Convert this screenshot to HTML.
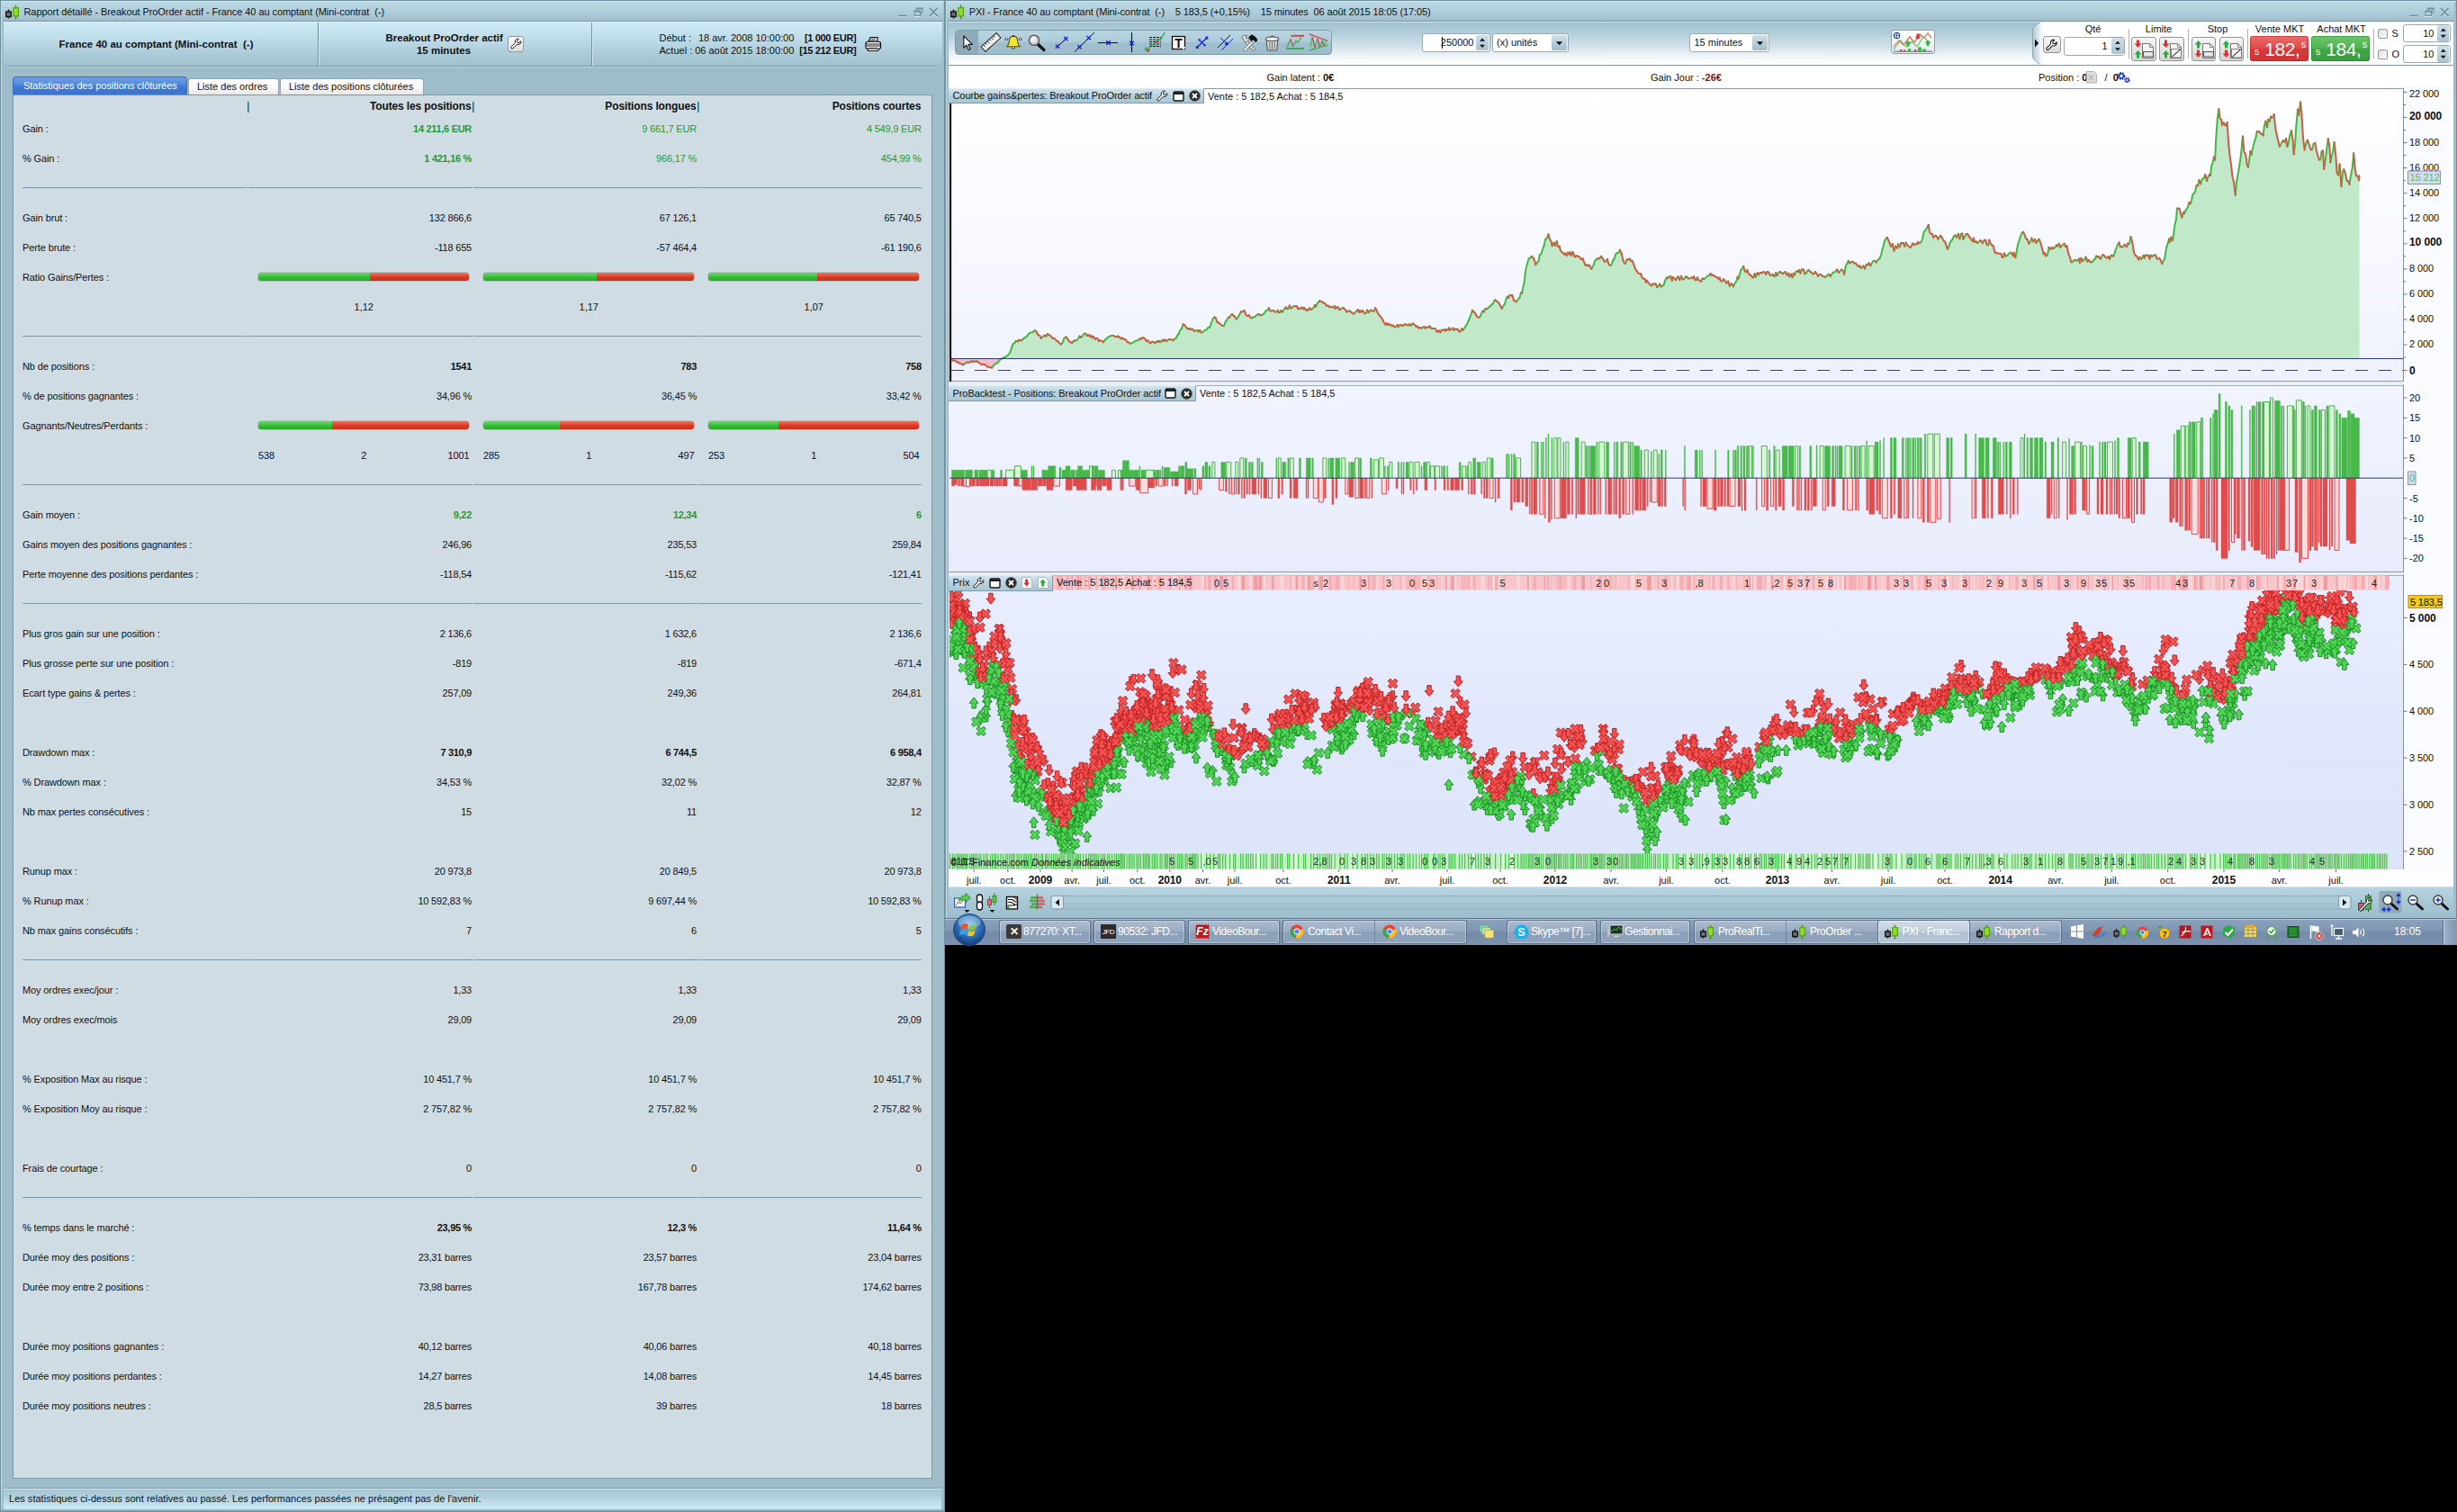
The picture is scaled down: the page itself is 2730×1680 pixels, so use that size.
<!DOCTYPE html>
<html lang="fr"><head><meta charset="utf-8"><title>Rapport détaillé - Breakout ProOrder actif</title>
<style>
html,body{margin:0;padding:0;background:#000;}
#root{position:relative;width:2730px;height:1680px;overflow:hidden;background:#000;font-family:"Liberation Sans",sans-serif;font-size:11px;color:#111;}
#root div,#root svg{position:absolute;}
#root svg{overflow:visible;}
#root svg text{font-family:"Liberation Sans",sans-serif;}
.t{white-space:nowrap;}
</style></head><body><div id="root">
<div style="left:0px;top:0px;width:1050px;height:1680px;background:#9fbccb;"></div>
<div style="left:0px;top:0px;width:1050px;height:1px;background:#71909e;"></div>
<div style="left:0px;top:0px;width:1px;height:1680px;background:#71909e;"></div>
<div style="left:1049px;top:0px;width:1px;height:1680px;background:#6f8d9b;"></div>
<div style="left:1px;top:1px;width:1048px;height:1px;background:#d5e8f0;"></div>
<div style="left:1px;top:1px;width:1px;height:1678px;background:#c2dae5;"></div>
<div style="left:2px;top:2px;width:1046px;height:21px;background:linear-gradient(#bcd8e5,#afccda 55%,#9fbdcb);"></div>
<div style="left:4px;top:23px;width:1043px;height:1px;background:#7997a5;"></div>
<svg style="left:5.5px;top:4.5px" width="18" height="18" viewBox="0 0 18 18"><path d="M3.5 5.5v10" stroke="#111" stroke-width="1.4"/><rect x="0.8" y="8" width="5.4" height="5.6" fill="#6e6e78" stroke="#111" stroke-width="1.4"/><path d="M11.5 0.5v16" stroke="#4c8f12" stroke-width="1.3"/><rect x="8.8" y="3.6" width="5.6" height="9.2" fill="#8fe02b" stroke="#5aa516" stroke-width="1.3"/></svg>
<div class="t" style="top:5.7px;line-height:14px;left:26.5px;letter-spacing:-0.07px;white-space:pre;">Rapport détaillé - Breakout ProOrder actif - France 40 au comptant (Mini-contrat  (-)</div>
<svg style="left:997.5px;top:7.5px" width="48" height="14" viewBox="0 0 48 14"><path d="M0.5 9.5h9" stroke="#e4f1f7" stroke-width="1.2" transform="translate(0,1)"/><path d="M0.5 9.5h9" stroke="#6d8d9c" stroke-width="1.6"/><path d="M20.5 1h6.5v5.5M18 4h6.5v5.5h-6.5z" fill="none" stroke="#e4f1f7" stroke-width="1.2" transform="translate(0,1)"/><path d="M20.5 3.2v-2.2h6.5v5.5h-2M18 4h6.5v5.5h-6.5z M18 5h6.5 M20.5 2h6.5" fill="none" stroke="#6d8d9c" stroke-width="1.2"/><path d="M35 1l8.5 9M43.5 1l-8.5 9" stroke="#e4f1f7" stroke-width="1.4" transform="translate(0,1)"/><path d="M35 1l8.5 9M43.5 1l-8.5 9" stroke="#6d8d9c" stroke-width="1.8"/></svg>
<div style="left:4px;top:24px;width:1043px;height:49.5px;background:linear-gradient(#cfebf8,#c2dfec 30%,#a8c8d6 80%,#a0bfcd);"></div>
<div style="left:4px;top:24px;width:1043px;height:1px;background:#d9f1fb;"></div>
<div style="left:353px;top:25px;width:1px;height:48px;background:#7392a1;"></div>
<div style="left:354px;top:25px;width:1px;height:48px;background:#d2ecf7;"></div>
<div style="left:657px;top:25px;width:1px;height:48px;background:#7392a1;"></div>
<div style="left:658px;top:25px;width:1px;height:48px;background:#d2ecf7;"></div>
<div style="left:7px;top:73px;width:1035px;height:1px;background:#7e9dab;"></div>
<div style="left:7px;top:74px;width:1035px;height:1px;background:#b9d7e3;"></div>
<div class="t" style="top:42.0px;line-height:14px;font-size:11.5px;font-weight:bold;left:-126.5px;width:600px;text-align:center;white-space:pre;">France 40 au comptant (Mini-contrat  (-)</div>
<div class="t" style="top:35.0px;line-height:14px;font-size:11.5px;font-weight:bold;left:193.7px;width:600px;text-align:center;">Breakout ProOrder actif</div>
<div class="t" style="top:49.0px;line-height:14px;font-size:11.5px;font-weight:bold;left:193px;width:600px;text-align:center;">15 minutes</div>
<div style="left:564px;top:39.5px;width:18px;height:18px;background:linear-gradient(#ffffff,#dcdcdc);border:1px solid #8b9aa2;border-radius:3px;box-sizing:border-box;"></div>
<svg style="left:566.5px;top:42px" width="13" height="13" viewBox="0 0 16 16"><path d="M10.2 1.2a4 4 0 0 0-3.4 5.6L1.4 12.2a1.5 1.5 0 0 0 2.2 2.2l5.5-5.4a4 4 0 0 0 5.6-3.5l-0.3-0.9-2.4 2.3-2.2-0.6-0.6-2.2 2.4-2.4z" fill="#fff" stroke="#111" stroke-width="1.2" stroke-linejoin="round"/></svg>
<div class="t" style="top:35.0px;line-height:14px;left:732.5px;">Début :</div>
<div class="t" style="top:35.0px;line-height:14px;right:1847.7px;">18 avr. 2008 10:00:00</div>
<div class="t" style="top:35.0px;line-height:14px;font-weight:bold;right:1778.7px;letter-spacing:-0.35px;">[1 000 EUR]</div>
<div class="t" style="top:49.0px;line-height:14px;left:732.5px;">Actuel :</div>
<div class="t" style="top:49.0px;line-height:14px;right:1847.7px;">06 août 2015 18:00:00</div>
<div class="t" style="top:49.0px;line-height:14px;font-weight:bold;right:1778.7px;letter-spacing:-0.35px;">[15 212 EUR]</div>
<svg style="left:960px;top:40px" width="20" height="18" viewBox="0 0 20 18"><path d="M5.5 6.5l1.2-5h8.6l-1.2 5z" fill="#fff" stroke="#111" stroke-width="1.1"/><path d="M7.5 3h5.5M7 4.8h5.5" stroke="#111" stroke-width="0.8"/><path d="M2 7.2l2-1h12.5l2 1v6l-2.2 1.5H4L2 13.2z" fill="#f2f2f2" stroke="#111" stroke-width="1.2" stroke-linejoin="round"/><path d="M2.2 9h16M2.2 11h16M4.5 13.4h11" stroke="#111" stroke-width="0.9"/><path d="M4.5 14.5l-0.3 2h11.6l0.2-2" fill="#fff" stroke="#111" stroke-width="1"/></svg>
<div style="left:14px;top:85px;width:193.5px;height:21px;background:linear-gradient(#6f9fe6,#4f86dc 45%,#3f78d3 50%,#3b74d0);border-radius:4px 4px 0 0;border:1px solid #3a6cc0;border-bottom:none;box-sizing:border-box;"></div>
<div class="t" style="top:88.0px;line-height:14px;color:#fff;left:26px;letter-spacing:-0.03px;">Statistiques des positions clôturées</div>
<div style="left:208.5px;top:87px;width:101px;height:18.5px;background:linear-gradient(#ffffff,#f8f8f8 50%,#e6e6e6);border-radius:3px 3px 0 0;border:1px solid #93a5ad;border-bottom:none;box-sizing:border-box;"></div>
<div class="t" style="top:89.0px;line-height:14px;left:219px;">Liste des ordres</div>
<div style="left:311px;top:87px;width:159.5px;height:18.5px;background:linear-gradient(#ffffff,#f8f8f8 50%,#e6e6e6);border-radius:3px 3px 0 0;border:1px solid #93a5ad;border-bottom:none;box-sizing:border-box;"></div>
<div class="t" style="top:89.0px;line-height:14px;left:321px;">Liste des positions clôturées</div>
<div style="left:14px;top:105px;width:1022px;height:1538px;background:#cfdce3;border:1px solid #7997a5;box-sizing:border-box;"></div>
<div class="t" style="top:111.3px;line-height:14px;font-size:12px;left:274.2px;">|</div>
<div class="t" style="top:111.3px;line-height:14px;font-size:12px;font-weight:bold;right:2206.5px;letter-spacing:-0.13px;">Toutes les positions</div>
<div class="t" style="top:111.3px;line-height:14px;font-size:12px;left:524.3px;">|</div>
<div class="t" style="top:111.3px;line-height:14px;font-size:12px;font-weight:bold;right:1956.5px;letter-spacing:-0.13px;">Positions longues</div>
<div class="t" style="top:111.3px;line-height:14px;font-size:12px;left:774.3px;">|</div>
<div class="t" style="top:111.3px;line-height:14px;font-size:12px;font-weight:bold;right:1706.8px;letter-spacing:-0.13px;">Positions courtes</div>
<div class="t" style="top:135.9px;line-height:14px;left:25px;letter-spacing:-0.12px;">Gain :</div>
<div class="t" style="top:135.9px;line-height:14px;font-weight:bold;color:#219b34;right:2206px;letter-spacing:-0.3px;">14 211,6 EUR</div>
<div class="t" style="top:135.9px;line-height:14px;color:#219b34;right:1956px;letter-spacing:-0.2px;">9 661,7 EUR</div>
<div class="t" style="top:135.9px;line-height:14px;color:#219b34;right:1706.3px;letter-spacing:-0.2px;">4 549,9 EUR</div>
<div class="t" style="top:168.9px;line-height:14px;left:25px;letter-spacing:-0.12px;">% Gain :</div>
<div class="t" style="top:168.9px;line-height:14px;font-weight:bold;color:#219b34;right:2206px;letter-spacing:-0.3px;">1 421,16 %</div>
<div class="t" style="top:168.9px;line-height:14px;color:#219b34;right:1956px;letter-spacing:-0.2px;">966,17 %</div>
<div class="t" style="top:168.9px;line-height:14px;color:#219b34;right:1706.3px;letter-spacing:-0.2px;">454,99 %</div>
<div class="t" style="top:234.9px;line-height:14px;left:25px;letter-spacing:-0.12px;">Gain brut :</div>
<div class="t" style="top:234.9px;line-height:14px;right:2206px;letter-spacing:-0.2px;">132 866,6</div>
<div class="t" style="top:234.9px;line-height:14px;right:1956px;letter-spacing:-0.2px;">67 126,1</div>
<div class="t" style="top:234.9px;line-height:14px;right:1706.3px;letter-spacing:-0.2px;">65 740,5</div>
<div class="t" style="top:267.9px;line-height:14px;left:25px;letter-spacing:-0.12px;">Perte brute :</div>
<div class="t" style="top:267.9px;line-height:14px;right:2206px;letter-spacing:-0.2px;">-118 655</div>
<div class="t" style="top:267.9px;line-height:14px;right:1956px;letter-spacing:-0.2px;">-57 464,4</div>
<div class="t" style="top:267.9px;line-height:14px;right:1706.3px;letter-spacing:-0.2px;">-61 190,6</div>
<div class="t" style="top:300.9px;line-height:14px;left:25px;letter-spacing:-0.12px;">Ratio Gains/Pertes :</div>
<div class="t" style="top:399.9px;line-height:14px;left:25px;letter-spacing:-0.12px;">Nb de positions :</div>
<div class="t" style="top:399.9px;line-height:14px;font-weight:bold;right:2206px;letter-spacing:-0.3px;">1541</div>
<div class="t" style="top:399.9px;line-height:14px;font-weight:bold;right:1956px;letter-spacing:-0.3px;">783</div>
<div class="t" style="top:399.9px;line-height:14px;font-weight:bold;right:1706.3px;letter-spacing:-0.3px;">758</div>
<div class="t" style="top:432.9px;line-height:14px;left:25px;letter-spacing:-0.12px;">% de positions gagnantes :</div>
<div class="t" style="top:432.9px;line-height:14px;right:2206px;letter-spacing:-0.2px;">34,96 %</div>
<div class="t" style="top:432.9px;line-height:14px;right:1956px;letter-spacing:-0.2px;">36,45 %</div>
<div class="t" style="top:432.9px;line-height:14px;right:1706.3px;letter-spacing:-0.2px;">33,42 %</div>
<div class="t" style="top:465.9px;line-height:14px;left:25px;letter-spacing:-0.12px;">Gagnants/Neutres/Perdants :</div>
<div class="t" style="top:564.9px;line-height:14px;left:25px;letter-spacing:-0.12px;">Gain moyen :</div>
<div class="t" style="top:564.9px;line-height:14px;font-weight:bold;color:#219b34;right:2206px;letter-spacing:-0.3px;">9,22</div>
<div class="t" style="top:564.9px;line-height:14px;font-weight:bold;color:#219b34;right:1956px;letter-spacing:-0.3px;">12,34</div>
<div class="t" style="top:564.9px;line-height:14px;font-weight:bold;color:#219b34;right:1706.3px;letter-spacing:-0.3px;">6</div>
<div class="t" style="top:597.9px;line-height:14px;left:25px;letter-spacing:-0.12px;">Gains moyen des positions gagnantes :</div>
<div class="t" style="top:597.9px;line-height:14px;right:2206px;letter-spacing:-0.2px;">246,96</div>
<div class="t" style="top:597.9px;line-height:14px;right:1956px;letter-spacing:-0.2px;">235,53</div>
<div class="t" style="top:597.9px;line-height:14px;right:1706.3px;letter-spacing:-0.2px;">259,84</div>
<div class="t" style="top:630.9px;line-height:14px;left:25px;letter-spacing:-0.12px;">Perte moyenne des positions perdantes :</div>
<div class="t" style="top:630.9px;line-height:14px;right:2206px;letter-spacing:-0.2px;">-118,54</div>
<div class="t" style="top:630.9px;line-height:14px;right:1956px;letter-spacing:-0.2px;">-115,62</div>
<div class="t" style="top:630.9px;line-height:14px;right:1706.3px;letter-spacing:-0.2px;">-121,41</div>
<div class="t" style="top:696.9px;line-height:14px;left:25px;letter-spacing:-0.12px;">Plus gros gain sur une position :</div>
<div class="t" style="top:696.9px;line-height:14px;right:2206px;letter-spacing:-0.2px;">2 136,6</div>
<div class="t" style="top:696.9px;line-height:14px;right:1956px;letter-spacing:-0.2px;">1 632,6</div>
<div class="t" style="top:696.9px;line-height:14px;right:1706.3px;letter-spacing:-0.2px;">2 136,6</div>
<div class="t" style="top:729.9px;line-height:14px;left:25px;letter-spacing:-0.12px;">Plus grosse perte sur une position :</div>
<div class="t" style="top:729.9px;line-height:14px;right:2206px;letter-spacing:-0.2px;">-819</div>
<div class="t" style="top:729.9px;line-height:14px;right:1956px;letter-spacing:-0.2px;">-819</div>
<div class="t" style="top:729.9px;line-height:14px;right:1706.3px;letter-spacing:-0.2px;">-671,4</div>
<div class="t" style="top:762.9px;line-height:14px;left:25px;letter-spacing:-0.12px;">Ecart type gains &amp; pertes :</div>
<div class="t" style="top:762.9px;line-height:14px;right:2206px;letter-spacing:-0.2px;">257,09</div>
<div class="t" style="top:762.9px;line-height:14px;right:1956px;letter-spacing:-0.2px;">249,36</div>
<div class="t" style="top:762.9px;line-height:14px;right:1706.3px;letter-spacing:-0.2px;">264,81</div>
<div class="t" style="top:828.9px;line-height:14px;left:25px;letter-spacing:-0.12px;">Drawdown max :</div>
<div class="t" style="top:828.9px;line-height:14px;font-weight:bold;right:2206px;letter-spacing:-0.3px;">7 310,9</div>
<div class="t" style="top:828.9px;line-height:14px;font-weight:bold;right:1956px;letter-spacing:-0.3px;">6 744,5</div>
<div class="t" style="top:828.9px;line-height:14px;font-weight:bold;right:1706.3px;letter-spacing:-0.3px;">6 958,4</div>
<div class="t" style="top:861.9px;line-height:14px;left:25px;letter-spacing:-0.12px;">% Drawdown max :</div>
<div class="t" style="top:861.9px;line-height:14px;right:2206px;letter-spacing:-0.2px;">34,53 %</div>
<div class="t" style="top:861.9px;line-height:14px;right:1956px;letter-spacing:-0.2px;">32,02 %</div>
<div class="t" style="top:861.9px;line-height:14px;right:1706.3px;letter-spacing:-0.2px;">32,87 %</div>
<div class="t" style="top:894.9px;line-height:14px;left:25px;letter-spacing:-0.12px;">Nb max pertes consécutives :</div>
<div class="t" style="top:894.9px;line-height:14px;right:2206px;letter-spacing:-0.2px;">15</div>
<div class="t" style="top:894.9px;line-height:14px;right:1956px;letter-spacing:-0.2px;">11</div>
<div class="t" style="top:894.9px;line-height:14px;right:1706.3px;letter-spacing:-0.2px;">12</div>
<div class="t" style="top:960.9px;line-height:14px;left:25px;letter-spacing:-0.12px;">Runup max :</div>
<div class="t" style="top:960.9px;line-height:14px;right:2206px;letter-spacing:-0.2px;">20 973,8</div>
<div class="t" style="top:960.9px;line-height:14px;right:1956px;letter-spacing:-0.2px;">20 849,5</div>
<div class="t" style="top:960.9px;line-height:14px;right:1706.3px;letter-spacing:-0.2px;">20 973,8</div>
<div class="t" style="top:993.9px;line-height:14px;left:25px;letter-spacing:-0.12px;">% Runup max :</div>
<div class="t" style="top:993.9px;line-height:14px;right:2206px;letter-spacing:-0.2px;">10 592,83 %</div>
<div class="t" style="top:993.9px;line-height:14px;right:1956px;letter-spacing:-0.2px;">9 697,44 %</div>
<div class="t" style="top:993.9px;line-height:14px;right:1706.3px;letter-spacing:-0.2px;">10 592,83 %</div>
<div class="t" style="top:1026.9px;line-height:14px;left:25px;letter-spacing:-0.12px;">Nb max gains consécutifs :</div>
<div class="t" style="top:1026.9px;line-height:14px;right:2206px;letter-spacing:-0.2px;">7</div>
<div class="t" style="top:1026.9px;line-height:14px;right:1956px;letter-spacing:-0.2px;">6</div>
<div class="t" style="top:1026.9px;line-height:14px;right:1706.3px;letter-spacing:-0.2px;">5</div>
<div class="t" style="top:1092.9px;line-height:14px;left:25px;letter-spacing:-0.12px;">Moy ordres exec/jour :</div>
<div class="t" style="top:1092.9px;line-height:14px;right:2206px;letter-spacing:-0.2px;">1,33</div>
<div class="t" style="top:1092.9px;line-height:14px;right:1956px;letter-spacing:-0.2px;">1,33</div>
<div class="t" style="top:1092.9px;line-height:14px;right:1706.3px;letter-spacing:-0.2px;">1,33</div>
<div class="t" style="top:1125.9px;line-height:14px;left:25px;letter-spacing:-0.12px;">Moy ordres exec/mois</div>
<div class="t" style="top:1125.9px;line-height:14px;right:2206px;letter-spacing:-0.2px;">29,09</div>
<div class="t" style="top:1125.9px;line-height:14px;right:1956px;letter-spacing:-0.2px;">29,09</div>
<div class="t" style="top:1125.9px;line-height:14px;right:1706.3px;letter-spacing:-0.2px;">29,09</div>
<div class="t" style="top:1191.9px;line-height:14px;left:25px;letter-spacing:-0.12px;">% Exposition Max au risque :</div>
<div class="t" style="top:1191.9px;line-height:14px;right:2206px;letter-spacing:-0.2px;">10 451,7 %</div>
<div class="t" style="top:1191.9px;line-height:14px;right:1956px;letter-spacing:-0.2px;">10 451,7 %</div>
<div class="t" style="top:1191.9px;line-height:14px;right:1706.3px;letter-spacing:-0.2px;">10 451,7 %</div>
<div class="t" style="top:1224.9px;line-height:14px;left:25px;letter-spacing:-0.12px;">% Exposition Moy au risque :</div>
<div class="t" style="top:1224.9px;line-height:14px;right:2206px;letter-spacing:-0.2px;">2 757,82 %</div>
<div class="t" style="top:1224.9px;line-height:14px;right:1956px;letter-spacing:-0.2px;">2 757,82 %</div>
<div class="t" style="top:1224.9px;line-height:14px;right:1706.3px;letter-spacing:-0.2px;">2 757,82 %</div>
<div class="t" style="top:1290.9px;line-height:14px;left:25px;letter-spacing:-0.12px;">Frais de courtage :</div>
<div class="t" style="top:1290.9px;line-height:14px;right:2206px;letter-spacing:-0.2px;">0</div>
<div class="t" style="top:1290.9px;line-height:14px;right:1956px;letter-spacing:-0.2px;">0</div>
<div class="t" style="top:1290.9px;line-height:14px;right:1706.3px;letter-spacing:-0.2px;">0</div>
<div class="t" style="top:1356.9px;line-height:14px;left:25px;letter-spacing:-0.12px;">% temps dans le marché :</div>
<div class="t" style="top:1356.9px;line-height:14px;font-weight:bold;right:2206px;letter-spacing:-0.3px;">23,95 %</div>
<div class="t" style="top:1356.9px;line-height:14px;font-weight:bold;right:1956px;letter-spacing:-0.3px;">12,3 %</div>
<div class="t" style="top:1356.9px;line-height:14px;font-weight:bold;right:1706.3px;letter-spacing:-0.3px;">11,64 %</div>
<div class="t" style="top:1389.9px;line-height:14px;left:25px;letter-spacing:-0.12px;">Durée moy des positions :</div>
<div class="t" style="top:1389.9px;line-height:14px;right:2206px;letter-spacing:-0.2px;">23,31 barres</div>
<div class="t" style="top:1389.9px;line-height:14px;right:1956px;letter-spacing:-0.2px;">23,57 barres</div>
<div class="t" style="top:1389.9px;line-height:14px;right:1706.3px;letter-spacing:-0.2px;">23,04 barres</div>
<div class="t" style="top:1422.9px;line-height:14px;left:25px;letter-spacing:-0.12px;">Durée moy entre 2 positions :</div>
<div class="t" style="top:1422.9px;line-height:14px;right:2206px;letter-spacing:-0.2px;">73,98 barres</div>
<div class="t" style="top:1422.9px;line-height:14px;right:1956px;letter-spacing:-0.2px;">167,78 barres</div>
<div class="t" style="top:1422.9px;line-height:14px;right:1706.3px;letter-spacing:-0.2px;">174,62 barres</div>
<div class="t" style="top:1488.9px;line-height:14px;left:25px;letter-spacing:-0.12px;">Durée moy positions gagnantes :</div>
<div class="t" style="top:1488.9px;line-height:14px;right:2206px;letter-spacing:-0.2px;">40,12 barres</div>
<div class="t" style="top:1488.9px;line-height:14px;right:1956px;letter-spacing:-0.2px;">40,06 barres</div>
<div class="t" style="top:1488.9px;line-height:14px;right:1706.3px;letter-spacing:-0.2px;">40,18 barres</div>
<div class="t" style="top:1521.9px;line-height:14px;left:25px;letter-spacing:-0.12px;">Durée moy positions perdantes :</div>
<div class="t" style="top:1521.9px;line-height:14px;right:2206px;letter-spacing:-0.2px;">14,27 barres</div>
<div class="t" style="top:1521.9px;line-height:14px;right:1956px;letter-spacing:-0.2px;">14,08 barres</div>
<div class="t" style="top:1521.9px;line-height:14px;right:1706.3px;letter-spacing:-0.2px;">14,45 barres</div>
<div class="t" style="top:1554.9px;line-height:14px;left:25px;letter-spacing:-0.12px;">Durée moy positions neutres :</div>
<div class="t" style="top:1554.9px;line-height:14px;right:2206px;letter-spacing:-0.2px;">28,5 barres</div>
<div class="t" style="top:1554.9px;line-height:14px;right:1956px;letter-spacing:-0.2px;">39 barres</div>
<div class="t" style="top:1554.9px;line-height:14px;right:1706.3px;letter-spacing:-0.2px;">18 barres</div>
<div style="left:25px;top:208px;width:249.5px;height:1px;background:#7a98a6;"></div>
<div style="left:275.5px;top:208px;width:249.0px;height:1px;background:#7a98a6;"></div>
<div style="left:525.5px;top:208px;width:249.0px;height:1px;background:#7a98a6;"></div>
<div style="left:775.5px;top:208px;width:248.20000000000005px;height:1px;background:#7a98a6;"></div>
<div style="left:25px;top:373px;width:249.5px;height:1px;background:#7a98a6;"></div>
<div style="left:275.5px;top:373px;width:249.0px;height:1px;background:#7a98a6;"></div>
<div style="left:525.5px;top:373px;width:249.0px;height:1px;background:#7a98a6;"></div>
<div style="left:775.5px;top:373px;width:248.20000000000005px;height:1px;background:#7a98a6;"></div>
<div style="left:25px;top:538px;width:249.5px;height:1px;background:#7a98a6;"></div>
<div style="left:275.5px;top:538px;width:249.0px;height:1px;background:#7a98a6;"></div>
<div style="left:525.5px;top:538px;width:249.0px;height:1px;background:#7a98a6;"></div>
<div style="left:775.5px;top:538px;width:248.20000000000005px;height:1px;background:#7a98a6;"></div>
<div style="left:25px;top:670px;width:249.5px;height:1px;background:#7a98a6;"></div>
<div style="left:275.5px;top:670px;width:249.0px;height:1px;background:#7a98a6;"></div>
<div style="left:525.5px;top:670px;width:249.0px;height:1px;background:#7a98a6;"></div>
<div style="left:775.5px;top:670px;width:248.20000000000005px;height:1px;background:#7a98a6;"></div>
<div style="left:25px;top:1066px;width:249.5px;height:1px;background:#7a98a6;"></div>
<div style="left:275.5px;top:1066px;width:249.0px;height:1px;background:#7a98a6;"></div>
<div style="left:525.5px;top:1066px;width:249.0px;height:1px;background:#7a98a6;"></div>
<div style="left:775.5px;top:1066px;width:248.20000000000005px;height:1px;background:#7a98a6;"></div>
<div style="left:25px;top:1330px;width:249.5px;height:1px;background:#7a98a6;"></div>
<div style="left:275.5px;top:1330px;width:249.0px;height:1px;background:#7a98a6;"></div>
<div style="left:525.5px;top:1330px;width:249.0px;height:1px;background:#7a98a6;"></div>
<div style="left:775.5px;top:1330px;width:248.20000000000005px;height:1px;background:#7a98a6;"></div>
<div style="left:287px;top:303.2px;width:234px;height:8.4px;border-radius:3px;overflow:hidden;background:linear-gradient(90deg,#36c136 123.6px,#e03b23 123.6px);box-shadow:0 0 0 0.5px rgba(60,90,60,.35);"><div style="left:0;top:0;width:234px;height:8.4px;background:linear-gradient(rgba(255,255,255,.28),rgba(255,255,255,.12) 35%,rgba(0,0,0,0) 50%,rgba(0,0,0,.16));"></div></div>
<div style="left:287px;top:468.2px;width:234px;height:8.4px;border-radius:3px;overflow:hidden;background:linear-gradient(90deg,#36c136 81.7px,#e03b23 81.7px);box-shadow:0 0 0 0.5px rgba(60,90,60,.35);"><div style="left:0;top:0;width:234px;height:8.4px;background:linear-gradient(rgba(255,255,255,.28),rgba(255,255,255,.12) 35%,rgba(0,0,0,0) 50%,rgba(0,0,0,.16));"></div></div>
<div style="left:537px;top:303.2px;width:234px;height:8.4px;border-radius:3px;overflow:hidden;background:linear-gradient(90deg,#36c136 126.1px,#e03b23 126.1px);box-shadow:0 0 0 0.5px rgba(60,90,60,.35);"><div style="left:0;top:0;width:234px;height:8.4px;background:linear-gradient(rgba(255,255,255,.28),rgba(255,255,255,.12) 35%,rgba(0,0,0,0) 50%,rgba(0,0,0,.16));"></div></div>
<div style="left:537px;top:468.2px;width:234px;height:8.4px;border-radius:3px;overflow:hidden;background:linear-gradient(90deg,#36c136 85.2px,#e03b23 85.2px);box-shadow:0 0 0 0.5px rgba(60,90,60,.35);"><div style="left:0;top:0;width:234px;height:8.4px;background:linear-gradient(rgba(255,255,255,.28),rgba(255,255,255,.12) 35%,rgba(0,0,0,0) 50%,rgba(0,0,0,.16));"></div></div>
<div style="left:787px;top:303.2px;width:234px;height:8.4px;border-radius:3px;overflow:hidden;background:linear-gradient(90deg,#36c136 121.2px,#e03b23 121.2px);box-shadow:0 0 0 0.5px rgba(60,90,60,.35);"><div style="left:0;top:0;width:234px;height:8.4px;background:linear-gradient(rgba(255,255,255,.28),rgba(255,255,255,.12) 35%,rgba(0,0,0,0) 50%,rgba(0,0,0,.16));"></div></div>
<div style="left:787px;top:468.2px;width:234px;height:8.4px;border-radius:3px;overflow:hidden;background:linear-gradient(90deg,#36c136 78.1px,#e03b23 78.1px);box-shadow:0 0 0 0.5px rgba(60,90,60,.35);"><div style="left:0;top:0;width:234px;height:8.4px;background:linear-gradient(rgba(255,255,255,.28),rgba(255,255,255,.12) 35%,rgba(0,0,0,0) 50%,rgba(0,0,0,.16));"></div></div>
<div class="t" style="top:333.9px;line-height:14px;left:104.30000000000001px;width:600px;text-align:center;">1,12</div>
<div class="t" style="top:333.9px;line-height:14px;left:354.29999999999995px;width:600px;text-align:center;">1,17</div>
<div class="t" style="top:333.9px;line-height:14px;left:604.3px;width:600px;text-align:center;">1,07</div>
<div class="t" style="top:498.9px;line-height:14px;left:287px;letter-spacing:-0.12px;">538</div>
<div class="t" style="top:498.9px;line-height:14px;left:104.30000000000001px;width:600px;text-align:center;">2</div>
<div class="t" style="top:498.9px;line-height:14px;right:2208.5px;letter-spacing:-0.12px;">1001</div>
<div class="t" style="top:498.9px;line-height:14px;left:537px;letter-spacing:-0.12px;">285</div>
<div class="t" style="top:498.9px;line-height:14px;left:354.29999999999995px;width:600px;text-align:center;">1</div>
<div class="t" style="top:498.9px;line-height:14px;right:1958.5px;letter-spacing:-0.12px;">497</div>
<div class="t" style="top:498.9px;line-height:14px;left:787px;letter-spacing:-0.12px;">253</div>
<div class="t" style="top:498.9px;line-height:14px;left:604.3px;width:600px;text-align:center;">1</div>
<div class="t" style="top:498.9px;line-height:14px;right:1708.5px;letter-spacing:-0.12px;">504</div>
<div style="left:4px;top:1654px;width:1042px;height:22.5px;background:linear-gradient(#a5c3d0,#b3d1de 45%,#c4e2ef 80%,#cdebf7);"></div>
<div style="left:4px;top:1653px;width:1042px;height:1px;background:#7e9caa;"></div>
<div style="left:4px;top:1654px;width:1042px;height:1px;background:#cfeaf5;"></div>
<div style="left:1px;top:1677px;width:1048px;height:3px;background:#93b1bf;"></div>
<div style="left:0px;top:1679px;width:1050px;height:1px;background:#6f8d9b;"></div>
<div class="t" style="top:1658.0px;line-height:14px;left:10px;letter-spacing:0.02px;">Les statistiques ci-dessus sont relatives au passé. Les performances passées ne présagent pas de l'avenir.</div>
<div style="left:1050px;top:0px;width:1680px;height:1020px;background:#9fbccb;"></div>
<div style="left:1050px;top:0px;width:1680px;height:1px;background:#71909e;"></div>
<div style="left:1050px;top:0px;width:1px;height:1020px;background:#7b99a7;"></div>
<div style="left:1051px;top:1px;width:1678px;height:1px;background:#d5e8f0;"></div>
<div style="left:1051px;top:1px;width:1px;height:1019px;background:#c2dae5;"></div>
<div style="left:2729px;top:0px;width:1px;height:1020px;background:#6f8d9b;"></div>
<div style="left:1052px;top:2px;width:1675px;height:21px;background:linear-gradient(#bcd8e5,#afccda 55%,#9fbdcb);"></div>
<div style="left:1054px;top:23px;width:1672px;height:1px;background:#7997a5;"></div>
<svg style="left:1055.5px;top:4.5px" width="18" height="18" viewBox="0 0 18 18"><path d="M3.5 5.5v10" stroke="#111" stroke-width="1.4"/><rect x="0.8" y="8" width="5.4" height="5.6" fill="#6e6e78" stroke="#111" stroke-width="1.4"/><path d="M11.5 0.5v16" stroke="#4c8f12" stroke-width="1.3"/><rect x="8.8" y="3.6" width="5.6" height="9.2" fill="#8fe02b" stroke="#5aa516" stroke-width="1.3"/></svg>
<div class="t" style="top:5.7px;line-height:14px;left:1076.7px;white-space:pre;letter-spacing:-0.1px;">PXI - France 40 au comptant (Mini-contrat  (-)    5 183,5 (+0,15%)    15 minutes  06 août 2015 18:05 (17:05)</div>
<svg style="left:2676.5px;top:7.5px" width="48" height="14" viewBox="0 0 48 14"><path d="M0.5 9.5h9" stroke="#e4f1f7" stroke-width="1.2" transform="translate(0,1)"/><path d="M0.5 9.5h9" stroke="#6d8d9c" stroke-width="1.6"/><path d="M20.5 1h6.5v5.5M18 4h6.5v5.5h-6.5z" fill="none" stroke="#e4f1f7" stroke-width="1.2" transform="translate(0,1)"/><path d="M20.5 3.2v-2.2h6.5v5.5h-2M18 4h6.5v5.5h-6.5z M18 5h6.5 M20.5 2h6.5" fill="none" stroke="#6d8d9c" stroke-width="1.2"/><path d="M35 1l8.5 9M43.5 1l-8.5 9" stroke="#e4f1f7" stroke-width="1.4" transform="translate(0,1)"/><path d="M35 1l8.5 9M43.5 1l-8.5 9" stroke="#6d8d9c" stroke-width="1.8"/></svg>
<div style="left:1054px;top:24px;width:1672px;height:48px;background:linear-gradient(#d2eaf4 0,#d2eaf4 1px,#a2c1cf 1px,#b1cdda 25%,#d2e2ea 58%,#f2f6f8 82%,#ffffff);"></div>
<div style="left:1054px;top:71.5px;width:1672px;height:1px;background:#8196a2;"></div>
<div style="left:1060.5px;top:32.5px;width:419px;height:28.5px;box-sizing:border-box;border:1px solid #7f9cab;border-radius:4px;background:linear-gradient(#b9d5e2,#aecbd9 49%,#a2c0cf 50%,#9dbccb);box-shadow:0 1px 0 rgba(255,255,255,.7);"></div>
<div style="left:1062px;top:34px;width:25px;height:25.5px;background:#8ea9b7;border-radius:2px 0 0 2px;"></div>
<svg style="left:0;top:0" width="2730" height="75" viewBox="0 0 2730 75"><path d="M1070.8 39.8v13.4l3.1-3 2.3 5.2 2-0.9-2.3-5.1h4.4z" fill="#fff" stroke="#111" stroke-width="1.1" stroke-linejoin="round"/><g transform="translate(1101 47) rotate(-42)"><rect x="-11.5" y="-3.6" width="23" height="7.2" fill="#ececec" stroke="#3a3a3a" stroke-width="1.1"/><path d="M-8-3.6v3.4M-5-3.6v2.4M-2-3.6v3.4M1-3.6v2.4M4-3.6v3.4M7-3.6v2.4" stroke="#3a3a3a" stroke-width="0.9"/></g><path d="M1126 40.2c-3.4 0-4.6 2.6-4.6 5.4 0 3.2-1 4.6-2.6 6.2h14.4c-1.6-1.6-2.6-3-2.6-6.2 0-2.8-1.2-5.4-4.6-5.4z" fill="#f3e733" stroke="#4a4a12" stroke-width="1.1"/><path d="M1124.6 40.4a1.5 1.5 0 0 1 2.8 0" fill="#222" stroke="#222" stroke-width="0.8"/><path d="M1124.6 52.4v1.6h2.8v-1.6" fill="#f3e733" stroke="#4a4a12" stroke-width="1"/><path d="M1118.3 41.5c-1 1-1.4 2.4-1.3 3.6M1120 42.8c-0.6 0.6-0.9 1.4-0.8 2.2M1133.7 41.5c1 1 1.4 2.4 1.3 3.6M1132 42.8c0.6 0.6 0.9 1.4 0.8 2.2" fill="none" stroke="#222" stroke-width="0.9"/><defs><radialGradient id="mg" cx="35%" cy="35%"><stop offset="0" stop-color="#fff"/><stop offset="1" stop-color="#cfd3d6"/></radialGradient></defs><path d="M1153 49l7 6.5" stroke="#111" stroke-width="3.2" stroke-linecap="round"/><circle cx="1149" cy="44.8" r="5.6" fill="url(#mg)" stroke="#5d5d5d" stroke-width="1.6"/><path d="M1174.5 52l10.5-9.5" stroke="#111" stroke-width="1"/><path d="M1172.8 49.4l4.4 4.4M1177.2 49.4l-4.4 4.4" stroke="#1a1ad0" stroke-width="1.3"/><path d="M1182.1 40.8l4.4 4.4M1186.5 40.8l-4.4 4.4" stroke="#1a1ad0" stroke-width="1.3"/><path d="M1194 57.6l22-21.6" stroke="#111" stroke-width="1"/><path d="M1197.3 50.0l4.4 4.4M1201.7 50.0l-4.4 4.4" stroke="#1a1ad0" stroke-width="1.3"/><path d="M1207.6 40.0l4.4 4.4M1212.0 40.0l-4.4 4.4" stroke="#1a1ad0" stroke-width="1.3"/><path d="M1220 47.5h22" stroke="#111" stroke-width="1"/><path d="M1229.3 45.3l4.4 4.4M1233.7 45.3l-4.4 4.4" stroke="#1a1ad0" stroke-width="1.3"/><path d="M1257.5 36v22" stroke="#111" stroke-width="1.1"/><path d="M1255.3 45.8l4.4 4.4M1259.7 45.8l-4.4 4.4" stroke="#1a1ad0" stroke-width="1.3"/><path d="M1277 41.5h13M1277 44h13M1277 46.5h13M1277 49h13M1277 51.5h13" stroke="#111" stroke-width="1" stroke-dasharray="3 1"/><path d="M1272 55.5l1.5-2.5 2 3 3-5 4.5-2 3-3.5 4.5-3 3.5-6.5" fill="none" stroke="#2da33a" stroke-width="1.3"/><path d="M1273.5 55.5l2 1.5 1.5-2M1284 46l3.5 0.5" fill="none" stroke="#d03030" stroke-width="1.3"/><rect x="1302.5" y="40.5" width="14" height="14" fill="#f4f4f4" stroke="#111" stroke-width="1.3"/><text x="1309.5" y="52.6" font-family="Liberation Serif,serif" font-weight="bold" font-size="14" text-anchor="middle" fill="#111">T</text><path d="M1316.8 52.3l-2.3 2.4" stroke="#fff" stroke-width="1.6"/><path d="M1330.5 52.2l10.2-10M1332.5 44.2l6.2 6.2" stroke="#1a2ad8" stroke-width="1.3"/><path d="M1336.2 45.2l2.3-1.2-1 2.4zM1334.8 49.2l-2.3 1.2 1-2.4z" fill="#1a2ad8"/><rect x="1328.8" y="51" width="3" height="3" fill="#1a2ad8"/><rect x="1339.3" y="40.6" width="3" height="3" fill="#1a2ad8"/><rect x="1331.5" y="43.2" width="2.2" height="2.2" fill="#1a2ad8"/><rect x="1337.5" y="49.2" width="2.2" height="2.2" fill="#1a2ad8"/><path d="M1353 53l14-14" stroke="#111" stroke-width="1"/><path d="M1357 56l13-13" stroke="#1a2ad8" stroke-width="1"/><path d="M1356 42l8 7" stroke="#1a2ad8" stroke-width="1"/><path d="M1364.8 49.8l-3.6-0.6 1.9-2.4z" fill="#1a2ad8" stroke="#1a2ad8"/><path d="M1380 41.5l2.5-2.3 3.2 0.6-2 2.1 1.6 1.7 2.2-1.9 0.4 3-2.4 2.3-2-0.3z" fill="#e8e8e8" stroke="#555" stroke-width="0.9"/><path d="M1385.5 45.5l9.5 9-2 2.2-9.3-9.2z" fill="#d6d6d6" stroke="#666" stroke-width="0.9"/><path d="M1390.5 46l-9.5 9.5 2 1.8 9.5-9.5z" fill="#efefef" stroke="#666" stroke-width="0.9"/><path d="M1388 41l3-2.2 4.6 3.2 1.2 3.2-2 1.2-2-2.6-2.6 1.6z" fill="#111" stroke="#111" stroke-width="1" stroke-linejoin="round"/><path d="M1407 44h13l-1.4 12h-10.2z" fill="#d9d9d9" stroke="#555" stroke-width="1.1"/><ellipse cx="1413.5" cy="43.3" rx="7.2" ry="2.3" fill="#eee" stroke="#555" stroke-width="1.1"/><path d="M1411.5 41.2c0-1.6 4-1.6 4 0" fill="none" stroke="#555" stroke-width="1.1"/><path d="M1410.5 46.5l0.6 8.5M1413.5 46.8v8.4M1416.5 46.5l-0.6 8.5" stroke="#777" stroke-width="1.1"/><path d="M1434.5 39.8h14.5" stroke="#d83a3a" stroke-width="1.8"/><path d="M1429 54h20" stroke="#2fae3d" stroke-width="1.8"/><path d="M1430 52.5l4-9" stroke="#2fae3d" stroke-width="1.1"/><path d="M1434 43.5l2.5 8.5" stroke="#d83a3a" stroke-width="1.1"/><path d="M1436.500 52l3.500-7 2 2.500 4-6" fill="none" stroke="#2fae3d" stroke-width="1.1"/><path d="M1455 38l20 7.500" stroke="#d83a3a" stroke-width="1.6" stroke-dasharray="2.500 0.700"/><path d="M1455 56l20-6" stroke="#2fae3d" stroke-width="1.6" stroke-dasharray="2.500 0.700"/><path d="M1456 52l2-11 3 12 3-10 2.500 9 2.500-7 2 6 2-5" fill="none" stroke="#2fae3d" stroke-width="1"/><path d="M1458 41l3 12M1464 43l2.500 9M1469 45l2 6" fill="none" stroke="#d83a3a" stroke-width="1"/></svg>
<div style="left:1580px;top:37px;width:76px;height:20.5px;box-sizing:border-box;border:1px solid #9aa9b2;border-radius:3px;background:#fff;"></div>
<div class="t" style="top:40.0px;line-height:14px;right:1092.5px;">250000</div>
<div style="left:1602px;top:41px;width:1px;height:13px;background:#111;"></div>
<div style="left:1640px;top:38.5px;width:14px;height:17.5px;background:linear-gradient(#cfe0e9,#a9c3d0);border-radius:2px;"></div><svg style="left:1640px;top:38.5px" width="14" height="17.5" viewBox="0 0 14 17.5"><path d="M4.0 6.65l3-3.2 3 3.200zM4.0 10.85l3 3.200 3-3.200z" fill="#111"/></svg>
<div style="left:1658px;top:37px;width:84.5px;height:20.5px;box-sizing:border-box;border:1px solid #9aa9b2;border-radius:3px;background:#fff;"></div>
<div class="t" style="top:40.0px;line-height:14px;left:1663px;">(x) unités</div>
<div style="left:1724px;top:38.5px;width:17px;height:17.5px;background:linear-gradient(#cfe0e9,#9fbccb);border-radius:2px;"></div><svg style="left:1724px;top:38.5px" width="17" height="17.5" viewBox="0 0 17 17.5"><path d="M4.9 7.15h7.2l-3.600 4z" fill="#111"/></svg>
<div style="left:1877px;top:37px;width:88.5px;height:20.5px;box-sizing:border-box;border:1px solid #9aa9b2;border-radius:3px;background:#fff;"></div>
<div class="t" style="top:40.0px;line-height:14px;left:1882.5px;">15 minutes</div>
<div style="left:1947px;top:38.5px;width:17px;height:17.5px;background:linear-gradient(#cfe0e9,#9fbccb);border-radius:2px;"></div><svg style="left:1947px;top:38.5px" width="17" height="17.5" viewBox="0 0 17 17.5"><path d="M4.9 7.15h7.2l-3.600 4z" fill="#111"/></svg>
<div style="left:2100.5px;top:32.5px;width:49px;height:27px;box-sizing:border-box;border:1px solid #8fa3ae;border-radius:3px;background:linear-gradient(#ffffff,#e3e9ed);"></div><svg style="left:2100.5px;top:32.5px" width="49" height="27" viewBox="0 0 49 27"><path d="M3 19l6-7 5 5 7-9 5 6 6-9 5 4 4-5 4 5" fill="none" stroke="#dd5a3a" stroke-width="1.1"/><path d="M3 22l8-10 6 7 6-6 6 6 7-11 8 7" fill="none" stroke="#5fbf5a" stroke-width="1.1"/><circle cx="6.500" cy="6.500" r="3.200" fill="#fff" stroke="#2a4bb0" stroke-width="1.2"/><path d="M6.500 3.500v6M3.500 6.500h6" stroke="#2a4bb0" stroke-width="0.8"/><path d="M28.500 4.500h3v3h1.800l-3.300 3.500-3.300-3.500h1.800z" fill="#e03030"/><path d="M17.500 18.500h3v-3h1.800l-3.300-3.500-3.300 3.500h1.800z" fill="#2fb040"/><path d="M39.500 18h3v-3h1.800l-3.300-3.500-3.300 3.500h1.800z" fill="#2fb040"/><path d="M3 24.200h43" stroke="#5a4fb0" stroke-width="1"/><path d="M10 24v-2h2.500v2zM14 24v-1.400h2.500v1.400zM26 24v-2h2.500v2z" fill="#d83a4a"/><path d="M19 24v-3h3v3zM30 24v-4.500h4v4.500zM35 24v-2.500h4v2.500z" fill="#3fb54a"/></svg>
<svg style="left:2256px;top:24px" width="472" height="48" viewBox="2256 24 472 48"><defs><linearGradient id="opg" x1="0" y1="0" x2="1" y2="0"><stop offset="0" stop-color="#aec6d2"/><stop offset="0.024" stop-color="#ffffff"/><stop offset="1" stop-color="#ffffff"/></linearGradient></defs><path d="M2267 24.500C2263 28 2258.500 28.500 2258.500 35V61C2258.500 67.500 2263 68 2267 71.500H2726V24.500z" fill="url(#opg)"/><path d="M2267 24.500C2263 28 2258.500 28.500 2258.500 35V61C2258.500 67.500 2263 68 2267 71.500" fill="none" stroke="#8ea5b1" stroke-width="1"/><path d="M2261 43.500l4.200 4.500-4.200 4.500z" fill="#111"/></svg><div style="left:2270px;top:40px;width:19.5px;height:18.5px;box-sizing:border-box;border:1px solid #8d969c;border-radius:3px;background:linear-gradient(#fdfdfd,#d9d9d9);"></div><svg style="left:2273px;top:42.5px" width="13.5" height="13.5" viewBox="0 0 16 16"><path d="M10.2 1.2a4 4 0 0 0-3.4 5.6L1.4 12.2a1.5 1.5 0 0 0 2.2 2.2l5.5-5.4a4 4 0 0 0 5.6-3.5l-0.3-0.9-2.4 2.3-2.2-0.6-0.6-2.2 2.4-2.4z" fill="#fff" stroke="#111" stroke-width="1.2" stroke-linejoin="round"/></svg><div class="t" style="top:24.9px;line-height:14px;left:2025.5px;width:600px;text-align:center;">Qté</div><div style="left:2292.5px;top:40.5px;width:68.5px;height:21px;box-sizing:border-box;border:1px solid #9aa9b2;border-radius:3px;background:#fff;"></div><div class="t" style="top:44.0px;line-height:14px;right:388.5px;">1</div><div style="left:2345.5px;top:42px;width:14px;height:18px;background:linear-gradient(#cfe0e9,#a9c3d0);border-radius:2px;"></div><svg style="left:2345.5px;top:42px" width="14" height="18" viewBox="0 0 14 18"><path d="M4.0 6.84l3-3.2 3 3.200zM4.0 11.16l3 3.200 3-3.200z" fill="#111"/></svg><div style="left:2364.5px;top:32px;width:1px;height:33px;background:#a9b4ba;"></div><div style="left:2430.5px;top:32px;width:1px;height:33px;background:#a9b4ba;"></div><div style="left:2496.5px;top:32px;width:1px;height:33px;background:#a9b4ba;"></div><div style="left:2637px;top:32px;width:1px;height:33px;background:#a9b4ba;"></div><div class="t" style="top:24.9px;line-height:14px;left:2098.5px;width:600px;text-align:center;">Limite</div><div style="left:2368px;top:40.5px;width:27.5px;height:27px;box-sizing:border-box;border:1px solid #8d969c;border-radius:3px;background:linear-gradient(#f6f6f6,#d6d6d6);"></div><svg style="left:2368px;top:40.5px" width="28" height="27" viewBox="0 0 28 27"><path d="M12.500 7.500h8l4 4v12h-12z" fill="#f4f4f4" stroke="#777" stroke-width="1"/><path d="M20.500 7.500v4h4" fill="none" stroke="#777" stroke-width="0.9"/><path d="M13.500 16.500h11v5.500h-11z" fill="#e6e6e6" stroke="#555" stroke-width="1.1"/><path d="M6.0 3.5h3v4h2.400l-3.900 4.500-3.900-4.500h2.400z" fill="#e03030"/><path d="M6.0 23.5h3v-4h2.400l-3.900-4.500-3.900 4.500h2.400z" fill="#21b03a"/></svg><div style="left:2399px;top:40.5px;width:27.5px;height:27px;box-sizing:border-box;border:1px solid #8d969c;border-radius:3px;background:linear-gradient(#f6f6f6,#d6d6d6);"></div><svg style="left:2399px;top:40.5px" width="28" height="27" viewBox="0 0 28 27"><path d="M12.500 7.500h8l4 4v12h-12z" fill="#f4f4f4" stroke="#777" stroke-width="1"/><path d="M20.500 7.500v4h4" fill="none" stroke="#777" stroke-width="0.9"/><path d="M14 22.500l10-9" stroke="#555" stroke-width="1.1"/><path d="M13.500 13.500h11v9.500h-11z" fill="none" stroke="#777" stroke-width="0.9"/><path d="M6.0 3.5h3v4h2.400l-3.900 4.500-3.900-4.500h2.400z" fill="#e03030"/><path d="M6.0 23.5h3v-4h2.400l-3.900-4.500-3.900 4.500h2.400z" fill="#21b03a"/></svg><div class="t" style="top:24.9px;line-height:14px;left:2164px;width:600px;text-align:center;">Stop</div><div style="left:2434.5px;top:40.5px;width:27.5px;height:27px;box-sizing:border-box;border:1px solid #8d969c;border-radius:3px;background:linear-gradient(#f6f6f6,#d6d6d6);"></div><svg style="left:2434.5px;top:40.5px" width="28" height="27" viewBox="0 0 28 27"><path d="M12.500 7.500h8l4 4v12h-12z" fill="#f4f4f4" stroke="#777" stroke-width="1"/><path d="M20.500 7.500v4h4" fill="none" stroke="#777" stroke-width="0.9"/><path d="M13.500 16.500h11v5.500h-11z" fill="#e6e6e6" stroke="#555" stroke-width="1.1"/><path d="M6.0 12.5h3v-4h2.400l-3.900-4.500-3.900 4.500h2.400z" fill="#21b03a"/><path d="M6.0 14.5h3v4h2.400l-3.900 4.500-3.900-4.500h2.400z" fill="#e03030"/></svg><div style="left:2465.5px;top:40.5px;width:27.5px;height:27px;box-sizing:border-box;border:1px solid #8d969c;border-radius:3px;background:linear-gradient(#f6f6f6,#d6d6d6);"></div><svg style="left:2465.5px;top:40.5px" width="28" height="27" viewBox="0 0 28 27"><path d="M12.500 7.500h8l4 4v12h-12z" fill="#f4f4f4" stroke="#777" stroke-width="1"/><path d="M20.500 7.500v4h4" fill="none" stroke="#777" stroke-width="0.9"/><path d="M14 22.500l10-9" stroke="#555" stroke-width="1.1"/><path d="M13.500 13.500h11v9.500h-11z" fill="none" stroke="#777" stroke-width="0.9"/><path d="M6.0 12.5h3v-4h2.400l-3.900-4.500-3.900 4.500h2.400z" fill="#21b03a"/><path d="M6.0 14.5h3v4h2.400l-3.900 4.500-3.900-4.500h2.400z" fill="#e03030"/></svg><div class="t" style="top:24.9px;line-height:14px;left:2233px;width:600px;text-align:center;">Vente MKT</div><div style="left:2500px;top:40px;width:65px;height:27.5px;border-radius:3px;background:linear-gradient(#ec6a6a,#e24a4a 48%,#d63a3a 52%,#cf3535);box-shadow:inset 0 0 0 1px rgba(150,30,30,.45);"></div><div class="t" style="top:51.2px;line-height:14px;font-size:9.5px;color:#fff;left:2505px;">5</div><div class="t" style="top:42.7px;line-height:24px;font-size:21px;color:#fff;right:174.5px;letter-spacing:-0.4px;">182,</div><div class="t" style="top:42.7px;line-height:14px;font-size:9.5px;color:#fff;left:2557px;">5</div><div class="t" style="top:24.9px;line-height:14px;left:2301.5px;width:600px;text-align:center;">Achat MKT</div><div style="left:2568px;top:40px;width:65px;height:27.5px;border-radius:3px;background:linear-gradient(#6cc56c,#4fb44f 48%,#3fa545 52%,#3a9f40);box-shadow:inset 0 0 0 1px rgba(30,110,40,.45);"></div><div class="t" style="top:51.2px;line-height:14px;font-size:9.5px;color:#fff;left:2573px;">5</div><div class="t" style="top:42.7px;line-height:24px;font-size:21px;color:#fff;right:106.5px;letter-spacing:-0.4px;">184,</div><div class="t" style="top:42.7px;line-height:14px;font-size:9.5px;color:#fff;left:2625px;">5</div><div style="left:2642px;top:32.0px;width:11px;height:11px;box-sizing:border-box;border:1px solid #8e9aa2;border-radius:2px;background:linear-gradient(135deg,#dcdcdc,#ffffff);"></div><div class="t" style="top:30.2px;line-height:14px;left:2657.5px;">S</div><div style="left:2642px;top:55.0px;width:11px;height:11px;box-sizing:border-box;border:1px solid #8e9aa2;border-radius:2px;background:linear-gradient(135deg,#dcdcdc,#ffffff);"></div><div class="t" style="top:53.2px;line-height:14px;left:2657.5px;">O</div><div style="left:2670px;top:26.5px;width:52.5px;height:20.5px;box-sizing:border-box;border:1px solid #9aa9b2;border-radius:3px;background:#fff;"></div><div class="t" style="top:29.7px;line-height:14px;right:25.5px;">10</div><div style="left:2707.5px;top:28.0px;width:13.5px;height:17.5px;background:linear-gradient(#cfe0e9,#a9c3d0);border-radius:2px;"></div><svg style="left:2707.5px;top:28.0px" width="13.5" height="17.5" viewBox="0 0 13.5 17.5"><path d="M3.75 6.65l3-3.2 3 3.200zM3.75 10.85l3 3.200 3-3.200z" fill="#111"/></svg><div style="left:2670px;top:49.5px;width:52.5px;height:20.5px;box-sizing:border-box;border:1px solid #9aa9b2;border-radius:3px;background:#fff;"></div><div class="t" style="top:52.7px;line-height:14px;right:25.5px;">10</div><div style="left:2707.5px;top:51.0px;width:13.5px;height:17.5px;background:linear-gradient(#cfe0e9,#a9c3d0);border-radius:2px;"></div><svg style="left:2707.5px;top:51.0px" width="13.5" height="17.5" viewBox="0 0 13.5 17.5"><path d="M3.75 6.65l3-3.2 3 3.200zM3.75 10.85l3 3.200 3-3.200z" fill="#111"/></svg>
<div style="left:1054px;top:72.5px;width:1672px;height:25px;background:#fff;"></div>
<div class="t" style="top:78.7px;line-height:14px;left:1407.5px;">Gain latent : <b>0€</b></div>
<div class="t" style="top:78.7px;line-height:14px;left:1834px;">Gain Jour : <b style="color:#8c1010">-26€</b></div>
<div class="t" style="top:78.7px;line-height:14px;left:2265px;">Position : <b>0</b></div>
<div class="t" style="top:78.7px;line-height:14px;left:2338.5px;">/ <b>&nbsp;0</b></div>
<svg style="left:2318px;top:78px" width="52" height="16" viewBox="0 0 52 16"><path d="M0.500 1.500h8l3 3v9.500h-11z" fill="#ddd" stroke="#aaa" stroke-width="0.9"/><path d="M3 5l5 6M8 5l-5 6" stroke="#bbb" stroke-width="1.6"/><circle cx="39" cy="6.500" r="3.200" fill="none" stroke="#1f3fa8" stroke-width="2.400" stroke-dasharray="1.700 0.900"/><circle cx="39" cy="6.500" r="2.300" fill="none" stroke="#1f3fa8" stroke-width="1.300"/><circle cx="45.500" cy="11" r="2.300" fill="none" stroke="#1f3fa8" stroke-width="2" stroke-dasharray="1.300 0.800"/><circle cx="45.500" cy="11" r="1.600" fill="none" stroke="#1f3fa8" stroke-width="1"/></svg>
<div style="left:1054px;top:97px;width:1672px;height:888px;background:#fbfbff;"></div>
<div style="left:1054px;top:97.5px;width:1616.5px;height:326.5px;background:linear-gradient(#ffffff,#f7f8ff 60%,#eef1fd);border-top:1px solid #8d9aa6;border-bottom:1px solid #8d9aa6;box-sizing:border-box;"></div>
<div style="left:1054px;top:427.5px;width:1616.5px;height:208px;background:linear-gradient(#f1f4ff,#e8ecfc);border-top:1px solid #a3adb8;border-bottom:1px solid #8d9aa6;box-sizing:border-box;"></div>
<div style="left:1054px;top:638.5px;width:1616.5px;height:327px;background:linear-gradient(#e9eeff,#e2e8fb 50%,#dde4fa);border-top:1px solid #a3adb8;box-sizing:border-box;"></div>
<div style="left:1054px;top:424px;width:1672px;height:3.5px;background:#e8f0f6;"></div>
<div style="left:1054px;top:635.5px;width:1672px;height:3px;background:#e8f0f6;"></div>
<div style="left:2670.5px;top:97px;width:55.5px;height:868.5px;background:#fafbff;"></div>
<div style="left:1054px;top:965.5px;width:1672px;height:19.5px;background:#fdfdff;"></div>
<svg style="left:0;top:0" width="2730" height="1020" viewBox="0 0 2730 1020"><defs><clipPath id="cpA"><rect x="1050" y="90" width="1700" height="308.5"/></clipPath><clipPath id="cpB"><rect x="1050" y="398.5" width="1700" height="40"/></clipPath></defs><path d="M1056.2 398.5L1056.2 399.2L1057.4 400.3L1058.4 400.6L1059.8 400.3L1061.2 400.9L1062.6 401.6L1063.7 402.8L1065.4 402.7L1066.6 403.9L1068.5 404.3L1069.8 405.3L1070.9 405.3L1072.1 403.6L1073.3 403.5L1075 402.6L1076.5 402.9L1077.8 402.3L1078.9 401.3L1080.1 402.2L1081.5 401.4L1083 401.4L1084.3 401.8L1085.9 401.4L1087.4 402.7L1089.2 404L1090.5 405.1L1091.6 404.7L1093.2 405.1L1094.7 405.3L1096.3 407.1L1097.8 407.7L1099.1 407.7L1100.6 407.9L1102 408.6L1103.9 406.4L1105.5 404.3L1107.1 403.9L1109 402.7L1110.3 400.9L1111.9 399L1113.3 398.4L1114.4 397.7L1116.1 396.9L1117.3 396.8L1119.1 395.3L1120.5 394L1122.3 391.6L1124.1 386.4L1125.4 382.3L1127.2 381.3L1128.4 379.1L1129.6 378.9L1131 379.5L1132.2 377.7L1133.6 378L1135.1 378.5L1136.8 376.3L1138.3 375.4L1139.4 375L1141.1 373.4L1142.8 371.2L1144.1 370L1145.7 369.4L1146.8 369.3L1147.9 369.1L1149 367.6L1150.1 367.3L1151.4 368.3L1153.2 372.1L1154.3 372.3L1155.7 373.6L1156.8 375.8L1158.7 374.5L1160.1 372.8L1161.2 372.9L1162.4 373.8L1163.6 371.2L1165.4 372L1166.6 372.5L1167.6 373.4L1169.5 376L1171.1 375.9L1172.4 376.8L1174.1 378.9L1175.8 379.4L1177 381.3L1178.9 382.5L1180.6 381L1182.3 375.9L1183.8 374.6L1184.8 374.6L1186 376.1L1187.7 379.2L1189.1 379.9L1191 381.1L1192.3 379.5L1193.5 378.5L1194.7 378.7L1196.5 377.9L1197.9 376.3L1199.6 373.6L1201.2 374.8L1202.9 373.3L1204.4 370.8L1206.1 370.5L1207.8 373L1209.2 372.1L1211 373.8L1212.2 372.7L1213.3 375.2L1215 373.9L1216.8 376.9L1218.4 376.1L1219.8 376.3L1220.9 379L1222.4 378.4L1224.3 378.7L1226.1 380.1L1227.3 378.2L1228.5 377.1L1230.1 375.8L1231.4 374.4L1233.2 373.6L1234.7 373.1L1236.5 372.8L1238.3 373.6L1239.8 374.2L1240.8 374.4L1242 373.5L1243.7 374.3L1245.1 376.1L1246.6 375.4L1248.1 376.7L1249.8 376.7L1251.3 378L1252.5 380.1L1254 380.2L1255.7 381.7L1257.1 381.6L1258.5 380.9L1260.2 379.7L1261.6 378.8L1263.5 378.2L1265.3 377.9L1266.5 376.2L1268.3 376.4L1269.5 375.1L1270.9 375.7L1272.1 376.4L1273.7 379L1275.5 378.3L1277.1 380.3L1278.3 381.4L1280.1 379.7L1282 380L1283.4 381.4L1285.2 379.3L1286.6 379.9L1287.9 378.9L1289.2 379.9L1290.2 379.3L1291.6 377.7L1292.9 379L1294.3 377.4L1296.2 379.1L1298.1 377.2L1299.3 376.9L1301 377.2L1302.2 377.4L1304 378.1L1305.2 376.2L1307 375.6L1308.7 371.5L1309.7 371.4L1311.1 367.1L1312.9 365.2L1314.7 360.2L1316.4 361.4L1318.2 364L1319.5 365.2L1321.4 365.1L1322.5 366.3L1323.7 365.5L1324.8 365.5L1326 366.5L1327.3 368L1328.5 367.4L1329.7 367.1L1330.7 367L1331.7 368.5L1333.2 367.1L1334.7 369.4L1335.8 369.1L1337.1 368.3L1338.9 366.8L1340.4 366.5L1342.2 364.1L1344 363.9L1345.6 359.8L1346.9 355.9L1348 353.8L1349.7 352.4L1350.8 353.3L1352.6 358.3L1354.2 358.4L1355.4 359.7L1356.8 360.8L1358.2 362.1L1360.1 361.9L1361.6 357.5L1363.4 355.3L1364.7 352.8L1366.1 352.8L1367.5 350.2L1369 349.2L1370.2 350.5L1371.6 351.4L1372.6 353.1L1373.8 354.4L1375.3 352.7L1376.9 350.2L1378.7 346.4L1380 346.6L1381.1 345.7L1382.7 345.1L1384.4 350.1L1386 351L1387.7 350.4L1389.2 352.8L1391 353.4L1392.7 352.2L1394.5 352.1L1396.1 350.1L1397.2 349.5L1398.5 349.1L1400.2 350.2L1401.8 350.1L1403.4 348.8L1404.4 348.7L1406.1 345.8L1407.6 344.7L1408.6 344.5L1409.9 342.3L1411.1 345.1L1412.3 345.4L1414.2 345L1415.5 345.3L1417.1 346.7L1418.7 346.5L1419.7 344.9L1421 347.3L1422.2 346.9L1423.3 345.2L1424.5 346.7L1426.1 345L1427.4 343L1428.8 341.3L1429.9 342.9L1431.1 343.2L1432.9 339.5L1434.3 342.6L1436.2 341.2L1437.5 340.3L1439.3 340.3L1440.8 340L1442.3 343.1L1443.4 342.6L1444.9 343.1L1446.5 341.4L1448.3 343.3L1449.3 342L1450.8 344.5L1452.1 344L1453.4 345L1455.1 342.3L1456.8 344L1457.9 343.4L1459.5 342L1460.8 339L1462.2 340.6L1463.7 337.1L1465.1 335.8L1466.1 334.4L1467.9 335L1469.7 335.6L1471 337.1L1472.1 337L1474 339.8L1475.7 339.5L1477.5 341.2L1479 340.8L1480.1 341.1L1481.5 341.6L1483.1 340.2L1484.1 343L1485.2 341.5L1486.5 341.1L1488.2 344.1L1489.4 343.2L1490.7 343.1L1492.1 342L1493.2 342.5L1495 344.4L1496.2 346.5L1498.1 345.7L1499.2 345.3L1500.3 346.3L1501.4 346.5L1502.6 348.2L1504.4 348.6L1505.8 346.7L1507.3 345.8L1508.6 344L1509.8 346.8L1510.9 345.1L1512.5 346.9L1513.7 345L1514.9 345.9L1516.3 348.3L1518.1 347.9L1519.1 344.5L1520.8 347.2L1522.2 345.5L1523.2 344.5L1525 345.7L1526.8 345.8L1528 342.3L1529.1 343.5L1530.8 347.9L1532.4 349.8L1534.1 352.3L1535.6 353.8L1537.3 357.7L1539.1 360.5L1540.4 359.1L1541.6 361L1543.3 359.7L1544.3 361.3L1545.8 361.2L1547 362.2L1548.1 361.5L1549.5 363.5L1551 363.1L1552.5 361L1553.7 363.2L1555.3 361.1L1556.3 361.6L1558 361.2L1559.2 361.9L1561 360.2L1562.1 360.4L1563.4 361.2L1564.6 361.4L1566.3 360.2L1567.5 361.5L1568.7 360.8L1569.9 359.4L1571.6 360.8L1573.5 362.7L1574.7 362.5L1576 364.5L1577.9 363.8L1579.2 364.7L1581.1 363.7L1582.2 362.9L1583.5 364.7L1585.3 363.4L1587.2 363.9L1588.5 362.3L1590.3 364.9L1591.4 365.1L1592.7 364.9L1594 364.9L1595 365.6L1596.3 368.2L1597.4 368.6L1598.6 367.3L1600.4 369.2L1601.8 366.6L1603.2 367.1L1605 366L1606.3 367.7L1607.4 366L1609.1 366.7L1610.1 364.3L1611.2 366.7L1612.4 366L1614.2 364.5L1615.5 366.8L1617 365.4L1618.7 366.2L1619.9 365.8L1621.6 368.5L1623.2 367.8L1624.2 365.2L1625.6 366.7L1627.5 364L1628.7 362L1630.2 360.2L1631.3 357.1L1633 353.4L1634.7 348.7L1636 344.7L1637.3 346.8L1638.4 346.8L1640.1 350.3L1641.1 351.8L1642.6 352.7L1644.5 352.1L1646.4 347.4L1647.5 345.6L1648.9 346.4L1650.3 343.2L1651.7 343.3L1653.3 342.3L1655 340.5L1656.2 340.2L1657.4 338L1658.8 337.7L1659.9 334.8L1661.2 333.4L1663 334.6L1664.2 335.3L1666.1 337.8L1667.3 340.3L1668.9 342.8L1670 340.1L1671.8 338.3L1673.6 331.7L1674.9 329.6L1676 331L1677.5 327.9L1678.9 328.2L1680.3 328L1682 333.9L1683.1 334.3L1684.6 335.5L1686 333.7L1687.2 331.8L1688.7 330.4L1689.9 325.2L1691.2 325.6L1692.3 319.6L1693.5 314.5L1695 301.4L1696.1 296.1L1697.6 290.8L1698.7 286.9L1700.3 286.7L1701.6 284.9L1703.4 286.2L1704.9 289L1706.3 294.1L1708.2 291.4L1709.4 290.7L1710.6 283.8L1712.4 282L1714.1 276.8L1715.9 271.8L1717.1 265.4L1718.6 265L1720.4 260.3L1721.9 265.8L1723.4 267.8L1724.6 273.1L1726.5 269.6L1727.9 273L1729.8 267.9L1730.9 274L1732.8 273.8L1733.8 278.1L1735.2 279.8L1736.7 281.4L1737.9 282.6L1739.1 281.3L1740.8 284L1742 280.5L1743.4 282.4L1744.7 280.2L1745.9 283.9L1747.7 280.2L1749.2 284.6L1750.3 285.3L1751.4 284L1752.9 284.8L1754.2 284.9L1755.7 286.6L1757.3 288.3L1758.7 287.4L1760.2 291.7L1761.4 294.4L1763.1 294.3L1764.3 295.5L1765.4 294.6L1766.8 295.8L1768.2 298.8L1769.2 297.2L1770.3 295.4L1772 290.5L1773 288.4L1774.4 288.3L1775.5 287L1777.4 287.2L1779.1 284.9L1781 287.5L1782.9 290.8L1784 290.8L1785.9 288L1787.2 292.9L1788.3 294.6L1789.6 295L1790.7 293.6L1792.5 288.4L1793.8 287.7L1795.1 282.6L1796.2 281.3L1798.1 281.3L1799.9 277.9L1801.6 281.2L1803 287.4L1804.4 291.5L1805.9 293L1807.7 288.3L1809.6 288.5L1810.9 287.5L1812.2 290.1L1813.7 289.8L1815.4 293.9L1816.5 297.7L1817.6 300L1818.8 301.3L1820.7 304L1822.3 304.4L1823.3 304.2L1824.4 308.5L1825.8 309.6L1827.6 309.8L1828.8 313.6L1829.8 311.6L1831.1 313.6L1832.5 315.2L1834 317.1L1835.2 317.4L1836.6 315.2L1838.4 315.9L1839.6 315.3L1841.2 319.2L1842.9 317.3L1844.1 315.6L1845.7 318.4L1847 317.4L1848.4 317.1L1850.1 311.7L1851.9 308.4L1853.3 309.1L1854.6 307.3L1856.3 307.1L1857.8 311.7L1858.9 308L1860.4 309.6L1862 311.1L1863.2 308.6L1864.4 307.3L1866.2 310.9L1867.9 306.9L1869.6 310.5L1871.1 310.3L1872.5 307.6L1873.6 307.5L1874.6 307.9L1876.3 309.4L1878 309.2L1879.3 308.3L1880.7 309.3L1882.1 307.2L1883.7 311.2L1884.9 311.2L1885.9 308.4L1887.1 311.2L1889 311.9L1890.3 313L1891.6 309.4L1893.4 310L1895 309L1896.9 306.6L1898.7 306.5L1900.4 304L1902.1 306L1903.4 305.5L1904.9 306.4L1906.7 308L1907.8 308.1L1909.6 309.8L1910.7 308.6L1911.8 312.1L1913.3 312.6L1915 310L1916.5 311.9L1918.3 314.7L1920.1 312.4L1921.8 317.8L1923.7 315.4L1924.9 316.3L1925.9 318.4L1927.6 314.8L1929.4 312.2L1930.6 307.7L1931.7 309.4L1932.9 304.7L1934.3 300L1935.5 298.7L1937.2 295.8L1938.5 300.8L1939.9 302.2L1941.5 300.1L1942.8 304.1L1944.5 305.4L1946.2 306.6L1947.4 308.4L1948.4 308.3L1949.6 304.1L1950.8 307.6L1952.7 303.1L1954.1 305.1L1955.8 302.9L1957.3 303.3L1959 302.2L1960.9 302.4L1962.1 304.8L1963.5 302.1L1965.1 302.2L1966.8 305.8L1968.5 305.7L1969.8 304.8L1971.2 307.1L1972.2 306.8L1973.3 303L1974.5 306.2L1976 303.2L1977.8 301.9L1979.2 303.1L1980.8 304.1L1982.4 302.7L1983.7 302.2L1985.5 305.5L1987.2 303.6L1988.5 307.3L1990.1 304.6L1991.5 308.2L1992.7 303.8L1994 305.6L1995.7 301.6L1996.9 301.3L1998.2 301.8L1999.3 300L2000.5 303.6L2002.1 299.2L2004 299.4L2005.3 304.3L2007.1 303.2L2008.5 300.6L2010 300.3L2011.2 302L2012.2 302.3L2014 304.2L2015.4 304.3L2016.8 302.1L2018.4 303.8L2020 306.7L2021.4 305.3L2023.1 304.8L2024.3 306.5L2026.1 307.1L2027.7 307.8L2029.3 307L2030.7 305.5L2032.3 304.7L2033.7 307L2035.3 304.8L2036.6 302.7L2038 302.5L2039.3 301.8L2041.2 299.5L2042.8 302.9L2044.1 301.7L2046 299.6L2047.5 300.5L2049.2 304.9L2050.6 296.3L2052.2 292.9L2053.8 289.9L2055.4 292.5L2056.8 290.9L2058.7 290.7L2060.3 292.6L2062 292.5L2063.9 295.3L2064.9 295.7L2066.3 295.4L2067.7 297.7L2069.3 296.6L2070.5 295.4L2072.2 298.5L2073.7 294L2075.4 294.2L2076.6 292.2L2078.3 295.1L2079.9 292.3L2081.4 290.1L2083.2 289.7L2084.8 291.5L2086.6 288.5L2087.8 287.8L2088.9 286.4L2090.2 282.9L2091.5 276.7L2092.7 273.6L2093.9 267.8L2095.5 265.1L2096.8 263.9L2098.2 266.8L2099.8 270.5L2101.1 274L2102.9 271L2104.6 278.7L2106.3 273.6L2108.1 275.7L2109.1 271.3L2110.9 274.2L2112.1 270L2113.3 270.2L2115 270L2116.1 273.6L2117.8 269.6L2119.6 273L2121.3 274L2123.1 274.8L2124.9 270.5L2126.5 272.2L2128.2 271.1L2130 271.3L2131.2 268.9L2132.3 270.3L2133.4 269.8L2134.5 269.2L2136 265.6L2137.7 257.2L2139.5 255.7L2141 253.3L2142.8 249.7L2144.1 258.4L2145.2 259.7L2146.8 259.7L2148.3 264L2150.2 261.7L2152.1 262.9L2153.5 265.5L2154.5 264.3L2156.1 261.7L2157.9 263.8L2159.3 267.3L2161 268.3L2162.4 272.1L2163.9 276.7L2165.1 274.6L2166.5 270.1L2167.7 268L2169.6 265.7L2171.3 261.7L2172.6 261.5L2174.1 263.7L2175.9 259.8L2177.5 265.4L2179 259.8L2180.3 259.5L2181.4 265.6L2183 263.2L2184.7 260L2186.2 260.1L2187.8 262.7L2189.3 264.7L2190.5 266.2L2191.9 268.1L2193 264.6L2194.1 268.7L2195.9 268.4L2197.2 269.8L2198.9 268.6L2200.2 267.2L2201.5 267.6L2202.9 270.1L2204.8 266.8L2206.3 266.8L2207.4 271.7L2208.9 272.4L2210.3 266.6L2211.7 270.3L2213.5 272.8L2214.9 273.3L2216 279.1L2217.2 280.9L2218.2 280.8L2219.8 281.6L2221.7 281.7L2223.5 282.1L2224.5 285.7L2225.7 286L2226.9 281.5L2228.6 284.6L2230.4 283.8L2231.4 282.7L2233.1 281L2234.9 280.7L2236.8 284.4L2237.8 280.7L2239.4 286.2L2240.5 280.6L2242.1 271.7L2243.9 266.3L2244.9 262.6L2246.5 258.8L2248.1 257.7L2249.8 261.6L2251.4 265.6L2252.7 265.9L2254.4 270.8L2256.2 268.1L2257.4 264.6L2259.3 268.5L2261 265.9L2262.6 269.9L2264.3 267.2L2265.6 265.8L2267.4 270L2269 276.1L2270.8 282.4L2272.1 281.2L2273.3 284.3L2274.9 283.4L2276.6 274.8L2278.4 276.8L2280.2 274.9L2281.4 276.3L2283.2 274.9L2285 272.4L2286.1 273.4L2287.8 270.8L2289.4 275L2290.7 272.8L2292.3 271.9L2293.5 270.6L2295.1 274L2296.5 273.3L2298.3 282.3L2299.5 284.5L2301.3 291.3L2302.8 291.3L2304.3 289.2L2305.5 288.9L2307.1 289.5L2308.6 289.4L2310.1 287.6L2311.1 292.1L2312.4 286.7L2314 290.2L2315.1 288.8L2316.5 288.2L2317.5 285.6L2319.4 290.6L2320.8 289L2322 290.4L2323.4 291.5L2325.1 290.9L2327 287.9L2328 287.7L2329.2 284.5L2330.2 285.6L2332 285.1L2333.9 287.7L2334.9 285.9L2336.3 283.1L2338.1 283.9L2339.6 286.1L2341.5 286.3L2342.9 285L2344 288L2345.9 283.7L2346.9 283.9L2348.3 284.7L2350.1 279.6L2351.1 276.5L2352.7 272.5L2354.6 269.4L2355.8 274.2L2357.6 274.3L2358.9 274.2L2360.6 271.7L2361.9 273.1L2363 274.3L2364.1 270.6L2365.2 271.3L2366.3 269.7L2367.4 263.1L2369.3 269.2L2371.1 281L2372.9 284.2L2374.3 284.5L2376.1 288.4L2377.7 285.8L2379 287.7L2380.4 286.3L2381.6 283.7L2382.6 286.6L2384.1 283.4L2385.9 284.2L2387.3 283.6L2388.5 287.6L2389.8 283.8L2391.3 284.7L2393.1 283.6L2395 283.4L2396.8 287.7L2398 287.4L2399.2 286.9L2400.4 288.3L2402.3 293.1L2404.1 289.2L2405.4 286.6L2406.4 279L2407.7 272.8L2408.7 270.8L2410 265.4L2411 269.1L2412.5 263.6L2413.9 267.2L2415.1 261.2L2416.2 251.2L2417.9 243.9L2419.1 231.4L2420.2 231.5L2421.6 231.8L2422.8 236.8L2424.4 241.5L2425.9 235.7L2427 237.1L2428.4 233.6L2429.4 232.5L2430.7 230.6L2432.5 224.9L2433.5 226.5L2434.9 223.9L2436.2 216.2L2437.9 214.8L2439.1 212.7L2440.6 206L2442.1 206.3L2443.5 200L2445.2 204.3L2447 198.7L2448.6 198.1L2450.3 194.1L2452.1 201L2453.5 196.1L2455 194L2456 195L2457.2 184.2L2458.3 181.6L2460 174.4L2461.1 177.8L2462.3 153.1L2463.8 132.2L2465.3 121.2L2466.4 130.8L2468.1 132.9L2469.2 139.1L2470.6 136.4L2471.7 137.7L2472.8 139.5L2474.6 136L2476.1 158.3L2477.3 170.9L2479.1 183.7L2480.5 196.6L2482 201.9L2483.8 216.6L2485.1 202.3L2486.4 194.4L2488.3 184L2490.1 170.8L2491.9 151.6L2493.4 168.7L2495.2 171.3L2496.6 182.4L2497.9 185.7L2499 179.4L2500.4 168L2501.6 171.9L2503.3 163.9L2504.8 157.4L2506.6 152.3L2507.7 146.2L2508.9 146.3L2510.1 146L2512 148.7L2513.2 148.8L2514.6 150.4L2515.8 140.4L2517.4 134.6L2519 141.3L2520.4 132.7L2521.8 134.8L2523 129.5L2524.1 130.8L2525.5 129.9L2526.7 126.9L2528.2 142.5L2529.7 149.8L2531.3 156.5L2532.9 162.7L2534.4 160.2L2535.9 157L2537.1 156.1L2538.5 157.8L2540.1 153.9L2541.4 162.8L2542.6 159.6L2544 151.8L2545.9 145.2L2547.6 155.6L2548.7 171.4L2550.1 160.3L2551.4 139L2553.1 121.6L2554.3 127.8L2556 113.2L2557.3 125.5L2558.9 151.8L2560.6 166.4L2562.1 159.7L2563.8 155.7L2565.2 159.3L2566.8 164.4L2568 166.5L2569 166.1L2570.5 160L2572.3 158.7L2573.7 167L2575.5 173.2L2576.9 177.6L2578.3 177.3L2579.5 168.3L2581 167.4L2582.3 188L2584.1 175.6L2585.5 163.1L2586.8 154.1L2588.3 162.2L2589.4 180.4L2590.6 174L2592.4 167.5L2593.6 158.1L2595.4 173.8L2596.4 190.4L2597.9 194.6L2599.6 182.6L2601.5 207.2L2603 191.2L2604.3 188.2L2605.8 192L2607.7 200.9L2609.2 201.4L2610.5 204.7L2612 195.2L2613.8 185.9L2615.2 170.3L2616.8 188.2L2618.1 195.2L2619.8 195.5L2621.1 200.4L2621.5 195.3L2621.5 398.5Z" fill="#c1e8c8" clip-path="url(#cpA)"/><path d="M1056.2 398.5L1056.2 399.2L1057.4 400.3L1058.4 400.6L1059.8 400.3L1061.2 400.9L1062.6 401.6L1063.7 402.8L1065.4 402.7L1066.6 403.9L1068.5 404.3L1069.8 405.3L1070.9 405.3L1072.1 403.6L1073.3 403.5L1075 402.6L1076.5 402.9L1077.8 402.3L1078.9 401.3L1080.1 402.2L1081.5 401.4L1083 401.4L1084.3 401.8L1085.9 401.4L1087.4 402.7L1089.2 404L1090.5 405.1L1091.6 404.7L1093.2 405.1L1094.7 405.3L1096.3 407.1L1097.8 407.7L1099.1 407.7L1100.6 407.9L1102 408.6L1103.9 406.4L1105.5 404.3L1107.1 403.9L1109 402.7L1110.3 400.9L1111.9 399L1113.3 398.4L1114.4 397.7L1116.1 396.9L1117.3 396.8L1119.1 395.3L1120.5 394L1122.3 391.6L1124.1 386.4L1125.4 382.3L1127.2 381.3L1128.4 379.1L1129.6 378.9L1131 379.5L1132.2 377.7L1133.6 378L1135.1 378.5L1136.8 376.3L1138.3 375.4L1139.4 375L1141.1 373.4L1142.8 371.2L1144.1 370L1145.7 369.4L1146.8 369.3L1147.9 369.1L1149 367.6L1150.1 367.3L1151.4 368.3L1153.2 372.1L1154.3 372.3L1155.7 373.6L1156.8 375.8L1158.7 374.5L1160.1 372.8L1161.2 372.9L1162.4 373.8L1163.6 371.2L1165.4 372L1166.6 372.5L1167.6 373.4L1169.5 376L1171.1 375.9L1172.4 376.8L1174.1 378.9L1175.8 379.4L1177 381.3L1178.9 382.5L1180.6 381L1182.3 375.9L1183.8 374.6L1184.8 374.6L1186 376.1L1187.7 379.2L1189.1 379.9L1191 381.1L1192.3 379.5L1193.5 378.5L1194.7 378.7L1196.5 377.9L1197.9 376.3L1199.6 373.6L1201.2 374.8L1202.9 373.3L1204.4 370.8L1206.1 370.5L1207.8 373L1209.2 372.1L1211 373.8L1212.2 372.7L1213.3 375.2L1215 373.9L1216.8 376.9L1218.4 376.1L1219.8 376.3L1220.9 379L1222.4 378.4L1224.3 378.7L1226.1 380.1L1227.3 378.2L1228.5 377.1L1230.1 375.8L1231.4 374.4L1233.2 373.6L1234.7 373.1L1236.5 372.8L1238.3 373.6L1239.8 374.2L1240.8 374.4L1242 373.5L1243.7 374.3L1245.1 376.1L1246.6 375.4L1248.1 376.7L1249.8 376.7L1251.3 378L1252.5 380.1L1254 380.2L1255.7 381.7L1257.1 381.6L1258.5 380.9L1260.2 379.7L1261.6 378.8L1263.5 378.2L1265.3 377.9L1266.5 376.2L1268.3 376.4L1269.5 375.1L1270.9 375.7L1272.1 376.4L1273.7 379L1275.5 378.3L1277.1 380.3L1278.3 381.4L1280.1 379.7L1282 380L1283.4 381.4L1285.2 379.3L1286.6 379.9L1287.9 378.9L1289.2 379.9L1290.2 379.3L1291.6 377.7L1292.9 379L1294.3 377.4L1296.2 379.1L1298.1 377.2L1299.3 376.9L1301 377.2L1302.2 377.4L1304 378.1L1305.2 376.2L1307 375.6L1308.7 371.5L1309.7 371.4L1311.1 367.1L1312.9 365.2L1314.7 360.2L1316.4 361.4L1318.2 364L1319.5 365.2L1321.4 365.1L1322.5 366.3L1323.7 365.5L1324.8 365.5L1326 366.5L1327.3 368L1328.5 367.4L1329.7 367.1L1330.7 367L1331.7 368.5L1333.2 367.1L1334.7 369.4L1335.8 369.1L1337.1 368.3L1338.9 366.8L1340.4 366.5L1342.2 364.1L1344 363.9L1345.6 359.8L1346.9 355.9L1348 353.8L1349.7 352.4L1350.8 353.3L1352.6 358.3L1354.2 358.4L1355.4 359.7L1356.8 360.8L1358.2 362.1L1360.1 361.9L1361.6 357.5L1363.4 355.3L1364.7 352.8L1366.1 352.8L1367.5 350.2L1369 349.2L1370.2 350.5L1371.6 351.4L1372.6 353.1L1373.8 354.4L1375.3 352.7L1376.9 350.2L1378.7 346.4L1380 346.6L1381.1 345.7L1382.7 345.1L1384.4 350.1L1386 351L1387.7 350.4L1389.2 352.8L1391 353.4L1392.7 352.2L1394.5 352.1L1396.1 350.1L1397.2 349.5L1398.5 349.1L1400.2 350.2L1401.8 350.1L1403.4 348.8L1404.4 348.7L1406.1 345.8L1407.6 344.7L1408.6 344.5L1409.9 342.3L1411.1 345.1L1412.3 345.4L1414.2 345L1415.5 345.3L1417.1 346.7L1418.7 346.5L1419.7 344.9L1421 347.3L1422.2 346.9L1423.3 345.2L1424.5 346.7L1426.1 345L1427.4 343L1428.8 341.3L1429.9 342.9L1431.1 343.2L1432.9 339.5L1434.3 342.6L1436.2 341.2L1437.5 340.3L1439.3 340.3L1440.8 340L1442.3 343.1L1443.4 342.6L1444.9 343.1L1446.5 341.4L1448.3 343.3L1449.3 342L1450.8 344.5L1452.1 344L1453.4 345L1455.1 342.3L1456.8 344L1457.9 343.4L1459.5 342L1460.8 339L1462.2 340.6L1463.7 337.1L1465.1 335.8L1466.1 334.4L1467.9 335L1469.7 335.6L1471 337.1L1472.1 337L1474 339.8L1475.7 339.5L1477.5 341.2L1479 340.8L1480.1 341.1L1481.5 341.6L1483.1 340.2L1484.1 343L1485.2 341.5L1486.5 341.1L1488.2 344.1L1489.4 343.2L1490.7 343.1L1492.1 342L1493.2 342.5L1495 344.4L1496.2 346.5L1498.1 345.7L1499.2 345.3L1500.3 346.3L1501.4 346.5L1502.6 348.2L1504.4 348.6L1505.8 346.7L1507.3 345.8L1508.6 344L1509.8 346.8L1510.9 345.1L1512.5 346.9L1513.7 345L1514.9 345.9L1516.3 348.3L1518.1 347.9L1519.1 344.5L1520.8 347.2L1522.2 345.5L1523.2 344.5L1525 345.7L1526.8 345.8L1528 342.3L1529.1 343.5L1530.8 347.9L1532.4 349.8L1534.1 352.3L1535.6 353.8L1537.3 357.7L1539.1 360.5L1540.4 359.1L1541.6 361L1543.3 359.7L1544.3 361.3L1545.8 361.2L1547 362.2L1548.1 361.5L1549.5 363.5L1551 363.1L1552.5 361L1553.7 363.2L1555.3 361.1L1556.3 361.6L1558 361.2L1559.2 361.9L1561 360.2L1562.1 360.4L1563.4 361.2L1564.6 361.4L1566.3 360.2L1567.5 361.5L1568.7 360.8L1569.9 359.4L1571.6 360.8L1573.5 362.7L1574.7 362.5L1576 364.5L1577.9 363.8L1579.2 364.7L1581.1 363.7L1582.2 362.9L1583.5 364.7L1585.3 363.4L1587.2 363.9L1588.5 362.3L1590.3 364.9L1591.4 365.1L1592.7 364.9L1594 364.9L1595 365.6L1596.3 368.2L1597.4 368.6L1598.6 367.3L1600.4 369.2L1601.8 366.6L1603.2 367.1L1605 366L1606.3 367.7L1607.4 366L1609.1 366.7L1610.1 364.3L1611.2 366.7L1612.4 366L1614.2 364.5L1615.5 366.8L1617 365.4L1618.7 366.2L1619.9 365.8L1621.6 368.5L1623.2 367.8L1624.2 365.2L1625.6 366.7L1627.5 364L1628.7 362L1630.2 360.2L1631.3 357.1L1633 353.4L1634.7 348.7L1636 344.7L1637.3 346.8L1638.4 346.8L1640.1 350.3L1641.1 351.8L1642.6 352.7L1644.5 352.1L1646.4 347.4L1647.5 345.6L1648.9 346.4L1650.3 343.2L1651.7 343.3L1653.3 342.3L1655 340.5L1656.2 340.2L1657.4 338L1658.8 337.7L1659.9 334.8L1661.2 333.4L1663 334.6L1664.2 335.3L1666.1 337.8L1667.3 340.3L1668.9 342.8L1670 340.1L1671.8 338.3L1673.6 331.7L1674.9 329.6L1676 331L1677.5 327.9L1678.9 328.2L1680.3 328L1682 333.9L1683.1 334.3L1684.6 335.5L1686 333.7L1687.2 331.8L1688.7 330.4L1689.9 325.2L1691.2 325.6L1692.3 319.6L1693.5 314.5L1695 301.4L1696.1 296.1L1697.6 290.8L1698.7 286.9L1700.3 286.7L1701.6 284.9L1703.4 286.2L1704.9 289L1706.3 294.1L1708.2 291.4L1709.4 290.7L1710.6 283.8L1712.4 282L1714.1 276.8L1715.9 271.8L1717.1 265.4L1718.6 265L1720.4 260.3L1721.9 265.8L1723.4 267.8L1724.6 273.1L1726.5 269.6L1727.9 273L1729.8 267.9L1730.9 274L1732.8 273.8L1733.8 278.1L1735.2 279.8L1736.7 281.4L1737.9 282.6L1739.1 281.3L1740.8 284L1742 280.5L1743.4 282.4L1744.7 280.2L1745.9 283.9L1747.7 280.2L1749.2 284.6L1750.3 285.3L1751.4 284L1752.9 284.8L1754.2 284.9L1755.7 286.6L1757.3 288.3L1758.7 287.4L1760.2 291.7L1761.4 294.4L1763.1 294.3L1764.3 295.5L1765.4 294.6L1766.8 295.8L1768.2 298.8L1769.2 297.2L1770.3 295.4L1772 290.5L1773 288.4L1774.4 288.3L1775.5 287L1777.4 287.2L1779.1 284.9L1781 287.5L1782.9 290.8L1784 290.8L1785.9 288L1787.2 292.9L1788.3 294.6L1789.6 295L1790.7 293.6L1792.5 288.4L1793.8 287.7L1795.1 282.6L1796.2 281.3L1798.1 281.3L1799.9 277.9L1801.6 281.2L1803 287.4L1804.4 291.5L1805.9 293L1807.7 288.3L1809.6 288.5L1810.9 287.5L1812.2 290.1L1813.7 289.8L1815.4 293.9L1816.5 297.7L1817.6 300L1818.8 301.3L1820.7 304L1822.3 304.4L1823.3 304.2L1824.4 308.5L1825.8 309.6L1827.6 309.8L1828.8 313.6L1829.8 311.6L1831.1 313.6L1832.5 315.2L1834 317.1L1835.2 317.4L1836.6 315.2L1838.4 315.9L1839.6 315.3L1841.2 319.2L1842.9 317.3L1844.1 315.6L1845.7 318.4L1847 317.4L1848.4 317.1L1850.1 311.7L1851.9 308.4L1853.3 309.1L1854.6 307.3L1856.3 307.1L1857.8 311.7L1858.9 308L1860.4 309.6L1862 311.1L1863.2 308.6L1864.4 307.3L1866.2 310.9L1867.9 306.9L1869.6 310.5L1871.1 310.3L1872.5 307.6L1873.6 307.5L1874.6 307.9L1876.3 309.4L1878 309.2L1879.3 308.3L1880.7 309.3L1882.1 307.2L1883.7 311.2L1884.9 311.2L1885.9 308.4L1887.1 311.2L1889 311.9L1890.3 313L1891.6 309.4L1893.4 310L1895 309L1896.9 306.6L1898.7 306.5L1900.4 304L1902.1 306L1903.4 305.5L1904.9 306.4L1906.7 308L1907.8 308.1L1909.6 309.8L1910.7 308.6L1911.8 312.1L1913.3 312.6L1915 310L1916.5 311.9L1918.3 314.7L1920.1 312.4L1921.8 317.8L1923.7 315.4L1924.9 316.3L1925.9 318.4L1927.6 314.8L1929.4 312.2L1930.6 307.7L1931.7 309.4L1932.9 304.7L1934.3 300L1935.5 298.7L1937.2 295.8L1938.5 300.8L1939.9 302.2L1941.5 300.1L1942.8 304.1L1944.5 305.4L1946.2 306.6L1947.4 308.4L1948.4 308.3L1949.6 304.1L1950.8 307.6L1952.7 303.1L1954.1 305.1L1955.8 302.9L1957.3 303.3L1959 302.2L1960.9 302.4L1962.1 304.8L1963.5 302.1L1965.1 302.2L1966.8 305.8L1968.5 305.7L1969.8 304.8L1971.2 307.1L1972.2 306.8L1973.3 303L1974.5 306.2L1976 303.2L1977.8 301.9L1979.2 303.1L1980.8 304.1L1982.4 302.7L1983.7 302.2L1985.5 305.5L1987.2 303.6L1988.5 307.3L1990.1 304.6L1991.5 308.2L1992.7 303.8L1994 305.6L1995.7 301.6L1996.9 301.3L1998.2 301.8L1999.3 300L2000.5 303.6L2002.1 299.2L2004 299.4L2005.3 304.3L2007.1 303.2L2008.5 300.6L2010 300.3L2011.2 302L2012.2 302.3L2014 304.2L2015.4 304.3L2016.8 302.1L2018.4 303.8L2020 306.7L2021.4 305.3L2023.1 304.8L2024.3 306.5L2026.1 307.1L2027.7 307.8L2029.3 307L2030.7 305.5L2032.3 304.7L2033.7 307L2035.3 304.8L2036.6 302.7L2038 302.5L2039.3 301.8L2041.2 299.5L2042.8 302.9L2044.1 301.7L2046 299.6L2047.5 300.5L2049.2 304.9L2050.6 296.3L2052.2 292.9L2053.8 289.9L2055.4 292.5L2056.8 290.9L2058.7 290.7L2060.3 292.6L2062 292.5L2063.9 295.3L2064.9 295.7L2066.3 295.4L2067.7 297.7L2069.3 296.6L2070.5 295.4L2072.2 298.5L2073.7 294L2075.4 294.2L2076.6 292.2L2078.3 295.1L2079.9 292.3L2081.4 290.1L2083.2 289.7L2084.8 291.5L2086.6 288.5L2087.8 287.8L2088.9 286.4L2090.2 282.9L2091.5 276.7L2092.7 273.6L2093.9 267.8L2095.5 265.1L2096.8 263.9L2098.2 266.8L2099.8 270.5L2101.1 274L2102.9 271L2104.6 278.7L2106.3 273.6L2108.1 275.7L2109.1 271.3L2110.9 274.2L2112.1 270L2113.3 270.2L2115 270L2116.1 273.6L2117.8 269.6L2119.6 273L2121.3 274L2123.1 274.8L2124.9 270.5L2126.5 272.2L2128.2 271.1L2130 271.3L2131.2 268.9L2132.3 270.3L2133.4 269.8L2134.5 269.2L2136 265.6L2137.7 257.2L2139.5 255.7L2141 253.3L2142.8 249.7L2144.1 258.4L2145.2 259.7L2146.8 259.7L2148.3 264L2150.2 261.7L2152.1 262.9L2153.5 265.5L2154.5 264.3L2156.1 261.7L2157.9 263.8L2159.3 267.3L2161 268.3L2162.4 272.1L2163.9 276.7L2165.1 274.6L2166.5 270.1L2167.7 268L2169.6 265.7L2171.3 261.7L2172.6 261.5L2174.1 263.7L2175.9 259.8L2177.5 265.4L2179 259.8L2180.3 259.5L2181.4 265.6L2183 263.2L2184.7 260L2186.2 260.1L2187.8 262.7L2189.3 264.7L2190.5 266.2L2191.9 268.1L2193 264.6L2194.1 268.7L2195.9 268.4L2197.2 269.8L2198.9 268.6L2200.2 267.2L2201.5 267.6L2202.9 270.1L2204.8 266.8L2206.3 266.8L2207.4 271.7L2208.9 272.4L2210.3 266.6L2211.7 270.3L2213.5 272.8L2214.9 273.3L2216 279.1L2217.2 280.9L2218.2 280.8L2219.8 281.6L2221.7 281.7L2223.5 282.1L2224.5 285.7L2225.7 286L2226.9 281.5L2228.6 284.6L2230.4 283.8L2231.4 282.7L2233.1 281L2234.9 280.7L2236.8 284.4L2237.8 280.7L2239.4 286.2L2240.5 280.6L2242.1 271.7L2243.9 266.3L2244.9 262.6L2246.5 258.8L2248.1 257.7L2249.8 261.6L2251.4 265.6L2252.7 265.9L2254.4 270.8L2256.2 268.1L2257.4 264.6L2259.3 268.5L2261 265.9L2262.6 269.9L2264.3 267.2L2265.6 265.8L2267.4 270L2269 276.1L2270.8 282.4L2272.1 281.2L2273.3 284.3L2274.9 283.4L2276.6 274.8L2278.4 276.8L2280.2 274.9L2281.4 276.3L2283.2 274.9L2285 272.4L2286.1 273.4L2287.8 270.8L2289.4 275L2290.7 272.8L2292.3 271.9L2293.5 270.6L2295.1 274L2296.5 273.3L2298.3 282.3L2299.5 284.5L2301.3 291.3L2302.8 291.3L2304.3 289.2L2305.5 288.9L2307.1 289.5L2308.6 289.4L2310.1 287.6L2311.1 292.1L2312.4 286.7L2314 290.2L2315.1 288.8L2316.5 288.2L2317.5 285.6L2319.4 290.6L2320.8 289L2322 290.4L2323.4 291.5L2325.1 290.9L2327 287.9L2328 287.7L2329.2 284.5L2330.2 285.6L2332 285.1L2333.9 287.7L2334.9 285.9L2336.3 283.1L2338.1 283.9L2339.6 286.1L2341.5 286.3L2342.9 285L2344 288L2345.9 283.7L2346.9 283.9L2348.3 284.7L2350.1 279.6L2351.1 276.5L2352.7 272.5L2354.6 269.4L2355.8 274.2L2357.6 274.3L2358.9 274.2L2360.6 271.7L2361.9 273.1L2363 274.3L2364.1 270.6L2365.2 271.3L2366.3 269.7L2367.4 263.1L2369.3 269.2L2371.1 281L2372.9 284.2L2374.3 284.5L2376.1 288.4L2377.7 285.8L2379 287.7L2380.4 286.3L2381.6 283.7L2382.6 286.6L2384.1 283.4L2385.9 284.2L2387.3 283.6L2388.5 287.6L2389.8 283.8L2391.3 284.7L2393.1 283.6L2395 283.4L2396.8 287.7L2398 287.4L2399.2 286.9L2400.4 288.3L2402.3 293.1L2404.1 289.2L2405.4 286.6L2406.4 279L2407.7 272.8L2408.7 270.8L2410 265.4L2411 269.1L2412.5 263.6L2413.9 267.2L2415.1 261.2L2416.2 251.2L2417.9 243.9L2419.1 231.4L2420.2 231.5L2421.6 231.8L2422.8 236.8L2424.4 241.5L2425.9 235.7L2427 237.1L2428.4 233.6L2429.4 232.5L2430.7 230.6L2432.5 224.9L2433.5 226.5L2434.9 223.9L2436.2 216.2L2437.9 214.8L2439.1 212.7L2440.6 206L2442.1 206.3L2443.5 200L2445.2 204.3L2447 198.7L2448.6 198.1L2450.3 194.1L2452.1 201L2453.5 196.1L2455 194L2456 195L2457.2 184.2L2458.3 181.6L2460 174.4L2461.1 177.8L2462.3 153.1L2463.8 132.2L2465.3 121.2L2466.4 130.8L2468.1 132.9L2469.2 139.1L2470.6 136.4L2471.7 137.7L2472.8 139.5L2474.6 136L2476.1 158.3L2477.3 170.9L2479.1 183.7L2480.5 196.6L2482 201.9L2483.8 216.6L2485.1 202.3L2486.4 194.4L2488.3 184L2490.1 170.8L2491.9 151.6L2493.4 168.7L2495.2 171.3L2496.6 182.4L2497.9 185.7L2499 179.4L2500.4 168L2501.6 171.9L2503.3 163.9L2504.8 157.4L2506.6 152.3L2507.7 146.2L2508.9 146.3L2510.1 146L2512 148.7L2513.2 148.8L2514.6 150.4L2515.8 140.4L2517.4 134.6L2519 141.3L2520.4 132.7L2521.8 134.8L2523 129.5L2524.1 130.8L2525.5 129.9L2526.7 126.9L2528.2 142.5L2529.7 149.8L2531.3 156.5L2532.9 162.7L2534.4 160.2L2535.9 157L2537.1 156.1L2538.5 157.8L2540.1 153.9L2541.4 162.8L2542.6 159.6L2544 151.8L2545.9 145.2L2547.6 155.6L2548.7 171.4L2550.1 160.3L2551.4 139L2553.1 121.6L2554.3 127.8L2556 113.2L2557.3 125.5L2558.9 151.8L2560.6 166.4L2562.1 159.7L2563.8 155.7L2565.2 159.3L2566.8 164.4L2568 166.5L2569 166.1L2570.5 160L2572.3 158.7L2573.7 167L2575.5 173.2L2576.9 177.6L2578.3 177.3L2579.5 168.3L2581 167.4L2582.3 188L2584.1 175.6L2585.5 163.1L2586.8 154.1L2588.3 162.2L2589.4 180.4L2590.6 174L2592.4 167.5L2593.6 158.1L2595.4 173.8L2596.4 190.4L2597.9 194.6L2599.6 182.6L2601.5 207.2L2603 191.2L2604.3 188.2L2605.8 192L2607.7 200.9L2609.2 201.4L2610.5 204.7L2612 195.2L2613.8 185.9L2615.2 170.3L2616.8 188.2L2618.1 195.2L2619.8 195.5L2621.1 200.4L2621.5 195.3L2621.5 398.5Z" fill="#f3bccb" clip-path="url(#cpB)"/><path d="M1058.4 400.6L1059.8 400.3M1063.7 402.8L1065.4 402.7M1069.8 405.3L1070.9 405.3M1070.9 405.3L1072.1 403.6M1072.1 403.6L1073.3 403.5M1073.3 403.5L1075 402.6M1076.5 402.9L1077.8 402.3M1077.8 402.3L1078.9 401.3M1080.1 402.2L1081.5 401.4M1084.3 401.8L1085.9 401.4M1090.5 405.1L1091.6 404.7M1102 408.6L1103.9 406.4M1103.9 406.4L1105.5 404.3M1105.5 404.3L1107.1 403.9M1107.1 403.9L1109 402.7M1109 402.7L1110.3 400.9M1110.3 400.9L1111.9 399M1111.9 399L1113.3 398.4M1113.3 398.4L1114.4 397.7M1114.4 397.7L1116.1 396.9M1116.1 396.9L1117.3 396.8M1117.3 396.8L1119.1 395.3M1119.1 395.3L1120.5 394M1120.5 394L1122.3 391.6M1122.3 391.6L1124.1 386.4M1124.1 386.4L1125.4 382.3M1125.4 382.3L1127.2 381.3M1127.2 381.3L1128.4 379.1M1128.4 379.1L1129.6 378.9M1131 379.5L1132.2 377.7M1135.1 378.5L1136.8 376.3M1136.8 376.3L1138.3 375.4M1138.3 375.4L1139.4 375M1139.4 375L1141.1 373.4M1141.1 373.4L1142.8 371.2M1142.8 371.2L1144.1 370M1144.1 370L1145.7 369.4M1145.7 369.4L1146.8 369.3M1146.8 369.3L1147.9 369.1M1147.9 369.1L1149 367.6M1149 367.6L1150.1 367.3M1156.8 375.8L1158.7 374.5M1158.7 374.5L1160.1 372.8M1162.4 373.8L1163.6 371.2M1169.5 376L1171.1 375.9M1178.9 382.5L1180.6 381M1180.6 381L1182.3 375.9M1182.3 375.9L1183.8 374.6M1183.8 374.6L1184.8 374.6M1191 381.1L1192.3 379.5M1192.3 379.5L1193.5 378.5M1194.7 378.7L1196.5 377.9M1196.5 377.9L1197.9 376.3M1197.9 376.3L1199.6 373.6M1201.2 374.8L1202.9 373.3M1202.9 373.3L1204.4 370.8M1204.4 370.8L1206.1 370.5M1207.8 373L1209.2 372.1M1211 373.8L1212.2 372.7M1213.3 375.2L1215 373.9M1216.8 376.9L1218.4 376.1M1220.9 379L1222.4 378.4M1226.1 380.1L1227.3 378.2M1227.3 378.2L1228.5 377.1M1228.5 377.1L1230.1 375.8M1230.1 375.8L1231.4 374.4M1231.4 374.4L1233.2 373.6M1233.2 373.6L1234.7 373.1M1234.7 373.1L1236.5 372.8M1240.8 374.4L1242 373.5M1245.1 376.1L1246.6 375.4M1248.1 376.7L1249.8 376.7M1255.7 381.7L1257.1 381.6M1257.1 381.6L1258.5 380.9M1258.5 380.9L1260.2 379.7M1260.2 379.7L1261.6 378.8M1261.6 378.8L1263.5 378.2M1263.5 378.2L1265.3 377.9M1265.3 377.9L1266.5 376.2M1268.3 376.4L1269.5 375.1M1273.7 379L1275.5 378.3M1278.3 381.4L1280.1 379.7M1283.4 381.4L1285.2 379.3M1286.6 379.9L1287.9 378.9M1289.2 379.9L1290.2 379.3M1290.2 379.3L1291.6 377.7M1292.9 379L1294.3 377.4M1296.2 379.1L1298.1 377.2M1298.1 377.2L1299.3 376.9M1304 378.1L1305.2 376.2M1305.2 376.2L1307 375.6M1307 375.6L1308.7 371.5M1308.7 371.5L1309.7 371.4M1309.7 371.4L1311.1 367.1M1311.1 367.1L1312.9 365.2M1312.9 365.2L1314.7 360.2M1319.5 365.2L1321.4 365.1M1322.5 366.3L1323.7 365.5M1327.3 368L1328.5 367.4M1328.5 367.4L1329.7 367.1M1329.7 367.1L1330.7 367M1331.7 368.5L1333.2 367.1M1334.7 369.4L1335.8 369.1M1335.8 369.1L1337.1 368.3M1337.1 368.3L1338.9 366.8M1338.9 366.8L1340.4 366.5M1340.4 366.5L1342.2 364.1M1342.2 364.1L1344 363.9M1344 363.9L1345.6 359.8M1345.6 359.8L1346.9 355.9M1346.9 355.9L1348 353.8M1348 353.8L1349.7 352.4M1358.2 362.1L1360.1 361.9M1360.1 361.9L1361.6 357.5M1361.6 357.5L1363.4 355.3M1363.4 355.3L1364.7 352.8M1366.1 352.8L1367.5 350.2M1367.5 350.2L1369 349.2M1373.8 354.4L1375.3 352.7M1375.3 352.7L1376.9 350.2M1376.9 350.2L1378.7 346.4M1380 346.6L1381.1 345.7M1381.1 345.7L1382.7 345.1M1386 351L1387.7 350.4M1391 353.4L1392.7 352.2M1392.7 352.2L1394.5 352.1M1394.5 352.1L1396.1 350.1M1396.1 350.1L1397.2 349.5M1397.2 349.5L1398.5 349.1M1400.2 350.2L1401.8 350.1M1401.8 350.1L1403.4 348.8M1403.4 348.8L1404.4 348.7M1404.4 348.7L1406.1 345.8M1406.1 345.8L1407.6 344.7M1407.6 344.7L1408.6 344.5M1408.6 344.5L1409.9 342.3M1412.3 345.4L1414.2 345M1417.1 346.7L1418.7 346.5M1418.7 346.5L1419.7 344.9M1421 347.3L1422.2 346.9M1422.2 346.9L1423.3 345.2M1424.5 346.7L1426.1 345M1426.1 345L1427.4 343M1427.4 343L1428.8 341.3M1431.1 343.2L1432.9 339.5M1434.3 342.6L1436.2 341.2M1436.2 341.2L1437.5 340.3M1439.3 340.3L1440.8 340M1442.3 343.1L1443.4 342.6M1444.9 343.1L1446.5 341.4M1448.3 343.3L1449.3 342M1450.8 344.5L1452.1 344M1453.4 345L1455.1 342.3M1456.8 344L1457.9 343.4M1457.9 343.4L1459.5 342M1459.5 342L1460.8 339M1462.2 340.6L1463.7 337.1M1463.7 337.1L1465.1 335.8M1465.1 335.8L1466.1 334.4M1471 337.1L1472.1 337M1474 339.8L1475.7 339.5M1477.5 341.2L1479 340.8M1481.5 341.6L1483.1 340.2M1484.1 343L1485.2 341.5M1485.2 341.5L1486.5 341.1M1488.2 344.1L1489.4 343.2M1489.4 343.2L1490.7 343.1M1490.7 343.1L1492.1 342M1496.2 346.5L1498.1 345.7M1498.1 345.7L1499.2 345.3M1504.4 348.6L1505.8 346.7M1505.8 346.7L1507.3 345.8M1507.3 345.8L1508.6 344M1509.8 346.8L1510.9 345.1M1512.5 346.9L1513.7 345M1516.3 348.3L1518.1 347.9M1518.1 347.9L1519.1 344.5M1520.8 347.2L1522.2 345.5M1522.2 345.5L1523.2 344.5M1526.8 345.8L1528 342.3M1539.1 360.5L1540.4 359.1M1541.6 361L1543.3 359.7M1544.3 361.3L1545.8 361.2M1547 362.2L1548.1 361.5M1549.5 363.5L1551 363.1M1551 363.1L1552.5 361M1553.7 363.2L1555.3 361.1M1556.3 361.6L1558 361.2M1559.2 361.9L1561 360.2M1564.6 361.4L1566.3 360.2M1567.5 361.5L1568.7 360.8M1568.7 360.8L1569.9 359.4M1573.5 362.7L1574.7 362.5M1576 364.5L1577.9 363.8M1579.2 364.7L1581.1 363.7M1581.1 363.7L1582.2 362.9M1583.5 364.7L1585.3 363.4M1587.2 363.9L1588.5 362.3M1591.4 365.1L1592.7 364.9M1592.7 364.9L1594 364.9M1597.4 368.6L1598.6 367.3M1600.4 369.2L1601.8 366.6M1603.2 367.1L1605 366M1606.3 367.7L1607.4 366M1609.1 366.7L1610.1 364.3M1611.2 366.7L1612.4 366M1612.4 366L1614.2 364.5M1615.5 366.8L1617 365.4M1618.7 366.2L1619.9 365.8M1621.6 368.5L1623.2 367.8M1623.2 367.8L1624.2 365.2M1625.6 366.7L1627.5 364M1627.5 364L1628.7 362M1628.7 362L1630.2 360.2M1630.2 360.2L1631.3 357.1M1631.3 357.1L1633 353.4M1633 353.4L1634.7 348.7M1634.7 348.7L1636 344.7M1642.6 352.7L1644.5 352.1M1644.5 352.1L1646.4 347.4M1646.4 347.4L1647.5 345.6M1648.9 346.4L1650.3 343.2M1651.7 343.3L1653.3 342.3M1653.3 342.3L1655 340.5M1655 340.5L1656.2 340.2M1656.2 340.2L1657.4 338M1657.4 338L1658.8 337.7M1658.8 337.7L1659.9 334.8M1659.9 334.8L1661.2 333.4M1668.9 342.8L1670 340.1M1670 340.1L1671.8 338.3M1671.8 338.3L1673.6 331.7M1673.6 331.7L1674.9 329.6M1676 331L1677.5 327.9M1678.9 328.2L1680.3 328M1684.6 335.5L1686 333.7M1686 333.7L1687.2 331.8M1687.2 331.8L1688.7 330.4M1688.7 330.4L1689.9 325.2M1691.2 325.6L1692.3 319.6M1692.3 319.6L1693.5 314.5M1693.5 314.5L1695 301.4M1695 301.4L1696.1 296.1M1696.1 296.1L1697.6 290.8M1697.6 290.8L1698.7 286.9M1698.7 286.9L1700.3 286.7M1700.3 286.7L1701.6 284.9M1706.3 294.1L1708.2 291.4M1708.2 291.4L1709.4 290.7M1709.4 290.7L1710.6 283.8M1710.6 283.8L1712.4 282M1712.4 282L1714.1 276.8M1714.1 276.8L1715.9 271.8M1715.9 271.8L1717.1 265.4M1717.1 265.4L1718.6 265M1718.6 265L1720.4 260.3M1724.6 273.1L1726.5 269.6M1727.9 273L1729.8 267.9M1730.9 274L1732.8 273.8M1737.9 282.6L1739.1 281.3M1740.8 284L1742 280.5M1743.4 282.4L1744.7 280.2M1745.9 283.9L1747.7 280.2M1750.3 285.3L1751.4 284M1757.3 288.3L1758.7 287.4M1761.4 294.4L1763.1 294.3M1764.3 295.5L1765.4 294.6M1768.2 298.8L1769.2 297.2M1769.2 297.2L1770.3 295.4M1770.3 295.4L1772 290.5M1772 290.5L1773 288.4M1773 288.4L1774.4 288.3M1774.4 288.3L1775.5 287M1777.4 287.2L1779.1 284.9M1782.9 290.8L1784 290.8M1784 290.8L1785.9 288M1789.6 295L1790.7 293.6M1790.7 293.6L1792.5 288.4M1792.5 288.4L1793.8 287.7M1793.8 287.7L1795.1 282.6M1795.1 282.6L1796.2 281.3M1796.2 281.3L1798.1 281.3M1798.1 281.3L1799.9 277.9M1805.9 293L1807.7 288.3M1809.6 288.5L1810.9 287.5M1812.2 290.1L1813.7 289.8M1822.3 304.4L1823.3 304.2M1828.8 313.6L1829.8 311.6M1835.2 317.4L1836.6 315.2M1838.4 315.9L1839.6 315.3M1841.2 319.2L1842.9 317.3M1842.9 317.3L1844.1 315.6M1845.7 318.4L1847 317.4M1847 317.4L1848.4 317.1M1848.4 317.1L1850.1 311.7M1850.1 311.7L1851.9 308.4M1853.3 309.1L1854.6 307.3M1854.6 307.3L1856.3 307.1M1857.8 311.7L1858.9 308M1862 311.1L1863.2 308.6M1863.2 308.6L1864.4 307.3M1866.2 310.9L1867.9 306.9M1869.6 310.5L1871.1 310.3M1871.1 310.3L1872.5 307.6M1872.5 307.6L1873.6 307.5M1876.3 309.4L1878 309.2M1878 309.2L1879.3 308.3M1880.7 309.3L1882.1 307.2M1883.7 311.2L1884.9 311.2M1884.9 311.2L1885.9 308.4M1890.3 313L1891.6 309.4M1893.4 310L1895 309M1895 309L1896.9 306.6M1896.9 306.6L1898.7 306.5M1898.7 306.5L1900.4 304M1902.1 306L1903.4 305.5M1909.6 309.8L1910.7 308.6M1913.3 312.6L1915 310M1918.3 314.7L1920.1 312.4M1921.8 317.8L1923.7 315.4M1925.9 318.4L1927.6 314.8M1927.6 314.8L1929.4 312.2M1929.4 312.2L1930.6 307.7M1931.7 309.4L1932.9 304.7M1932.9 304.7L1934.3 300M1934.3 300L1935.5 298.7M1935.5 298.7L1937.2 295.8M1939.9 302.2L1941.5 300.1M1947.4 308.4L1948.4 308.3M1948.4 308.3L1949.6 304.1M1950.8 307.6L1952.7 303.1M1954.1 305.1L1955.8 302.9M1957.3 303.3L1959 302.2M1962.1 304.8L1963.5 302.1M1966.8 305.8L1968.5 305.7M1968.5 305.7L1969.8 304.8M1971.2 307.1L1972.2 306.8M1972.2 306.8L1973.3 303M1974.5 306.2L1976 303.2M1976 303.2L1977.8 301.9M1980.8 304.1L1982.4 302.7M1982.4 302.7L1983.7 302.2M1985.5 305.5L1987.2 303.6M1988.5 307.3L1990.1 304.6M1991.5 308.2L1992.7 303.8M1994 305.6L1995.7 301.6M1995.7 301.6L1996.9 301.3M1998.2 301.8L1999.3 300M2000.5 303.6L2002.1 299.2M2005.3 304.3L2007.1 303.2M2007.1 303.2L2008.5 300.6M2008.5 300.6L2010 300.3M2015.4 304.3L2016.8 302.1M2020 306.7L2021.4 305.3M2021.4 305.3L2023.1 304.8M2027.7 307.8L2029.3 307M2029.3 307L2030.7 305.5M2030.7 305.5L2032.3 304.7M2033.7 307L2035.3 304.8M2035.3 304.8L2036.6 302.7M2036.6 302.7L2038 302.5M2038 302.5L2039.3 301.8M2039.3 301.8L2041.2 299.5M2042.8 302.9L2044.1 301.7M2044.1 301.7L2046 299.6M2049.2 304.9L2050.6 296.3M2050.6 296.3L2052.2 292.9M2052.2 292.9L2053.8 289.9M2055.4 292.5L2056.8 290.9M2056.8 290.9L2058.7 290.7M2060.3 292.6L2062 292.5M2064.9 295.7L2066.3 295.4M2067.7 297.7L2069.3 296.6M2069.3 296.6L2070.5 295.4M2072.2 298.5L2073.7 294M2075.4 294.2L2076.6 292.2M2078.3 295.1L2079.9 292.3M2079.9 292.3L2081.4 290.1M2081.4 290.1L2083.2 289.7M2084.8 291.5L2086.6 288.5M2086.6 288.5L2087.8 287.8M2087.8 287.8L2088.9 286.4M2088.9 286.4L2090.2 282.9M2090.2 282.9L2091.5 276.7M2091.5 276.7L2092.7 273.6M2092.7 273.6L2093.9 267.8M2093.9 267.8L2095.5 265.1M2095.5 265.1L2096.8 263.9M2101.1 274L2102.9 271M2104.6 278.7L2106.3 273.6M2108.1 275.7L2109.1 271.3M2110.9 274.2L2112.1 270M2113.3 270.2L2115 270M2116.1 273.6L2117.8 269.6M2123.1 274.8L2124.9 270.5M2126.5 272.2L2128.2 271.1M2130 271.3L2131.2 268.9M2132.3 270.3L2133.4 269.8M2133.4 269.8L2134.5 269.2M2134.5 269.2L2136 265.6M2136 265.6L2137.7 257.2M2137.7 257.2L2139.5 255.7M2139.5 255.7L2141 253.3M2141 253.3L2142.8 249.7M2148.3 264L2150.2 261.7M2153.5 265.5L2154.5 264.3M2154.5 264.3L2156.1 261.7M2163.9 276.7L2165.1 274.6M2165.1 274.6L2166.5 270.1M2166.5 270.1L2167.7 268M2167.7 268L2169.6 265.7M2169.6 265.7L2171.3 261.7M2171.3 261.7L2172.6 261.5M2174.1 263.7L2175.9 259.8M2177.5 265.4L2179 259.8M2179 259.8L2180.3 259.5M2181.4 265.6L2183 263.2M2183 263.2L2184.7 260M2191.9 268.1L2193 264.6M2194.1 268.7L2195.9 268.4M2197.2 269.8L2198.9 268.6M2198.9 268.6L2200.2 267.2M2202.9 270.1L2204.8 266.8M2208.9 272.4L2210.3 266.6M2217.2 280.9L2218.2 280.8M2225.7 286L2226.9 281.5M2228.6 284.6L2230.4 283.8M2230.4 283.8L2231.4 282.7M2231.4 282.7L2233.1 281M2233.1 281L2234.9 280.7M2236.8 284.4L2237.8 280.7M2239.4 286.2L2240.5 280.6M2240.5 280.6L2242.1 271.7M2242.1 271.7L2243.9 266.3M2243.9 266.3L2244.9 262.6M2244.9 262.6L2246.5 258.8M2246.5 258.8L2248.1 257.7M2254.4 270.8L2256.2 268.1M2256.2 268.1L2257.4 264.6M2259.3 268.5L2261 265.9M2262.6 269.9L2264.3 267.2M2264.3 267.2L2265.6 265.8M2270.8 282.4L2272.1 281.2M2273.3 284.3L2274.9 283.4M2274.9 283.4L2276.6 274.8M2278.4 276.8L2280.2 274.9M2281.4 276.3L2283.2 274.9M2283.2 274.9L2285 272.4M2286.1 273.4L2287.8 270.8M2289.4 275L2290.7 272.8M2290.7 272.8L2292.3 271.9M2292.3 271.9L2293.5 270.6M2295.1 274L2296.5 273.3M2301.3 291.3L2302.8 291.3M2302.8 291.3L2304.3 289.2M2304.3 289.2L2305.5 288.9M2307.1 289.5L2308.6 289.4M2308.6 289.4L2310.1 287.6M2311.1 292.1L2312.4 286.7M2314 290.2L2315.1 288.8M2315.1 288.8L2316.5 288.2M2316.5 288.2L2317.5 285.6M2319.4 290.6L2320.8 289M2323.4 291.5L2325.1 290.9M2325.1 290.9L2327 287.9M2327 287.9L2328 287.7M2328 287.7L2329.2 284.5M2330.2 285.6L2332 285.1M2333.9 287.7L2334.9 285.9M2334.9 285.9L2336.3 283.1M2341.5 286.3L2342.9 285M2344 288L2345.9 283.7M2348.3 284.7L2350.1 279.6M2350.1 279.6L2351.1 276.5M2351.1 276.5L2352.7 272.5M2352.7 272.5L2354.6 269.4M2357.6 274.3L2358.9 274.2M2358.9 274.2L2360.6 271.7M2363 274.3L2364.1 270.6M2365.2 271.3L2366.3 269.7M2366.3 269.7L2367.4 263.1M2376.1 288.4L2377.7 285.8M2379 287.7L2380.4 286.3M2380.4 286.3L2381.6 283.7M2382.6 286.6L2384.1 283.4M2385.9 284.2L2387.3 283.6M2388.5 287.6L2389.8 283.8M2391.3 284.7L2393.1 283.6M2393.1 283.6L2395 283.4M2396.8 287.7L2398 287.4M2398 287.4L2399.2 286.9M2402.3 293.1L2404.1 289.2M2404.1 289.2L2405.4 286.6M2405.4 286.6L2406.4 279M2406.4 279L2407.7 272.8M2407.7 272.8L2408.7 270.8M2408.7 270.8L2410 265.4M2411 269.1L2412.5 263.6M2413.9 267.2L2415.1 261.2M2415.1 261.2L2416.2 251.2M2416.2 251.2L2417.9 243.9M2417.9 243.9L2419.1 231.4M2424.4 241.5L2425.9 235.7M2427 237.1L2428.4 233.6M2428.4 233.6L2429.4 232.5M2429.4 232.5L2430.7 230.6M2430.7 230.6L2432.5 224.9M2433.5 226.5L2434.9 223.9M2434.9 223.9L2436.2 216.2M2436.2 216.2L2437.9 214.8M2437.9 214.8L2439.1 212.7M2439.1 212.7L2440.6 206M2442.1 206.3L2443.5 200M2445.2 204.3L2447 198.7M2447 198.7L2448.6 198.1M2448.6 198.1L2450.3 194.1M2452.1 201L2453.5 196.1M2453.5 196.1L2455 194M2456 195L2457.2 184.2M2457.2 184.2L2458.3 181.6M2458.3 181.6L2460 174.4M2461.1 177.8L2462.3 153.1M2462.3 153.1L2463.8 132.2M2463.8 132.2L2465.3 121.2M2469.2 139.1L2470.6 136.4M2472.8 139.5L2474.6 136M2483.8 216.6L2485.1 202.3M2485.1 202.3L2486.4 194.4M2486.4 194.4L2488.3 184M2488.3 184L2490.1 170.8M2490.1 170.8L2491.9 151.6M2497.9 185.7L2499 179.4M2499 179.4L2500.4 168M2501.6 171.9L2503.3 163.9M2503.3 163.9L2504.8 157.4M2504.8 157.4L2506.6 152.3M2506.6 152.3L2507.7 146.2M2508.9 146.3L2510.1 146M2514.6 150.4L2515.8 140.4M2515.8 140.4L2517.4 134.6M2519 141.3L2520.4 132.7M2521.8 134.8L2523 129.5M2524.1 130.8L2525.5 129.9M2525.5 129.9L2526.7 126.9M2532.9 162.7L2534.4 160.2M2534.4 160.2L2535.9 157M2535.9 157L2537.1 156.1M2538.5 157.8L2540.1 153.9M2541.4 162.8L2542.6 159.6M2542.6 159.6L2544 151.8M2544 151.8L2545.9 145.2M2548.7 171.4L2550.1 160.3M2550.1 160.3L2551.4 139M2551.4 139L2553.1 121.6M2554.3 127.8L2556 113.2M2560.6 166.4L2562.1 159.7M2562.1 159.7L2563.8 155.7M2568 166.5L2569 166.1M2569 166.1L2570.5 160M2570.5 160L2572.3 158.7M2576.9 177.6L2578.3 177.3M2578.3 177.3L2579.5 168.3M2579.5 168.3L2581 167.4M2582.3 188L2584.1 175.6M2584.1 175.6L2585.5 163.1M2585.5 163.1L2586.8 154.1M2589.4 180.4L2590.6 174M2590.6 174L2592.4 167.5M2592.4 167.5L2593.6 158.1M2597.9 194.6L2599.6 182.6M2601.5 207.2L2603 191.2M2603 191.2L2604.3 188.2M2610.5 204.7L2612 195.2M2612 195.2L2613.8 185.9M2613.8 185.9L2615.2 170.3M2621.1 200.4L2621.5 195.3" fill="none" stroke="#46b548" stroke-width="2" stroke-linecap="round"/><path d="M1056.2 399.2L1057.4 400.3M1057.4 400.3L1058.4 400.6M1059.8 400.3L1061.2 400.9M1061.2 400.9L1062.6 401.6M1062.6 401.6L1063.7 402.8M1065.4 402.7L1066.6 403.9M1066.6 403.9L1068.5 404.3M1068.5 404.3L1069.8 405.3M1075 402.6L1076.5 402.9M1078.9 401.3L1080.1 402.2M1081.5 401.4L1083 401.4M1083 401.4L1084.3 401.8M1085.9 401.4L1087.4 402.7M1087.4 402.7L1089.2 404M1089.2 404L1090.5 405.1M1091.6 404.7L1093.2 405.1M1093.2 405.1L1094.7 405.3M1094.7 405.3L1096.3 407.1M1096.3 407.1L1097.8 407.7M1097.8 407.7L1099.1 407.7M1099.1 407.7L1100.6 407.9M1100.6 407.9L1102 408.6M1129.6 378.9L1131 379.5M1132.2 377.7L1133.6 378M1133.6 378L1135.1 378.5M1150.1 367.3L1151.4 368.3M1151.4 368.3L1153.2 372.1M1153.2 372.1L1154.3 372.3M1154.3 372.3L1155.7 373.6M1155.7 373.6L1156.8 375.8M1160.1 372.8L1161.2 372.9M1161.2 372.9L1162.4 373.8M1163.6 371.2L1165.4 372M1165.4 372L1166.6 372.5M1166.6 372.5L1167.6 373.4M1167.6 373.4L1169.5 376M1171.1 375.9L1172.4 376.8M1172.4 376.8L1174.1 378.9M1174.1 378.9L1175.8 379.4M1175.8 379.4L1177 381.3M1177 381.3L1178.9 382.5M1184.8 374.6L1186 376.1M1186 376.1L1187.7 379.2M1187.7 379.2L1189.1 379.9M1189.1 379.9L1191 381.1M1193.5 378.5L1194.7 378.7M1199.6 373.6L1201.2 374.8M1206.1 370.5L1207.8 373M1209.2 372.1L1211 373.8M1212.2 372.7L1213.3 375.2M1215 373.9L1216.8 376.9M1218.4 376.1L1219.8 376.3M1219.8 376.3L1220.9 379M1222.4 378.4L1224.3 378.7M1224.3 378.7L1226.1 380.1M1236.5 372.8L1238.3 373.6M1238.3 373.6L1239.8 374.2M1239.8 374.2L1240.8 374.4M1242 373.5L1243.7 374.3M1243.7 374.3L1245.1 376.1M1246.6 375.4L1248.1 376.7M1249.8 376.7L1251.3 378M1251.3 378L1252.5 380.1M1252.5 380.1L1254 380.2M1254 380.2L1255.7 381.7M1266.5 376.2L1268.3 376.4M1269.5 375.1L1270.9 375.7M1270.9 375.7L1272.1 376.4M1272.1 376.4L1273.7 379M1275.5 378.3L1277.1 380.3M1277.1 380.3L1278.3 381.4M1280.1 379.7L1282 380M1282 380L1283.4 381.4M1285.2 379.3L1286.6 379.9M1287.9 378.9L1289.2 379.9M1291.6 377.7L1292.9 379M1294.3 377.4L1296.2 379.1M1299.3 376.9L1301 377.2M1301 377.2L1302.2 377.4M1302.2 377.4L1304 378.1M1314.7 360.2L1316.4 361.4M1316.4 361.4L1318.2 364M1318.2 364L1319.5 365.2M1321.4 365.1L1322.5 366.3M1323.7 365.5L1324.8 365.5M1324.8 365.5L1326 366.5M1326 366.5L1327.3 368M1330.7 367L1331.7 368.5M1333.2 367.1L1334.7 369.4M1349.7 352.4L1350.8 353.3M1350.8 353.3L1352.6 358.3M1352.6 358.3L1354.2 358.4M1354.2 358.4L1355.4 359.7M1355.4 359.7L1356.8 360.8M1356.8 360.8L1358.2 362.1M1364.7 352.8L1366.1 352.8M1369 349.2L1370.2 350.5M1370.2 350.5L1371.6 351.4M1371.6 351.4L1372.6 353.1M1372.6 353.1L1373.8 354.4M1378.7 346.4L1380 346.6M1382.7 345.1L1384.4 350.1M1384.4 350.1L1386 351M1387.7 350.4L1389.2 352.8M1389.2 352.8L1391 353.4M1398.5 349.1L1400.2 350.2M1409.9 342.3L1411.1 345.1M1411.1 345.1L1412.3 345.4M1414.2 345L1415.5 345.3M1415.5 345.3L1417.1 346.7M1419.7 344.9L1421 347.3M1423.3 345.2L1424.5 346.7M1428.8 341.3L1429.9 342.9M1429.9 342.9L1431.1 343.2M1432.9 339.5L1434.3 342.6M1437.5 340.3L1439.3 340.3M1440.8 340L1442.3 343.1M1443.4 342.6L1444.9 343.1M1446.5 341.4L1448.3 343.3M1449.3 342L1450.8 344.5M1452.1 344L1453.4 345M1455.1 342.3L1456.8 344M1460.8 339L1462.2 340.6M1466.1 334.4L1467.9 335M1467.9 335L1469.7 335.6M1469.7 335.6L1471 337.1M1472.1 337L1474 339.8M1475.7 339.5L1477.5 341.2M1479 340.8L1480.1 341.1M1480.1 341.1L1481.5 341.6M1483.1 340.2L1484.1 343M1486.5 341.1L1488.2 344.1M1492.1 342L1493.2 342.5M1493.2 342.5L1495 344.4M1495 344.4L1496.2 346.5M1499.2 345.3L1500.3 346.3M1500.3 346.3L1501.4 346.5M1501.4 346.5L1502.6 348.2M1502.6 348.2L1504.4 348.6M1508.6 344L1509.8 346.8M1510.9 345.1L1512.5 346.9M1513.7 345L1514.9 345.9M1514.9 345.9L1516.3 348.3M1519.1 344.5L1520.8 347.2M1523.2 344.5L1525 345.7M1525 345.7L1526.8 345.8M1528 342.3L1529.1 343.5M1529.1 343.5L1530.8 347.9M1530.8 347.9L1532.4 349.8M1532.4 349.8L1534.1 352.3M1534.1 352.3L1535.6 353.8M1535.6 353.8L1537.3 357.7M1537.3 357.7L1539.1 360.5M1540.4 359.1L1541.6 361M1543.3 359.7L1544.3 361.3M1545.8 361.2L1547 362.2M1548.1 361.5L1549.5 363.5M1552.5 361L1553.7 363.2M1555.3 361.1L1556.3 361.6M1558 361.2L1559.2 361.9M1561 360.2L1562.1 360.4M1562.1 360.4L1563.4 361.2M1563.4 361.2L1564.6 361.4M1566.3 360.2L1567.5 361.5M1569.9 359.4L1571.6 360.8M1571.6 360.8L1573.5 362.7M1574.7 362.5L1576 364.5M1577.9 363.8L1579.2 364.7M1582.2 362.9L1583.5 364.7M1585.3 363.4L1587.2 363.9M1588.5 362.3L1590.3 364.9M1590.3 364.9L1591.4 365.1M1594 364.9L1595 365.6M1595 365.6L1596.3 368.2M1596.3 368.2L1597.4 368.6M1598.6 367.3L1600.4 369.2M1601.8 366.6L1603.2 367.1M1605 366L1606.3 367.7M1607.4 366L1609.1 366.7M1610.1 364.3L1611.2 366.7M1614.2 364.5L1615.5 366.8M1617 365.4L1618.7 366.2M1619.9 365.8L1621.6 368.5M1624.2 365.2L1625.6 366.7M1636 344.7L1637.3 346.8M1637.3 346.8L1638.4 346.8M1638.4 346.8L1640.1 350.3M1640.1 350.3L1641.1 351.8M1641.1 351.8L1642.6 352.7M1647.5 345.6L1648.9 346.4M1650.3 343.2L1651.7 343.3M1661.2 333.4L1663 334.6M1663 334.6L1664.2 335.3M1664.2 335.3L1666.1 337.8M1666.1 337.8L1667.3 340.3M1667.3 340.3L1668.9 342.8M1674.9 329.6L1676 331M1677.5 327.9L1678.9 328.2M1680.3 328L1682 333.9M1682 333.9L1683.1 334.3M1683.1 334.3L1684.6 335.5M1689.9 325.2L1691.2 325.6M1701.6 284.9L1703.4 286.2M1703.4 286.2L1704.9 289M1704.9 289L1706.3 294.1M1720.4 260.3L1721.9 265.8M1721.9 265.8L1723.4 267.8M1723.4 267.8L1724.6 273.1M1726.5 269.6L1727.9 273M1729.8 267.9L1730.9 274M1732.8 273.8L1733.8 278.1M1733.8 278.1L1735.2 279.8M1735.2 279.8L1736.7 281.4M1736.7 281.4L1737.9 282.6M1739.1 281.3L1740.8 284M1742 280.5L1743.4 282.4M1744.7 280.2L1745.9 283.9M1747.7 280.2L1749.2 284.6M1749.2 284.6L1750.3 285.3M1751.4 284L1752.9 284.8M1752.9 284.8L1754.2 284.9M1754.2 284.9L1755.7 286.6M1755.7 286.6L1757.3 288.3M1758.7 287.4L1760.2 291.7M1760.2 291.7L1761.4 294.4M1763.1 294.3L1764.3 295.5M1765.4 294.6L1766.8 295.8M1766.8 295.8L1768.2 298.8M1775.5 287L1777.4 287.2M1779.1 284.9L1781 287.5M1781 287.5L1782.9 290.8M1785.9 288L1787.2 292.9M1787.2 292.9L1788.3 294.6M1788.3 294.6L1789.6 295M1799.9 277.9L1801.6 281.2M1801.6 281.2L1803 287.4M1803 287.4L1804.4 291.5M1804.4 291.5L1805.9 293M1807.7 288.3L1809.6 288.5M1810.9 287.5L1812.2 290.1M1813.7 289.8L1815.4 293.9M1815.4 293.9L1816.5 297.7M1816.5 297.7L1817.6 300M1817.6 300L1818.8 301.3M1818.8 301.3L1820.7 304M1820.7 304L1822.3 304.4M1823.3 304.2L1824.4 308.5M1824.4 308.5L1825.8 309.6M1825.8 309.6L1827.6 309.8M1827.6 309.8L1828.8 313.6M1829.8 311.6L1831.1 313.6M1831.1 313.6L1832.5 315.2M1832.5 315.2L1834 317.1M1834 317.1L1835.2 317.4M1836.6 315.2L1838.4 315.9M1839.6 315.3L1841.2 319.2M1844.1 315.6L1845.7 318.4M1851.9 308.4L1853.3 309.1M1856.3 307.1L1857.8 311.7M1858.9 308L1860.4 309.6M1860.4 309.6L1862 311.1M1864.4 307.3L1866.2 310.9M1867.9 306.9L1869.6 310.5M1873.6 307.5L1874.6 307.9M1874.6 307.9L1876.3 309.4M1879.3 308.3L1880.7 309.3M1882.1 307.2L1883.7 311.2M1885.9 308.4L1887.1 311.2M1887.1 311.2L1889 311.9M1889 311.9L1890.3 313M1891.6 309.4L1893.4 310M1900.4 304L1902.1 306M1903.4 305.5L1904.9 306.4M1904.9 306.4L1906.7 308M1906.7 308L1907.8 308.1M1907.8 308.1L1909.6 309.8M1910.7 308.6L1911.8 312.1M1911.8 312.1L1913.3 312.6M1915 310L1916.5 311.9M1916.5 311.9L1918.3 314.7M1920.1 312.4L1921.8 317.8M1923.7 315.4L1924.9 316.3M1924.9 316.3L1925.9 318.4M1930.6 307.7L1931.7 309.4M1937.2 295.8L1938.5 300.8M1938.5 300.8L1939.9 302.2M1941.5 300.1L1942.8 304.1M1942.8 304.1L1944.5 305.4M1944.5 305.4L1946.2 306.6M1946.2 306.6L1947.4 308.4M1949.6 304.1L1950.8 307.6M1952.7 303.1L1954.1 305.1M1955.8 302.9L1957.3 303.3M1959 302.2L1960.9 302.4M1960.9 302.4L1962.1 304.8M1963.5 302.1L1965.1 302.2M1965.1 302.2L1966.8 305.8M1969.8 304.8L1971.2 307.1M1973.3 303L1974.5 306.2M1977.8 301.9L1979.2 303.1M1979.2 303.1L1980.8 304.1M1983.7 302.2L1985.5 305.5M1987.2 303.6L1988.5 307.3M1990.1 304.6L1991.5 308.2M1992.7 303.8L1994 305.6M1996.9 301.3L1998.2 301.8M1999.3 300L2000.5 303.6M2002.1 299.2L2004 299.4M2004 299.4L2005.3 304.3M2010 300.3L2011.2 302M2011.2 302L2012.2 302.3M2012.2 302.3L2014 304.2M2014 304.2L2015.4 304.3M2016.8 302.1L2018.4 303.8M2018.4 303.8L2020 306.7M2023.1 304.8L2024.3 306.5M2024.3 306.5L2026.1 307.1M2026.1 307.1L2027.7 307.8M2032.3 304.7L2033.7 307M2041.2 299.5L2042.8 302.9M2046 299.6L2047.5 300.5M2047.5 300.5L2049.2 304.9M2053.8 289.9L2055.4 292.5M2058.7 290.7L2060.3 292.6M2062 292.5L2063.9 295.3M2063.9 295.3L2064.9 295.7M2066.3 295.4L2067.7 297.7M2070.5 295.4L2072.2 298.5M2073.7 294L2075.4 294.2M2076.6 292.2L2078.3 295.1M2083.2 289.7L2084.8 291.5M2096.8 263.9L2098.2 266.8M2098.2 266.8L2099.8 270.5M2099.8 270.5L2101.1 274M2102.9 271L2104.6 278.7M2106.3 273.6L2108.1 275.7M2109.1 271.3L2110.9 274.2M2112.1 270L2113.3 270.2M2115 270L2116.1 273.6M2117.8 269.6L2119.6 273M2119.6 273L2121.3 274M2121.3 274L2123.1 274.8M2124.9 270.5L2126.5 272.2M2128.2 271.1L2130 271.3M2131.2 268.9L2132.3 270.3M2142.8 249.7L2144.1 258.4M2144.1 258.4L2145.2 259.7M2145.2 259.7L2146.8 259.7M2146.8 259.7L2148.3 264M2150.2 261.7L2152.1 262.9M2152.1 262.9L2153.5 265.5M2156.1 261.7L2157.9 263.8M2157.9 263.8L2159.3 267.3M2159.3 267.3L2161 268.3M2161 268.3L2162.4 272.1M2162.4 272.1L2163.9 276.7M2172.6 261.5L2174.1 263.7M2175.9 259.8L2177.5 265.4M2180.3 259.5L2181.4 265.6M2184.7 260L2186.2 260.1M2186.2 260.1L2187.8 262.7M2187.8 262.7L2189.3 264.7M2189.3 264.7L2190.5 266.2M2190.5 266.2L2191.9 268.1M2193 264.6L2194.1 268.7M2195.9 268.4L2197.2 269.8M2200.2 267.2L2201.5 267.6M2201.5 267.6L2202.9 270.1M2204.8 266.8L2206.3 266.8M2206.3 266.8L2207.4 271.7M2207.4 271.7L2208.9 272.4M2210.3 266.6L2211.7 270.3M2211.7 270.3L2213.5 272.8M2213.5 272.8L2214.9 273.3M2214.9 273.3L2216 279.1M2216 279.1L2217.2 280.9M2218.2 280.8L2219.8 281.6M2219.8 281.6L2221.7 281.7M2221.7 281.7L2223.5 282.1M2223.5 282.1L2224.5 285.7M2224.5 285.7L2225.7 286M2226.9 281.5L2228.6 284.6M2234.9 280.7L2236.8 284.4M2237.8 280.7L2239.4 286.2M2248.1 257.7L2249.8 261.6M2249.8 261.6L2251.4 265.6M2251.4 265.6L2252.7 265.9M2252.7 265.9L2254.4 270.8M2257.4 264.6L2259.3 268.5M2261 265.9L2262.6 269.9M2265.6 265.8L2267.4 270M2267.4 270L2269 276.1M2269 276.1L2270.8 282.4M2272.1 281.2L2273.3 284.3M2276.6 274.8L2278.4 276.8M2280.2 274.9L2281.4 276.3M2285 272.4L2286.1 273.4M2287.8 270.8L2289.4 275M2293.5 270.6L2295.1 274M2296.5 273.3L2298.3 282.3M2298.3 282.3L2299.5 284.5M2299.5 284.5L2301.3 291.3M2305.5 288.9L2307.1 289.5M2310.1 287.6L2311.1 292.1M2312.4 286.7L2314 290.2M2317.5 285.6L2319.4 290.6M2320.8 289L2322 290.4M2322 290.4L2323.4 291.5M2329.2 284.5L2330.2 285.6M2332 285.1L2333.9 287.7M2336.3 283.1L2338.1 283.9M2338.1 283.9L2339.6 286.1M2339.6 286.1L2341.5 286.3M2342.9 285L2344 288M2345.9 283.7L2346.9 283.9M2346.9 283.9L2348.3 284.7M2354.6 269.4L2355.8 274.2M2355.8 274.2L2357.6 274.3M2360.6 271.7L2361.9 273.1M2361.9 273.1L2363 274.3M2364.1 270.6L2365.2 271.3M2367.4 263.1L2369.3 269.2M2369.3 269.2L2371.1 281M2371.1 281L2372.9 284.2M2372.9 284.2L2374.3 284.5M2374.3 284.5L2376.1 288.4M2377.7 285.8L2379 287.7M2381.6 283.7L2382.6 286.6M2384.1 283.4L2385.9 284.2M2387.3 283.6L2388.5 287.6M2389.8 283.8L2391.3 284.7M2395 283.4L2396.8 287.7M2399.2 286.9L2400.4 288.3M2400.4 288.3L2402.3 293.1M2410 265.4L2411 269.1M2412.5 263.6L2413.9 267.2M2419.1 231.4L2420.2 231.5M2420.2 231.5L2421.6 231.8M2421.6 231.8L2422.8 236.8M2422.8 236.8L2424.4 241.5M2425.9 235.7L2427 237.1M2432.5 224.9L2433.5 226.5M2440.6 206L2442.1 206.3M2443.5 200L2445.2 204.3M2450.3 194.1L2452.1 201M2455 194L2456 195M2460 174.4L2461.1 177.8M2465.3 121.2L2466.4 130.8M2466.4 130.8L2468.1 132.9M2468.1 132.9L2469.2 139.1M2470.6 136.4L2471.7 137.7M2471.7 137.7L2472.8 139.5M2474.6 136L2476.1 158.3M2476.1 158.3L2477.3 170.9M2477.3 170.9L2479.1 183.7M2479.1 183.7L2480.5 196.6M2480.5 196.6L2482 201.9M2482 201.9L2483.8 216.6M2491.9 151.6L2493.4 168.7M2493.4 168.7L2495.2 171.3M2495.2 171.3L2496.6 182.4M2496.6 182.4L2497.9 185.7M2500.4 168L2501.6 171.9M2507.7 146.2L2508.9 146.3M2510.1 146L2512 148.7M2512 148.7L2513.2 148.8M2513.2 148.8L2514.6 150.4M2517.4 134.6L2519 141.3M2520.4 132.7L2521.8 134.8M2523 129.5L2524.1 130.8M2526.7 126.9L2528.2 142.5M2528.2 142.5L2529.7 149.8M2529.7 149.8L2531.3 156.5M2531.3 156.5L2532.9 162.7M2537.1 156.1L2538.5 157.8M2540.1 153.9L2541.4 162.8M2545.9 145.2L2547.6 155.6M2547.6 155.6L2548.7 171.4M2553.1 121.6L2554.3 127.8M2556 113.2L2557.3 125.5M2557.3 125.5L2558.9 151.8M2558.9 151.8L2560.6 166.4M2563.8 155.7L2565.2 159.3M2565.2 159.3L2566.8 164.4M2566.8 164.4L2568 166.5M2572.3 158.7L2573.7 167M2573.7 167L2575.5 173.2M2575.5 173.2L2576.9 177.6M2581 167.4L2582.3 188M2586.8 154.1L2588.3 162.2M2588.3 162.2L2589.4 180.4M2593.6 158.1L2595.4 173.8M2595.4 173.8L2596.4 190.4M2596.4 190.4L2597.9 194.6M2599.6 182.6L2601.5 207.2M2604.3 188.2L2605.8 192M2605.8 192L2607.7 200.9M2607.7 200.9L2609.2 201.4M2609.2 201.4L2610.5 204.7M2615.2 170.3L2616.8 188.2M2616.8 188.2L2618.1 195.2M2618.1 195.2L2619.8 195.5M2619.8 195.5L2621.1 200.4" fill="none" stroke="#cf5a40" stroke-width="2" stroke-linecap="round"/><path d="M1057 398.5H2670" stroke="#2e3a6e" stroke-width="1.1"/><path d="M1057 411.5H2670" stroke="#3a3f6a" stroke-width="1" stroke-dasharray="14 12"/><path d="M1056 115V424" stroke="#000" stroke-width="2.2"/><path d="M1097.3 531.2v-8.9h4v8.9M1117.4 531.2v-8.9h9v8.9M1127.4 531.2v-13.4h7v13.4M1210.5 531.2v-13.4h3v13.4M1235.5 531.2v-8.9h4v8.9M1242.4 531.2v-8.9h3v8.9M1272.9 531.2v-8.9h9v8.9M1346.9 531.2v-17.8h3v17.8M1362.8 531.2v-17.8h5v17.8M1372.8 531.2v-17.8h3v17.8M1377.8 531.2v-22.3h4v22.3M1420.3 531.2v-22.3h3v22.3M1433.3 531.2v-22.3h4v22.3M1469.8 531.2v-22.3h4v22.3M1490.8 531.2v-22.3h4v22.3M1505.6 531.2v-22.3h4v22.3M1526.4 531.2v-20.4h5v20.4M1532.4 531.2v-22.3h5v22.3M1543.9 531.2v-17.8h3v17.8M1566.1 531.2v-17.8h4v17.8M1572.1 531.2v-17.8h5v17.8M1585.6 531.2v-17.8h3v17.8M1589.6 531.2v-13.4h4v13.4M1594.6 531.2v-13.4h5v13.4M1624.7 531.2v-13.4h4v13.4M1631.7 531.2v-17.8h3v17.8M1647.2 531.2v-17.8h3v17.8M1652.2 531.2v-22.3h4v22.3M1684.6 531.2v-22.3h5v22.3M1701.9 531.2v-40.1h4v40.1M1726.9 531.2v-44.6h3v44.6M1730.9 531.2v-44.6h3v44.6M1739.9 531.2v-40.1h3v40.1M1757.2 531.2v-40.1h4v40.1M1776.7 531.2v-40.1h6v40.1M1803.3 531.2v-40.1h6v40.1M1827.3 531.2v-31.2h4v31.2M1837.3 531.2v-31.2h4v31.2M1943.4 531.2v-35.7h3v35.7M1957.3 531.2v-35.7h6v35.7M1973.2 531.2v-31.2h4v31.2M1994.7 531.2v-35.7h3v35.7M2022.1 531.2v-35.7h4v35.7M2050.1 531.2v-35.7h6v35.7M2068.1 531.2v-35.7h4v35.7M2076.1 531.2v-35.7h6v35.7M2141.8 531.2v-49.1h6v49.1M2149.3 531.2v-49.1h6v49.1M2245 531.2v-44.6h3v44.6M2291.6 531.2v-40.1h4v40.1M2305.6 531.2v-40.1h6v40.1M2314.6 531.2v-35.7h4v35.7M2341.5 531.2v-40.1h6v40.1M2369.2 531.2v-44.6h4v44.6M2423.3 531.2v-58h4v58M2428.3 531.2v-58h3v58M2440.8 531.2v-62.4h4v62.4M2515.5 531.2v-84.7h6v84.7M2522.5 531.2v-89.2h3v89.2M2541.4 531.2v-80.3h6v80.3M2551.4 531.2v-86.4h6v86.4M2563.9 531.2v-80.3h3v80.3M2579.4 531.2v-75.8h4v75.8M2587.9 531.2v-80.3h6v80.3" fill="#d6f8d3" stroke="#47b84a" stroke-width="1"/><path d="M1057.5 531.2v-8.9h5v8.9zM1062.5 531.2v-8.9h9v8.9zM1072.5 531.2v-8.9h7v8.9zM1079.5 531.2v-8.9h1v8.9zM1082.8 531.2v-8.9h4v8.9zM1087.8 531.2v-8.9h7v8.9zM1094.8 531.2v-8.9h2v8.9zM1101.8 531.2v-8.9h3v8.9zM1111.5 531.2v-8.9h2v8.9zM1134.4 531.2v-8.9h7v8.9zM1146 531.2v-13.4h1v13.4zM1148 531.2v-13.4h1v13.4zM1157.8 531.2v-8.9h7v8.9zM1164.8 531.2v-13.4h4v13.4zM1168.8 531.2v-13.4h4v13.4zM1177 531.2v-11.8h2v11.8zM1180 531.2v-8.9h4v8.9zM1184 531.2v-13.4h5v13.4zM1189.5 531.2v-8.9h5v8.9zM1195.5 531.2v-8.9h2v8.9zM1197.5 531.2v-13.4h5v13.4zM1202.5 531.2v-8.9h5v8.9zM1207.5 531.2v-8.9h3v8.9zM1213.5 531.2v-13.4h2v13.4zM1216 531.2v-13.4h4v13.4zM1220.5 531.2v-8.9h7v8.9zM1245.4 531.2v-8.9h2v8.9zM1247.4 531.2v-19.4h7v19.4zM1254.4 531.2v-8.9h9v8.9zM1263.4 531.2v-8.9h2v8.9zM1265.9 531.2v-13.4h1v13.4zM1267.9 531.2v-8.9h4v8.9zM1271.9 531.2v-8.9h1v8.9zM1281.9 531.2v-8.9h2v8.9zM1284.4 531.2v-8.9h4v8.9zM1288.9 531.2v-8.9h1v8.9zM1290.9 531.2v-13.4h1v13.4zM1292.9 531.2v-11.8h7v11.8zM1300.4 531.2v-7.3h9v7.3zM1309.4 531.2v-13.4h2v13.4zM1311.9 531.2v-13.4h4v13.4zM1316.9 531.2v-17.8h2v17.8zM1318.9 531.2v-10.4h7v10.4zM1326.9 531.2v-10.6h2v10.6zM1335.9 531.2v-13.4h2v13.4zM1338.9 531.2v-17.8h3v17.8zM1342.9 531.2v-13.4h2v13.4zM1356.8 531.2v-17.8h5v17.8zM1383.3 531.2v-22.3h2v22.3zM1387.3 531.2v-17.8h2v17.8zM1390.3 531.2v-17.8h2v17.8zM1396.8 531.2v-22.3h1v22.3zM1398.8 531.2v-22.3h1v22.3zM1401.3 531.2v-17.8h2v17.8zM1417.8 531.2v-22.3h1v22.3zM1424.8 531.2v-17.8h4v17.8zM1430.8 531.2v-22.3h1.5v22.3zM1443.4 531.2v-22.3h2v22.3zM1451.3 531.2v-22.3h5v22.3zM1457.8 531.2v-22.3h1.5v22.3zM1475.8 531.2v-22.3h1v22.3zM1477.8 531.2v-22.3h4v22.3zM1483.8 531.2v-22.3h5v22.3zM1498.6 531.2v-17.8h1v17.8zM1500.6 531.2v-17.8h4v17.8zM1510.6 531.2v-22.3h2v22.3zM1522.4 531.2v-22.3h2v22.3zM1538.4 531.2v-13.4h1v13.4zM1541.4 531.2v-13.4h1.5v13.4zM1553.1 531.2v-17.8h1.5v17.8zM1556.6 531.2v-17.8h1v17.8zM1559.1 531.2v-17.8h1v17.8zM1562.1 531.2v-17.8h3v17.8zM1579.1 531.2v-13.4h1v13.4zM1581.6 531.2v-17.8h3v17.8zM1601.6 531.2v-13.4h1v13.4zM1603.6 531.2v-13.4h2v13.4zM1607.6 531.2v-13.4h1v13.4zM1621.2 531.2v-17.5h2v17.5zM1629.7 531.2v-13.4h1v13.4zM1636.7 531.2v-22.3h3v22.3zM1641.2 531.2v-17.8h4v17.8zM1657.2 531.2v-22.3h2v22.3zM1673.6 531.2v-26.8h1.5v26.8zM1676.1 531.2v-26.8h1v26.8zM1679.1 531.2v-26.8h1v26.8zM1681.6 531.2v-26.8h2v26.8zM1707.4 531.2v-40.1h2v40.1zM1712.4 531.2v-40.1h1v40.1zM1714.4 531.2v-40.1h1v40.1zM1717.4 531.2v-44.6h1v44.6zM1719.9 531.2v-49.1h1v49.1zM1723.9 531.2v-44.6h1v44.6zM1736.9 531.2v-40.1h1v40.1zM1750.2 531.2v-44.6h4v44.6zM1762.2 531.2v-35.7h1.5v35.7zM1764.7 531.2v-35.7h1v35.7zM1766.7 531.2v-35.7h6v35.7zM1773.7 531.2v-40.1h1v40.1zM1784.7 531.2v-40.1h3v40.1zM1793.3 531.2v-40.1h1v40.1zM1795.8 531.2v-40.1h2v40.1zM1800.8 531.2v-40.1h1.5v40.1zM1810.8 531.2v-40.1h1.5v40.1zM1813.8 531.2v-40.1h1v40.1zM1815.8 531.2v-35.7h6v35.7zM1822.8 531.2v-31.2h1.5v31.2zM1834.3 531.2v-29.8h1v29.8zM1842.8 531.2v-26.8h1v26.8zM1845.3 531.2v-31.2h2v31.2zM1850.3 531.2v-31.2h1v31.2zM1871.4 531.2v-35.7h1v35.7zM1883.2 531.2v-31.2h3v31.2zM1888.2 531.2v-31.2h1v31.2zM1890.7 531.2v-31.2h1v31.2zM1905.5 531.2v-31.2h1v31.2zM1919.6 531.2v-31.2h1.5v31.2zM1925.4 531.2v-31.2h1v31.2zM1927.4 531.2v-31.2h2v31.2zM1930.4 531.2v-35.7h1.5v35.7zM1933.9 531.2v-35.7h1.5v35.7zM1936.9 531.2v-35.7h2v35.7zM1940.4 531.2v-35.8h2v35.8zM1947.4 531.2v-35.7h1v35.7zM1965.3 531.2v-31.2h1.5v31.2zM1970.7 531.2v-35.7h1.5v35.7zM1980.2 531.2v-35.7h6v35.7zM1987.2 531.2v-35.7h6v35.7zM1999.2 531.2v-35.7h1.5v35.7zM2010.8 531.2v-35.7h2v35.7zM2018.1 531.2v-36.4h1v36.4zM2027.6 531.2v-35.7h6v35.7zM2035.6 531.2v-35.7h2v35.7zM2039.1 531.2v-35.7h1v35.7zM2041.1 531.2v-35.7h1v35.7zM2043.1 531.2v-35.7h4v35.7zM2057.1 531.2v-35.7h1v35.7zM2060.1 531.2v-35.7h2v35.7zM2063.1 531.2v-35.7h1v35.7zM2065.6 531.2v-35.7h1.5v35.7zM2073.6 531.2v-41.3h1v41.3zM2083.1 531.2v-40.1h4v40.1zM2088.6 531.2v-41.8h1v41.8zM2092.6 531.2v-44.6h1v44.6zM2100.4 531.2v-44.6h2v44.6zM2103.9 531.2v-44.6h3v44.6zM2113.3 531.2v-44.6h2v44.6zM2117.3 531.2v-44.6h1v44.6zM2119.3 531.2v-44.6h2v44.6zM2122.3 531.2v-44.6h1v44.6zM2124.8 531.2v-44.6h2v44.6zM2127.8 531.2v-44.6h1v44.6zM2130.3 531.2v-44.6h2v44.6zM2133.3 531.2v-44.6h2v44.6zM2138.3 531.2v-49.1h1.5v49.1zM2162.7 531.2v-44.6h3v44.6zM2167.2 531.2v-44.6h2v44.6zM2183.2 531.2v-49.1h2v49.1zM2194.6 531.2v-49.1h1v49.1zM2198.6 531.2v-44.6h6v44.6zM2206.1 531.2v-44.6h4v44.6zM2214.3 531.2v-44.6h4v44.6zM2219.3 531.2v-40.1h1.5v40.1zM2221.8 531.2v-40.1h1v40.1zM2225.8 531.2v-40.1h1v40.1zM2228.3 531.2v-40.1h2v40.1zM2232.3 531.2v-40.1h3v40.1zM2249 531.2v-49.1h1v49.1zM2252 531.2v-44.6h1.5v44.6zM2255.5 531.2v-44.6h3v44.6zM2260.5 531.2v-44.6h4v44.6zM2266 531.2v-44.6h4v44.6zM2272 531.2v-40.1h1.5v40.1zM2279.1 531.2v-40.1h3v40.1zM2286.1 531.2v-44.6h1.5v44.6zM2298.6 531.2v-43.6h1v43.6zM2301.6 531.2v-35.7h3v35.7zM2312.6 531.2v-40.1h1v40.1zM2321.6 531.2v-36.4h1v36.4zM2324.1 531.2v-35.7h2v35.7zM2332.5 531.2v-40.1h1v40.1zM2335.5 531.2v-40.1h1.5v40.1zM2338 531.2v-40.1h2v40.1zM2349.5 531.2v-41.7h1v41.7zM2352.5 531.2v-44.6h2v44.6zM2364.2 531.2v-44.6h4v44.6zM2376.2 531.2v-40.1h2v40.1zM2381.2 531.2v-40.1h6v40.1zM2415.3 531.2v-49.1h1v49.1zM2418.3 531.2v-53.5h4v53.5zM2432.3 531.2v-62.4h2v62.4zM2435.3 531.2v-62.4h4v62.4zM2445.3 531.2v-66.9h1v66.9zM2446.8 531.2v-66.9h1v66.9zM2455.6 531.2v-66.9h1.5v66.9zM2458.6 531.2v-71.4h1v71.4zM2460.1 531.2v-75.8h4v75.8zM2465.1 531.2v-93.7h2v93.7zM2472.4 531.2v-84.7h2v84.7zM2475.9 531.2v-80.3h2v80.3zM2478.9 531.2v-75.8h2v75.8zM2490.3 531.2v-80.3h1v80.3zM2499.5 531.2v-75.8h1v75.8zM2502 531.2v-80.3h2v80.3zM2504.5 531.2v-80.3h1.5v80.3zM2507 531.2v-84.7h1v84.7zM2509 531.2v-84.7h3v84.7zM2513.5 531.2v-84.7h1.5v84.7zM2527.5 531.2v-86h6v86zM2534.5 531.2v-80.3h1.5v80.3zM2537 531.2v-80.3h1v80.3zM2547.9 531.2v-80.3h1v80.3zM2549.4 531.2v-75.8h1v75.8zM2558.4 531.2v-84.7h2v84.7zM2560.9 531.2v-80.3h1v80.3zM2568.4 531.2v-75.8h2v75.8zM2571.4 531.2v-80.3h3v80.3zM2576.4 531.2v-75.8h2v75.8zM2584.9 531.2v-80.3h2v80.3zM2595.4 531.2v-75.8h2v75.8zM2598.9 531.2v-71.4h2v71.4zM2601.9 531.2v-66.9h6v66.9zM2608.5 531.2v-74.9h3v74.9zM2612 531.2v-71.4h4v71.4zM2616 531.2v-66.9h5.5v66.9z" fill="#47b84a" stroke="#47b84a" stroke-width="0.4"/><path d="M1070.5 531.2v8.9h3v-8.9M1073.5 531.2v9.5h4v-9.5M1132 531.2v8.9h4v-8.9M1170.5 531.2v8.9h7v-8.9M1254.7 531.2v8.9h7v-8.9M1266.7 531.2v16.6h9v-16.6M1287.2 531.2v8.9h5v-8.9M1325.5 531.2v17.8h5v-17.8M1354.4 531.2v13.4h5v-13.4M1368.4 531.2v17.8h3v-17.8M1409.4 531.2v22.3h4v-22.3M1459.3 531.2v22.3h5v-22.3M1465.3 531.2v26.8h5v-26.8M1494.8 531.2v17.8h3v-17.8M1505.8 531.2v22.3h4v-22.3M1518.8 531.2v22.3h3v-22.3M1535.3 531.2v17.8h5v-17.8M1655.1 531.2v22.3h4v-22.3M1710.8 531.2v40.1h4v-40.1M1727.3 531.2v44.6h6v-44.6M1806.7 531.2v40.1h4v-40.1M1835.2 531.2v26.8h6v-26.8M1897 531.2v34h6v-34M1922 531.2v31.2h6v-31.2M1957.6 531.2v31.2h3v-31.2M1967.6 531.2v31.2h3v-31.2M2025.2 531.2v35.7h3v-35.7M2052.4 531.2v35.7h6v-35.7M2091.3 531.2v44.6h6v-44.6M2115.8 531.2v44.6h3v-44.6M2130.8 531.2v44.6h4v-44.6M2144.8 531.2v49.1h6v-49.1M2152.3 531.2v45.2h4v-45.2M2191.1 531.2v44.6h3v-44.6M2282.2 531.2v44.6h3v-44.6M2318.6 531.2v40.1h3v-40.1M2358.5 531.2v44.6h4v-44.6M2368.5 531.2v49.1h3v-49.1M2435.2 531.2v62.4h7v-62.4M2479.5 531.2v71.4h3v-71.4M2538.6 531.2v80.3h5v-80.3M2557.5 531.2v89.2h7v-89.2M2594 531.2v80.3h5v-80.3" fill="#ffdadd" stroke="#de4c4c" stroke-width="1"/><path d="M1057.5 531.2v8.9h1v-8.9zM1058.5 531.2v8.9h2v-8.9zM1060.5 531.2v7.3h3v-7.3zM1064.5 531.2v8.9h2v-8.9zM1067.5 531.2v8.9h1v-8.9zM1068.5 531.2v8.9h2v-8.9zM1078 531.2v8.9h1v-8.9zM1079.5 531.2v8.9h4v-8.9zM1084.5 531.2v8.9h4v-8.9zM1089 531.2v8.9h7v-8.9zM1096 531.2v8.9h3v-8.9zM1100 531.2v8.9h4v-8.9zM1104.5 531.2v8.9h2v-8.9zM1107 531.2v8.9h2v-8.9zM1109.5 531.2v8.9h2v-8.9zM1112 531.2v8.9h1v-8.9zM1114 531.2v8.9h5v-8.9zM1126.5 531.2v8.9h3v-8.9zM1129.5 531.2v8.9h2v-8.9zM1136 531.2v13.4h9v-13.4zM1145.5 531.2v13.4h2v-13.4zM1147.5 531.2v13.4h5v-13.4zM1153 531.2v8.9h5v-8.9zM1158.5 531.2v8.9h4v-8.9zM1163 531.2v13.4h2v-13.4zM1165 531.2v13.4h5v-13.4zM1184.1 531.2v13.4h5v-13.4zM1189.1 531.2v13.4h2v-13.4zM1192.1 531.2v8.9h4v-8.9zM1196.1 531.2v13.4h2v-13.4zM1198.1 531.2v13.4h9v-13.4zM1212.5 531.2v13.4h5v-13.4zM1217.5 531.2v8.9h1v-8.9zM1219 531.2v13.4h5v-13.4zM1224.5 531.2v8.9h5v-8.9zM1230 531.2v13.4h5v-13.4zM1244.7 531.2v13.4h1v-13.4zM1246.2 531.2v13.4h2v-13.4zM1262.2 531.2v13.4h4v-13.4zM1275.7 531.2v10.8h7v-10.8zM1283.7 531.2v8.9h2v-8.9zM1293.2 531.2v8.9h2v-8.9zM1296.7 531.2v8.9h1v-8.9zM1302.1 531.2v8.9h1v-8.9zM1305.1 531.2v8.9h4v-8.9zM1316.5 531.2v17.8h2v-17.8zM1319.5 531.2v13.4h4v-13.4zM1332 531.2v11.9h1v-11.9zM1334 531.2v13.4h1v-13.4zM1361.4 531.2v15h2v-15zM1365.4 531.2v17.8h1v-17.8zM1372.9 531.2v17.8h1v-17.8zM1375.4 531.2v17.8h2v-17.8zM1379.4 531.2v22.3h1v-22.3zM1381.9 531.2v22.3h1.5v-22.3zM1384.9 531.2v17.8h1.5v-17.8zM1387.9 531.2v17.8h1v-17.8zM1390.9 531.2v17.8h5v-17.8zM1397.9 531.2v17.8h1v-17.8zM1400.9 531.2v22.3h1v-22.3zM1403.9 531.2v22.3h4v-22.3zM1419.9 531.2v22.3h2v-22.3zM1423.9 531.2v17.8h1.5v-17.8zM1433.1 531.2v22.3h2v-22.3zM1437.1 531.2v22.3h5v-22.3zM1451.1 531.2v22.3h1v-22.3zM1453.1 531.2v22.3h1v-22.3zM1471.3 531.2v22.3h2v-22.3zM1479.9 531.2v29.2h2v-29.2zM1483.9 531.2v22.3h2v-22.3zM1498.8 531.2v21h5v-21zM1510.8 531.2v22.3h4v-22.3zM1516.3 531.2v22.3h1.5v-22.3zM1523.8 531.2v22.3h1v-22.3zM1542.3 531.2v13.4h1v-13.4zM1551 531.2v11.6h2v-11.6zM1557 531.2v17.8h1v-17.8zM1559 531.2v17.8h1v-17.8zM1566.7 531.2v13.4h1.5v-13.4zM1570.2 531.2v17.8h1v-17.8zM1573.2 531.2v13.4h1.5v-13.4zM1582.9 531.2v13.4h3v-13.4zM1594 531.2v13.4h1.5v-13.4zM1604.1 531.2v13.4h2v-13.4zM1608.1 531.2v13.4h1.5v-13.4zM1611.6 531.2v13.4h4v-13.4zM1616.6 531.2v13.4h5v-13.4zM1623.6 531.2v13.4h2v-13.4zM1631.3 531.2v17.8h1v-17.8zM1634.3 531.2v17.8h2v-17.8zM1637.3 531.2v17.8h2v-17.8zM1645.6 531.2v17.8h1v-17.8zM1648.6 531.2v22.3h1.5v-22.3zM1651.1 531.2v22.3h2v-22.3zM1661.1 531.2v26.8h1v-26.8zM1664.1 531.2v22.3h2v-22.3zM1678.3 531.2v35.5h2v-35.5zM1681.8 531.2v26.8h2v-26.8zM1684.8 531.2v26.8h4v-26.8zM1690.8 531.2v26.8h2v-26.8zM1694.8 531.2v31.2h3v-31.2zM1699.3 531.2v40.1h1v-40.1zM1701.3 531.2v40.1h1.5v-40.1zM1703.8 531.2v40.1h4v-40.1zM1716.3 531.2v44.6h1v-44.6zM1720.3 531.2v49.1h2v-49.1zM1723.3 531.2v45.9h1v-45.9zM1734.3 531.2v44.6h6v-44.6zM1741.3 531.2v40.1h3v-40.1zM1746.3 531.2v40.1h1.5v-40.1zM1750.8 531.2v44.6h1v-44.6zM1752.8 531.2v40.1h1.5v-40.1zM1755.3 531.2v40.1h6v-40.1zM1764.3 531.2v40.1h1v-40.1zM1766.8 531.2v40.6h2v-40.6zM1770.3 531.2v40.1h3v-40.1zM1775.3 531.2v40.1h1v-40.1zM1777.8 531.2v40.1h1v-40.1zM1783.7 531.2v40.1h1v-40.1zM1786.7 531.2v40.1h4v-40.1zM1792.7 531.2v40.1h1v-40.1zM1794.7 531.2v40.1h2v-40.1zM1798.7 531.2v44.6h2v-44.6zM1802.7 531.2v40.1h2v-40.1zM1813.7 531.2v40.1h1v-40.1zM1816.7 531.2v35.7h4v-35.7zM1821.7 531.2v35.7h2v-35.7zM1824.7 531.2v35.7h4v-35.7zM1830.2 531.2v31.2h1v-31.2zM1833.2 531.2v26.8h1v-26.8zM1842.2 531.2v31.2h3v-31.2zM1846.2 531.2v31.2h1.5v-31.2zM1849.2 531.2v31.2h2v-31.2zM1869.7 531.2v31.2h1v-31.2zM1871.7 531.2v35.7h1v-35.7zM1889.5 531.2v31.2h1v-31.2zM1892 531.2v31.2h4v-31.2zM1904 531.2v35.7h3v-35.7zM1908.5 531.2v31.2h2v-31.2zM1911.5 531.2v31.2h3v-31.2zM1916 531.2v31.2h1.5v-31.2zM1919 531.2v31.2h2v-31.2zM1931 531.2v31.2h3v-31.2zM1935 531.2v36.2h1v-36.2zM1938 531.2v35.7h2v-35.7zM1951.2 531.2v35.7h1v-35.7zM1962.6 531.2v35.7h2v-35.7zM1972.6 531.2v35.7h1.5v-35.7zM1976.1 531.2v31.2h3v-31.2zM1980.6 531.2v35.7h2v-35.7zM1991.4 531.2v31.2h2v-31.2zM1996.4 531.2v35.7h1v-35.7zM1998.4 531.2v35.7h1v-35.7zM2000.9 531.2v35.7h1v-35.7zM2004.9 531.2v35.7h2v-35.7zM2008.4 531.2v35.7h2v-35.7zM2012.4 531.2v35.7h1v-35.7zM2014.4 531.2v31.2h4v-31.2zM2030.2 531.2v31.2h2v-31.2zM2035.2 531.2v31.2h4v-31.2zM2047.4 531.2v35.7h2v-35.7zM2061.4 531.2v35.7h1.5v-35.7zM2064.4 531.2v35.7h1v-35.7zM2073.8 531.2v35.7h2v-35.7zM2076.8 531.2v40.1h6v-40.1zM2084.8 531.2v35.7h2v-35.7zM2087.8 531.2v40.1h2v-40.1zM2100.3 531.2v44.6h2v-44.6zM2104.3 531.2v40.1h1.5v-40.1zM2108.8 531.2v44.6h4v-44.6zM2119.8 531.2v44.6h1v-44.6zM2125.1 531.2v44.6h1v-44.6zM2136.3 531.2v49.1h2v-49.1zM2141.3 531.2v49.1h2v-49.1zM2165.6 531.2v49.3h1v-49.3zM2195.1 531.2v44.6h1v-44.6zM2202.3 531.2v44.6h4v-44.6zM2208.3 531.2v44.6h1v-44.6zM2212.3 531.2v44.6h2v-44.6zM2220.3 531.2v40.1h6v-40.1zM2229.3 531.2v40.1h1v-40.1zM2233.3 531.2v44.6h1v-44.6zM2236.3 531.2v40.1h2v-40.1zM2241.3 531.2v40.1h1v-40.1zM2274.2 531.2v44.6h4v-44.6zM2279.2 531.2v40.1h1v-40.1zM2287.2 531.2v44.6h1v-44.6zM2296.5 531.2v46.2h1v-46.2zM2299.5 531.2v40.1h4v-40.1zM2304.5 531.2v40.1h2v-40.1zM2313.6 531.2v35.7h4v-35.7zM2330 531.2v40.1h2v-40.1zM2334 531.2v40.1h3v-40.1zM2340 531.2v40.1h2v-40.1zM2344 531.2v40.1h1v-40.1zM2346 531.2v40.1h1v-40.1zM2349 531.2v40.1h1v-40.1zM2351 531.2v40.1h2v-40.1zM2354 531.2v44.6h1.5v-44.6zM2363.5 531.2v44.6h3v-44.6zM2373.5 531.2v40.1h2v-40.1zM2378.5 531.2v40.1h1.5v-40.1zM2381 531.2v40.1h2v-40.1zM2410.7 531.2v49.1h3v-49.1zM2414.2 531.2v44.6h2v-44.6zM2417.2 531.2v49.1h3v-49.1zM2421.7 531.2v53.5h2v-53.5zM2424.7 531.2v53.5h1v-53.5zM2427.7 531.2v58h3v-58zM2431.7 531.2v58h2v-58zM2444.2 531.2v66.9h1v-66.9zM2445.7 531.2v66.9h1.5v-66.9zM2447.7 531.2v66.9h2v-66.9zM2451.2 531.2v66.9h1v-66.9zM2453.2 531.2v66.9h2v-66.9zM2457.2 531.2v71.4h1v-71.4zM2459.2 531.2v71.4h2v-71.4zM2462.2 531.2v80.3h2v-80.3zM2468 531.2v89.2h7v-89.2zM2476 531.2v80.3h1.5v-80.3zM2483 531.2v62.4h1.5v-62.4zM2485.5 531.2v66.9h3v-66.9zM2490.5 531.2v80.3h1v-80.3zM2492.5 531.2v80.3h2v-80.3zM2498.1 531.2v69.9h2v-69.9zM2501.1 531.2v76.2h2v-76.2zM2504.1 531.2v80.3h7v-80.3zM2512.6 531.2v84.7h2v-84.7zM2515.6 531.2v84.7h1.5v-84.7zM2518.1 531.2v89.2h1v-89.2zM2520.1 531.2v89.2h1.5v-89.2zM2523.1 531.2v89.2h2v-89.2zM2526.1 531.2v89.2h1.5v-89.2zM2529.1 531.2v84.7h1v-84.7zM2531.1 531.2v80.3h1.5v-80.3zM2533.1 531.2v80.3h5v-80.3zM2550 531.2v82.4h3v-82.4zM2554.5 531.2v93.7h2v-93.7zM2566 531.2v80.3h2v-80.3zM2568.5 531.2v75.8h2v-75.8zM2571.5 531.2v80.3h2v-80.3zM2574 531.2v80.3h1v-80.3zM2576 531.2v71.4h1v-71.4zM2578 531.2v75.8h2v-75.8zM2581 531.2v75.8h5v-75.8zM2588 531.2v79.7h1v-79.7zM2590.5 531.2v75.8h1.5v-75.8zM2607 531.2v69.1h4v-69.1zM2611 531.2v72.7h6.5v-72.7z" fill="#de4c4c" stroke="#de4c4c" stroke-width="0.4"/><path d="M1055 531.2H2670" stroke="#2a3590" stroke-width="1"/><rect x="1170" y="639.5" width="1480" height="16" fill="#f8c6ca"/><path d="M1174.5 639.5v16h3v-16zM1177.6 639.5v16h3v-16zM1185 639.5v16h3v-16zM1187.3 639.5v16h1v-16zM1200.2 639.5v16h2v-16zM1205 639.5v16h1v-16zM1208.8 639.5v16h4v-16zM1216.2 639.5v16h3v-16zM1223.7 639.5v16h4v-16zM1235.9 639.5v16h1v-16zM1245.4 639.5v16h3v-16zM1251.8 639.5v16h1v-16zM1261.6 639.5v16h1v-16zM1265.1 639.5v16h3v-16zM1267.2 639.5v16h1v-16zM1279 639.5v16h1.5v-16zM1286.4 639.5v16h4v-16zM1299.4 639.5v16h2v-16zM1309.8 639.5v16h2v-16zM1316.2 639.5v16h3v-16zM1323.3 639.5v16h1v-16zM1335.8 639.5v16h1v-16zM1337.7 639.5v16h2v-16zM1341.9 639.5v16h4v-16zM1348.9 639.5v16h4v-16zM1361.1 639.5v16h2v-16zM1368.9 639.5v16h2v-16zM1377.6 639.5v16h3v-16zM1386.4 639.5v16h3v-16zM1390.8 639.5v16h1.5v-16zM1400.8 639.5v16h1v-16zM1413.1 639.5v16h3v-16zM1422.9 639.5v16h1v-16zM1433.2 639.5v16h1.5v-16zM1446.7 639.5v16h3v-16zM1455.3 639.5v16h4v-16zM1465 639.5v16h4v-16zM1476.9 639.5v16h3v-16zM1481.8 639.5v16h1v-16zM1484.1 639.5v16h4v-16zM1497.9 639.5v16h1v-16zM1503.7 639.5v16h1v-16zM1510.4 639.5v16h1v-16zM1512.1 639.5v16h2v-16zM1523.2 639.5v16h1v-16zM1525.3 639.5v16h3v-16zM1536.3 639.5v16h2v-16zM1546.8 639.5v16h1.5v-16zM1555.2 639.5v16h1.5v-16zM1563 639.5v16h1v-16zM1568.4 639.5v16h1v-16zM1571.2 639.5v16h3v-16zM1573.1 639.5v16h1v-16zM1586.8 639.5v16h1.5v-16zM1595.9 639.5v16h1v-16zM1606 639.5v16h1.5v-16zM1611.4 639.5v16h1v-16zM1624.1 639.5v16h2v-16zM1630.3 639.5v16h3v-16zM1636.7 639.5v16h3v-16zM1646.7 639.5v16h1v-16zM1655.9 639.5v16h3v-16zM1660.8 639.5v16h4v-16zM1671.3 639.5v16h1v-16zM1684.5 639.5v16h2v-16zM1698.3 639.5v16h3v-16zM1703.5 639.5v16h1.5v-16zM1705.2 639.5v16h2v-16zM1719 639.5v16h1.5v-16zM1720.8 639.5v16h3v-16zM1729.6 639.5v16h1v-16zM1731.9 639.5v16h4v-16zM1737.6 639.5v16h1.5v-16zM1747.5 639.5v16h1.5v-16zM1756.7 639.5v16h1.5v-16zM1767.4 639.5v16h1v-16zM1776.2 639.5v16h4v-16zM1778 639.5v16h1.5v-16zM1782.7 639.5v16h2v-16zM1787.9 639.5v16h3v-16zM1793.4 639.5v16h1.5v-16zM1797.2 639.5v16h1.5v-16zM1809.2 639.5v16h1.5v-16zM1814.5 639.5v16h2v-16zM1817.3 639.5v16h1v-16zM1831 639.5v16h4v-16zM1841.6 639.5v16h1.5v-16zM1849.4 639.5v16h4v-16zM1860.9 639.5v16h1v-16zM1866.5 639.5v16h4v-16zM1873.5 639.5v16h4v-16zM1876.2 639.5v16h3v-16zM1881.7 639.5v16h1.5v-16zM1891.7 639.5v16h1v-16zM1898.6 639.5v16h1v-16zM1901.1 639.5v16h4v-16zM1910.8 639.5v16h3v-16zM1917.9 639.5v16h1v-16zM1929.2 639.5v16h1v-16zM1937.4 639.5v16h1v-16zM1942.8 639.5v16h3v-16zM1946.6 639.5v16h1.5v-16zM1952.3 639.5v16h4v-16zM1954.9 639.5v16h3v-16zM1960.7 639.5v16h1v-16zM1967.5 639.5v16h3v-16zM1978.9 639.5v16h1.5v-16zM1986.2 639.5v16h4v-16zM1992.9 639.5v16h2v-16zM2001.5 639.5v16h1v-16zM2014.6 639.5v16h1v-16zM2018.5 639.5v16h2v-16zM2031.8 639.5v16h3v-16zM2045.7 639.5v16h2v-16zM2054.2 639.5v16h4v-16zM2058.4 639.5v16h4v-16zM2065.6 639.5v16h4v-16zM2076.5 639.5v16h1.5v-16zM2084.8 639.5v16h1v-16zM2097.1 639.5v16h3v-16zM2110.7 639.5v16h1v-16zM2122.3 639.5v16h1v-16zM2124.3 639.5v16h4v-16zM2132.2 639.5v16h1v-16zM2144.9 639.5v16h2v-16zM2153.6 639.5v16h1v-16zM2161.1 639.5v16h1v-16zM2164.8 639.5v16h1.5v-16zM2169.2 639.5v16h1v-16zM2177.3 639.5v16h2v-16zM2179.5 639.5v16h3v-16zM2182.4 639.5v16h1v-16zM2187 639.5v16h3v-16zM2194.5 639.5v16h1v-16zM2200.4 639.5v16h1v-16zM2203.4 639.5v16h1v-16zM2207.1 639.5v16h1.5v-16zM2220.1 639.5v16h1v-16zM2231.9 639.5v16h1v-16zM2239.5 639.5v16h3v-16zM2251.8 639.5v16h1v-16zM2262.7 639.5v16h1v-16zM2267.6 639.5v16h3v-16zM2275.6 639.5v16h1v-16zM2283 639.5v16h1v-16zM2295.2 639.5v16h1v-16zM2297.3 639.5v16h1v-16zM2299.6 639.5v16h1v-16zM2311.8 639.5v16h1v-16zM2319.8 639.5v16h2v-16zM2325.2 639.5v16h1.5v-16zM2327.6 639.5v16h2v-16zM2337.2 639.5v16h3v-16zM2342.5 639.5v16h1.5v-16zM2346.4 639.5v16h1.5v-16zM2353.2 639.5v16h1v-16zM2361.7 639.5v16h4v-16zM2372.2 639.5v16h1v-16zM2380.8 639.5v16h1v-16zM2387 639.5v16h3v-16zM2396.6 639.5v16h3v-16zM2402.8 639.5v16h1v-16zM2412.1 639.5v16h2v-16zM2414.3 639.5v16h4v-16zM2422 639.5v16h4v-16zM2427.4 639.5v16h4v-16zM2434.2 639.5v16h1v-16zM2438.7 639.5v16h3v-16zM2443.6 639.5v16h3v-16zM2446 639.5v16h2v-16zM2450.3 639.5v16h1v-16zM2462.8 639.5v16h1.5v-16zM2469 639.5v16h3v-16zM2480.4 639.5v16h1.5v-16zM2483.4 639.5v16h4v-16zM2486.4 639.5v16h4v-16zM2496.2 639.5v16h3v-16zM2507.6 639.5v16h4v-16zM2510.5 639.5v16h1.5v-16zM2519 639.5v16h1v-16zM2530.7 639.5v16h4v-16zM2532.2 639.5v16h1v-16zM2536.7 639.5v16h2v-16zM2538.7 639.5v16h1v-16zM2547.3 639.5v16h4v-16zM2559.8 639.5v16h1v-16zM2571.5 639.5v16h1.5v-16zM2583.5 639.5v16h1v-16zM2585.4 639.5v16h1v-16zM2595.3 639.5v16h4v-16zM2608.7 639.5v16h3v-16zM2613.9 639.5v16h1v-16zM2615.9 639.5v16h3v-16zM2623.8 639.5v16h4v-16zM2628.3 639.5v16h3v-16zM2639.1 639.5v16h3v-16zM2641.4 639.5v16h1.5v-16z" fill="#f4adb2"/><path d="M1189.8 639.5v16h1v-16zM1213.1 639.5v16h4v-16zM1220.8 639.5v16h3v-16zM1237.8 639.5v16h2v-16zM1245.6 639.5v16h3v-16zM1256.4 639.5v16h1.5v-16zM1270.5 639.5v16h1v-16zM1280.8 639.5v16h1v-16zM1303.6 639.5v16h2v-16zM1323.6 639.5v16h1v-16zM1334.8 639.5v16h3v-16zM1353 639.5v16h4v-16zM1374.8 639.5v16h4v-16zM1387.4 639.5v16h4v-16zM1398.2 639.5v16h1v-16zM1404.1 639.5v16h2v-16zM1422.2 639.5v16h4v-16zM1435.5 639.5v16h2v-16zM1450.2 639.5v16h1v-16zM1455.5 639.5v16h1v-16zM1461.1 639.5v16h3v-16zM1470.1 639.5v16h1v-16zM1490.4 639.5v16h3v-16zM1512.7 639.5v16h1.5v-16zM1529.2 639.5v16h2v-16zM1544.1 639.5v16h3v-16zM1558.8 639.5v16h1.5v-16zM1579.8 639.5v16h1.5v-16zM1582.8 639.5v16h2v-16zM1602.1 639.5v16h1v-16zM1608.2 639.5v16h1.5v-16zM1615.6 639.5v16h2v-16zM1634.3 639.5v16h1v-16zM1645.5 639.5v16h4v-16zM1658 639.5v16h3v-16zM1664.8 639.5v16h3v-16zM1684.7 639.5v16h4v-16zM1698.8 639.5v16h2v-16zM1721.9 639.5v16h1v-16zM1742.3 639.5v16h2v-16zM1761.1 639.5v16h1v-16zM1773.3 639.5v16h1v-16zM1794.4 639.5v16h4v-16zM1811.9 639.5v16h4v-16zM1815.8 639.5v16h1v-16zM1836.1 639.5v16h1v-16zM1857.1 639.5v16h1.5v-16zM1862.5 639.5v16h3v-16zM1879.7 639.5v16h1v-16zM1900.9 639.5v16h1.5v-16zM1907 639.5v16h1v-16zM1916 639.5v16h2v-16zM1920.4 639.5v16h1v-16zM1925.3 639.5v16h1.5v-16zM1945.2 639.5v16h1.5v-16zM1948.5 639.5v16h2v-16zM1963.1 639.5v16h4v-16zM1972.6 639.5v16h1v-16zM1982 639.5v16h2v-16zM1992.5 639.5v16h1v-16zM1999.3 639.5v16h3v-16zM2017.3 639.5v16h2v-16zM2027.9 639.5v16h3v-16zM2037.1 639.5v16h1.5v-16zM2041.2 639.5v16h2v-16zM2046 639.5v16h3v-16zM2067.5 639.5v16h1v-16zM2080.9 639.5v16h4v-16zM2091.2 639.5v16h1.5v-16zM2109.5 639.5v16h1.5v-16zM2125.8 639.5v16h4v-16zM2142 639.5v16h1.5v-16zM2146.7 639.5v16h1.5v-16zM2163.2 639.5v16h3v-16zM2176.7 639.5v16h4v-16zM2189.4 639.5v16h1.5v-16zM2193.2 639.5v16h1.5v-16zM2209.8 639.5v16h3v-16zM2227.8 639.5v16h4v-16zM2243.7 639.5v16h4v-16zM2249.4 639.5v16h1.5v-16zM2270.4 639.5v16h4v-16zM2282.4 639.5v16h1v-16zM2304.3 639.5v16h1v-16zM2326 639.5v16h4v-16zM2343.5 639.5v16h3v-16zM2354.7 639.5v16h1.5v-16zM2370.7 639.5v16h2v-16zM2383.3 639.5v16h1v-16zM2400.5 639.5v16h1v-16zM2417.9 639.5v16h3v-16zM2431.7 639.5v16h4v-16zM2442.3 639.5v16h1v-16zM2450.4 639.5v16h2v-16zM2454 639.5v16h1v-16zM2457.4 639.5v16h3v-16zM2465.5 639.5v16h4v-16zM2484 639.5v16h1.5v-16zM2504.8 639.5v16h2v-16zM2516.6 639.5v16h1v-16zM2526.5 639.5v16h1v-16zM2532.1 639.5v16h3v-16zM2536.7 639.5v16h1v-16zM2551 639.5v16h4v-16zM2555.8 639.5v16h4v-16zM2562.2 639.5v16h2v-16zM2578.7 639.5v16h2v-16zM2598.2 639.5v16h4v-16zM2603.4 639.5v16h3v-16zM2608.9 639.5v16h2v-16zM2628 639.5v16h3v-16zM2641.5 639.5v16h3v-16zM2647.8 639.5v16h1.5v-16z" fill="#fbd7da"/><path d="M1190.4 639.5v16h1.5v-16zM1196.7 639.5v16h2v-16zM1238.8 639.5v16h2v-16zM1257 639.5v16h3v-16zM1274.9 639.5v16h2v-16zM1320.6 639.5v16h4v-16zM1355 639.5v16h4v-16zM1380.2 639.5v16h3v-16zM1393.1 639.5v16h4v-16zM1398.2 639.5v16h4v-16zM1413 639.5v16h1v-16zM1439.8 639.5v16h2v-16zM1453.1 639.5v16h3v-16zM1466.9 639.5v16h3v-16zM1510.5 639.5v16h2v-16zM1520.1 639.5v16h1.5v-16zM1565.1 639.5v16h1v-16zM1575.7 639.5v16h1v-16zM1606.7 639.5v16h1v-16zM1612.8 639.5v16h3v-16zM1627.5 639.5v16h1v-16zM1653.3 639.5v16h1v-16zM1697 639.5v16h1.5v-16zM1715.7 639.5v16h1.5v-16zM1749.6 639.5v16h1v-16zM1758 639.5v16h3v-16zM1795.3 639.5v16h1v-16zM1830.1 639.5v16h4v-16zM1876.6 639.5v16h1v-16zM1920.4 639.5v16h1v-16zM1943.6 639.5v16h1v-16zM1968.8 639.5v16h1v-16zM2006.6 639.5v16h2v-16zM2014.8 639.5v16h1v-16zM2049.2 639.5v16h2v-16zM2075 639.5v16h4v-16zM2082.8 639.5v16h2v-16zM2096.5 639.5v16h2v-16zM2114.2 639.5v16h2v-16zM2138.2 639.5v16h4v-16zM2160 639.5v16h1v-16zM2183.9 639.5v16h1v-16zM2218.9 639.5v16h1.5v-16zM2259.3 639.5v16h2v-16zM2286.3 639.5v16h3v-16zM2308.1 639.5v16h1v-16zM2346.6 639.5v16h1.5v-16zM2384.2 639.5v16h1v-16zM2424.9 639.5v16h3v-16zM2438 639.5v16h1v-16zM2443.9 639.5v16h3v-16zM2465.8 639.5v16h1v-16zM2497.3 639.5v16h1v-16zM2506.9 639.5v16h1v-16zM2530.3 639.5v16h1v-16zM2537.8 639.5v16h1v-16zM2559.6 639.5v16h1.5v-16zM2581.6 639.5v16h4v-16zM2616.3 639.5v16h1v-16zM2638.1 639.5v16h2v-16z" fill="#f09aa1"/><path d="M2650 639.5h2.5q2.500 0 2.500 2.500v11q0 2.500-2.500 2.500h-2.500z" fill="#f4adb2"/><rect x="1055" y="948.5" width="1599" height="17" fill="#c3f1c3"/><path d="M1069 948.5v17h3.6v-17zM1088.5 948.5v17h3.9v-17zM1096.8 948.5v17h5.4v-17zM1134 948.5v17h7.8v-17zM1166 948.5v17h4.3v-17zM1190.2 948.5v17h4.7v-17zM1202.1 948.5v17h3.6v-17zM1215.4 948.5v17h8.6v-17zM1249.6 948.5v17h7.8v-17zM1282.8 948.5v17h4.2v-17zM1299.3 948.5v17h6.8v-17zM1330.2 948.5v17h8.1v-17zM1366.1 948.5v17h3.5v-17zM1392.7 948.5v17h7v-17zM1415.9 948.5v17h4.1v-17zM1438 948.5v17h3.5v-17zM1475.8 948.5v17h8.2v-17zM1500.4 948.5v17h4.8v-17zM1537.3 948.5v17h6.4v-17zM1573.3 948.5v17h8.1v-17zM1596.6 948.5v17h5.5v-17zM1623 948.5v17h5.6v-17zM1634.5 948.5v17h4.8v-17zM1668.1 948.5v17h3.3v-17zM1675.7 948.5v17h6.8v-17zM1691.2 948.5v17h6.2v-17zM1713.2 948.5v17h5.1v-17zM1753.1 948.5v17h4.2v-17zM1773.2 948.5v17h4.2v-17zM1800.7 948.5v17h4.7v-17zM1818.8 948.5v17h7.5v-17zM1835.7 948.5v17h6.4v-17zM1872.4 948.5v17h3.6v-17zM1880.5 948.5v17h4.4v-17zM1912.5 948.5v17h6.7v-17zM1926.6 948.5v17h5v-17zM1938.6 948.5v17h5.8v-17zM1946.1 948.5v17h7.2v-17zM1982.6 948.5v17h8.7v-17zM2013.5 948.5v17h8.8v-17zM2020.2 948.5v17h4.7v-17zM2059 948.5v17h7.7v-17zM2079 948.5v17h8.7v-17zM2106.1 948.5v17h7.9v-17zM2122 948.5v17h4.1v-17zM2143.1 948.5v17h3.8v-17zM2162.1 948.5v17h8.8v-17zM2179.4 948.5v17h3.1v-17zM2186.9 948.5v17h4v-17zM2219.5 948.5v17h5.2v-17zM2235.4 948.5v17h3.6v-17zM2274.8 948.5v17h5.5v-17zM2287.9 948.5v17h3.4v-17zM2295.7 948.5v17h4v-17zM2324.8 948.5v17h3.9v-17zM2332.1 948.5v17h5.9v-17zM2346.6 948.5v17h9v-17zM2356.8 948.5v17h6.2v-17zM2389.1 948.5v17h5.5v-17zM2428.7 948.5v17h5.9v-17zM2442.9 948.5v17h5.5v-17zM2450.1 948.5v17h5.5v-17zM2464.6 948.5v17h8.3v-17zM2498.8 948.5v17h6v-17zM2505.9 948.5v17h4.5v-17zM2520.2 948.5v17h4.2v-17zM2534 948.5v17h8.2v-17zM2544.8 948.5v17h3.3v-17zM2582.4 948.5v17h6.4v-17zM2622.1 948.5v17h5.4v-17z" fill="#dcf9db"/><path d="M1055.5 948.5v17M1058.5 948.5v17M1061 948.5v17M1063.5 948.5v17M1065.1 948.5v17M1067.1 948.5v17M1069.1 948.5v17M1070.7 948.5v17M1072.7 948.5v17M1074.5 948.5v17M1077.5 948.5v17M1079.7 948.5v17M1081.5 948.5v17M1083.5 948.5v17M1085.5 948.5v17M1088 948.5v17M1090 948.5v17M1093 948.5v17M1095.5 948.5v17M1097.5 948.5v17M1100.5 948.5v17M1102.5 948.5v17M1104.7 948.5v17M1106.5 948.5v17M1109 948.5v17M1112 948.5v17M1114.5 948.5v17M1117.5 948.5v17M1119.5 948.5v17M1121.5 948.5v17M1123.5 948.5v17M1125.5 948.5v17M1127.1 948.5v17M1130.1 948.5v17M1132.1 948.5v17M1134.6 948.5v17M1137.1 948.5v17M1138.9 948.5v17M1140.5 948.5v17M1142.5 948.5v17M1144.7 948.5v17M1146.5 948.5v17M1149.5 948.5v17M1151.5 948.5v17M1154 948.5v17M1157 948.5v17M1158.6 948.5v17M1161.6 948.5v17M1163.4 948.5v17M1165.9 948.5v17M1168.4 948.5v17M1170.4 948.5v17M1172.6 948.5v17M1174.6 948.5v17M1177.1 948.5v17M1179.1 948.5v17M1181.1 948.5v17M1182.9 948.5v17M1185.9 948.5v17M1187.5 948.5v17M1189.3 948.5v17M1191.1 948.5v17M1192.7 948.5v17M1194.9 948.5v17M1196.9 948.5v17M1198.5 948.5v17M1200.5 948.5v17M1203.5 948.5v17M1206.5 948.5v17M1209.5 948.5v17M1211.5 948.5v17M1213.3 948.5v17M1215.5 948.5v17M1217.1 948.5v17M1218.9 948.5v17M1220.7 948.5v17M1223.2 948.5v17M1225.4 948.5v17M1227.4 948.5v17M1230.4 948.5v17M1232.6 948.5v17M1235.6 948.5v17M1238.6 948.5v17M1240.6 948.5v17M1242.8 948.5v17M1244.8 948.5v17M1246.4 948.5v17M1248 948.5v17M1249.6 948.5v17M1252.1 948.5v17M1254.3 948.5v17M1255.9 948.5v17M1257.9 948.5v17M1260.1 948.5v17M1263.1 948.5v17M1265.1 948.5v17M1267.3 948.5v17M1270.3 948.5v17M1272.1 948.5v17M1273.7 948.5v17M1275.7 948.5v17M1277.3 948.5v17M1280.3 948.5v17M1282.5 948.5v17M1284.1 948.5v17M1286.1 948.5v17M1289.1 948.5v17M1291.1 948.5v17M1294.1 948.5v17M1295.7 948.5v17M1297.3 948.5v17M1299.5 948.5v17M1301.5 948.5v17M1303.5 948.5v17M1305.3 948.5v17M1308.3 948.5v17M1310.3 948.5v17M1312.3 948.5v17M1314.1 948.5v17M1317.1 948.5v17M1319.1 948.5v17M1322.1 948.5v17M1324.1 948.5v17M1325.7 948.5v17M1327.3 948.5v17M1328.9 948.5v17M1331.1 948.5v17M1334.6 948.5v17M1340.6 948.5v17M1344.6 948.5v17M1348.6 948.5v17M1353.6 948.5v17M1355.6 948.5v17M1358.6 948.5v17M1361.6 948.5v17M1366.6 948.5v17M1370.6 948.5v17M1372.6 948.5v17M1378.6 948.5v17M1381.1 948.5v17M1384.6 948.5v17M1387.1 948.5v17M1389.6 948.5v17M1392.1 948.5v17M1395.6 948.5v17M1400.6 948.5v17M1404.1 948.5v17M1407.1 948.5v17M1413.1 948.5v17M1415.1 948.5v17M1417.6 948.5v17M1419.6 948.5v17M1422.6 948.5v17M1424.6 948.5v17M1430.6 948.5v17M1432.6 948.5v17M1437.6 948.5v17M1442.6 948.5v17M1448.6 948.5v17M1450.6 948.5v17M1456.6 948.5v17M1459.6 948.5v17M1463.6 948.5v17M1466.6 948.5v17M1470.1 948.5v17M1473.1 948.5v17M1475.6 948.5v17M1477.6 948.5v17M1479.6 948.5v17M1483.1 948.5v17M1489.1 948.5v17M1494.1 948.5v17M1497.1 948.5v17M1503.1 948.5v17M1508.1 948.5v17M1513.1 948.5v17M1517.1 948.5v17M1519.6 948.5v17M1522.6 948.5v17M1526.1 948.5v17M1529.6 948.5v17M1532.1 948.5v17M1536.1 948.5v17M1538.1 948.5v17M1540.6 948.5v17M1543.1 948.5v17M1546.1 948.5v17M1549.6 948.5v17M1552.6 948.5v17M1556.1 948.5v17M1558.1 948.5v17M1560.1 948.5v17M1564.1 948.5v17M1566.6 948.5v17M1570.1 948.5v17M1573.6 948.5v17M1577.1 948.5v17M1579.6 948.5v17M1582.6 948.5v17M1584.6 948.5v17M1586.6 948.5v17M1592.6 948.5v17M1594.6 948.5v17M1598.1 948.5v17M1600.1 948.5v17M1602.6 948.5v17M1605.1 948.5v17M1610.1 948.5v17M1612.1 948.5v17M1614.1 948.5v17M1616.6 948.5v17M1621.6 948.5v17M1624.6 948.5v17M1627.6 948.5v17M1631.6 948.5v17M1634.6 948.5v17M1639.6 948.5v17M1642.6 948.5v17M1645.6 948.5v17M1649.1 948.5v17M1652.1 948.5v17M1655.6 948.5v17M1661.6 948.5v17M1667.6 948.5v17M1672.6 948.5v17M1676.6 948.5v17M1682.6 948.5v17M1686.6 948.5v17M1690.1 948.5v17M1692.1 948.5v17M1694.1 948.5v17M1696.1 948.5v17M1698.3 948.5v17M1699.9 948.5v17M1701.9 948.5v17M1703.7 948.5v17M1705.9 948.5v17M1707.9 948.5v17M1710.4 948.5v17M1712.6 948.5v17M1714.8 948.5v17M1717.8 948.5v17M1719.8 948.5v17M1721.8 948.5v17M1723.8 948.5v17M1726 948.5v17M1727.6 948.5v17M1729.4 948.5v17M1731.6 948.5v17M1733.2 948.5v17M1735.2 948.5v17M1737.7 948.5v17M1739.7 948.5v17M1741.9 948.5v17M1744.9 948.5v17M1746.9 948.5v17M1748.5 948.5v17M1751.5 948.5v17M1753.5 948.5v17M1755.5 948.5v17M1757.3 948.5v17M1759.8 948.5v17M1761.8 948.5v17M1764 948.5v17M1767 948.5v17M1768.6 948.5v17M1770.4 948.5v17M1772.2 948.5v17M1773.8 948.5v17M1775.8 948.5v17M1777.6 948.5v17M1779.2 948.5v17M1781 948.5v17M1783 948.5v17M1786 948.5v17M1788.2 948.5v17M1790.7 948.5v17M1792.9 948.5v17M1795.1 948.5v17M1797.6 948.5v17M1799.8 948.5v17M1801.8 948.5v17M1803.4 948.5v17M1805.6 948.5v17M1807.4 948.5v17M1809.2 948.5v17M1812.2 948.5v17M1813.8 948.5v17M1815.6 948.5v17M1817.2 948.5v17M1819.2 948.5v17M1820.8 948.5v17M1822.4 948.5v17M1824.4 948.5v17M1826 948.5v17M1828.5 948.5v17M1830.5 948.5v17M1832.7 948.5v17M1835.2 948.5v17M1837.7 948.5v17M1839.5 948.5v17M1842 948.5v17M1844.5 948.5v17M1848.5 948.5v17M1851 948.5v17M1853 948.5v17M1859 948.5v17M1862.5 948.5v17M1864.5 948.5v17M1870.5 948.5v17M1873 948.5v17M1879 948.5v17M1883 948.5v17M1885.5 948.5v17M1888.5 948.5v17M1891.5 948.5v17M1896.5 948.5v17M1902.5 948.5v17M1904.5 948.5v17M1908.5 948.5v17M1911 948.5v17M1913.5 948.5v17M1916.5 948.5v17M1922.5 948.5v17M1926.5 948.5v17M1932.5 948.5v17M1935.5 948.5v17M1939.5 948.5v17M1943 948.5v17M1945.5 948.5v17M1949.5 948.5v17M1951.5 948.5v17M1955.5 948.5v17M1957.5 948.5v17M1960.5 948.5v17M1962.5 948.5v17M1965.5 948.5v17M1968 948.5v17M1970 948.5v17M1972.5 948.5v17M1974.5 948.5v17M1976.5 948.5v17M1979.5 948.5v17M1982.5 948.5v17M1988.5 948.5v17M1990.5 948.5v17M1995.5 948.5v17M2001.5 948.5v17M2004 948.5v17M2009 948.5v17M2013 948.5v17M2016.5 948.5v17M2019 948.5v17M2025 948.5v17M2028 948.5v17M2030 948.5v17M2035 948.5v17M2038.5 948.5v17M2041.5 948.5v17M2045.5 948.5v17M2047.5 948.5v17M2050.5 948.5v17M2053.5 948.5v17M2056.5 948.5v17M2061.5 948.5v17M2065 948.5v17M2067 948.5v17M2070 948.5v17M2073.5 948.5v17M2075.5 948.5v17M2077.5 948.5v17M2081 948.5v17M2087 948.5v17M2092 948.5v17M2095.5 948.5v17M2097.5 948.5v17M2100 948.5v17M2102 948.5v17M2107 948.5v17M2113 948.5v17M2119 948.5v17M2122 948.5v17M2124 948.5v17M2127 948.5v17M2129 948.5v17M2132.5 948.5v17M2135 948.5v17M2138 948.5v17M2140 948.5v17M2146 948.5v17M2152 948.5v17M2154 948.5v17M2156 948.5v17M2159 948.5v17M2162 948.5v17M2164 948.5v17M2166 948.5v17M2168 948.5v17M2173 948.5v17M2175.5 948.5v17M2178.5 948.5v17M2182 948.5v17M2185 948.5v17M2188.5 948.5v17M2191.5 948.5v17M2195.5 948.5v17M2199.5 948.5v17M2201.5 948.5v17M2204 948.5v17M2208 948.5v17M2213 948.5v17M2215 948.5v17M2221 948.5v17M2227 948.5v17M2230 948.5v17M2236 948.5v17M2239 948.5v17M2242 948.5v17M2246 948.5v17M2249.5 948.5v17M2252 948.5v17M2255 948.5v17M2257 948.5v17M2262 948.5v17M2266 948.5v17M2269 948.5v17M2272.5 948.5v17M2276.5 948.5v17M2280.5 948.5v17M2284 948.5v17M2287 948.5v17M2290 948.5v17M2293 948.5v17M2299 948.5v17M2301 948.5v17M2303 948.5v17M2307 948.5v17M2310 948.5v17M2313 948.5v17M2315.5 948.5v17M2319 948.5v17M2321 948.5v17M2323.5 948.5v17M2325.5 948.5v17M2328.5 948.5v17M2331.5 948.5v17M2334.5 948.5v17M2339.5 948.5v17M2341.5 948.5v17M2345 948.5v17M2347 948.5v17M2352 948.5v17M2355 948.5v17M2357.5 948.5v17M2359.5 948.5v17M2362.5 948.5v17M2368.5 948.5v17M2370.5 948.5v17M2372.5 948.5v17M2376 948.5v17M2379 948.5v17M2381.5 948.5v17M2383.5 948.5v17M2386 948.5v17M2388 948.5v17M2390.5 948.5v17M2393.5 948.5v17M2396.5 948.5v17M2398.5 948.5v17M2402 948.5v17M2405.5 948.5v17M2409 948.5v17M2411.5 948.5v17M2414 948.5v17M2417 948.5v17M2419 948.5v17M2421 948.5v17M2423.5 948.5v17M2425.5 948.5v17M2428.5 948.5v17M2433.5 948.5v17M2435.5 948.5v17M2438.5 948.5v17M2441 948.5v17M2445 948.5v17M2450 948.5v17M2456 948.5v17M2461 948.5v17M2467 948.5v17M2470.5 948.5v17M2472.5 948.5v17M2474.5 948.5v17M2477 948.5v17M2479 948.5v17M2482 948.5v17M2483.6 948.5v17M2486.6 948.5v17M2488.2 948.5v17M2490 948.5v17M2491.8 948.5v17M2493.8 948.5v17M2495.6 948.5v17M2497.6 948.5v17M2499.4 948.5v17M2501.4 948.5v17M2503.6 948.5v17M2506.6 948.5v17M2508.4 948.5v17M2510.6 948.5v17M2513.1 948.5v17M2515.1 948.5v17M2517.1 948.5v17M2519.1 948.5v17M2521.3 948.5v17M2523.8 948.5v17M2525.4 948.5v17M2527.2 948.5v17M2529 948.5v17M2531 948.5v17M2532.8 948.5v17M2535 948.5v17M2536.8 948.5v17M2538.4 948.5v17M2540 948.5v17M2541.6 948.5v17M2543.4 948.5v17M2545.4 948.5v17M2548.4 948.5v17M2550.9 948.5v17M2553.4 948.5v17M2555.4 948.5v17M2557.6 948.5v17M2559.6 948.5v17M2561.2 948.5v17M2563.2 948.5v17M2566.2 948.5v17M2568.7 948.5v17M2571.7 948.5v17M2573.7 948.5v17M2575.5 948.5v17M2577.3 948.5v17M2579.3 948.5v17M2581.5 948.5v17M2583.5 948.5v17M2585.5 948.5v17M2587.5 948.5v17M2589.1 948.5v17M2591.1 948.5v17M2593.6 948.5v17M2595.4 948.5v17M2597.4 948.5v17M2599 948.5v17M2601.5 948.5v17M2604.5 948.5v17M2607 948.5v17M2609.5 948.5v17M2611.5 948.5v17M2613.3 948.5v17M2614.9 948.5v17M2616.9 948.5v17M2618.9 948.5v17M2621.1 948.5v17M2623.3 948.5v17M2624.9 948.5v17M2626.5 948.5v17M2628.5 948.5v17M2630.3 948.5v17M2632.8 948.5v17M2635 948.5v17M2636.6 948.5v17M2638.4 948.5v17M2641.4 948.5v17M2643.6 948.5v17M2645.4 948.5v17M2647.6 948.5v17M2649.6 948.5v17M2651.8 948.5v17" stroke="#4fc455" stroke-width="1.25" fill="none"/><clipPath id="cpC"><rect x="1055" y="656" width="1616" height="292.5"/></clipPath><g clip-path="url(#cpC)"><defs><path id="rx" d="M-5.300-2.700L-2.700-5.300 0-2.600 2.700-5.300 5.300-2.700 2.600 0 5.300 2.700 2.700 5.300 0 2.600-2.700 5.300-5.300 2.700-2.600 0Z" fill="#f25252" stroke="#bf2020" stroke-width="1"/><path id="gx" d="M-5.300-2.700L-2.700-5.300 0-2.600 2.700-5.300 5.300-2.700 2.600 0 5.300 2.700 2.700 5.300 0 2.600-2.700 5.300-5.300 2.700-2.600 0Z" fill="#4fd455" stroke="#1b8f22" stroke-width="1"/><path id="rd" d="M-2.200-6h4.400v5.800h2.800L0 6-5-0.200h2.800Z" fill="#f25252" stroke="#bf2020" stroke-width="1"/><path id="gu" d="M-2.200 6h4.400v-5.800h2.800L0-6-5 0.200h2.800Z" fill="#4fd455" stroke="#1b8f22" stroke-width="1"/></defs><use href="#rx" x="1110.7" y="703.5"/><use href="#rd" x="1732" y="869.4"/><use href="#gu" x="1866.2" y="902"/><use href="#gu" x="2421.3" y="789"/><use href="#gx" x="1179.6" y="923.9"/><use href="#gu" x="1408.9" y="824.7"/><use href="#gu" x="1954.3" y="847.1"/><use href="#gu" x="2298.9" y="755"/><use href="#gu" x="2573.4" y="686.6"/><use href="#gx" x="1786.5" y="860.6"/><use href="#rx" x="2505.2" y="708.8"/><use href="#gx" x="2333.4" y="752.9"/><use href="#gx" x="2429.6" y="783.3"/><use href="#rx" x="1226.6" y="820.1"/><use href="#gx" x="2533.5" y="707.9"/><use href="#gx" x="1147.9" y="887.3"/><use href="#gu" x="1134.3" y="879.5"/><use href="#gu" x="1268" y="836.3"/><use href="#rx" x="1960" y="816.9"/><use href="#gx" x="1196.9" y="916.9"/><use href="#rd" x="1808.8" y="869.7"/><use href="#rx" x="1070.3" y="650.4"/><use href="#rx" x="1755.1" y="827.6"/><use href="#gx" x="2501.5" y="730.9"/><use href="#rd" x="1281.3" y="799.5"/><use href="#rd" x="1275.9" y="786.2"/><use href="#gx" x="2146.8" y="789.7"/><use href="#gx" x="2501.7" y="712.3"/><use href="#rd" x="1245.6" y="789.2"/><use href="#rx" x="1963.1" y="823.8"/><use href="#gx" x="1061.3" y="691.3"/><use href="#rx" x="2335.4" y="734.9"/><use href="#rx" x="1267.7" y="786.7"/><use href="#gu" x="1284.9" y="835.3"/><use href="#gu" x="2450.6" y="802.8"/><use href="#gu" x="1191.9" y="953.9"/><use href="#rd" x="2538.9" y="654.7"/><use href="#rx" x="2301.4" y="707.8"/><use href="#gx" x="2489.2" y="738.7"/><use href="#rx" x="1281" y="785.9"/><use href="#rx" x="1200.8" y="883.6"/><use href="#rx" x="1141.6" y="830.1"/><use href="#gx" x="1184.6" y="968"/><use href="#gu" x="1176.6" y="915.5"/><use href="#rd" x="2341.1" y="716.3"/><use href="#rx" x="1183.5" y="898.1"/><use href="#rx" x="1330.2" y="760.5"/><use href="#rd" x="2528.6" y="678.9"/><use href="#gx" x="2544.8" y="688.6"/><use href="#gu" x="1224.3" y="851.9"/><use href="#rx" x="2199" y="758"/><use href="#rx" x="1872" y="834.8"/><use href="#gu" x="1746.4" y="876.7"/><use href="#rx" x="2044.6" y="791.7"/><use href="#rd" x="2116.3" y="791.9"/><use href="#rd" x="1586.7" y="803.3"/><use href="#gu" x="1693.8" y="883.8"/><use href="#gx" x="1107.6" y="760"/><use href="#gu" x="1665.3" y="905.3"/><use href="#gx" x="1191.8" y="922.4"/><use href="#gu" x="1148.7" y="913.6"/><use href="#rx" x="2447.9" y="744.6"/><use href="#rx" x="2099.1" y="810.4"/><use href="#rx" x="2538.7" y="664.5"/><use href="#rx" x="1654.9" y="845.1"/><use href="#rd" x="1140.8" y="820.7"/><use href="#gu" x="2556.6" y="725.2"/><use href="#rx" x="2470.3" y="758.4"/><use href="#gx" x="1915.8" y="911.2"/><use href="#gx" x="1485.3" y="803.7"/><use href="#rx" x="1244.7" y="815.5"/><use href="#gx" x="1797" y="859.1"/><use href="#gu" x="1076.8" y="721.5"/><use href="#gu" x="1694.2" y="899.4"/><use href="#rx" x="1078.9" y="707.7"/><use href="#rd" x="1297.1" y="787.7"/><use href="#rd" x="1184.2" y="904.8"/><use href="#gx" x="2412" y="765.7"/><use href="#rd" x="1589" y="808.3"/><use href="#gx" x="2565.5" y="719.9"/><use href="#rd" x="1337.6" y="765.4"/><use href="#rx" x="1148.7" y="859.6"/><use href="#rd" x="1077.3" y="685.9"/><use href="#gx" x="1077.1" y="723.9"/><use href="#rd" x="1890" y="846.9"/><use href="#rd" x="1512.7" y="785.3"/><use href="#gx" x="1069.6" y="702.1"/><use href="#gx" x="1962.6" y="840.6"/><use href="#rx" x="1272.5" y="793.4"/><use href="#rd" x="1507.1" y="783.5"/><use href="#rd" x="2458.1" y="753.9"/><use href="#gx" x="1753" y="851.2"/><use href="#gx" x="1805.6" y="875.8"/><use href="#rd" x="2122" y="783.1"/><use href="#rd" x="2596.6" y="676.2"/><use href="#gx" x="1282.4" y="827.4"/><use href="#rd" x="1961.7" y="825.5"/><use href="#rd" x="2185.9" y="757"/><use href="#rd" x="1856" y="848.8"/><use href="#gx" x="1115" y="768.8"/><use href="#rx" x="1508.4" y="780.6"/><use href="#gx" x="2309.2" y="744"/><use href="#gu" x="1844.1" y="890.7"/><use href="#gx" x="1797.3" y="868.9"/><use href="#rx" x="1835.3" y="875.8"/><use href="#gu" x="1301" y="846.8"/><use href="#gx" x="1318.8" y="817.7"/><use href="#rx" x="1309.8" y="789"/><use href="#gx" x="1063.2" y="700.4"/><use href="#rd" x="2416.2" y="734"/><use href="#gu" x="2561" y="698.4"/><use href="#rd" x="1129.1" y="777.8"/><use href="#rx" x="2263.8" y="751.1"/><use href="#rx" x="1068.7" y="687.2"/><use href="#gu" x="1687.7" y="872.6"/><use href="#rx" x="1541.7" y="781"/><use href="#rx" x="2535.6" y="675.7"/><use href="#rx" x="2337.3" y="736.8"/><use href="#rd" x="1220.4" y="849.1"/><use href="#gx" x="2052.5" y="826"/><use href="#rd" x="1107.9" y="711.5"/><use href="#gu" x="1325.8" y="829.3"/><use href="#rx" x="1515" y="782.3"/><use href="#rx" x="1284.9" y="776.6"/><use href="#rx" x="2332.6" y="721.9"/><use href="#rx" x="1251.4" y="796"/><use href="#rd" x="2525.1" y="685.6"/><use href="#gx" x="1113.5" y="787.4"/><use href="#gx" x="1082.4" y="736.9"/><use href="#gu" x="1132.1" y="868"/><use href="#gu" x="1199.3" y="908.5"/><use href="#rd" x="2258.3" y="754.5"/><use href="#gu" x="1482" y="803.8"/><use href="#gx" x="2000.3" y="817.9"/><use href="#gu" x="2495.4" y="737.4"/><use href="#rd" x="1547.4" y="773.7"/><use href="#gu" x="1382.4" y="852.7"/><use href="#gu" x="2453.6" y="766.8"/><use href="#gx" x="2311.2" y="739.4"/><use href="#rx" x="1568.9" y="792.9"/><use href="#gu" x="1414.9" y="845.6"/><use href="#gx" x="1681.3" y="872.1"/><use href="#gx" x="1480.2" y="828.2"/><use href="#rd" x="2552.2" y="658"/><use href="#gx" x="1350.8" y="828.6"/><use href="#gu" x="2549.7" y="692.6"/><use href="#rd" x="1064.3" y="686.4"/><use href="#rx" x="2051.4" y="807.9"/><use href="#gu" x="1932.1" y="870.9"/><use href="#gx" x="2380.4" y="783.2"/><use href="#rd" x="2031.9" y="804.5"/><use href="#rd" x="1897.9" y="854.8"/><use href="#rx" x="1278" y="795.2"/><use href="#gx" x="2559.3" y="693.5"/><use href="#rd" x="2530.7" y="676.4"/><use href="#rx" x="1107.9" y="710.4"/><use href="#rd" x="1286.4" y="801.3"/><use href="#rx" x="1118.4" y="735.8"/><use href="#rd" x="1382.4" y="823.1"/><use href="#gu" x="1597.7" y="828.5"/><use href="#gx" x="1190.7" y="903.9"/><use href="#gu" x="1578" y="817.2"/><use href="#rd" x="2394" y="746.7"/><use href="#rx" x="1219.6" y="826.9"/><use href="#gu" x="2534.5" y="703.6"/><use href="#gx" x="1455.7" y="845.8"/><use href="#rx" x="2516.6" y="672.4"/><use href="#rd" x="1290.4" y="773"/><use href="#gx" x="1798.9" y="876"/><use href="#gu" x="1967.3" y="840.3"/><use href="#gx" x="1555.2" y="795.6"/><use href="#gx" x="1116.6" y="762.3"/><use href="#gx" x="1856.9" y="874.4"/><use href="#gx" x="1804.2" y="898.1"/><use href="#gu" x="1611.5" y="835.6"/><use href="#rd" x="1240.7" y="816.8"/><use href="#gx" x="1932.6" y="879.6"/><use href="#gx" x="1482.8" y="830"/><use href="#rd" x="2466.7" y="773.7"/><use href="#gx" x="1419.9" y="814.2"/><use href="#gx" x="1419.3" y="823.8"/><use href="#rd" x="1194.7" y="887.2"/><use href="#gx" x="1188.8" y="954.9"/><use href="#rd" x="2520.2" y="665.4"/><use href="#gx" x="2307.1" y="752.8"/><use href="#gu" x="2526.7" y="687.7"/><use href="#gx" x="2505.1" y="713.3"/><use href="#rx" x="1539.3" y="800.5"/><use href="#rd" x="1133.5" y="809.6"/><use href="#gu" x="1329" y="841.9"/><use href="#gx" x="2601.1" y="735.8"/><use href="#rd" x="1393.8" y="815.7"/><use href="#gx" x="2025.6" y="836.7"/><use href="#rd" x="1813.4" y="869"/><use href="#rx" x="1798.4" y="832.8"/><use href="#gx" x="2551.7" y="709.6"/><use href="#rd" x="1196.3" y="876.9"/><use href="#rd" x="1900.9" y="848.6"/><use href="#gu" x="1856.6" y="887.3"/><use href="#gx" x="2136.8" y="794.9"/><use href="#gx" x="1072.2" y="723.4"/><use href="#rd" x="1191.6" y="871.8"/><use href="#rd" x="2123.3" y="786.4"/><use href="#gx" x="2302" y="742.8"/><use href="#gu" x="1064.5" y="705.3"/><use href="#rx" x="1885.1" y="841.1"/><use href="#rd" x="2053.5" y="815.2"/><use href="#rd" x="2134.7" y="783.2"/><use href="#gx" x="2525.5" y="687.6"/><use href="#rd" x="2330.4" y="724.8"/><use href="#rx" x="1547.5" y="759.5"/><use href="#rx" x="1219" y="822.5"/><use href="#rx" x="2024.5" y="798.9"/><use href="#rx" x="2578.7" y="666.5"/><use href="#rd" x="1486.8" y="769.5"/><use href="#rd" x="1516.1" y="764.6"/><use href="#gu" x="1839.7" y="906.6"/><use href="#gu" x="1120.5" y="813"/><use href="#rx" x="1492.2" y="791.6"/><use href="#rx" x="1829" y="889.4"/><use href="#gu" x="1339.7" y="807.1"/><use href="#gx" x="2330.2" y="760.9"/><use href="#rx" x="2339" y="710.3"/><use href="#rx" x="1203.4" y="887.6"/><use href="#gu" x="1328.5" y="816.7"/><use href="#gu" x="1808.3" y="874.9"/><use href="#gx" x="2478.7" y="794.1"/><use href="#rd" x="1133.9" y="841"/><use href="#gu" x="1166.6" y="897.1"/><use href="#gx" x="1340.2" y="807.7"/><use href="#gu" x="1147.9" y="879"/><use href="#rx" x="1431.9" y="802.4"/><use href="#gx" x="1281.8" y="808.8"/><use href="#gx" x="2458.3" y="772.4"/><use href="#gu" x="1356.6" y="833.5"/><use href="#rd" x="2443.7" y="754.8"/><use href="#rx" x="1298.9" y="773.9"/><use href="#rd" x="2223.1" y="767.7"/><use href="#gx" x="1828.8" y="899.6"/><use href="#gu" x="1797.8" y="872.1"/><use href="#rd" x="1668.8" y="880.3"/><use href="#rd" x="1724.1" y="871.9"/><use href="#gx" x="2617.8" y="698.1"/><use href="#rd" x="1389.2" y="822.4"/><use href="#rx" x="1901.4" y="852.8"/><use href="#gu" x="1249" y="846.4"/><use href="#gu" x="2141.3" y="802.7"/><use href="#rx" x="2286.8" y="751.7"/><use href="#rd" x="1955.5" y="832.9"/><use href="#gu" x="2483.9" y="770.8"/><use href="#gu" x="2163.8" y="788.6"/><use href="#gu" x="1129.9" y="851.2"/><use href="#rx" x="2337" y="736.5"/><use href="#rx" x="1270.2" y="791.2"/><use href="#rx" x="2588.8" y="677.8"/><use href="#gu" x="1868.1" y="907.6"/><use href="#gu" x="1964.6" y="864.9"/><use href="#rx" x="2319.7" y="722.8"/><use href="#rd" x="1337.7" y="794.3"/><use href="#rx" x="1302.2" y="793.1"/><use href="#gu" x="2523.8" y="703.5"/><use href="#gu" x="2428.4" y="780.2"/><use href="#rx" x="1989.4" y="782.8"/><use href="#rx" x="1366.1" y="834"/><use href="#gu" x="2527.2" y="718.7"/><use href="#rx" x="2249.3" y="757.2"/><use href="#rx" x="1616.1" y="796.6"/><use href="#gu" x="2165.8" y="796.8"/><use href="#rx" x="2595" y="689.5"/><use href="#rx" x="2472.3" y="760.9"/><use href="#rd" x="1124.3" y="795.6"/><use href="#gx" x="2157.1" y="792.2"/><use href="#gx" x="1070.2" y="742"/><use href="#rd" x="1287.4" y="786.4"/><use href="#rd" x="1115" y="714.9"/><use href="#gu" x="1318" y="824.7"/><use href="#rd" x="2179" y="739.6"/><use href="#gu" x="2496" y="731.1"/><use href="#gu" x="1832.3" y="928"/><use href="#rx" x="1988.7" y="810.4"/><use href="#gx" x="1304.8" y="811.3"/><use href="#gx" x="2027.4" y="825.2"/><use href="#rx" x="2346" y="736"/><use href="#rd" x="1977.9" y="816.1"/><use href="#rd" x="1164.5" y="885.9"/><use href="#gx" x="1671.5" y="896.3"/><use href="#gx" x="1285.2" y="812.6"/><use href="#rd" x="2521.9" y="659.1"/><use href="#gu" x="1413.4" y="843.9"/><use href="#rd" x="1278.6" y="786.2"/><use href="#gx" x="2430.6" y="788.5"/><use href="#gx" x="2191.9" y="778.4"/><use href="#rd" x="1526.9" y="770.8"/><use href="#rx" x="2304.7" y="720.2"/><use href="#rx" x="1247.4" y="805.9"/><use href="#rd" x="1087" y="723.3"/><use href="#gx" x="2303.9" y="781.3"/><use href="#gx" x="2491.8" y="732.4"/><use href="#rd" x="2156.1" y="778.9"/><use href="#gx" x="1269.3" y="831.9"/><use href="#gx" x="1681.3" y="872.1"/><use href="#gu" x="1560.7" y="819.9"/><use href="#rx" x="1299.4" y="793.8"/><use href="#rd" x="1630.5" y="827.3"/><use href="#gx" x="1281.5" y="819.4"/><use href="#rd" x="1432.3" y="805.2"/><use href="#rx" x="1074.7" y="706.7"/><use href="#gu" x="1331.4" y="800.7"/><use href="#gu" x="1130.4" y="859.4"/><use href="#rx" x="2552.9" y="664"/><use href="#rd" x="1129.5" y="832.2"/><use href="#rx" x="1281.2" y="806.4"/><use href="#gx" x="1196.4" y="915.9"/><use href="#gu" x="1292.4" y="848.1"/><use href="#gx" x="2610.6" y="689.5"/><use href="#gu" x="2068.1" y="813.1"/><use href="#gu" x="1171.6" y="907.6"/><use href="#gu" x="1793.8" y="865.6"/><use href="#rx" x="1818.3" y="865.9"/><use href="#rd" x="2019.1" y="809.9"/><use href="#gu" x="1299" y="800.8"/><use href="#rx" x="2149.3" y="778.3"/><use href="#gu" x="2607.9" y="699.4"/><use href="#rx" x="2557.8" y="671.3"/><use href="#gu" x="1177" y="931.8"/><use href="#gx" x="2364.7" y="779.1"/><use href="#gx" x="1234.1" y="875.7"/><use href="#rd" x="2526" y="663.9"/><use href="#gu" x="1352.6" y="835.3"/><use href="#rx" x="2551.2" y="671.2"/><use href="#gx" x="1603.5" y="823.4"/><use href="#gu" x="2182" y="769.1"/><use href="#gu" x="2076.5" y="832.8"/><use href="#rx" x="2122.3" y="782.6"/><use href="#rx" x="1606.3" y="810.1"/><use href="#gu" x="1824.4" y="905.7"/><use href="#rd" x="2026.5" y="787.8"/><use href="#gu" x="2372.7" y="787.8"/><use href="#gx" x="1277.9" y="806.8"/><use href="#gx" x="2346.7" y="761.1"/><use href="#gx" x="1495.6" y="818.6"/><use href="#rd" x="2357.9" y="736.9"/><use href="#gx" x="1175.5" y="926"/><use href="#rd" x="1262" y="799.4"/><use href="#rx" x="1122.8" y="753"/><use href="#gx" x="2493.7" y="743"/><use href="#rx" x="1439.1" y="770.9"/><use href="#rx" x="2080" y="801.4"/><use href="#rx" x="1274.1" y="779.4"/><use href="#rx" x="1420.4" y="810.8"/><use href="#gx" x="2524" y="691.3"/><use href="#rx" x="1260.4" y="794.2"/><use href="#rd" x="1742.2" y="846.8"/><use href="#gu" x="1810.6" y="876.2"/><use href="#rx" x="1140.2" y="813.3"/><use href="#rd" x="1147.4" y="820.6"/><use href="#rx" x="2603.9" y="682.2"/><use href="#gx" x="1434.7" y="818.8"/><use href="#gx" x="1298.9" y="841"/><use href="#rx" x="2478.3" y="736.7"/><use href="#rd" x="2516.4" y="678.2"/><use href="#gx" x="1495.3" y="824.2"/><use href="#gx" x="1363.2" y="845"/><use href="#rx" x="2081.1" y="802.1"/><use href="#rx" x="1234.4" y="832.6"/><use href="#rx" x="1450.1" y="774"/><use href="#gx" x="2189.8" y="775.7"/><use href="#rd" x="2100.8" y="811.2"/><use href="#rd" x="1527.3" y="772.8"/><use href="#gu" x="2399.5" y="753.6"/><use href="#rx" x="1405.5" y="826.9"/><use href="#gu" x="2297.8" y="756.6"/><use href="#gx" x="2166.6" y="778.3"/><use href="#rx" x="1537.2" y="791.6"/><use href="#rd" x="2610.4" y="663.5"/><use href="#gu" x="2289.8" y="759.1"/><use href="#rx" x="1973.6" y="808.7"/><use href="#rd" x="1493" y="787.3"/><use href="#rd" x="2613.7" y="677.8"/><use href="#rx" x="2340.5" y="729.6"/><use href="#gx" x="1746.9" y="876.3"/><use href="#rx" x="1335.2" y="777"/><use href="#rx" x="1604" y="818.9"/><use href="#rx" x="2267.9" y="746.6"/><use href="#gu" x="2598.8" y="706.7"/><use href="#gx" x="2327.8" y="768.3"/><use href="#rd" x="1100.9" y="665.2"/><use href="#gx" x="2397.4" y="760.7"/><use href="#gx" x="1832.5" y="925.2"/><use href="#gx" x="1463.5" y="855.2"/><use href="#gu" x="2501.8" y="731.5"/><use href="#rx" x="2064.9" y="774.9"/><use href="#rd" x="1168.9" y="900.5"/><use href="#rx" x="1068.7" y="680.5"/><use href="#gx" x="2514.3" y="718.2"/><use href="#gx" x="2515.3" y="707.5"/><use href="#rd" x="1993.2" y="791.4"/><use href="#rx" x="1210.6" y="872"/><use href="#gu" x="1638.4" y="859"/><use href="#rx" x="2525.4" y="668.5"/><use href="#gx" x="1275.3" y="811.8"/><use href="#rd" x="2326.4" y="715.6"/><use href="#gu" x="1795.9" y="880.3"/><use href="#rd" x="2220.1" y="747.8"/><use href="#rd" x="1073.4" y="680.2"/><use href="#rx" x="1649.6" y="859.2"/><use href="#rx" x="1258.7" y="799.8"/><use href="#rx" x="2536.6" y="665.3"/><use href="#rx" x="1666.2" y="867"/><use href="#rd" x="2350.3" y="741"/><use href="#rd" x="1249.2" y="817.4"/><use href="#rx" x="2158.9" y="770.7"/><use href="#rx" x="1881.8" y="835.8"/><use href="#rd" x="1165.8" y="855.9"/><use href="#rx" x="1081.5" y="731.5"/><use href="#rx" x="1091.3" y="748.2"/><use href="#gx" x="2169.7" y="773.6"/><use href="#rx" x="2412.2" y="762.3"/><use href="#gx" x="1794.1" y="873.7"/><use href="#rx" x="2490.6" y="709.6"/><use href="#gx" x="1183" y="930.2"/><use href="#gu" x="2135.3" y="803.3"/><use href="#gu" x="1397.6" y="840.1"/><use href="#gx" x="1873.9" y="870.1"/><use href="#gu" x="1306.6" y="812.4"/><use href="#gx" x="1964" y="828.3"/><use href="#rx" x="1171.5" y="905.2"/><use href="#gx" x="2335.6" y="741.6"/><use href="#gu" x="1731.2" y="872.9"/><use href="#rx" x="2147" y="784"/><use href="#gx" x="1626.4" y="838.2"/><use href="#gu" x="2014" y="816.9"/><use href="#rx" x="1234.4" y="842.1"/><use href="#rd" x="1482.1" y="790.9"/><use href="#rx" x="2580.1" y="679.3"/><use href="#rx" x="1839.6" y="877.4"/><use href="#gx" x="1204.7" y="902"/><use href="#rx" x="1709" y="857.9"/><use href="#rd" x="2548.5" y="653.6"/><use href="#gu" x="2298.8" y="750.6"/><use href="#rd" x="1377" y="836.7"/><use href="#rx" x="1418.2" y="809.5"/><use href="#gx" x="1259.9" y="812.3"/><use href="#gx" x="1581.9" y="836.5"/><use href="#rd" x="1176.8" y="909.7"/><use href="#rd" x="1838.1" y="882.4"/><use href="#rd" x="2425.9" y="773.3"/><use href="#rd" x="1516.3" y="785.6"/><use href="#gu" x="1414.1" y="824.2"/><use href="#rd" x="1414.2" y="810.1"/><use href="#rd" x="1292.9" y="772.6"/><use href="#gx" x="2567.5" y="706.6"/><use href="#gu" x="2189.1" y="770.3"/><use href="#rd" x="2038" y="812.8"/><use href="#rd" x="1783.2" y="827.4"/><use href="#rd" x="1499.2" y="783.7"/><use href="#rd" x="1172.4" y="896.6"/><use href="#rx" x="1504.1" y="781"/><use href="#gu" x="1283.3" y="813.4"/><use href="#rx" x="2037.2" y="804.4"/><use href="#gu" x="1840.2" y="904.6"/><use href="#gu" x="1305.8" y="810.3"/><use href="#gu" x="2525.7" y="705.6"/><use href="#rd" x="1336.3" y="794.6"/><use href="#rd" x="1223.1" y="816.7"/><use href="#rd" x="2459.8" y="766.2"/><use href="#rd" x="1919.2" y="849.8"/><use href="#gu" x="1268.4" y="808.7"/><use href="#gx" x="1673.5" y="890.1"/><use href="#rx" x="1897" y="840.9"/><use href="#rd" x="1677.8" y="856.2"/><use href="#rx" x="2503.7" y="700.6"/><use href="#rd" x="2070.2" y="776.8"/><use href="#rd" x="1898.6" y="837.5"/><use href="#rx" x="1999.4" y="815.8"/><use href="#gx" x="1396.2" y="846.6"/><use href="#gu" x="2389.3" y="760.9"/><use href="#rd" x="2138.7" y="785"/><use href="#gx" x="2363.8" y="766.4"/><use href="#gx" x="1500.9" y="804.1"/><use href="#rd" x="1281.5" y="791.8"/><use href="#gx" x="2050.7" y="841.8"/><use href="#gx" x="1078" y="738.5"/><use href="#gx" x="1294.7" y="814.6"/><use href="#rd" x="1138" y="812"/><use href="#gu" x="1731.1" y="881.3"/><use href="#rd" x="2459.1" y="747.6"/><use href="#gu" x="1886.9" y="862.7"/><use href="#rd" x="2620.6" y="634.6"/><use href="#rd" x="1703.8" y="882.6"/><use href="#gu" x="1510.1" y="788.5"/><use href="#gu" x="1193.1" y="937.6"/><use href="#gx" x="1419.5" y="837.2"/><use href="#gx" x="1187" y="912.1"/><use href="#gx" x="1274" y="848.1"/><use href="#gu" x="1277.3" y="806.1"/><use href="#gu" x="1598.3" y="836.3"/><use href="#gu" x="1154.7" y="880.7"/><use href="#gu" x="1857.6" y="883"/><use href="#rd" x="2401.1" y="741.1"/><use href="#gu" x="2604.9" y="738.2"/><use href="#gx" x="1848" y="893.5"/><use href="#gx" x="1221.1" y="871.9"/><use href="#gu" x="1176.5" y="918.2"/><use href="#rx" x="2008.4" y="792.1"/><use href="#rx" x="1182" y="886.7"/><use href="#rx" x="2529.4" y="677.4"/><use href="#rx" x="2215.8" y="767.9"/><use href="#rd" x="2567.1" y="675.5"/><use href="#rd" x="1984" y="812.9"/><use href="#rx" x="1535.8" y="797.6"/><use href="#rx" x="1057.9" y="690.6"/><use href="#gx" x="1272.1" y="828.9"/><use href="#rx" x="2368.6" y="763"/><use href="#rd" x="1395.7" y="818.6"/><use href="#rx" x="1262" y="789.6"/><use href="#gu" x="1927.6" y="861.1"/><use href="#rx" x="1188.3" y="896"/><use href="#rx" x="1169.8" y="898.1"/><use href="#gx" x="1560.7" y="820.6"/><use href="#rx" x="1180.2" y="869.5"/><use href="#gu" x="2537.7" y="684.3"/><use href="#gu" x="1138.2" y="871.5"/><use href="#gx" x="1289.2" y="828"/><use href="#gu" x="2392.7" y="762.6"/><use href="#gu" x="1490.8" y="831.8"/><use href="#rd" x="1961.9" y="821.1"/><use href="#rx" x="1273.3" y="773.2"/><use href="#gx" x="1192.9" y="908.3"/><use href="#gx" x="1526.6" y="811.6"/><use href="#gu" x="1645.1" y="875.4"/><use href="#gu" x="2323.8" y="752"/><use href="#gx" x="1133.3" y="870.9"/><use href="#gu" x="1530.5" y="818.6"/><use href="#rd" x="1331.3" y="772.7"/><use href="#rx" x="2558.4" y="679.1"/><use href="#rx" x="2480.7" y="743.8"/><use href="#gu" x="1841.4" y="890.3"/><use href="#gx" x="1278.8" y="857.7"/><use href="#rd" x="1522.5" y="780.7"/><use href="#rx" x="1488.7" y="795.1"/><use href="#gu" x="2031.1" y="805.6"/><use href="#gu" x="1063.8" y="697.3"/><use href="#rx" x="1772.3" y="834"/><use href="#gx" x="2391.4" y="773"/><use href="#rx" x="1882" y="834.1"/><use href="#gu" x="1668.5" y="888.5"/><use href="#gx" x="1070.8" y="708.8"/><use href="#rd" x="2470.5" y="777"/><use href="#rx" x="1858" y="859.9"/><use href="#rx" x="1833.9" y="891.6"/><use href="#gu" x="1095.7" y="795.9"/><use href="#rx" x="1572.7" y="786.2"/><use href="#rx" x="2121.6" y="783.2"/><use href="#rx" x="2233.6" y="758"/><use href="#gx" x="1957.1" y="864.7"/><use href="#gx" x="1321.8" y="832"/><use href="#rx" x="2440.2" y="749.5"/><use href="#gx" x="2009.4" y="826"/><use href="#gx" x="1131.6" y="854"/><use href="#rx" x="1450.2" y="786.1"/><use href="#rd" x="1826.1" y="878.4"/><use href="#gx" x="2411.5" y="772.9"/><use href="#gu" x="1584.4" y="813"/><use href="#rx" x="1072.2" y="670.5"/><use href="#rx" x="1927" y="851.9"/><use href="#gx" x="1934.1" y="872.9"/><use href="#rx" x="1288.7" y="768.8"/><use href="#gu" x="2377" y="776.2"/><use href="#rx" x="1172.8" y="896.7"/><use href="#rd" x="2602.3" y="691"/><use href="#gx" x="2493.5" y="768.3"/><use href="#gx" x="1113.7" y="756.7"/><use href="#rx" x="1088.1" y="734.9"/><use href="#gx" x="1178.2" y="921.5"/><use href="#gx" x="1499.3" y="813"/><use href="#rd" x="2499.7" y="709.1"/><use href="#gu" x="2173" y="769.7"/><use href="#gx" x="2428" y="789.7"/><use href="#rd" x="1419.1" y="796.9"/><use href="#gx" x="1776.4" y="849.7"/><use href="#rx" x="1939.4" y="857.7"/><use href="#gu" x="2476.3" y="795.9"/><use href="#rx" x="1137" y="806.4"/><use href="#rd" x="1516" y="774.2"/><use href="#gx" x="2153.7" y="789.1"/><use href="#gu" x="1390.8" y="845.5"/><use href="#rx" x="1620.7" y="798"/><use href="#rd" x="2561.7" y="683"/><use href="#rd" x="1620.3" y="757.1"/><use href="#gu" x="1065.6" y="689.6"/><use href="#gx" x="2368.6" y="784.8"/><use href="#rd" x="1934.6" y="850.1"/><use href="#gu" x="1336.1" y="807"/><use href="#gu" x="2476.4" y="776.9"/><use href="#rx" x="2080.8" y="802"/><use href="#rd" x="2427.5" y="770.9"/><use href="#rd" x="2481.4" y="732.8"/><use href="#rd" x="1266.9" y="782.5"/><use href="#rd" x="1136.1" y="825.5"/><use href="#gx" x="1092.6" y="794.3"/><use href="#gu" x="1408.5" y="839.4"/><use href="#rx" x="1918" y="849.9"/><use href="#rd" x="1698.8" y="860.6"/><use href="#gx" x="2438.3" y="781.7"/><use href="#gu" x="1177.2" y="930.4"/><use href="#gu" x="1217" y="870"/><use href="#rd" x="1506.7" y="783.2"/><use href="#rd" x="1061.1" y="676.5"/><use href="#gu" x="1924.4" y="875.6"/><use href="#gx" x="1329.2" y="815.9"/><use href="#rd" x="1224" y="833.4"/><use href="#rx" x="1176.5" y="900.7"/><use href="#rx" x="2479.2" y="755.8"/><use href="#gx" x="1366.9" y="852.6"/><use href="#gu" x="2106" y="829.5"/><use href="#rd" x="2351.4" y="747.1"/><use href="#rx" x="1057" y="676.2"/><use href="#rx" x="1728.3" y="863"/><use href="#rd" x="2078.8" y="800.7"/><use href="#gx" x="1164.1" y="905.6"/><use href="#gx" x="1533.4" y="811.7"/><use href="#gu" x="2192.8" y="780.2"/><use href="#gu" x="1504.7" y="787.8"/><use href="#rx" x="1866.7" y="827.9"/><use href="#rd" x="1178.8" y="905.3"/><use href="#gu" x="1102.7" y="738.1"/><use href="#rd" x="1983.3" y="815.9"/><use href="#gu" x="2591.7" y="723.3"/><use href="#gx" x="1323.7" y="830.7"/><use href="#rd" x="1251.3" y="791"/><use href="#rx" x="2600.1" y="678.5"/><use href="#gx" x="1449.3" y="805.5"/><use href="#rx" x="1284.6" y="800"/><use href="#rx" x="1714.7" y="864.1"/><use href="#rx" x="2603.1" y="690.1"/><use href="#gu" x="2494.1" y="772.1"/><use href="#gu" x="1286.8" y="823.5"/><use href="#rd" x="2286.3" y="753.9"/><use href="#rd" x="2528.8" y="677.7"/><use href="#rx" x="2531.3" y="673.7"/><use href="#rd" x="2492.9" y="709"/><use href="#rx" x="2025" y="796.6"/><use href="#gu" x="2572.4" y="699.4"/><use href="#gu" x="2171.1" y="781.8"/><use href="#rx" x="1152.8" y="857.3"/><use href="#gu" x="2382.9" y="786"/><use href="#gu" x="1057" y="715.6"/><use href="#rx" x="1057" y="676"/><use href="#gu" x="2569.4" y="712.6"/><use href="#rx" x="2491.8" y="721.2"/><use href="#gu" x="1223.6" y="855.2"/><use href="#rx" x="1648.6" y="866.3"/><use href="#gx" x="1424" y="816.2"/><use href="#rd" x="1448" y="797.8"/><use href="#gu" x="2510.4" y="729.4"/><use href="#gx" x="2255.5" y="772.4"/><use href="#gu" x="2097.5" y="838.9"/><use href="#gx" x="1494.8" y="825.6"/><use href="#rd" x="2138.3" y="786"/><use href="#gu" x="2584.6" y="725.6"/><use href="#rx" x="1286.2" y="803.4"/><use href="#gx" x="1997.9" y="828.2"/><use href="#gu" x="2253.9" y="762.2"/><use href="#rx" x="2112" y="801.7"/><use href="#gx" x="2217.6" y="774.2"/><use href="#rx" x="1286.4" y="761.4"/><use href="#gx" x="1505.6" y="795.1"/><use href="#gx" x="1723.4" y="887.4"/><use href="#gx" x="1198.7" y="914.2"/><use href="#rx" x="2534.8" y="667.5"/><use href="#rx" x="1665.9" y="877.4"/><use href="#gu" x="2514.8" y="709.9"/><use href="#rx" x="2280.7" y="745.7"/><use href="#rx" x="2380.7" y="760.3"/><use href="#gx" x="1893" y="859.8"/><use href="#gx" x="1955.1" y="837.6"/><use href="#gx" x="1292" y="830.1"/><use href="#rd" x="1943.1" y="854.2"/><use href="#rx" x="1181.1" y="899.2"/><use href="#gx" x="2023.8" y="832.1"/><use href="#rd" x="2355.2" y="742.4"/><use href="#gx" x="1403.2" y="832.7"/><use href="#rx" x="2223.5" y="756.3"/><use href="#gu" x="2522.7" y="693"/><use href="#gu" x="1806.4" y="870.8"/><use href="#rx" x="1989.5" y="808.7"/><use href="#gx" x="1216.4" y="880.9"/><use href="#rx" x="2353.2" y="746.6"/><use href="#rd" x="2187.5" y="754.8"/><use href="#rd" x="1399.5" y="820.5"/><use href="#gx" x="2054" y="830.8"/><use href="#rd" x="2303.6" y="725.3"/><use href="#rx" x="2143.2" y="779.2"/><use href="#gu" x="1103.3" y="768.2"/><use href="#gx" x="1973.1" y="859"/><use href="#rx" x="1195.6" y="861.7"/><use href="#gx" x="2207.6" y="806.3"/><use href="#gu" x="1281.5" y="813.1"/><use href="#rx" x="1859.6" y="863.1"/><use href="#rx" x="2574" y="676.3"/><use href="#rd" x="1614.1" y="790.9"/><use href="#gu" x="1219.8" y="860.7"/><use href="#gu" x="1286.6" y="813.2"/><use href="#rx" x="1267.6" y="753.7"/><use href="#rx" x="1850.6" y="852.3"/><use href="#rd" x="2369.4" y="753.4"/><use href="#gx" x="1890.7" y="868.5"/><use href="#gu" x="2189.7" y="774.5"/><use href="#rx" x="1395.1" y="819.7"/><use href="#rd" x="1116.6" y="732.2"/><use href="#rx" x="2296.2" y="742.5"/><use href="#gx" x="1581.1" y="815.3"/><use href="#gx" x="2164.5" y="796.3"/><use href="#gu" x="1606" y="833.1"/><use href="#rx" x="1986.7" y="805.8"/><use href="#gu" x="2399.6" y="764.5"/><use href="#rx" x="1645.5" y="849.8"/><use href="#gx" x="2245.7" y="765"/><use href="#gx" x="1348.6" y="815"/><use href="#gu" x="1108" y="757.6"/><use href="#rd" x="2405.3" y="740.7"/><use href="#rd" x="1945.8" y="848.9"/><use href="#gu" x="1492.5" y="809.3"/><use href="#gu" x="1484.3" y="811.4"/><use href="#gu" x="1487.1" y="819.1"/><use href="#rx" x="1148.2" y="847.9"/><use href="#gu" x="2157.4" y="788"/><use href="#gx" x="2138.4" y="806.6"/><use href="#rd" x="1382.8" y="831"/><use href="#rx" x="1480.3" y="801.2"/><use href="#gx" x="2191.7" y="765.8"/><use href="#gx" x="1155.6" y="885.6"/><use href="#gx" x="2586.5" y="722.6"/><use href="#rx" x="1271.7" y="785.1"/><use href="#rd" x="2072.3" y="777.5"/><use href="#rx" x="1907.4" y="845.5"/><use href="#rx" x="2527.4" y="673.7"/><use href="#rx" x="1173.6" y="909"/><use href="#gu" x="1886.5" y="860.3"/><use href="#rd" x="1758.5" y="823.4"/><use href="#rx" x="1253.2" y="803.2"/><use href="#gx" x="1491.1" y="817.2"/><use href="#rd" x="1680.7" y="841.1"/><use href="#rx" x="1448.9" y="782.4"/><use href="#rd" x="2605.7" y="652.6"/><use href="#gu" x="2102.7" y="832.8"/><use href="#rx" x="1266.9" y="768.7"/><use href="#rd" x="1787.5" y="839.4"/><use href="#rx" x="1954.9" y="829.8"/><use href="#gx" x="1722.8" y="888.9"/><use href="#gx" x="2405.8" y="751.6"/><use href="#gu" x="1181.3" y="944.9"/><use href="#gx" x="2083.7" y="811.8"/><use href="#gu" x="2569.6" y="703"/><use href="#rd" x="2080.6" y="803.1"/><use href="#rx" x="1447.1" y="772.6"/><use href="#gu" x="2196.4" y="763.5"/><use href="#gu" x="1439.4" y="804.6"/><use href="#gx" x="1241.3" y="837.4"/><use href="#gx" x="1167.5" y="924"/><use href="#rd" x="1722.5" y="878"/><use href="#gu" x="2250.1" y="763.9"/><use href="#rx" x="1490.2" y="787.6"/><use href="#gx" x="2101.9" y="818.9"/><use href="#rx" x="1073" y="694.4"/><use href="#rd" x="1327.5" y="786.3"/><use href="#rx" x="2595.8" y="697.8"/><use href="#gu" x="1598.5" y="825.9"/><use href="#rx" x="1133.9" y="842.5"/><use href="#rd" x="1479.2" y="796.6"/><use href="#rd" x="1749.3" y="830.5"/><use href="#gu" x="2051.9" y="829.3"/><use href="#gu" x="2236.6" y="773.8"/><use href="#rx" x="1402.6" y="821.2"/><use href="#rd" x="1164.2" y="870.8"/><use href="#gx" x="1552.7" y="800.6"/><use href="#gu" x="1581.5" y="831.2"/><use href="#rx" x="2513.6" y="667.2"/><use href="#gu" x="1269.8" y="829.6"/><use href="#rx" x="1716.5" y="862.4"/><use href="#gx" x="1881.3" y="861.2"/><use href="#gx" x="2609" y="695"/><use href="#gu" x="1196.2" y="912.5"/><use href="#rx" x="2103.2" y="793.1"/><use href="#rd" x="2031.4" y="782"/><use href="#gu" x="1209.9" y="904.2"/><use href="#gx" x="2167.8" y="782.2"/><use href="#rx" x="1384.1" y="824.5"/><use href="#gu" x="1774.8" y="839.2"/><use href="#gx" x="1090.8" y="759.6"/><use href="#rx" x="1797.7" y="854"/><use href="#gu" x="1084.5" y="751.4"/><use href="#rx" x="1334.2" y="783.2"/><use href="#gu" x="1214.8" y="900.2"/><use href="#rx" x="1459.5" y="780.7"/><use href="#gx" x="2565.8" y="710"/><use href="#gx" x="1190" y="913.6"/><use href="#rx" x="2405.4" y="744.5"/><use href="#rd" x="1074.1" y="684.4"/><use href="#gu" x="1287.1" y="828.2"/><use href="#rd" x="1443.5" y="792.4"/><use href="#gx" x="2058.1" y="826.8"/><use href="#gu" x="2511.6" y="711.1"/><use href="#gu" x="2190.2" y="789.8"/><use href="#gu" x="1828.7" y="920.8"/><use href="#rx" x="1131.5" y="836.9"/><use href="#gu" x="1128.5" y="884.3"/><use href="#gx" x="1681.6" y="886.8"/><use href="#gu" x="2138.1" y="800.3"/><use href="#gu" x="1239.4" y="851.5"/><use href="#gx" x="1610" y="824.5"/><use href="#rd" x="1600.6" y="812.6"/><use href="#gx" x="1213.8" y="875"/><use href="#rx" x="1911.2" y="849.4"/><use href="#gx" x="1351.6" y="824.6"/><use href="#rd" x="1859.5" y="857.7"/><use href="#gu" x="1117.4" y="792.9"/><use href="#rd" x="1323.6" y="770.8"/><use href="#gu" x="2452.2" y="767.8"/><use href="#gx" x="1796.7" y="875.8"/><use href="#gx" x="1854.6" y="872"/><use href="#gx" x="1397.5" y="850.6"/><use href="#rx" x="1635" y="840.7"/><use href="#gu" x="1191" y="909.1"/><use href="#gx" x="2365.1" y="781.1"/><use href="#rx" x="2597.4" y="681.1"/><use href="#gx" x="2509.1" y="722.5"/><use href="#rx" x="1623.3" y="803.7"/><use href="#rx" x="1448.9" y="797.9"/><use href="#gx" x="1551.9" y="806"/><use href="#rd" x="1244.4" y="806.4"/><use href="#rd" x="2286.3" y="754.2"/><use href="#rx" x="1189" y="902"/><use href="#rx" x="1204.8" y="858.8"/><use href="#rd" x="2315.5" y="725.5"/><use href="#rd" x="1301" y="768.8"/><use href="#rd" x="1505.1" y="781.1"/><use href="#gx" x="1743.3" y="882.1"/><use href="#gx" x="2392.6" y="771.8"/><use href="#rd" x="2085.2" y="799.4"/><use href="#rd" x="1481" y="795.6"/><use href="#gu" x="1549.6" y="796.4"/><use href="#gu" x="1286.2" y="827.4"/><use href="#gx" x="1801.2" y="872.9"/><use href="#rx" x="1322.4" y="802.3"/><use href="#rx" x="2601.2" y="687.6"/><use href="#gu" x="1442.1" y="811.8"/><use href="#gu" x="2425.2" y="782"/><use href="#rx" x="2124.2" y="780"/><use href="#gx" x="2610.5" y="722.2"/><use href="#rd" x="2535.7" y="673.4"/><use href="#rd" x="1992.2" y="811.4"/><use href="#rx" x="2295.9" y="734.9"/><use href="#rx" x="1269.8" y="776.4"/><use href="#gx" x="1069.2" y="695.4"/><use href="#gu" x="1339.1" y="808.9"/><use href="#gx" x="2613.7" y="687.1"/><use href="#gx" x="1660.5" y="889.6"/><use href="#rd" x="1328.8" y="762.7"/><use href="#rd" x="1144.6" y="836.8"/><use href="#rd" x="2070.8" y="761.2"/><use href="#rd" x="1899.8" y="850.9"/><use href="#rd" x="1903.6" y="855.4"/><use href="#rx" x="1527.8" y="772.9"/><use href="#gx" x="1577.5" y="823"/><use href="#rd" x="1145.5" y="840.2"/><use href="#gu" x="1081.7" y="745.9"/><use href="#gx" x="1653.9" y="896.5"/><use href="#gu" x="2340.9" y="752.1"/><use href="#rx" x="2153" y="779.5"/><use href="#rd" x="2227.3" y="749"/><use href="#rd" x="1793.8" y="815.4"/><use href="#gx" x="1220.4" y="858.8"/><use href="#gx" x="2454.5" y="820.5"/><use href="#gu" x="1943.2" y="862.3"/><use href="#gx" x="1183.5" y="936.4"/><use href="#rd" x="1179.2" y="870.3"/><use href="#rd" x="1967.3" y="815"/><use href="#gu" x="1254.5" y="833"/><use href="#gx" x="1414.3" y="844.7"/><use href="#rd" x="2597.8" y="668.1"/><use href="#rd" x="1300.2" y="779.3"/><use href="#gu" x="1984.7" y="833.4"/><use href="#gu" x="2077" y="803.1"/><use href="#rd" x="2314.6" y="708.7"/><use href="#gu" x="1194.7" y="899.5"/><use href="#rd" x="2160.5" y="781.5"/><use href="#gu" x="1547.4" y="819.9"/><use href="#rx" x="1839.3" y="862.2"/><use href="#gu" x="2471.1" y="803.9"/><use href="#gu" x="1067.6" y="711.6"/><use href="#gx" x="1885.8" y="863.6"/><use href="#rd" x="2498.4" y="698.2"/><use href="#rd" x="2033.1" y="806"/><use href="#gx" x="1139.2" y="884.4"/><use href="#gu" x="1074.1" y="719"/><use href="#rx" x="2071.4" y="774.3"/><use href="#gx" x="1133" y="874.9"/><use href="#rx" x="1264.4" y="805.8"/><use href="#gu" x="1294.1" y="855.6"/><use href="#rd" x="2074" y="796"/><use href="#rx" x="1694.2" y="852.3"/><use href="#gx" x="2566" y="689"/><use href="#gu" x="1727.7" y="877.3"/><use href="#gu" x="1701.2" y="917.4"/><use href="#gu" x="1584" y="838.1"/><use href="#gu" x="2021" y="810"/><use href="#gx" x="1142.7" y="879.3"/><use href="#gx" x="2564.7" y="689.9"/><use href="#gx" x="2534.3" y="699.9"/><use href="#rx" x="1919.9" y="830.5"/><use href="#gx" x="1887.2" y="862.3"/><use href="#gx" x="1959.3" y="831.3"/><use href="#rx" x="1202.3" y="885.7"/><use href="#gx" x="1480.3" y="810.6"/><use href="#gu" x="1120.5" y="794.6"/><use href="#gx" x="1266.8" y="813.1"/><use href="#gu" x="1260" y="814.3"/><use href="#rx" x="2587.9" y="675.3"/><use href="#gx" x="1831.4" y="911.5"/><use href="#rd" x="1735.3" y="854.4"/><use href="#gu" x="2153.3" y="785.8"/><use href="#rd" x="1652.4" y="862.2"/><use href="#rx" x="2596.7" y="675.5"/><use href="#gu" x="1369.3" y="859.7"/><use href="#rd" x="1384.1" y="787.8"/><use href="#rd" x="1508.5" y="783.8"/><use href="#rd" x="2531.3" y="673.7"/><use href="#rd" x="2589.9" y="675.6"/><use href="#rd" x="1744.8" y="827.7"/><use href="#rx" x="2606.1" y="691.1"/><use href="#rx" x="1730.9" y="868.8"/><use href="#gx" x="1146.9" y="860"/><use href="#gu" x="1724.5" y="909.1"/><use href="#gx" x="1406.9" y="834.8"/><use href="#gx" x="1717" y="909.2"/><use href="#rd" x="1232.3" y="838.5"/><use href="#rx" x="1515.7" y="783.6"/><use href="#rx" x="1303.9" y="736.6"/><use href="#rx" x="2397.2" y="752.4"/><use href="#gx" x="1105.1" y="740.7"/><use href="#rx" x="1124.5" y="765.6"/><use href="#gx" x="2384.9" y="777"/><use href="#rd" x="1549.2" y="786.2"/><use href="#rd" x="1253.8" y="804.9"/><use href="#gx" x="1144.6" y="872.2"/><use href="#gu" x="2371" y="792.8"/><use href="#gx" x="2511.5" y="730.2"/><use href="#gx" x="2520.7" y="688.1"/><use href="#gu" x="2539.4" y="688.7"/><use href="#gx" x="2361.4" y="766.5"/><use href="#gu" x="2185.2" y="780.2"/><use href="#rd" x="1715.8" y="863.4"/><use href="#gx" x="2273.1" y="755.8"/><use href="#rx" x="1505.8" y="784.7"/><use href="#rd" x="2050.6" y="800"/><use href="#gu" x="1925.7" y="886.5"/><use href="#gx" x="2540.1" y="664.6"/><use href="#gx" x="1269.5" y="805.2"/><use href="#rx" x="1319.5" y="811.3"/><use href="#rx" x="1363.7" y="835"/><use href="#gx" x="1574.3" y="823"/><use href="#rd" x="1521.8" y="789.1"/><use href="#gu" x="1158.1" y="881.1"/><use href="#gx" x="1813.7" y="885.3"/><use href="#gx" x="1335" y="812.7"/><use href="#rd" x="1989.3" y="810.3"/><use href="#gx" x="1779.9" y="834.7"/><use href="#rx" x="1791.3" y="843.7"/><use href="#rx" x="1295.7" y="773.1"/><use href="#rd" x="1111.3" y="702.4"/><use href="#rx" x="1837" y="875.7"/><use href="#gu" x="1817.8" y="880.7"/><use href="#gx" x="1149.7" y="886.3"/><use href="#rx" x="1504.3" y="778.9"/><use href="#rd" x="2209.2" y="771.8"/><use href="#rd" x="1240.6" y="808.3"/><use href="#rx" x="1431.8" y="799.8"/><use href="#rx" x="1386.8" y="830"/><use href="#rd" x="1286.6" y="772.2"/><use href="#rx" x="2467.8" y="772.5"/><use href="#gx" x="1122.8" y="802.4"/><use href="#rx" x="1666.1" y="881.6"/><use href="#gu" x="1934.1" y="866.4"/><use href="#rd" x="1516.7" y="776.6"/><use href="#rx" x="1358.1" y="826.3"/><use href="#gx" x="1862.9" y="882.6"/><use href="#gx" x="1845.4" y="888.3"/><use href="#rd" x="1160" y="845.6"/><use href="#gx" x="1189.8" y="909.2"/><use href="#gx" x="2189.9" y="774.5"/><use href="#rx" x="1095" y="682.1"/><use href="#rd" x="2126" y="775.1"/><use href="#rd" x="2512.8" y="687.9"/><use href="#gu" x="1419.2" y="814"/><use href="#rd" x="2256.2" y="748.6"/><use href="#rx" x="1176.1" y="909.2"/><use href="#rx" x="1070.1" y="686.2"/><use href="#gx" x="2561.9" y="696.6"/><use href="#gx" x="1754.3" y="853.7"/><use href="#gx" x="2577.1" y="703"/><use href="#gx" x="1119.7" y="806.2"/><use href="#rx" x="2043.5" y="820.2"/><use href="#gu" x="1718.9" y="917.2"/><use href="#gu" x="1735.4" y="884.3"/><use href="#gx" x="2313.5" y="770.2"/><use href="#gu" x="1789.3" y="859.5"/><use href="#rx" x="1914" y="855.9"/><use href="#gx" x="2604.2" y="712.3"/><use href="#rd" x="1268" y="795.2"/><use href="#rd" x="1057" y="693.1"/><use href="#rd" x="1864.8" y="859.9"/><use href="#gx" x="2132.3" y="812.6"/><use href="#rd" x="1659.4" y="878.7"/><use href="#gu" x="1490.4" y="808"/><use href="#rd" x="2561.9" y="678.9"/><use href="#rd" x="2334" y="725.8"/><use href="#rx" x="1731.7" y="866.8"/><use href="#gx" x="2134.3" y="791.3"/><use href="#rx" x="2289.5" y="743.7"/><use href="#gx" x="1260.4" y="815.1"/><use href="#gu" x="2555.9" y="701.3"/><use href="#gu" x="1642.7" y="867.5"/><use href="#gu" x="1851.1" y="882.2"/><use href="#rx" x="2474.3" y="761.1"/><use href="#gu" x="1652.1" y="888.9"/><use href="#rx" x="1480.2" y="800.6"/><use href="#rx" x="1489.5" y="781.7"/><use href="#gx" x="1107.7" y="771.5"/><use href="#rd" x="2109.2" y="790.2"/><use href="#gx" x="1510.3" y="792.4"/><use href="#gx" x="2543.8" y="669.8"/><use href="#rd" x="2550.5" y="653.1"/><use href="#gx" x="1247.8" y="822.8"/><use href="#rx" x="1855.4" y="857.4"/><use href="#gx" x="1233" y="851.2"/><use href="#rx" x="1128.7" y="826.4"/><use href="#rd" x="1260.3" y="794.4"/><use href="#rd" x="1218.6" y="854.8"/><use href="#rx" x="1405.2" y="829.6"/><use href="#gu" x="1204.7" y="891.4"/><use href="#rd" x="2023.1" y="779.2"/><use href="#rx" x="1281.5" y="785.6"/><use href="#gx" x="2027.3" y="819.4"/><use href="#gu" x="2012.8" y="823.9"/><use href="#rd" x="1079.4" y="709.3"/><use href="#gx" x="1362.7" y="850.1"/><use href="#gu" x="1601.2" y="824.4"/><use href="#rx" x="2428.2" y="764.7"/><use href="#rd" x="2488.5" y="718.6"/><use href="#rx" x="1270.4" y="770.9"/><use href="#rd" x="1369.4" y="835.7"/><use href="#gu" x="2504.3" y="720.8"/><use href="#gx" x="1130.4" y="840.4"/><use href="#gu" x="1756.9" y="859.8"/><use href="#gu" x="2129.1" y="801.4"/><use href="#rd" x="1783.5" y="828.8"/><use href="#gu" x="1110.3" y="775.4"/><use href="#gu" x="1099" y="755.7"/><use href="#rx" x="1129.5" y="798.9"/><use href="#rd" x="2058" y="815.2"/><use href="#rd" x="2586.5" y="680.9"/><use href="#gu" x="2361.1" y="770.2"/><use href="#gu" x="1138.8" y="853.2"/><use href="#gx" x="1590.2" y="831.1"/><use href="#rx" x="1385.1" y="818.6"/><use href="#gu" x="1692.4" y="893.5"/><use href="#gu" x="1917.6" y="868"/><use href="#rx" x="1900.7" y="846.3"/><use href="#gx" x="2497.2" y="768.1"/><use href="#gu" x="1284.2" y="817.5"/><use href="#gu" x="2032.4" y="815.9"/><use href="#rd" x="1206" y="853.9"/><use href="#gu" x="2597.7" y="702.5"/><use href="#rx" x="2222.3" y="767.5"/><use href="#gx" x="2568.5" y="687.8"/><use href="#gu" x="2614.6" y="714.6"/><use href="#gx" x="1543.1" y="812.7"/><use href="#rx" x="1093.4" y="739.6"/><use href="#rd" x="2345.4" y="721.3"/><use href="#rd" x="1078.4" y="715.6"/><use href="#rx" x="1277.7" y="793.7"/><use href="#gx" x="1072.1" y="718.8"/><use href="#rx" x="1286.8" y="780.4"/><use href="#gx" x="1750.2" y="852"/><use href="#rd" x="1213.8" y="856.3"/><use href="#rx" x="2512.2" y="696.6"/><use href="#rx" x="2323.4" y="721.8"/><use href="#rx" x="2161.2" y="764.9"/><use href="#rd" x="1867.1" y="833.3"/><use href="#rd" x="2333.9" y="708.5"/><use href="#rd" x="2231" y="755.2"/><use href="#gx" x="2243.1" y="771.1"/><use href="#rd" x="1364" y="836.1"/><use href="#gu" x="1329.3" y="810.4"/><use href="#gu" x="2596.1" y="714.3"/><use href="#gu" x="2423.1" y="799.5"/><use href="#gu" x="1363.2" y="846"/><use href="#gx" x="1268.5" y="839.7"/><use href="#gu" x="1069.2" y="714.8"/><use href="#gx" x="1934.1" y="862"/><use href="#gx" x="2319.6" y="751.6"/><use href="#rd" x="2275.6" y="745"/><use href="#rd" x="1282.8" y="798.3"/><use href="#gu" x="1209.5" y="886.6"/><use href="#rx" x="1657.6" y="881.3"/><use href="#gu" x="1667.6" y="897.9"/><use href="#gx" x="1411.6" y="845.5"/><use href="#gu" x="1459.3" y="847.8"/><use href="#gu" x="1820.4" y="899.3"/><use href="#gu" x="1711.4" y="897.4"/><use href="#rx" x="1264.4" y="805.7"/><use href="#rd" x="1241.5" y="821.4"/><use href="#rx" x="1070.5" y="690.3"/><use href="#gu" x="1486" y="822.4"/><use href="#gu" x="2591.3" y="721.8"/><use href="#gx" x="1870.5" y="888.9"/><use href="#rx" x="1144.8" y="833.5"/><use href="#rx" x="1730.2" y="872.2"/><use href="#rx" x="1799.2" y="827"/><use href="#gu" x="1064.5" y="708.5"/><use href="#gu" x="1504.5" y="815.7"/><use href="#rd" x="1858.9" y="861.7"/><use href="#gx" x="1322.2" y="823.8"/><use href="#gx" x="2076" y="834.9"/><use href="#rd" x="1896" y="851.9"/><use href="#gu" x="2383.8" y="787.6"/><use href="#rd" x="2529.2" y="668.5"/><use href="#gx" x="1853.3" y="878.2"/><use href="#gu" x="1197.5" y="906.9"/><use href="#rd" x="1628.9" y="792.4"/><use href="#rd" x="2125.4" y="777.6"/><use href="#rd" x="2292.4" y="737.9"/><use href="#rx" x="1781.7" y="821.3"/><use href="#rx" x="1252.7" y="814.7"/><use href="#gu" x="2480.1" y="783.9"/><use href="#rd" x="1297.6" y="797.5"/><use href="#gx" x="1236.5" y="858.6"/><use href="#rd" x="2394.8" y="753.1"/><use href="#rx" x="2307.4" y="715.5"/><use href="#gx" x="2344" y="748.8"/><use href="#rd" x="1216.3" y="835.5"/><use href="#gu" x="2291.8" y="776.6"/><use href="#gu" x="1302.8" y="814.2"/><use href="#gx" x="1442.1" y="809.1"/><use href="#gx" x="1724.2" y="897.2"/><use href="#rd" x="2349.3" y="746.6"/><use href="#gx" x="1566" y="806.9"/><use href="#rx" x="1247.5" y="778.7"/><use href="#rd" x="2167.9" y="762.4"/><use href="#gu" x="1191.7" y="908.5"/><use href="#rx" x="2589.3" y="666.4"/><use href="#gu" x="2373.2" y="794"/><use href="#rx" x="2599" y="680.8"/><use href="#rd" x="2329.4" y="722.4"/><use href="#rd" x="1490.8" y="794.5"/><use href="#gx" x="1131.8" y="877.4"/><use href="#rx" x="1441.8" y="788.2"/><use href="#rx" x="2415" y="764.4"/><use href="#rx" x="1217.9" y="852.5"/><use href="#rd" x="1824.3" y="875.7"/><use href="#rx" x="2290.4" y="739.6"/><use href="#gu" x="1112.5" y="761.5"/><use href="#gu" x="2224.2" y="807.4"/><use href="#gx" x="2313.8" y="736.6"/><use href="#rx" x="1171.5" y="902.7"/><use href="#rd" x="2358.9" y="723.4"/><use href="#gx" x="1936.8" y="862.9"/><use href="#rx" x="1734.2" y="814"/><use href="#rd" x="1065.2" y="676.7"/><use href="#rx" x="1442.5" y="788.4"/><use href="#rd" x="1260.8" y="794.3"/><use href="#gu" x="2437.2" y="803.2"/><use href="#gu" x="1908.3" y="856.9"/><use href="#gu" x="1998.1" y="817.7"/><use href="#gx" x="1700.6" y="915.2"/><use href="#rd" x="2596.6" y="687.1"/><use href="#rd" x="2014.6" y="789.3"/><use href="#rd" x="1114.1" y="753.7"/><use href="#gx" x="1194.5" y="937.2"/><use href="#rd" x="1877.6" y="839.4"/><use href="#gx" x="1135.3" y="871.7"/><use href="#gx" x="2597" y="712.9"/><use href="#gx" x="2555.4" y="692.2"/><use href="#rd" x="2154.3" y="772.7"/><use href="#gu" x="1287.5" y="826.8"/><use href="#gx" x="1069.1" y="695.8"/><use href="#rx" x="1793.5" y="837.9"/><use href="#gx" x="1310" y="819.2"/><use href="#gx" x="2337.7" y="739.3"/><use href="#gx" x="2233.9" y="772.3"/><use href="#rd" x="1295" y="765.9"/><use href="#rd" x="1518" y="761.2"/><use href="#gu" x="1347.5" y="856.5"/><use href="#rx" x="1129.4" y="828.8"/><use href="#rx" x="2179" y="753.8"/><use href="#gx" x="2084.7" y="813.1"/><use href="#gu" x="2431.6" y="799.8"/><use href="#gx" x="1180.1" y="936.1"/><use href="#gx" x="1139" y="855.1"/><use href="#rd" x="1215.2" y="859.6"/><use href="#gx" x="1706.7" y="889.2"/><use href="#rx" x="1112.6" y="717.4"/><use href="#gu" x="1452.3" y="815.4"/><use href="#rx" x="2424.6" y="772.3"/><use href="#gx" x="1078" y="751.5"/><use href="#gu" x="2278.3" y="770.6"/><use href="#gu" x="1966.7" y="821.5"/><use href="#gx" x="1304.8" y="797"/><use href="#rd" x="1603.9" y="817.8"/><use href="#rx" x="2232.8" y="756.2"/><use href="#rd" x="1174.6" y="862.7"/><use href="#gu" x="2033.4" y="830.7"/><use href="#gu" x="1938" y="873.5"/><use href="#gx" x="1761.8" y="868.3"/><use href="#rd" x="1211.2" y="863.5"/><use href="#gu" x="1788" y="855.9"/><use href="#rd" x="1212.4" y="862.2"/><use href="#rx" x="1340.7" y="789.6"/><use href="#gx" x="1285.7" y="833.5"/><use href="#gx" x="1535.9" y="827.7"/><use href="#rd" x="2559.8" y="689.5"/><use href="#gu" x="2533.8" y="688.3"/><use href="#rx" x="1625.3" y="804.6"/><use href="#gx" x="1612.8" y="832.3"/><use href="#gu" x="2512" y="711.1"/><use href="#gx" x="2054.6" y="829.1"/><use href="#gu" x="2235.3" y="771.5"/><use href="#rd" x="1936.2" y="851.6"/><use href="#rx" x="1991.9" y="812.4"/><use href="#rd" x="1512.2" y="768.4"/><use href="#gx" x="1729.1" y="889.5"/><use href="#gx" x="1072.7" y="723.8"/><use href="#rx" x="1444.4" y="797.6"/><use href="#rx" x="1431.7" y="777.1"/><use href="#gx" x="1329" y="811.1"/><use href="#rx" x="1422.2" y="798.8"/><use href="#rx" x="2006.4" y="809.8"/><use href="#rd" x="1380.3" y="832.5"/><use href="#gu" x="1994.8" y="820.6"/><use href="#rd" x="1729.7" y="864.2"/><use href="#rx" x="1992.4" y="808.2"/><use href="#gx" x="1222.2" y="868.5"/><use href="#rd" x="1588" y="767.6"/><use href="#gu" x="2431.5" y="778.3"/><use href="#rx" x="1856" y="869.3"/><use href="#gx" x="1181.5" y="933.7"/><use href="#gu" x="1163.4" y="902.2"/><use href="#gu" x="1963.5" y="862.7"/><use href="#gu" x="1784.7" y="859.6"/><use href="#rx" x="2605.4" y="675.8"/><use href="#gx" x="2592.6" y="715.2"/><use href="#rd" x="2412.8" y="763.8"/><use href="#gu" x="2304.5" y="746.2"/><use href="#gu" x="2244.4" y="782.8"/><use href="#rx" x="2589.1" y="677.6"/><use href="#rx" x="2570.1" y="673.6"/><use href="#gu" x="1082.1" y="781"/><use href="#gx" x="1555.1" y="794.9"/><use href="#rx" x="1230" y="827"/><use href="#rd" x="2154.7" y="771.8"/><use href="#rd" x="1658.7" y="873.2"/><use href="#rx" x="1442.8" y="801.8"/><use href="#gx" x="1487" y="818.8"/><use href="#gu" x="1536.3" y="805.1"/><use href="#gu" x="1527.6" y="811.8"/><use href="#gu" x="1399.4" y="843.4"/><use href="#gx" x="2166.9" y="773.6"/><use href="#rx" x="2529.4" y="674.3"/><use href="#gu" x="1057" y="714.2"/><use href="#gx" x="2595.2" y="721.7"/><use href="#rx" x="1864.2" y="855"/><use href="#rd" x="2560.6" y="669.2"/><use href="#rx" x="1262.7" y="798.5"/><use href="#gu" x="2348.7" y="749.7"/><use href="#gu" x="1201.4" y="898.7"/><use href="#rd" x="1480.7" y="802.5"/><use href="#gu" x="2211.6" y="802.7"/><use href="#gu" x="2202.7" y="770.4"/><use href="#gu" x="2318" y="773.9"/><use href="#rx" x="1700.9" y="852.9"/><use href="#gu" x="2233.8" y="770.8"/><use href="#gu" x="1102.4" y="754.8"/><use href="#rd" x="1236.6" y="824.5"/><use href="#rd" x="1062.5" y="664.5"/><use href="#gx" x="2015.3" y="826.4"/><use href="#gx" x="1362.5" y="840.7"/><use href="#rx" x="2463.6" y="775.8"/><use href="#rx" x="1285.1" y="790"/><use href="#gu" x="1068.6" y="691.3"/><use href="#rd" x="1598.2" y="811.9"/><use href="#rd" x="2301.9" y="738.8"/><use href="#gx" x="1289.9" y="837.4"/><use href="#gx" x="2253.9" y="768.4"/><use href="#gx" x="1840.5" y="893.3"/><use href="#gu" x="1662.2" y="892.4"/><use href="#rd" x="2114.6" y="786.6"/><use href="#rx" x="1277.6" y="804.2"/><use href="#rd" x="1083.5" y="719.1"/><use href="#gu" x="1208.3" y="891.3"/><use href="#gx" x="2491.2" y="745.8"/><use href="#gx" x="1524.6" y="814.8"/><use href="#rd" x="2512.4" y="678.1"/><use href="#rd" x="1756.3" y="811.3"/><use href="#rx" x="1602.7" y="819.3"/><use href="#rd" x="2589.4" y="675.4"/><use href="#rd" x="2562.2" y="676.7"/><use href="#rx" x="2070.1" y="780.4"/><use href="#gx" x="1861.5" y="881.8"/><use href="#gu" x="2467.9" y="795.2"/><use href="#rx" x="2303.2" y="714"/><use href="#rx" x="2479.9" y="761.5"/><use href="#gx" x="1869.1" y="876.1"/><use href="#rd" x="1967.5" y="811.3"/><use href="#rx" x="1488" y="802.3"/><use href="#rd" x="1309" y="744.5"/><use href="#rd" x="2523.7" y="676.1"/><use href="#gu" x="1189.8" y="911.1"/><use href="#rx" x="1504.3" y="786.1"/><use href="#gu" x="2289.8" y="783"/><use href="#rd" x="1256.9" y="757.7"/><use href="#gu" x="1679.2" y="905"/><use href="#rx" x="1285.6" y="807.6"/><use href="#rx" x="2569.8" y="671.9"/><use href="#gx" x="2498.6" y="726.7"/><use href="#rx" x="2467" y="762.3"/><use href="#gx" x="1644.2" y="867.8"/><use href="#rd" x="1624.9" y="800.5"/><use href="#gu" x="1999.9" y="823.6"/><use href="#gu" x="2578" y="723.7"/><use href="#rx" x="1316.3" y="799.7"/><use href="#gu" x="1844.5" y="890.2"/><use href="#gu" x="2411" y="799.5"/><use href="#gx" x="2204.2" y="788.2"/><use href="#rd" x="1665.8" y="874"/><use href="#gu" x="1763.1" y="847.4"/><use href="#rd" x="1602.4" y="821.6"/><use href="#rd" x="1858.9" y="859.7"/><use href="#rd" x="1062.5" y="650.9"/><use href="#rx" x="1373.5" y="839.7"/><use href="#rd" x="1912.9" y="825.3"/><use href="#gu" x="2446.7" y="767.3"/><use href="#rx" x="2505.3" y="684.6"/><use href="#rd" x="1859" y="864.3"/><use href="#rx" x="1533" y="781.1"/><use href="#gx" x="1974.8" y="856.5"/><use href="#gu" x="1320.8" y="813.1"/><use href="#rd" x="1804.6" y="867.8"/><use href="#gu" x="1690.9" y="866.2"/><use href="#gu" x="1272.3" y="809.8"/><use href="#gx" x="2239.3" y="765.6"/><use href="#gu" x="1659.3" y="897.1"/><use href="#rx" x="2336.6" y="728.3"/><use href="#rx" x="2230" y="758.3"/><use href="#rd" x="1227.4" y="830.3"/><use href="#gu" x="1525.2" y="807"/><use href="#rx" x="2219.5" y="740.3"/><use href="#rx" x="1156.5" y="843.2"/><use href="#gx" x="1095" y="754"/><use href="#rd" x="1626" y="815.1"/><use href="#rd" x="1281.3" y="802.2"/><use href="#gu" x="1745.6" y="879"/><use href="#rx" x="2059.5" y="805.3"/><use href="#rd" x="1235.2" y="828.5"/><use href="#gx" x="2222.5" y="777.4"/><use href="#gu" x="1141.2" y="863.8"/><use href="#rd" x="2195.2" y="751.3"/><use href="#rx" x="2022.6" y="803.4"/><use href="#rx" x="2621" y="623.2"/><use href="#rx" x="1918.5" y="816.3"/><use href="#rd" x="2472.9" y="758"/><use href="#gu" x="1504.2" y="801.4"/><use href="#gu" x="1609.8" y="871.8"/><use href="#rd" x="1132.5" y="802.1"/><use href="#rx" x="1522.6" y="777.1"/><use href="#rd" x="2368.4" y="761.1"/><use href="#gx" x="1323.4" y="817.6"/><use href="#gu" x="1749.5" y="860.1"/><use href="#rd" x="2508" y="701.8"/><use href="#gu" x="1816.8" y="885.8"/><use href="#rd" x="1126.6" y="799"/><use href="#gx" x="2012.8" y="822.7"/><use href="#gu" x="1648.8" y="891.7"/><use href="#gu" x="2574" y="714"/><use href="#rd" x="1271.5" y="783.7"/><use href="#rx" x="2161.2" y="777.1"/><use href="#rx" x="1618.1" y="812.1"/><use href="#gu" x="1316.8" y="815.2"/><use href="#rx" x="1655.8" y="879.4"/><use href="#rd" x="1148.4" y="856.2"/><use href="#rd" x="1259.8" y="790.9"/><use href="#gu" x="1136.5" y="872.8"/><use href="#rx" x="1105.3" y="713.6"/><use href="#rd" x="1912.7" y="833.9"/><use href="#gx" x="1114.9" y="758.9"/><use href="#gu" x="1275.9" y="820.9"/><use href="#gu" x="1098.8" y="754.2"/><use href="#rd" x="2196.2" y="760.7"/><use href="#rx" x="2260.5" y="753.4"/><use href="#gu" x="2278.2" y="764.9"/><use href="#rx" x="1239.2" y="801.5"/><use href="#gu" x="2594.2" y="725"/><use href="#gx" x="2504.7" y="710.7"/><use href="#rd" x="1279.6" y="783.4"/><use href="#gu" x="1269.6" y="809.6"/><use href="#rd" x="1425.5" y="805.5"/><use href="#gu" x="1753" y="875.1"/><use href="#rd" x="1932.2" y="853.1"/><use href="#gu" x="1859" y="878.4"/><use href="#gu" x="1507.3" y="796.5"/><use href="#rd" x="1444.5" y="784.6"/><use href="#rx" x="2176.7" y="742.1"/><use href="#gx" x="1122.4" y="813.2"/><use href="#gx" x="1150.1" y="866.9"/><use href="#rd" x="2408.4" y="715.3"/><use href="#rd" x="1900.7" y="853.5"/><use href="#rd" x="2508.5" y="704.9"/><use href="#gu" x="1501.3" y="801"/><use href="#gu" x="1418.9" y="825.8"/><use href="#rx" x="1715.7" y="839.3"/><use href="#gu" x="2155.1" y="782.7"/><use href="#gu" x="1296.1" y="848.1"/><use href="#gu" x="2555" y="718.3"/><use href="#rd" x="1269.9" y="790.2"/><use href="#gx" x="1742.6" y="883.8"/><use href="#rx" x="2328.8" y="714.1"/><use href="#gu" x="1938.6" y="863"/><use href="#rd" x="1160.1" y="872.7"/><use href="#gx" x="1638.2" y="860.5"/><use href="#gx" x="2091.4" y="816.1"/><use href="#gu" x="1835.2" y="897.2"/><use href="#gx" x="1177.9" y="919.6"/><use href="#rx" x="1175.5" y="905.1"/><use href="#gx" x="1910.5" y="865.1"/><use href="#gx" x="1911.5" y="868.6"/><use href="#rx" x="1910.9" y="843.8"/><use href="#rx" x="1432.4" y="792.7"/><use href="#rx" x="1670.5" y="874.2"/><use href="#rx" x="1969.3" y="811.4"/><use href="#rx" x="1125.3" y="778.9"/><use href="#rd" x="1068.4" y="674"/><use href="#rd" x="2217" y="752.5"/><use href="#gu" x="1427.5" y="823.2"/><use href="#rx" x="2272.1" y="742.4"/><use href="#rx" x="1490.8" y="804.4"/><use href="#rd" x="2174.7" y="759.6"/><use href="#rd" x="1302.3" y="784.7"/><use href="#rx" x="1300.7" y="783.2"/><use href="#gx" x="1595.1" y="828"/><use href="#gx" x="1090.8" y="797.7"/><use href="#rd" x="1660.8" y="884.6"/><use href="#rd" x="2488.3" y="733.6"/><use href="#rx" x="2604.3" y="695.8"/><use href="#gx" x="1293.9" y="861"/><use href="#gx" x="1767.8" y="853.4"/><use href="#gu" x="1681.6" y="878.5"/><use href="#rx" x="1517.9" y="779"/><use href="#gu" x="2142.8" y="805.7"/><use href="#rx" x="1231.2" y="838.6"/><use href="#gx" x="2106.6" y="821.4"/><use href="#gu" x="1221.8" y="878.5"/><use href="#rx" x="1979.1" y="810.5"/><use href="#rx" x="1608.2" y="804.6"/><use href="#gu" x="1746.6" y="871.5"/><use href="#gx" x="2301.7" y="757.4"/><use href="#gu" x="1089" y="797.5"/><use href="#rd" x="1666.5" y="865.5"/><use href="#gx" x="1689.4" y="862.4"/><use href="#gx" x="2528.6" y="704.4"/><use href="#rd" x="2126.4" y="779.2"/><use href="#gu" x="2507.5" y="711.9"/><use href="#rx" x="1509.4" y="767.4"/><use href="#gx" x="2298.1" y="752.7"/><use href="#rx" x="2159.6" y="771.9"/><use href="#gx" x="1240.7" y="846.4"/><use href="#rx" x="1449" y="782.6"/><use href="#gu" x="2193.8" y="778.4"/><use href="#rd" x="1622.6" y="780.3"/><use href="#rx" x="1316.5" y="809.9"/><use href="#rd" x="2335.6" y="734.5"/><use href="#gu" x="2489.5" y="737.2"/><use href="#gu" x="1366.3" y="842.8"/><use href="#gx" x="1602.7" y="823.3"/><use href="#gx" x="1593.8" y="835.9"/><use href="#rx" x="1540.5" y="786.5"/><use href="#gu" x="2538" y="698.6"/><use href="#gx" x="1837.5" y="891.6"/><use href="#gu" x="2150.1" y="783"/><use href="#rx" x="2213" y="765.9"/><use href="#rx" x="1940.7" y="837.9"/><use href="#gu" x="2548.8" y="687.5"/><use href="#rx" x="1530" y="778.7"/><use href="#rx" x="1214" y="862.8"/><use href="#rd" x="2456" y="762.5"/><use href="#rx" x="1892.4" y="835.9"/><use href="#gu" x="1147.8" y="892.8"/><use href="#rx" x="1827.3" y="880.4"/><use href="#rx" x="2364.5" y="746"/><use href="#gu" x="2609.3" y="697"/><use href="#gu" x="2550.6" y="706.1"/><use href="#gx" x="2233.8" y="797.4"/><use href="#rd" x="1178.1" y="895.7"/><use href="#gx" x="2346" y="747.6"/><use href="#rx" x="1168.2" y="898.9"/><use href="#gx" x="1829.6" y="934.2"/><use href="#rx" x="2073.1" y="792.6"/><use href="#rx" x="1908.4" y="850"/><use href="#gu" x="1290.4" y="845.8"/><use href="#rd" x="2579.3" y="677.7"/><use href="#gu" x="2021.2" y="809.8"/><use href="#gx" x="2239" y="786"/><use href="#rd" x="2406" y="749.9"/><use href="#rx" x="2598" y="648.5"/><use href="#gu" x="1811" y="879.3"/><use href="#gu" x="2016.1" y="815.5"/><use href="#gu" x="1941.8" y="858.9"/><use href="#rx" x="1222.4" y="835"/><use href="#rd" x="1599.7" y="815.6"/><use href="#gx" x="1928.8" y="881.6"/><use href="#rx" x="1617.9" y="810"/><use href="#rd" x="2511.1" y="677.9"/><use href="#rd" x="2306.3" y="697.6"/><use href="#rx" x="1933" y="860.6"/><use href="#gx" x="1213.3" y="868.5"/><use href="#rd" x="1942.7" y="839"/><use href="#gx" x="1117.7" y="787.7"/><use href="#rx" x="2303" y="715.3"/><use href="#gu" x="2328.4" y="752.9"/><use href="#gx" x="1111.4" y="768.6"/><use href="#rx" x="1285.6" y="781.3"/><use href="#gu" x="2520" y="709.5"/><use href="#rx" x="2192.8" y="763"/><use href="#gx" x="1531.8" y="813"/><use href="#rd" x="1854.2" y="853.7"/><use href="#rd" x="1153.6" y="854.1"/><use href="#gx" x="1217.4" y="873.4"/><use href="#gu" x="1280.1" y="811.9"/><use href="#gx" x="2355.9" y="768.8"/><use href="#rd" x="1292.8" y="794.8"/><use href="#rx" x="2255.6" y="756.1"/><use href="#rx" x="2617.4" y="628"/><use href="#gx" x="1061.8" y="720.9"/><use href="#gu" x="1129.5" y="852.8"/><use href="#gx" x="1688.4" y="866.7"/><use href="#gx" x="1136.2" y="862.6"/><use href="#rd" x="1914" y="853.7"/><use href="#rd" x="1774.8" y="831.8"/><use href="#rd" x="1289.4" y="790.1"/><use href="#rd" x="1919.2" y="813.8"/><use href="#rd" x="2418.4" y="767.8"/><use href="#rx" x="1933.6" y="857"/><use href="#rx" x="2327.9" y="724.9"/><use href="#rx" x="2325.5" y="728.8"/><use href="#rx" x="2077.9" y="776.8"/><use href="#gu" x="2020" y="827.1"/><use href="#gu" x="1068.8" y="710.3"/><use href="#gu" x="1531.9" y="808.8"/><use href="#rd" x="2573.3" y="684.4"/><use href="#rx" x="1518.7" y="768.2"/><use href="#gu" x="1578.3" y="814.9"/><use href="#rx" x="2259.7" y="753.8"/><use href="#rd" x="1193.2" y="865"/><use href="#rd" x="1120.6" y="740.3"/><use href="#rx" x="1938.3" y="852.7"/><use href="#gx" x="2180.7" y="768.2"/><use href="#rd" x="1513.6" y="765.3"/><use href="#rx" x="1680.4" y="857.7"/><use href="#rx" x="2081.1" y="787.4"/><use href="#rd" x="1248.2" y="814.7"/><use href="#rd" x="1896.8" y="843"/><use href="#rx" x="1119.7" y="743.3"/><use href="#gx" x="1642.6" y="865.3"/><use href="#gx" x="1208.1" y="883.9"/><use href="#gu" x="1201.6" y="903.8"/><use href="#gu" x="2532.9" y="700.1"/><use href="#gu" x="1070" y="693.3"/><use href="#gx" x="1259.5" y="824.6"/><use href="#gx" x="1445.3" y="812"/><use href="#rx" x="1734" y="838.9"/><use href="#rd" x="1181.8" y="907.3"/><use href="#gu" x="1915.4" y="892.4"/><use href="#gu" x="2245.2" y="776.1"/><use href="#rx" x="1057" y="685.2"/><use href="#rd" x="2165.2" y="772.1"/><use href="#gu" x="2532" y="705"/><use href="#gx" x="1690.3" y="882.7"/><use href="#gx" x="1081.7" y="740.9"/><use href="#gu" x="2004.4" y="821.8"/><use href="#gu" x="1070.8" y="698.1"/><use href="#gu" x="1273.5" y="837.8"/><use href="#rd" x="1370" y="805.3"/><use href="#gx" x="2608.6" y="713.8"/><use href="#rx" x="1088.7" y="745.6"/><use href="#gu" x="1708.7" y="896.1"/><use href="#gu" x="1830.3" y="944.1"/><use href="#rx" x="1819.4" y="874.5"/><use href="#gu" x="1127.6" y="852.6"/><use href="#rd" x="1217.3" y="842.4"/><use href="#rd" x="2545.3" y="662.4"/><use href="#rd" x="2599.8" y="683.2"/><use href="#rd" x="1140.8" y="849.4"/><use href="#rx" x="1196.5" y="857"/><use href="#gu" x="2392.5" y="758"/><use href="#gu" x="2565.1" y="690.9"/><use href="#gu" x="2473" y="790.1"/><use href="#gx" x="2565.5" y="726.6"/><use href="#gu" x="2336.6" y="772.8"/><use href="#rx" x="1064.8" y="658.2"/><use href="#rd" x="1936.9" y="856.6"/><use href="#gu" x="1207.4" y="892.2"/><use href="#gu" x="1071.3" y="724.7"/><use href="#rx" x="2217.2" y="760.8"/><use href="#gx" x="1754.2" y="863.6"/><use href="#gx" x="1069.5" y="722.4"/><use href="#gx" x="1669.9" y="889.2"/><use href="#gu" x="1306.8" y="804.5"/><use href="#gx" x="2481" y="781.8"/><use href="#gu" x="2562.2" y="719.9"/><use href="#gx" x="1254.6" y="825.3"/><use href="#rx" x="1126.9" y="809.9"/><use href="#gx" x="1075.9" y="718.7"/><use href="#gu" x="2247.2" y="778.8"/><use href="#gx" x="1971.9" y="833.9"/><use href="#gu" x="1577.5" y="809.5"/><use href="#gu" x="2156.4" y="783.4"/><use href="#rd" x="1298.5" y="788.3"/><use href="#gx" x="1146.6" y="859.7"/><use href="#rx" x="1678.2" y="871.4"/><use href="#rx" x="1109.5" y="738.4"/><use href="#rd" x="2305.2" y="729.3"/><use href="#gx" x="1289.8" y="835.6"/><use href="#gu" x="1330.9" y="810.8"/><use href="#gu" x="1072" y="725.2"/><use href="#gu" x="1835.4" y="919.5"/><use href="#gu" x="2537.1" y="686.2"/><use href="#rd" x="2606.1" y="677.9"/><use href="#gx" x="1701.4" y="915.9"/><use href="#gx" x="1876.1" y="891"/><use href="#gx" x="2215.9" y="792.3"/><use href="#gx" x="1704.1" y="909.8"/><use href="#gx" x="2529" y="693.9"/><use href="#rx" x="1234.9" y="826"/><use href="#gx" x="1823.4" y="910.5"/><use href="#rx" x="1667.7" y="883.6"/><use href="#gx" x="2252.5" y="767"/><use href="#rx" x="2501.8" y="707.7"/><use href="#gx" x="1478.9" y="807.3"/><use href="#gx" x="2541.2" y="675.6"/><use href="#rd" x="1179" y="903"/><use href="#rd" x="1860.2" y="867.2"/><use href="#gu" x="1182.2" y="921.9"/><use href="#rd" x="2073.2" y="774.6"/><use href="#gu" x="1309" y="827.4"/><use href="#rd" x="1750.2" y="819.5"/><use href="#rx" x="1058.1" y="675.3"/><use href="#gx" x="2017" y="825.1"/><use href="#rx" x="2360" y="735.9"/><use href="#rx" x="1755" y="819.2"/><use href="#gx" x="2537.4" y="694.8"/><use href="#rd" x="1091.6" y="742.3"/><use href="#rd" x="2603.2" y="693.5"/><use href="#gx" x="1778" y="856.8"/><use href="#gu" x="2498.1" y="736.6"/><use href="#gx" x="2559.9" y="729.8"/><use href="#gx" x="1232.3" y="860.7"/><use href="#gu" x="1863.3" y="880.3"/><use href="#gu" x="2392" y="756.4"/><use href="#gu" x="2224.8" y="772.9"/><use href="#gx" x="2285.4" y="791"/><use href="#gx" x="2499.7" y="735.4"/><use href="#gx" x="1269.5" y="811.2"/><use href="#rd" x="1269.8" y="781.4"/><use href="#gu" x="1583.8" y="829.1"/><use href="#rx" x="2528.9" y="658.5"/><use href="#rx" x="2262.3" y="741.7"/><use href="#rx" x="2064.1" y="804.3"/><use href="#rd" x="1930.9" y="850"/><use href="#gx" x="1507.6" y="793.6"/><use href="#gx" x="1501.4" y="810.1"/><use href="#rd" x="2044.1" y="814.3"/><use href="#gx" x="1226.7" y="866.6"/><use href="#gu" x="1792.7" y="864.5"/><use href="#gx" x="2424.9" y="787"/><use href="#gu" x="1061.2" y="703.1"/><use href="#gx" x="1204.2" y="909.9"/><use href="#gx" x="1746.2" y="871.1"/><use href="#gx" x="1914.9" y="889.4"/><use href="#gu" x="1528.7" y="817.9"/><use href="#rx" x="1858.5" y="860"/><use href="#gx" x="2333.8" y="768.4"/><use href="#rx" x="1193.7" y="885"/><use href="#rx" x="1597.2" y="810.6"/><use href="#rd" x="1882.2" y="822.2"/><use href="#gx" x="1291.2" y="822.2"/><use href="#gx" x="2375.2" y="784.2"/><use href="#gx" x="1263.2" y="809"/><use href="#gx" x="1220.2" y="870.8"/><use href="#rd" x="2565.6" y="668"/><use href="#gu" x="2190.1" y="773.5"/><use href="#gx" x="1158.6" y="901.7"/><use href="#gx" x="1104" y="756.8"/><use href="#gu" x="1323.9" y="810"/><use href="#rd" x="2533.5" y="636.2"/><use href="#gx" x="2166.9" y="782.5"/><use href="#gx" x="1351.8" y="868.2"/><use href="#gx" x="1096.8" y="776.5"/><use href="#rx" x="2414.7" y="713"/><use href="#gx" x="2513.7" y="712.1"/><use href="#gx" x="1733.2" y="887.2"/><use href="#rd" x="1132.5" y="839.3"/><use href="#rx" x="1677.9" y="844.8"/><use href="#gx" x="1090.1" y="812.4"/><use href="#gu" x="1622.3" y="830.8"/><use href="#rd" x="2498.9" y="684.4"/><use href="#rd" x="1942.7" y="839.8"/><use href="#rx" x="1655.6" y="841.1"/><use href="#rx" x="1081.1" y="699"/><use href="#gx" x="1127.4" y="865.7"/><use href="#rx" x="1223.9" y="818"/><use href="#rd" x="1614.9" y="805.9"/><use href="#gu" x="1910.4" y="864.1"/><use href="#gx" x="1149.9" y="927.5"/><use href="#rx" x="1605.6" y="816"/><use href="#gx" x="1939.4" y="860.8"/><use href="#gu" x="1267.3" y="817"/><use href="#rx" x="1502.1" y="788.2"/><use href="#gu" x="2328.3" y="733.1"/><use href="#rd" x="1678.9" y="861.4"/><use href="#rx" x="2538.2" y="669.2"/><use href="#gu" x="1146.6" y="859.7"/><use href="#rd" x="2614.7" y="625.6"/><use href="#gu" x="1323.9" y="820.1"/><use href="#rx" x="2163.8" y="772.1"/><use href="#rx" x="2556.1" y="678.7"/><use href="#gx" x="2504.9" y="745.2"/><use href="#gu" x="1096" y="764.9"/><use href="#rd" x="1216.6" y="845.2"/><use href="#rd" x="1671.3" y="877.1"/><use href="#rd" x="1069.8" y="683"/><use href="#gx" x="1283.3" y="819.6"/><use href="#gu" x="1699" y="884.2"/><use href="#rd" x="2241.6" y="759.3"/><use href="#gu" x="1361.1" y="839.3"/><use href="#rx" x="1379.9" y="808.6"/><use href="#gu" x="1679.1" y="887.1"/><use href="#rx" x="1781.2" y="809.7"/><use href="#rd" x="1626.8" y="819.7"/><use href="#gu" x="2435.6" y="791.6"/><use href="#rd" x="1260" y="794.5"/><use href="#rx" x="1239" y="801.6"/><use href="#rd" x="1278.3" y="798.5"/><use href="#gu" x="1147.5" y="860.5"/><use href="#gu" x="1885.9" y="861.8"/><use href="#gu" x="1321.6" y="821.3"/><use href="#rd" x="2604" y="682"/><use href="#gx" x="1828.3" y="917.1"/><use href="#gx" x="2034.9" y="838.3"/><use href="#gu" x="1917.7" y="910.1"/><use href="#gx" x="1205.7" y="896.2"/><use href="#rd" x="2217.3" y="740.9"/><use href="#rx" x="1243.3" y="819"/><use href="#gx" x="1119.6" y="793.9"/><use href="#gx" x="2420.6" y="798.2"/><use href="#rd" x="2540.2" y="647.1"/><use href="#gx" x="1859" y="886.6"/><use href="#rx" x="1058.9" y="679.3"/><use href="#rd" x="1617.9" y="812.7"/><use href="#gu" x="2552.9" y="682.1"/><use href="#rx" x="1262.4" y="788.6"/><use href="#rd" x="1277.9" y="794.1"/><use href="#gu" x="1494.6" y="807.9"/><use href="#rx" x="1678.4" y="867"/><use href="#gu" x="2607.7" y="695.4"/><use href="#rx" x="1899.3" y="857.7"/><use href="#rd" x="1275.7" y="795.5"/><use href="#gu" x="1292.8" y="850.2"/><use href="#rd" x="1446.7" y="799"/><use href="#gx" x="2020.2" y="813.2"/><use href="#gu" x="2372.6" y="800.2"/><use href="#gu" x="1958.8" y="830.8"/><use href="#gu" x="2579.6" y="711.9"/><use href="#gu" x="1343.7" y="806.3"/><use href="#gx" x="2469.2" y="790.8"/><use href="#gx" x="2190.1" y="773.8"/><use href="#rx" x="1284.9" y="789.5"/><use href="#rd" x="1616" y="814.6"/><use href="#gx" x="1865.1" y="899.4"/><use href="#gu" x="2015.8" y="824.7"/><use href="#gu" x="2210.9" y="782.1"/><use href="#rd" x="1176.2" y="899.9"/><use href="#rx" x="1825.5" y="857.8"/><use href="#gx" x="1213.1" y="880.3"/><use href="#gx" x="2066" y="819.9"/><use href="#rx" x="1907.5" y="844.1"/><use href="#rx" x="2003.2" y="814.3"/><use href="#rd" x="1326.9" y="783.2"/><use href="#rx" x="1313" y="744"/><use href="#gu" x="1238" y="849.1"/><use href="#gu" x="1111.5" y="775"/><use href="#rx" x="1705.5" y="846.7"/><use href="#rd" x="2297.2" y="731.9"/><use href="#rd" x="2006.7" y="811.5"/><use href="#rd" x="1692.1" y="842.5"/><use href="#gu" x="1543.9" y="818"/><use href="#rd" x="1066.9" y="685.1"/><use href="#gu" x="2226.9" y="782.3"/><use href="#gu" x="1514.2" y="795.6"/><use href="#rd" x="1077.1" y="701.9"/><use href="#rx" x="1251.7" y="810.2"/><use href="#gx" x="1531" y="823.9"/><use href="#gx" x="2518" y="699.6"/><use href="#gu" x="1821.2" y="893.8"/><use href="#rx" x="2561.6" y="672.9"/><use href="#gx" x="1368.8" y="868.1"/><use href="#rx" x="1484.2" y="784.1"/><use href="#rd" x="1880.4" y="824.3"/><use href="#rx" x="1065.7" y="672.2"/><use href="#rd" x="2079.9" y="802.5"/><use href="#rd" x="1254.7" y="806.8"/><use href="#gu" x="1335.9" y="797.4"/><use href="#gu" x="1213.6" y="873.6"/><use href="#rd" x="1971.1" y="802.2"/><use href="#gx" x="1945.2" y="874.5"/><use href="#rx" x="1746.9" y="826.8"/><use href="#rx" x="2477.5" y="768.2"/><use href="#rx" x="1265.5" y="785.4"/><use href="#gu" x="1939.2" y="871.9"/><use href="#gu" x="1600.3" y="828.1"/><use href="#gu" x="1111.1" y="770.3"/><use href="#gx" x="1397.8" y="839.1"/><use href="#gu" x="1108.7" y="769.5"/><use href="#gx" x="1944.5" y="868.3"/><use href="#rx" x="2152.6" y="779.6"/><use href="#gu" x="1632.2" y="842.6"/><use href="#gu" x="2026.5" y="826.1"/><use href="#rd" x="1099.1" y="719.2"/><use href="#gx" x="1320.9" y="814"/><use href="#rx" x="1913.1" y="834.6"/><use href="#gu" x="2062" y="828.4"/><use href="#gx" x="1864.6" y="880.3"/><use href="#rd" x="1454.4" y="792.3"/><use href="#rd" x="1301.9" y="785.5"/><use href="#gx" x="1666.3" y="904.4"/><use href="#gx" x="1213.6" y="867.8"/><use href="#rx" x="1230.5" y="839.2"/><use href="#rx" x="1245.2" y="798.4"/><use href="#gu" x="1276.2" y="805.2"/><use href="#gx" x="2102.4" y="830.8"/><use href="#rx" x="1200.5" y="876.8"/><use href="#rd" x="1253.8" y="797.9"/><use href="#rd" x="1291.3" y="798.7"/><use href="#rx" x="1305.3" y="769.5"/><use href="#rx" x="1484.2" y="782.6"/><use href="#rd" x="2236.4" y="758.2"/><use href="#rx" x="1334" y="787.6"/><use href="#rd" x="2162.7" y="772.7"/><use href="#gu" x="1507.3" y="795.4"/><use href="#rx" x="1195.3" y="886.8"/><use href="#rx" x="1940.5" y="835.3"/><use href="#gu" x="1492" y="816.4"/><use href="#gx" x="1062.1" y="712.2"/><use href="#rd" x="1486.7" y="783"/><use href="#gu" x="1686.2" y="866.2"/><use href="#rx" x="1813.8" y="872.5"/><use href="#rd" x="2033.3" y="799.2"/><use href="#rd" x="1237.7" y="832.2"/><use href="#rd" x="1234.7" y="829.7"/><use href="#rd" x="1057" y="671.3"/><use href="#gu" x="1579.2" y="805.8"/><use href="#rx" x="1102" y="723.5"/><use href="#rd" x="2605.7" y="691.7"/><use href="#gx" x="2539.1" y="670.9"/><use href="#rd" x="1343.8" y="802.8"/><use href="#rx" x="1929.6" y="841.4"/><use href="#rd" x="1612" y="802.4"/><use href="#gu" x="1679.9" y="874.7"/><use href="#rd" x="1281.4" y="806.7"/><use href="#rx" x="1219.3" y="837.5"/><use href="#gx" x="2104.5" y="822.2"/><use href="#gu" x="1323.3" y="823.5"/><use href="#gu" x="2022.2" y="812.2"/><use href="#gu" x="2108.3" y="822.1"/><use href="#gu" x="2438" y="785"/><use href="#gu" x="1282.4" y="817.5"/><use href="#gx" x="1338.5" y="796.2"/><use href="#rd" x="1927.7" y="855.5"/><use href="#rd" x="1904.7" y="854.2"/><use href="#gx" x="1866.4" y="896"/><use href="#rx" x="1258.3" y="800.2"/><use href="#rx" x="2247" y="757.1"/><use href="#rd" x="2326.2" y="720.4"/><use href="#gx" x="2540.6" y="672"/><use href="#rd" x="2213.9" y="760.5"/><use href="#gu" x="1975.4" y="833.4"/><use href="#rd" x="2305.6" y="726.8"/><use href="#rx" x="2037.2" y="808.6"/><use href="#gu" x="1253.7" y="824.9"/><use href="#rd" x="1064.6" y="686.6"/><use href="#rd" x="1646.3" y="847.1"/><use href="#gx" x="1705.5" y="914"/><use href="#gu" x="1420.8" y="814.6"/><use href="#gu" x="1839.1" y="933.5"/><use href="#rd" x="1185.5" y="898.9"/><use href="#gx" x="1709.4" y="898.6"/><use href="#gu" x="2480.3" y="776.4"/><use href="#gx" x="1847.9" y="897.3"/><use href="#gx" x="1303.4" y="819.8"/><use href="#rd" x="2178.8" y="756.7"/><use href="#rx" x="2154.2" y="778.1"/><use href="#rx" x="2512.1" y="689.9"/><use href="#rx" x="2466.3" y="754"/><use href="#gu" x="1282.7" y="829.2"/><use href="#gx" x="2337.9" y="744.7"/><use href="#rd" x="1280.2" y="806.4"/><use href="#gu" x="1268.8" y="834.6"/><use href="#rx" x="2429.7" y="755.1"/><use href="#gx" x="2448.9" y="779.9"/><use href="#gu" x="2032" y="828.7"/><use href="#gu" x="1434.8" y="808.1"/><use href="#rx" x="1885.1" y="840.9"/><use href="#gx" x="1794.4" y="857.3"/><use href="#gx" x="1327.1" y="827.9"/><use href="#rd" x="1192.1" y="889.7"/><use href="#rd" x="1890.8" y="840.4"/><use href="#rx" x="2509.4" y="706.4"/><use href="#gx" x="1330.8" y="807.4"/><use href="#rd" x="1487.1" y="783.9"/><use href="#rx" x="2504.6" y="675.2"/><use href="#rx" x="2491.2" y="726.7"/><use href="#gx" x="1499.1" y="821.9"/><use href="#rd" x="1123.5" y="771.9"/><use href="#rd" x="1263.2" y="784.7"/><use href="#rx" x="1275.9" y="795.7"/><use href="#rd" x="1262" y="804.4"/><use href="#rx" x="1435.8" y="802.6"/><use href="#gu" x="2497" y="717.8"/><use href="#gu" x="1841.1" y="924.5"/><use href="#gu" x="2553.5" y="707.9"/><use href="#rx" x="2241.8" y="757.6"/><use href="#gx" x="1290.2" y="854.7"/><use href="#gu" x="1694.8" y="883.8"/><use href="#rd" x="2596.3" y="666.1"/><use href="#rd" x="2565.4" y="684.9"/><use href="#gu" x="1153.9" y="895.3"/><use href="#rx" x="2011.5" y="791.8"/><use href="#gx" x="1636.1" y="861.1"/><use href="#gu" x="2489.5" y="736"/><use href="#rd" x="2488.2" y="714.6"/><use href="#gu" x="1057" y="719.6"/><use href="#rd" x="1419.6" y="797.2"/><use href="#gx" x="2077.9" y="808.4"/><use href="#rx" x="1216.1" y="856.8"/><use href="#gu" x="2387.5" y="768"/><use href="#rx" x="2602.4" y="689.7"/><use href="#gu" x="2022.6" y="808.3"/><use href="#gx" x="1219.6" y="893"/><use href="#gx" x="1766.7" y="865.9"/><use href="#gx" x="2238.7" y="759.7"/><use href="#gu" x="2104" y="825.7"/><use href="#gx" x="1133.4" y="886.7"/><use href="#rd" x="1781.8" y="813.1"/><use href="#gx" x="2524.5" y="704.7"/><use href="#gx" x="1163.8" y="904.6"/><use href="#gx" x="2496.4" y="736.2"/><use href="#gx" x="2522.1" y="698.1"/><use href="#rx" x="1454.4" y="798.3"/><use href="#gu" x="2412.5" y="766.6"/><use href="#gx" x="1731.7" y="893.7"/><use href="#gu" x="1243" y="832.5"/><use href="#gu" x="1676.4" y="883.2"/><use href="#rd" x="1259.5" y="755.4"/><use href="#gu" x="1310" y="813.7"/><use href="#gu" x="1190" y="910.6"/><use href="#gu" x="1086.1" y="758.6"/><use href="#rx" x="2550.7" y="653.7"/><use href="#rx" x="2286" y="753"/><use href="#rx" x="1962.4" y="824.5"/><use href="#rx" x="1489.1" y="782.7"/><use href="#gu" x="2455.1" y="811"/><use href="#rd" x="1234.8" y="824.6"/><use href="#rx" x="2406.4" y="742.4"/><use href="#rd" x="1283.9" y="781.1"/><use href="#rx" x="1069.9" y="686.7"/><use href="#rx" x="2512.5" y="678"/><use href="#gu" x="1594.9" y="823.1"/><use href="#gx" x="2162.7" y="792.9"/><use href="#rx" x="2570.7" y="679.5"/><use href="#gx" x="2405.1" y="787.8"/><use href="#rx" x="1215.8" y="846.5"/><use href="#gx" x="2405.5" y="759.3"/><use href="#rx" x="1926" y="847.3"/><use href="#gx" x="1058.2" y="725.1"/><use href="#rx" x="2221.9" y="748.4"/><use href="#gx" x="2539.4" y="677.1"/><use href="#rx" x="1284.6" y="807.4"/><use href="#rd" x="2147.8" y="784.7"/><use href="#gu" x="1129.7" y="843.9"/><use href="#gu" x="1264.7" y="812.7"/><use href="#gu" x="1066.3" y="697"/><use href="#rd" x="1088.6" y="686.1"/><use href="#gx" x="1077.8" y="734.5"/><use href="#gx" x="2510.5" y="722.6"/><use href="#gu" x="2533.4" y="703.8"/><use href="#gx" x="2554" y="712.7"/><use href="#gx" x="1206" y="894.3"/><use href="#rd" x="1453.4" y="791.8"/><use href="#rd" x="1854.2" y="861.7"/><use href="#rd" x="1280" y="749.7"/><use href="#gx" x="1644.6" y="890"/><use href="#gx" x="2276.6" y="760.8"/><use href="#gx" x="2541.2" y="674"/><use href="#gx" x="2430.5" y="786.4"/><use href="#gu" x="1326.1" y="819.7"/><use href="#rd" x="1412.8" y="799.1"/><use href="#gu" x="1577.5" y="808.8"/><use href="#gx" x="2408.4" y="786.2"/><use href="#gx" x="2287.1" y="759.6"/><use href="#rd" x="2575.5" y="678.2"/><use href="#gx" x="2231.5" y="764.1"/><use href="#rd" x="2477.9" y="764.1"/><use href="#gx" x="1213.2" y="897.5"/><use href="#rd" x="2313.3" y="727.9"/><use href="#rx" x="1142" y="831.7"/><use href="#rd" x="1484.7" y="797.1"/><use href="#gu" x="1174" y="911.5"/><use href="#rd" x="2348.8" y="748.2"/><use href="#rd" x="1201.3" y="853.2"/><use href="#rd" x="2275.5" y="752.6"/><use href="#gx" x="1921.9" y="889.3"/><use href="#gx" x="1863.3" y="886.3"/><use href="#rd" x="2345.3" y="743.1"/><use href="#gu" x="1638" y="894.1"/><use href="#rd" x="1539.9" y="786.1"/><use href="#gu" x="1754.5" y="855"/><use href="#rd" x="2485.3" y="732.7"/><use href="#gu" x="1057.9" y="721.9"/><use href="#rd" x="1601.9" y="809.9"/><use href="#rx" x="1127.6" y="817.2"/><use href="#gu" x="1132.8" y="869.6"/><use href="#gx" x="1276" y="818.1"/><use href="#rd" x="1787.2" y="838.9"/><use href="#rx" x="2406.2" y="750.1"/><use href="#rx" x="1225.6" y="846.2"/><use href="#gu" x="2276.9" y="759"/><use href="#gx" x="2365.1" y="767.2"/><use href="#gu" x="1100.1" y="748"/><use href="#rd" x="1432" y="803.9"/><use href="#rd" x="1817.7" y="866.3"/><use href="#gx" x="1303.8" y="798.9"/><use href="#rd" x="2308.8" y="708.3"/><use href="#rx" x="1520.2" y="757.6"/><use href="#rd" x="2521.4" y="685.2"/><use href="#rd" x="1793.3" y="831.4"/><use href="#rd" x="1544.6" y="775.8"/><use href="#gu" x="1492" y="829.3"/><use href="#gu" x="2216.7" y="785.9"/><use href="#rd" x="1183.7" y="919.7"/><use href="#gu" x="2056.7" y="833.3"/><use href="#rx" x="2590.9" y="662.4"/><use href="#gx" x="1427.9" y="813.6"/><use href="#gu" x="2089.6" y="815.7"/><use href="#gx" x="2286" y="762.3"/><use href="#rx" x="1514.2" y="784.7"/><use href="#gx" x="1944" y="860.9"/><use href="#gu" x="1852.6" y="877.9"/><use href="#rx" x="1379" y="809.8"/><use href="#gx" x="2048.9" y="832.7"/><use href="#gx" x="1227.6" y="857.9"/><use href="#gx" x="2477.3" y="793.7"/><use href="#gx" x="1243.1" y="859.3"/><use href="#gx" x="2491.4" y="745.8"/><use href="#rd" x="2578.6" y="667.5"/><use href="#rx" x="1663" y="869.5"/><use href="#rx" x="2405.6" y="741.7"/><use href="#gx" x="1267.3" y="814.6"/><use href="#gx" x="1077.5" y="720.3"/><use href="#gx" x="2585.4" y="717.8"/><use href="#rx" x="1164.7" y="886.2"/><use href="#rd" x="1095.9" y="729.4"/><use href="#rx" x="1627.1" y="782.9"/><use href="#gu" x="1213" y="876.9"/><use href="#gu" x="2054" y="822"/><use href="#gx" x="1489.9" y="807.6"/><use href="#gx" x="1344.5" y="859.5"/><use href="#gx" x="1537.6" y="819.8"/><use href="#rd" x="2507.1" y="704.5"/><use href="#rx" x="1730" y="868.3"/><use href="#gu" x="1542.6" y="821.3"/><use href="#rx" x="1626.6" y="824.3"/><use href="#rx" x="2341.8" y="712.2"/><use href="#rd" x="2329.1" y="720"/><use href="#rd" x="1297.6" y="800.3"/><use href="#rd" x="1937.9" y="851.2"/><use href="#gx" x="1162.2" y="906.7"/><use href="#gx" x="1066" y="702.4"/><use href="#gx" x="1204.1" y="889.5"/><use href="#gx" x="1592" y="821.4"/><use href="#rx" x="1670.7" y="858.3"/><use href="#gu" x="1176.9" y="970.4"/><use href="#gx" x="1268.2" y="812.7"/><use href="#gx" x="1818.3" y="890.5"/><use href="#rx" x="1338.7" y="794"/><use href="#gu" x="2350.8" y="755.1"/><use href="#rd" x="1208.4" y="874.3"/><use href="#gu" x="2610.5" y="693.5"/><use href="#rx" x="1257.6" y="812.6"/><use href="#gx" x="1868.4" y="885.6"/><use href="#gx" x="1465.3" y="836.6"/><use href="#gu" x="2082.6" y="806.8"/><use href="#rd" x="2193.2" y="756.5"/><use href="#rd" x="1479.3" y="803.4"/><use href="#rd" x="1974" y="799.7"/><use href="#gx" x="1563.6" y="792"/><use href="#rx" x="1595.1" y="800.9"/><use href="#rd" x="2183.2" y="761.5"/><use href="#gu" x="1095.6" y="788.1"/><use href="#gu" x="1144.2" y="857.7"/><use href="#gx" x="1293.4" y="828.9"/><use href="#gu" x="1270" y="801.4"/><use href="#gx" x="1280.8" y="833.2"/><use href="#gx" x="1212.6" y="890.2"/><use href="#rd" x="1528.1" y="766.6"/><use href="#gu" x="2478.2" y="780.5"/><use href="#rx" x="1856.7" y="839.8"/><use href="#gu" x="2169.3" y="777"/><use href="#gx" x="2360.8" y="765.5"/><use href="#rd" x="1668.8" y="870.8"/><use href="#rx" x="2614.1" y="674"/><use href="#rd" x="1470.9" y="798.6"/><use href="#rx" x="2596.4" y="688.3"/><use href="#rx" x="2320.9" y="716.4"/><use href="#gu" x="1745.6" y="888.2"/><use href="#gx" x="1335" y="796.8"/><use href="#rx" x="1668.2" y="877.4"/><use href="#rx" x="1066.3" y="682"/><use href="#gx" x="1534.1" y="817.8"/><use href="#gx" x="2604.6" y="704.7"/><use href="#rd" x="2359.8" y="740.9"/><use href="#gu" x="2009.2" y="816.5"/><use href="#gu" x="1125.7" y="851.7"/><use href="#rx" x="2599.8" y="657.5"/><use href="#rd" x="1247.4" y="800.9"/><use href="#gx" x="2381.8" y="773.3"/><use href="#gx" x="2506.9" y="721.1"/><use href="#rd" x="2469.3" y="749.1"/><use href="#rx" x="2168.8" y="752.4"/><use href="#rd" x="1401" y="823.5"/><use href="#gx" x="1384.2" y="848.4"/><use href="#gx" x="1824.7" y="916.6"/><use href="#rd" x="1851.5" y="857.2"/><use href="#rx" x="1352" y="815.4"/><use href="#gu" x="2522.1" y="687.3"/><use href="#gx" x="1903" y="857.4"/><use href="#gx" x="1102.8" y="745"/><use href="#gu" x="2028.3" y="820.1"/><use href="#gu" x="1703.2" y="918.3"/><use href="#gu" x="1969.1" y="834.4"/><use href="#rd" x="1907.6" y="843.5"/><use href="#rd" x="1443.3" y="777.8"/><use href="#gu" x="2218.6" y="788.8"/><use href="#gu" x="1340.7" y="805.4"/><use href="#rx" x="2549.9" y="669.6"/><use href="#gu" x="1582.1" y="816.9"/><use href="#gu" x="2170.6" y="769.2"/><use href="#gu" x="1529.4" y="822.8"/><use href="#rx" x="1169.2" y="891.8"/><use href="#rd" x="1057" y="681.5"/><use href="#gu" x="2433.9" y="791.7"/><use href="#rx" x="1286" y="807.7"/><use href="#rd" x="1522.6" y="775.4"/><use href="#gu" x="1504.5" y="790"/><use href="#rx" x="1726.5" y="876.9"/><use href="#gu" x="1228" y="861.3"/><use href="#gx" x="1661.4" y="900.7"/><use href="#rd" x="1742.6" y="815.6"/><use href="#rx" x="1854.7" y="861.2"/><use href="#gx" x="2289.3" y="787.7"/><use href="#rx" x="1110.1" y="698.4"/><use href="#rx" x="1173.1" y="882.7"/><use href="#rd" x="1261.6" y="807.1"/><use href="#rx" x="2491" y="708.7"/><use href="#gx" x="1837.4" y="903.9"/><use href="#gx" x="1726.4" y="906.4"/><use href="#rd" x="1863.6" y="858.1"/><use href="#gu" x="1348.9" y="815.5"/><use href="#rx" x="1322.7" y="783.1"/><use href="#rx" x="1518.7" y="770.3"/><use href="#gu" x="2487.7" y="793.8"/><use href="#rd" x="1456.5" y="788.2"/><use href="#rx" x="2551.6" y="652.6"/><use href="#rx" x="1295.6" y="766.6"/><use href="#rx" x="1858.3" y="867.2"/><use href="#gx" x="1069.3" y="699.1"/><use href="#rx" x="1382.1" y="829.4"/><use href="#rx" x="1903.8" y="841.3"/><use href="#gx" x="2564.8" y="689.8"/><use href="#rd" x="1737.9" y="818.4"/><use href="#rx" x="1222.2" y="844"/><use href="#gu" x="1594.4" y="832.2"/><use href="#gu" x="1584.1" y="827.9"/><use href="#gu" x="2509.1" y="739.3"/><use href="#rd" x="1065.8" y="675.2"/><use href="#gx" x="2521.3" y="704.5"/><use href="#gx" x="2533.1" y="717.4"/><use href="#gx" x="2570.7" y="697.2"/><use href="#gx" x="2444.1" y="813.6"/><use href="#rd" x="1256.8" y="794.7"/><use href="#gu" x="2436.3" y="792.8"/><use href="#gu" x="2424.8" y="785.8"/><use href="#gu" x="1141" y="862"/><use href="#gu" x="1475.2" y="836.6"/><use href="#gu" x="1236.4" y="859.1"/><use href="#gu" x="2143.9" y="791.9"/><use href="#gu" x="1206.2" y="906.3"/><use href="#rd" x="2310.1" y="701.8"/><use href="#rd" x="1225.5" y="818.6"/><use href="#gx" x="2576.3" y="710.3"/><use href="#rd" x="1147.4" y="850.4"/><use href="#rx" x="1211.2" y="865.2"/><use href="#rx" x="1402.1" y="826"/><use href="#gx" x="1523.9" y="804.8"/><use href="#gu" x="2430.4" y="791.4"/><use href="#rx" x="2568.7" y="663.9"/><use href="#gu" x="2509.9" y="717.1"/><use href="#gx" x="1326.1" y="810"/><use href="#rd" x="2499.6" y="706.4"/><use href="#rx" x="2549.8" y="661.3"/><use href="#rd" x="2550" y="663.7"/><use href="#gx" x="2065.8" y="809.8"/><use href="#gu" x="2529.7" y="701"/><use href="#gx" x="1547.7" y="802.9"/><use href="#gu" x="1117.6" y="807.2"/><use href="#gx" x="1643.9" y="892.2"/><use href="#gu" x="2204.8" y="803.1"/><use href="#rx" x="1229.3" y="850.5"/><use href="#gu" x="2376.5" y="782.4"/><use href="#rd" x="2403.6" y="722.5"/><use href="#gx" x="1121.2" y="776.2"/><use href="#gx" x="1602.1" y="832"/><use href="#rx" x="1268.2" y="801.4"/><use href="#rd" x="1057" y="663.6"/><use href="#gu" x="2543.9" y="698"/><use href="#gx" x="2017.5" y="813"/><use href="#gu" x="2015.7" y="817.9"/><use href="#rx" x="1674.7" y="851.7"/><use href="#rd" x="1198.5" y="880.9"/><use href="#rx" x="1263" y="802.2"/><use href="#gx" x="2352.7" y="769.3"/><use href="#rd" x="1730.9" y="871.3"/><use href="#rx" x="1067.3" y="684.9"/><use href="#rx" x="1934.8" y="845.6"/><use href="#gu" x="1217.5" y="876.7"/><use href="#rd" x="1154.9" y="834.8"/><use href="#gx" x="2208.4" y="795.7"/><use href="#gx" x="1642.4" y="893.8"/><use href="#rd" x="2599.6" y="682.7"/><use href="#gu" x="2517.2" y="699.9"/><use href="#gu" x="1854.1" y="872.1"/><use href="#gu" x="1136.4" y="859.3"/><use href="#rd" x="1060.1" y="679.6"/><use href="#gx" x="1263.1" y="833"/><use href="#rx" x="1834.6" y="862.7"/><use href="#rx" x="2386.1" y="756.1"/><use href="#rd" x="1181.8" y="898.6"/><use href="#rx" x="2303.2" y="722.1"/><use href="#rx" x="1255.8" y="762.6"/><use href="#gu" x="1536.1" y="834.2"/><use href="#rx" x="1057" y="672.7"/><use href="#rx" x="1128.7" y="800.1"/><use href="#gu" x="2509.4" y="721.1"/><use href="#gx" x="1198.2" y="923.2"/><use href="#rd" x="2253.3" y="752.6"/><use href="#gx" x="1211.7" y="871.8"/><use href="#rx" x="2554.6" y="654.7"/><use href="#rd" x="1542.8" y="778.4"/><use href="#gu" x="2451" y="797"/><use href="#gu" x="1230.8" y="853.5"/><use href="#gx" x="2366" y="769"/><use href="#gu" x="1132.5" y="879.5"/><use href="#gu" x="2408.4" y="761.6"/><use href="#gx" x="1746.9" y="869.8"/><use href="#rd" x="1542.5" y="799.4"/><use href="#rx" x="1754.7" y="817.9"/><use href="#rx" x="1896.9" y="837.6"/><use href="#rd" x="1882.1" y="826.4"/><use href="#gx" x="2247.7" y="774.1"/><use href="#gu" x="2086.1" y="838.1"/><use href="#gu" x="2477.7" y="795.4"/><use href="#gu" x="1062.3" y="726.4"/><use href="#rd" x="2557.7" y="685.9"/><use href="#rd" x="1837.1" y="884.8"/><use href="#rx" x="2178.8" y="763.3"/><use href="#rx" x="1474" y="804.2"/><use href="#rd" x="1170.3" y="874"/><use href="#rx" x="1422" y="793.2"/><use href="#gx" x="1257.7" y="823.1"/><use href="#rx" x="2511.5" y="693.7"/><use href="#rx" x="1795.6" y="854.1"/><use href="#rx" x="1173.9" y="883.6"/><use href="#gx" x="1547.8" y="819.3"/><use href="#rd" x="1916.5" y="829.9"/><use href="#rx" x="2114.9" y="799.8"/><use href="#gx" x="2532.3" y="705.5"/><use href="#gu" x="2568.6" y="687.7"/><use href="#rd" x="1851.4" y="853.4"/><use href="#gx" x="1941" y="864.6"/><use href="#gx" x="1805.4" y="870.7"/><use href="#gx" x="1184.2" y="941.1"/><use href="#rd" x="1319.3" y="812.9"/><use href="#rx" x="1509.4" y="784.1"/><use href="#rx" x="1079" y="711.5"/><use href="#rx" x="2522.1" y="669.7"/><use href="#gx" x="1123.5" y="826"/><use href="#gx" x="1337.5" y="800.9"/><use href="#rd" x="1230.6" y="834.7"/><use href="#rd" x="1286.6" y="755.9"/><use href="#rd" x="2160" y="774.3"/><use href="#gx" x="2170.4" y="776.7"/><use href="#gu" x="1912.5" y="869.9"/><use href="#rd" x="2158.9" y="779.3"/><use href="#rx" x="1146.7" y="829.1"/><use href="#gx" x="1404.8" y="856.7"/><use href="#gx" x="1064.2" y="721.1"/><use href="#gu" x="1598.8" y="837.2"/><use href="#gu" x="2477.7" y="774.4"/><use href="#rx" x="1612.5" y="808.1"/><use href="#rx" x="1281.6" y="798.6"/><use href="#rd" x="1202.1" y="888"/><use href="#gx" x="1063.9" y="709.2"/><use href="#gx" x="1126.1" y="835.9"/><use href="#gu" x="1287.5" y="819.5"/><use href="#gu" x="1106.9" y="740.9"/><use href="#gu" x="1182.9" y="922.7"/><use href="#rx" x="1214.8" y="854.3"/><use href="#rx" x="1518.7" y="781.3"/><use href="#rd" x="1103.6" y="730.8"/><use href="#gx" x="1858.3" y="871.2"/><use href="#rx" x="1900.1" y="848.6"/><use href="#gu" x="2506.7" y="728.2"/><use href="#rx" x="1181.5" y="914"/><use href="#gx" x="1389.5" y="843.4"/><use href="#rd" x="2592.7" y="677.9"/><use href="#rd" x="1242.1" y="802.2"/><use href="#rd" x="2289.3" y="735.5"/><use href="#rx" x="1597.7" y="820.5"/><use href="#rd" x="1249.5" y="800.4"/><use href="#rd" x="1111.2" y="700.5"/><use href="#gu" x="1280.6" y="826.9"/><use href="#gu" x="2341.6" y="742.6"/><use href="#rx" x="2522.8" y="672.1"/><use href="#gx" x="1266.8" y="841.8"/><use href="#rd" x="2303.6" y="726.1"/><use href="#rd" x="1534.4" y="774.5"/><use href="#gu" x="1323.7" y="829.7"/><use href="#rx" x="2344.6" y="742.1"/><use href="#rd" x="2210.2" y="772.2"/><use href="#gx" x="2391.4" y="757.3"/><use href="#rd" x="1365.6" y="833.1"/><use href="#rx" x="2452.6" y="739.7"/><use href="#rd" x="1510.7" y="775.9"/><use href="#gu" x="2520.3" y="710.8"/><use href="#rd" x="1612.9" y="815.2"/><use href="#gx" x="1183.1" y="929.2"/><use href="#rx" x="1283.8" y="799.3"/><use href="#gx" x="1530.3" y="799.1"/><use href="#rx" x="1660.7" y="884.5"/><use href="#rd" x="1193" y="894.1"/><use href="#gx" x="1240.5" y="841.3"/><use href="#gu" x="1437.7" y="804.6"/><use href="#rx" x="1938.8" y="846.3"/><use href="#rd" x="1530.1" y="793.6"/><use href="#gu" x="1077.8" y="754.5"/><use href="#rd" x="1197.5" y="873.8"/><use href="#gx" x="1282.2" y="815.8"/><use href="#rd" x="2542.7" y="653.7"/><use href="#gu" x="2178.4" y="766.7"/><use href="#gu" x="1114.1" y="776.1"/><use href="#rx" x="2490.1" y="714.9"/><use href="#gu" x="1872.6" y="910.9"/><use href="#rx" x="1294.3" y="788.2"/><use href="#gx" x="1889.6" y="858.7"/><use href="#gu" x="2309.1" y="747.9"/><use href="#gu" x="1808.4" y="878.9"/><use href="#rx" x="2184.8" y="767.3"/><use href="#rx" x="2351.3" y="749.6"/><use href="#gu" x="2099.1" y="837.4"/><use href="#gx" x="1573.1" y="798.5"/><use href="#gx" x="2428" y="780.5"/><use href="#gu" x="1865.9" y="886.8"/><use href="#rd" x="2040.2" y="801.3"/><use href="#gu" x="1219.8" y="859.9"/><use href="#rx" x="1995.6" y="814"/><use href="#gx" x="2030.8" y="808.9"/><use href="#rx" x="1391" y="817.5"/><use href="#rd" x="2343.9" y="739.1"/><use href="#rd" x="1514.7" y="786"/><use href="#rd" x="1170.1" y="898.7"/><use href="#rx" x="1204.2" y="860.4"/><use href="#rd" x="1932.2" y="853.2"/><use href="#rd" x="1871.9" y="822.4"/><use href="#rd" x="1649.8" y="862.2"/><use href="#gx" x="2311.7" y="747.2"/><use href="#gx" x="1742.4" y="884"/><use href="#rx" x="1520.1" y="780.6"/><use href="#gu" x="2017.5" y="813"/><use href="#gx" x="1433.2" y="826.7"/><use href="#gx" x="1057" y="710.3"/><use href="#rd" x="1322.1" y="809.4"/><use href="#gu" x="1814.3" y="875.2"/><use href="#gx" x="2431.3" y="781.6"/><use href="#rd" x="1960.9" y="817.3"/><use href="#rx" x="2148.7" y="782.1"/><use href="#gu" x="1109.6" y="747.5"/><use href="#rx" x="2091.3" y="779.4"/><use href="#rd" x="1711" y="864.9"/><use href="#rd" x="2510" y="698.7"/><use href="#rx" x="1245.5" y="803.9"/><use href="#gx" x="1457.2" y="817"/><use href="#rx" x="1060.1" y="679.2"/><use href="#rd" x="1819.1" y="873.6"/><use href="#gu" x="2298.8" y="789.4"/><use href="#gu" x="1341.5" y="853"/><use href="#rx" x="1598.1" y="790.7"/><use href="#rx" x="2363.9" y="745.8"/><use href="#gu" x="1226.5" y="858.3"/><use href="#rx" x="1616.1" y="810.9"/><use href="#gx" x="1222.7" y="868.3"/><use href="#rd" x="1899.3" y="851.9"/><use href="#rd" x="2557.4" y="670.3"/><use href="#rd" x="2108.3" y="791.6"/><use href="#rd" x="2566" y="679.1"/><use href="#gx" x="1281.3" y="850.2"/><use href="#gx" x="2459.4" y="781.9"/><use href="#rd" x="1788.7" y="836.1"/><use href="#rx" x="1116.3" y="754.4"/><use href="#rd" x="2067.5" y="798.8"/><use href="#gx" x="1062.8" y="707.6"/><use href="#gx" x="1271.7" y="808.7"/><use href="#rd" x="2311.3" y="708.9"/><use href="#rx" x="1200.5" y="859.9"/><use href="#rd" x="1485.5" y="780.6"/><use href="#gx" x="2524.1" y="721.1"/><use href="#rx" x="2193.2" y="758.4"/><use href="#gx" x="2536.4" y="677.7"/><use href="#rx" x="1961.8" y="813.9"/><use href="#rd" x="2482.5" y="746.2"/><use href="#rd" x="1562.3" y="788.3"/><use href="#gu" x="1866" y="879.3"/><use href="#gx" x="1295.4" y="811.3"/><use href="#rx" x="1244.6" y="804.8"/><use href="#rd" x="1435.2" y="789.6"/><use href="#rx" x="1104.9" y="707"/><use href="#gu" x="1098.6" y="753.8"/><use href="#rd" x="1639.6" y="858"/><use href="#rx" x="1438.1" y="800.4"/><use href="#gu" x="2522.7" y="692.1"/><use href="#rx" x="2550.3" y="672.3"/><use href="#gu" x="1111.9" y="782.3"/><use href="#rx" x="1371.1" y="819.7"/><use href="#gu" x="1700.3" y="885.5"/><use href="#gx" x="1686" y="888.9"/><use href="#rd" x="1232.3" y="830.2"/><use href="#rd" x="1189.5" y="888.7"/><use href="#rx" x="1653.4" y="861.6"/><use href="#gu" x="1893.5" y="859.9"/><use href="#rd" x="1286.4" y="793.1"/><use href="#gu" x="2564.9" y="689.8"/><use href="#gu" x="2354.8" y="766.5"/><use href="#gx" x="2312.6" y="769.2"/><use href="#rd" x="1884.9" y="836.8"/><use href="#gx" x="2082.4" y="831.8"/><use href="#gx" x="2174.9" y="782.4"/><use href="#rd" x="1193.9" y="873.5"/><use href="#rx" x="1730.5" y="832.3"/><use href="#rd" x="1201.4" y="864.6"/><use href="#gu" x="1074.5" y="718.6"/><use href="#rd" x="1703.9" y="848"/><use href="#gx" x="1595.3" y="825.2"/><use href="#gu" x="1691.6" y="879.2"/><use href="#rd" x="1172.5" y="892.9"/><use href="#rx" x="2143.4" y="788.5"/><use href="#gu" x="2341.4" y="742.4"/><use href="#gx" x="2533.2" y="716.9"/><use href="#gu" x="1712" y="904.1"/><use href="#gu" x="1187.4" y="927.5"/><use href="#rd" x="2518.3" y="657.7"/><use href="#rd" x="1064.9" y="680.4"/><use href="#rd" x="1111.8" y="708"/><use href="#gu" x="1277.3" y="841"/><use href="#rd" x="1240.6" y="798.7"/><use href="#gx" x="1836.5" y="915.8"/><use href="#gu" x="1533.6" y="819.1"/><use href="#rx" x="1184.9" y="891.5"/><use href="#gu" x="1885.1" y="879.2"/><use href="#gx" x="1063.4" y="699.7"/><use href="#gu" x="1652.6" y="899.2"/><use href="#rx" x="2531.1" y="639.3"/><use href="#gu" x="2308.3" y="755.5"/><use href="#gx" x="2159.6" y="798"/><use href="#rd" x="1166.6" y="890.9"/><use href="#rx" x="1357.3" y="819.8"/><use href="#gu" x="2525.2" y="738.6"/><use href="#gu" x="1442.6" y="810.4"/><use href="#gx" x="2328.7" y="736.8"/><use href="#rd" x="1937.2" y="854.8"/><use href="#gu" x="1527" y="810.2"/><use href="#rd" x="1172.7" y="901"/><use href="#gx" x="1795.1" y="861.5"/><use href="#rd" x="2453.3" y="750.1"/><use href="#rx" x="1199.9" y="870.5"/><use href="#rx" x="1186.7" y="898.3"/><use href="#rx" x="1630.6" y="825.7"/><use href="#rx" x="1152.7" y="846.8"/><use href="#gu" x="2037.6" y="834.5"/><use href="#rx" x="1621.3" y="802.2"/><use href="#rd" x="1995" y="808.5"/><use href="#gu" x="2417" y="802.9"/><use href="#rd" x="2214.6" y="766.9"/><use href="#rx" x="2503.2" y="699.8"/><use href="#gu" x="2495.4" y="739.1"/><use href="#rx" x="1089" y="697.3"/><use href="#gu" x="1656.3" y="899.6"/><use href="#gu" x="1302.2" y="809.2"/><use href="#gu" x="1901.1" y="862.5"/><use href="#gu" x="2517.4" y="736.8"/><use href="#rd" x="1138.1" y="800.4"/><use href="#gx" x="2080" y="818.3"/><use href="#rx" x="2353.3" y="748.7"/><use href="#rx" x="1168.2" y="877.2"/><use href="#rd" x="1234" y="838.2"/><use href="#gu" x="1276.5" y="847"/><use href="#rd" x="1660.4" y="837"/><use href="#rx" x="2542.5" y="661.7"/><use href="#gu" x="2413.5" y="780.1"/><use href="#rd" x="2413.1" y="753.1"/><use href="#rx" x="1660.2" y="875.8"/><use href="#gx" x="1912.9" y="873.5"/><use href="#gu" x="1202.6" y="896.5"/><use href="#rd" x="1173.7" y="895.9"/><use href="#rx" x="1362.2" y="821.3"/><use href="#gx" x="1112.8" y="767.1"/><use href="#gx" x="1714.7" y="888.3"/><use href="#gx" x="2520.8" y="709.9"/><use href="#gu" x="1730.8" y="890.1"/><use href="#gx" x="1452.9" y="849.1"/><use href="#rd" x="1217.4" y="833.9"/><use href="#gu" x="1372.1" y="863.4"/><use href="#rd" x="1224.2" y="827.9"/><use href="#rx" x="1293.7" y="796"/><use href="#rd" x="2148.2" y="771"/><use href="#gu" x="1210.5" y="874.2"/><use href="#rx" x="1783.7" y="829.3"/><use href="#gx" x="1189.2" y="946.1"/><use href="#gu" x="2565.9" y="711.3"/><use href="#rd" x="1705.3" y="855"/><use href="#gu" x="2369.1" y="775.7"/><use href="#rx" x="2314.6" y="723.2"/><use href="#rd" x="2472" y="769.5"/><use href="#rd" x="1913.4" y="824.8"/><use href="#gx" x="1084.7" y="802.2"/><use href="#gx" x="1669.6" y="894.9"/><use href="#rd" x="1461.4" y="785.9"/><use href="#rx" x="1222.8" y="841.4"/><use href="#gx" x="1914" y="881.5"/><use href="#rd" x="1457.4" y="788.3"/><use href="#gx" x="1576.4" y="816.3"/><use href="#gx" x="2549.8" y="700.4"/><use href="#rx" x="1077.4" y="690.2"/><use href="#gu" x="1869.3" y="879.7"/><use href="#gu" x="1264" y="839.3"/><use href="#gx" x="2104.2" y="827.3"/><use href="#gu" x="1778.7" y="855.2"/><use href="#gu" x="2053.2" y="828"/><use href="#rd" x="1389.3" y="821.1"/><use href="#gu" x="1256.7" y="819"/><use href="#gu" x="1189.5" y="925.3"/><use href="#gx" x="1287.2" y="816.8"/><use href="#rx" x="1613.2" y="815.2"/><use href="#rx" x="1290.6" y="802.9"/><use href="#rd" x="1842.6" y="876.5"/><use href="#gu" x="1250.6" y="818.4"/><use href="#rx" x="1117.9" y="714.6"/><use href="#rd" x="2090.3" y="781.7"/><use href="#gx" x="2239.3" y="783.2"/><use href="#gu" x="1547.8" y="796.8"/><use href="#rd" x="2256.6" y="755.6"/><use href="#rd" x="2502.1" y="674.5"/><use href="#gu" x="2099.8" y="819"/><use href="#rd" x="1303" y="747.7"/><use href="#gu" x="1868.2" y="888"/><use href="#rd" x="2084.6" y="800.8"/><use href="#gx" x="1963.3" y="833.2"/><use href="#gx" x="1330.7" y="802.9"/><use href="#gu" x="2613.2" y="692.4"/><use href="#rx" x="2398.7" y="732.3"/><use href="#gu" x="2553.6" y="723.2"/><use href="#rd" x="1239.2" y="820.3"/><use href="#gu" x="1267.2" y="810"/><use href="#rd" x="1727.8" y="848.3"/><use href="#gx" x="1336.2" y="819.3"/><use href="#gu" x="1208.5" y="904.4"/><use href="#rd" x="1197.5" y="882.6"/><use href="#gu" x="1460.2" y="844.9"/><use href="#gx" x="1265" y="807.1"/><use href="#rd" x="1281.6" y="799.5"/><use href="#rx" x="1190.2" y="899.7"/><use href="#gx" x="2435.9" y="797.3"/><use href="#gu" x="1240.9" y="835.2"/><use href="#rd" x="1834.6" y="853"/><use href="#rd" x="1562.1" y="773.6"/><use href="#rd" x="1289.4" y="797.6"/><use href="#gx" x="1709.4" y="901"/><use href="#rd" x="2333.8" y="723.9"/><use href="#gu" x="1237.9" y="859.5"/><use href="#gx" x="1132.9" y="847.7"/><use href="#rd" x="1117.7" y="725.9"/><use href="#rx" x="2480.8" y="727.2"/><use href="#rd" x="2481.5" y="746.5"/><use href="#gx" x="1799" y="863.6"/><use href="#gu" x="1801.9" y="881.7"/><use href="#rd" x="1360.3" y="814.9"/><use href="#gx" x="1309.6" y="827.1"/><use href="#gu" x="2079.1" y="808.8"/><use href="#rd" x="1088.8" y="732"/><use href="#gx" x="1073.1" y="707.8"/><use href="#rd" x="1609.4" y="796.1"/><use href="#gx" x="1749.2" y="876.3"/><use href="#rx" x="2331.5" y="718"/><use href="#rd" x="2287.6" y="753.3"/><use href="#gx" x="2361" y="760.6"/><use href="#gu" x="2312.1" y="771.7"/><use href="#rd" x="1425.5" y="798"/><use href="#gx" x="2508.8" y="719.2"/><use href="#gu" x="1267.5" y="822.2"/><use href="#rd" x="2018" y="779"/><use href="#gu" x="2455" y="777.8"/><use href="#rx" x="2457.7" y="769.5"/><use href="#rx" x="1342.1" y="783.9"/><use href="#gx" x="1578.5" y="804.9"/><use href="#rx" x="1859.8" y="866.1"/><use href="#rd" x="1431.1" y="798.5"/><use href="#gx" x="2529.6" y="724.1"/><use href="#gu" x="1311.1" y="819.4"/><use href="#gu" x="1341.6" y="801.1"/><use href="#gx" x="2557.2" y="716"/><use href="#gu" x="2231.7" y="771.8"/><use href="#rx" x="1515.9" y="786.2"/><use href="#gu" x="1607.6" y="823.8"/><use href="#gx" x="1288.2" y="845.9"/><use href="#gx" x="1601.7" y="835.3"/><use href="#rd" x="1066.1" y="678.6"/><use href="#rd" x="1425.5" y="794.7"/><use href="#rd" x="1222.5" y="837.1"/><use href="#gx" x="1328.3" y="805.2"/><use href="#gu" x="1207.8" y="929.4"/><use href="#gx" x="1307.7" y="811.9"/><use href="#rx" x="2406.2" y="710.5"/><use href="#rd" x="2501.2" y="683.1"/><use href="#gx" x="1734.3" y="872.6"/><use href="#gx" x="1705.6" y="889.8"/><use href="#gu" x="2374.7" y="787.2"/><use href="#gu" x="2515.6" y="717"/><use href="#rx" x="1116.7" y="737"/><use href="#rx" x="1617.2" y="770.6"/><use href="#rx" x="1354" y="817.9"/><use href="#gx" x="1281.4" y="821.3"/><use href="#rx" x="1215.5" y="851.7"/><use href="#rd" x="1337.2" y="775.1"/><use href="#rx" x="1216.2" y="836"/><use href="#rd" x="1671.8" y="864.1"/><use href="#gx" x="2101" y="834.8"/><use href="#gx" x="1651.7" y="884.6"/><use href="#rd" x="1909.6" y="826.4"/><use href="#gx" x="2362.6" y="777.8"/><use href="#rx" x="2054.9" y="810.5"/><use href="#rx" x="1182.1" y="900.2"/><use href="#rd" x="2281.3" y="753.9"/><use href="#rx" x="2489.1" y="719.2"/><use href="#rd" x="1379.1" y="813.9"/><use href="#gu" x="2515.2" y="702.4"/><use href="#rx" x="2021.7" y="770.7"/><use href="#rd" x="2340.4" y="738.5"/><use href="#rx" x="1426.1" y="797.8"/><use href="#rx" x="1924.8" y="820.9"/><use href="#rx" x="1789.9" y="823.8"/><use href="#rx" x="2103.1" y="806.3"/><use href="#rx" x="2135.8" y="789"/><use href="#gx" x="1323.9" y="818.5"/><use href="#rd" x="2130.9" y="777.9"/><use href="#gu" x="1199.6" y="895.6"/><use href="#rx" x="1508.3" y="769.7"/><use href="#rx" x="2207.4" y="771"/><use href="#rx" x="2504.9" y="693.3"/><use href="#gx" x="2416" y="786.9"/><use href="#gx" x="2483.5" y="754.3"/><use href="#rx" x="1422.9" y="801"/><use href="#gu" x="1495" y="826.7"/><use href="#rx" x="1225.2" y="835.7"/><use href="#gu" x="1316" y="831.1"/><use href="#gu" x="1761.2" y="854.7"/><use href="#rd" x="1211.1" y="870.4"/><use href="#gx" x="2014.3" y="813.9"/><use href="#rd" x="1734.7" y="837.4"/><use href="#gu" x="1280.6" y="842.2"/><use href="#gx" x="2506.2" y="717.7"/><use href="#gx" x="2053.2" y="838.8"/><use href="#gx" x="2602.2" y="702.2"/><use href="#gx" x="2505.2" y="728.8"/><use href="#rx" x="1137.1" y="811.4"/><use href="#rd" x="1473.2" y="806.9"/><use href="#rx" x="1077.7" y="710.7"/><use href="#rx" x="1477.7" y="796.9"/><use href="#gu" x="2491.2" y="753.3"/><use href="#gu" x="1871.6" y="869.7"/><use href="#rd" x="1110.7" y="720.2"/><use href="#gx" x="1246.2" y="860.4"/><use href="#rd" x="1656.2" y="838.6"/><use href="#rd" x="1152.2" y="829.8"/><use href="#gu" x="1278" y="826"/><use href="#gu" x="1192.4" y="900.6"/><use href="#rx" x="1667.4" y="874.6"/><use href="#gu" x="1113.6" y="794.3"/><use href="#gu" x="2363.5" y="765.6"/><use href="#rd" x="1842.3" y="873.6"/><use href="#gu" x="1097" y="779.4"/><use href="#gu" x="2502.8" y="722.7"/><use href="#gu" x="2050.8" y="825.2"/><use href="#gu" x="1795.3" y="856.7"/><use href="#rx" x="1121.8" y="736.4"/><use href="#rx" x="2121.2" y="783.6"/><use href="#gx" x="1908.2" y="856.9"/><use href="#gx" x="1240.4" y="875.1"/><use href="#rd" x="1719.9" y="858.1"/><use href="#rd" x="2498.8" y="692"/><use href="#gu" x="2510.4" y="706.5"/><use href="#gx" x="1851.1" y="876.6"/><use href="#rd" x="1221.7" y="849.9"/><use href="#gx" x="1497.2" y="804"/><use href="#rd" x="2337.8" y="714.2"/><use href="#rx" x="2566.3" y="664.3"/><use href="#gu" x="1857.6" y="892.3"/><use href="#gu" x="2532.8" y="692.6"/><use href="#rd" x="1930.4" y="860"/><use href="#gu" x="2547.6" y="672"/><use href="#rd" x="1095.4" y="723.9"/><use href="#gu" x="2320.8" y="748.5"/><use href="#rd" x="2262.8" y="750.1"/><use href="#rx" x="1778.4" y="830.9"/><use href="#rx" x="1092" y="751.6"/><use href="#gx" x="1494.7" y="818.4"/><use href="#gu" x="1365.2" y="842.3"/><use href="#gx" x="2429.8" y="800.5"/><use href="#gu" x="1165.9" y="916.6"/><use href="#gx" x="2595" y="700"/><use href="#rd" x="2051" y="818.6"/><use href="#gu" x="1065.9" y="692.1"/><use href="#rx" x="1750" y="809.8"/><use href="#rx" x="1239.8" y="824.7"/><use href="#gx" x="1254.3" y="823.7"/><use href="#gu" x="1948.9" y="880.8"/><use href="#rd" x="2615.5" y="679.9"/><use href="#rd" x="1187.8" y="905.9"/><use href="#gx" x="2557.6" y="725.9"/><use href="#gx" x="1134.9" y="846.5"/><use href="#gx" x="1548.4" y="812.5"/><use href="#gu" x="1218.3" y="876"/><use href="#rd" x="2306.2" y="710.4"/><use href="#rd" x="1640" y="859.6"/><use href="#rx" x="1891.8" y="838"/><use href="#gu" x="1057" y="717.8"/><use href="#gu" x="1292.6" y="830.4"/><use href="#gx" x="2453.4" y="768.1"/><use href="#rd" x="1443.6" y="790.7"/><use href="#rx" x="2069.7" y="775.2"/><use href="#gx" x="2196.6" y="787.4"/><use href="#gx" x="2287.9" y="782.6"/><use href="#rd" x="1274" y="792.3"/><use href="#rx" x="1750.5" y="842.9"/><use href="#gu" x="1408" y="837.3"/><use href="#gx" x="1885.8" y="870.9"/><use href="#rd" x="1511.3" y="770.2"/><use href="#rd" x="2262.4" y="751.9"/><use href="#gx" x="2375.9" y="789.3"/><use href="#rx" x="1177.2" y="903.8"/><use href="#gx" x="2478.5" y="770.9"/><use href="#rx" x="1908" y="837.2"/><use href="#gu" x="1140.7" y="888.9"/><use href="#gu" x="1787.9" y="863"/><use href="#gu" x="2347.2" y="746.6"/><use href="#rd" x="2512.6" y="687.7"/><use href="#gx" x="1102.1" y="769.1"/><use href="#rd" x="1089.5" y="752.9"/><use href="#rx" x="1285.9" y="758.9"/><use href="#gu" x="2336.4" y="737.9"/><use href="#rx" x="2120.9" y="792"/><use href="#gu" x="1192.9" y="953.4"/><use href="#rx" x="1147.4" y="821.8"/><use href="#gx" x="2425.2" y="782"/><use href="#rd" x="1449.4" y="785.9"/><use href="#rd" x="1370.9" y="834.3"/><use href="#gu" x="1765.1" y="867.2"/><use href="#gx" x="2024.3" y="832"/><use href="#gx" x="1229.4" y="860.8"/><use href="#gu" x="1553.8" y="796.9"/><use href="#gu" x="1896.3" y="867.2"/><use href="#gx" x="2090" y="826.4"/><use href="#gu" x="1224.6" y="863.8"/><use href="#rx" x="1334.8" y="750.1"/><use href="#rx" x="2177.4" y="764.5"/><use href="#gu" x="2417" y="778.4"/><use href="#gu" x="2436.6" y="777.9"/><use href="#gu" x="2085.5" y="836.5"/></g><text x="1352" y="651.600" font-size="11" fill="#222" text-anchor="middle">0</text><text x="1362" y="651.600" font-size="11" fill="#222" text-anchor="middle">5</text><text x="1462" y="651.600" font-size="11" fill="#222" text-anchor="middle">s</text><text x="1473" y="651.600" font-size="11" fill="#222" text-anchor="middle">2</text><text x="1515" y="651.600" font-size="11" fill="#222" text-anchor="middle">3</text><text x="1543" y="651.600" font-size="11" fill="#222" text-anchor="middle">3</text><text x="1569" y="651.600" font-size="11" fill="#222" text-anchor="middle">0</text><text x="1583" y="651.600" font-size="11" fill="#222" text-anchor="middle">5</text><text x="1591" y="651.600" font-size="11" fill="#222" text-anchor="middle">3</text><text x="1669.5" y="651.600" font-size="11" fill="#222" text-anchor="middle">5</text><text x="1776" y="651.600" font-size="11" fill="#222" text-anchor="middle">2</text><text x="1785" y="651.600" font-size="11" fill="#222" text-anchor="middle">0</text><text x="1821" y="651.600" font-size="11" fill="#222" text-anchor="middle">5</text><text x="1849" y="651.600" font-size="11" fill="#222" text-anchor="middle">3</text><text x="1888" y="651.600" font-size="11" fill="#222" text-anchor="middle">,8</text><text x="1941" y="651.600" font-size="11" fill="#222" text-anchor="middle">1</text><text x="1973" y="651.600" font-size="11" fill="#222" text-anchor="middle">,2</text><text x="1989" y="651.600" font-size="11" fill="#222" text-anchor="middle">5</text><text x="2000" y="651.600" font-size="11" fill="#222" text-anchor="middle">3</text><text x="2008" y="651.600" font-size="11" fill="#222" text-anchor="middle">7</text><text x="2023" y="651.600" font-size="11" fill="#222" text-anchor="middle">5</text><text x="2034" y="651.600" font-size="11" fill="#222" text-anchor="middle">8</text><text x="2107" y="651.600" font-size="11" fill="#222" text-anchor="middle">3</text><text x="2118" y="651.600" font-size="11" fill="#222" text-anchor="middle">3</text><text x="2143" y="651.600" font-size="11" fill="#222" text-anchor="middle">5</text><text x="2160" y="651.600" font-size="11" fill="#222" text-anchor="middle">3</text><text x="2183" y="651.600" font-size="11" fill="#222" text-anchor="middle">3</text><text x="2210" y="651.600" font-size="11" fill="#222" text-anchor="middle">2</text><text x="2223" y="651.600" font-size="11" fill="#222" text-anchor="middle">9</text><text x="2249" y="651.600" font-size="11" fill="#222" text-anchor="middle">3</text><text x="2266" y="651.600" font-size="11" fill="#222" text-anchor="middle">5</text><text x="2296" y="651.600" font-size="11" fill="#222" text-anchor="middle">3</text><text x="2315" y="651.600" font-size="11" fill="#222" text-anchor="middle">9</text><text x="2331" y="651.600" font-size="11" fill="#222" text-anchor="middle">3</text><text x="2338" y="651.600" font-size="11" fill="#222" text-anchor="middle">5</text><text x="2362" y="651.600" font-size="11" fill="#222" text-anchor="middle">3</text><text x="2369" y="651.600" font-size="11" fill="#222" text-anchor="middle">5</text><text x="2420" y="651.600" font-size="11" fill="#222" text-anchor="middle">4</text><text x="2428" y="651.600" font-size="11" fill="#222" text-anchor="middle">3</text><text x="2480" y="651.600" font-size="11" fill="#222" text-anchor="middle">7</text><text x="2502" y="651.600" font-size="11" fill="#222" text-anchor="middle">8</text><text x="2543" y="651.600" font-size="11" fill="#222" text-anchor="middle">3</text><text x="2550" y="651.600" font-size="11" fill="#222" text-anchor="middle">7</text><text x="2571" y="651.600" font-size="11" fill="#222" text-anchor="middle">3</text><text x="2638" y="651.600" font-size="11" fill="#222" text-anchor="middle">4</text><text x="1302" y="961" font-size="11" fill="#1d3a1d" text-anchor="middle">5</text><text x="1323" y="961" font-size="11" fill="#1d3a1d" text-anchor="middle">5</text><text x="1341" y="961" font-size="11" fill="#1d3a1d" text-anchor="middle">,0</text><text x="1350" y="961" font-size="11" fill="#1d3a1d" text-anchor="middle">5</text><text x="1467" y="961" font-size="11" fill="#1d3a1d" text-anchor="middle">2,8</text><text x="1491" y="961" font-size="11" fill="#1d3a1d" text-anchor="middle">0</text><text x="1504" y="961" font-size="11" fill="#1d3a1d" text-anchor="middle">3</text><text x="1515" y="961" font-size="11" fill="#1d3a1d" text-anchor="middle">8</text><text x="1525" y="961" font-size="11" fill="#1d3a1d" text-anchor="middle">3</text><text x="1543" y="961" font-size="11" fill="#1d3a1d" text-anchor="middle">3</text><text x="1556" y="961" font-size="11" fill="#1d3a1d" text-anchor="middle">3</text><text x="1583" y="961" font-size="11" fill="#1d3a1d" text-anchor="middle">0</text><text x="1594" y="961" font-size="11" fill="#1d3a1d" text-anchor="middle">0</text><text x="1604" y="961" font-size="11" fill="#1d3a1d" text-anchor="middle">3</text><text x="1636" y="961" font-size="11" fill="#1d3a1d" text-anchor="middle">7</text><text x="1653" y="961" font-size="11" fill="#1d3a1d" text-anchor="middle">3</text><text x="1680" y="961" font-size="11" fill="#1d3a1d" text-anchor="middle">2</text><text x="1708" y="961" font-size="11" fill="#1d3a1d" text-anchor="middle">3</text><text x="1720" y="961" font-size="11" fill="#1d3a1d" text-anchor="middle">0</text><text x="1773" y="961" font-size="11" fill="#1d3a1d" text-anchor="middle">3</text><text x="1788" y="961" font-size="11" fill="#1d3a1d" text-anchor="middle">3</text><text x="1795" y="961" font-size="11" fill="#1d3a1d" text-anchor="middle">0</text><text x="1868" y="961" font-size="11" fill="#1d3a1d" text-anchor="middle">3</text><text x="1879" y="961" font-size="11" fill="#1d3a1d" text-anchor="middle">3</text><text x="1895" y="961" font-size="11" fill="#1d3a1d" text-anchor="middle">,9</text><text x="1908" y="961" font-size="11" fill="#1d3a1d" text-anchor="middle">3</text><text x="1917" y="961" font-size="11" fill="#1d3a1d" text-anchor="middle">3</text><text x="1932" y="961" font-size="11" fill="#1d3a1d" text-anchor="middle">8</text><text x="1941" y="961" font-size="11" fill="#1d3a1d" text-anchor="middle">8</text><text x="1952" y="961" font-size="11" fill="#1d3a1d" text-anchor="middle">6</text><text x="1968" y="961" font-size="11" fill="#1d3a1d" text-anchor="middle">3</text><text x="1988" y="961" font-size="11" fill="#1d3a1d" text-anchor="middle">4</text><text x="1999" y="961" font-size="11" fill="#1d3a1d" text-anchor="middle">9</text><text x="2008" y="961" font-size="11" fill="#1d3a1d" text-anchor="middle">4</text><text x="2022" y="961" font-size="11" fill="#1d3a1d" text-anchor="middle">2</text><text x="2031" y="961" font-size="11" fill="#1d3a1d" text-anchor="middle">5</text><text x="2039" y="961" font-size="11" fill="#1d3a1d" text-anchor="middle">7</text><text x="2051" y="961" font-size="11" fill="#1d3a1d" text-anchor="middle">7</text><text x="2097" y="961" font-size="11" fill="#1d3a1d" text-anchor="middle">3</text><text x="2122" y="961" font-size="11" fill="#1d3a1d" text-anchor="middle">0</text><text x="2142" y="961" font-size="11" fill="#1d3a1d" text-anchor="middle">6</text><text x="2161" y="961" font-size="11" fill="#1d3a1d" text-anchor="middle">6</text><text x="2186" y="961" font-size="11" fill="#1d3a1d" text-anchor="middle">7</text><text x="2208" y="961" font-size="11" fill="#1d3a1d" text-anchor="middle">,3</text><text x="2223" y="961" font-size="11" fill="#1d3a1d" text-anchor="middle">6</text><text x="2251" y="961" font-size="11" fill="#1d3a1d" text-anchor="middle">3</text><text x="2267" y="961" font-size="11" fill="#1d3a1d" text-anchor="middle">1</text><text x="2289" y="961" font-size="11" fill="#1d3a1d" text-anchor="middle">8</text><text x="2315" y="961" font-size="11" fill="#1d3a1d" text-anchor="middle">5</text><text x="2330" y="961" font-size="11" fill="#1d3a1d" text-anchor="middle">3</text><text x="2339" y="961" font-size="11" fill="#1d3a1d" text-anchor="middle">7</text><text x="2348" y="961" font-size="11" fill="#1d3a1d" text-anchor="middle">1</text><text x="2356" y="961" font-size="11" fill="#1d3a1d" text-anchor="middle">9</text><text x="2368" y="961" font-size="11" fill="#1d3a1d" text-anchor="middle">,1</text><text x="2412" y="961" font-size="11" fill="#1d3a1d" text-anchor="middle">2</text><text x="2421" y="961" font-size="11" fill="#1d3a1d" text-anchor="middle">4</text><text x="2437" y="961" font-size="11" fill="#1d3a1d" text-anchor="middle">3</text><text x="2447" y="961" font-size="11" fill="#1d3a1d" text-anchor="middle">3</text><text x="2478" y="961" font-size="11" fill="#1d3a1d" text-anchor="middle">4</text><text x="2502" y="961" font-size="11" fill="#1d3a1d" text-anchor="middle">8</text><text x="2524" y="961" font-size="11" fill="#1d3a1d" text-anchor="middle">3</text><text x="2569" y="961" font-size="11" fill="#1d3a1d" text-anchor="middle">4</text><text x="2580" y="961" font-size="11" fill="#1d3a1d" text-anchor="middle">5</text><path d="M2670.5 97.5V424" stroke="#8492a0" stroke-width="1"/><path d="M2670.5 427.5V635.5" stroke="#8492a0" stroke-width="1"/><path d="M2670.5 638.5V965.5" stroke="#8492a0" stroke-width="1"/><path d="M2670.5 397.1h2.5" stroke="#6c7986" stroke-width="1"/><path d="M2670.5 383.0h4" stroke="#6c7986" stroke-width="1"/><path d="M2670.5 369.0h2.5" stroke="#6c7986" stroke-width="1"/><path d="M2670.5 355.0h4" stroke="#6c7986" stroke-width="1"/><path d="M2670.5 341.0h2.5" stroke="#6c7986" stroke-width="1"/><path d="M2670.5 326.9h4" stroke="#6c7986" stroke-width="1"/><path d="M2670.5 312.9h2.5" stroke="#6c7986" stroke-width="1"/><path d="M2670.5 298.9h4" stroke="#6c7986" stroke-width="1"/><path d="M2670.5 284.8h2.5" stroke="#6c7986" stroke-width="1"/><path d="M2670.5 270.8h4" stroke="#6c7986" stroke-width="1"/><path d="M2670.5 256.8h2.5" stroke="#6c7986" stroke-width="1"/><path d="M2670.5 242.7h4" stroke="#6c7986" stroke-width="1"/><path d="M2670.5 228.7h2.5" stroke="#6c7986" stroke-width="1"/><path d="M2670.5 214.7h4" stroke="#6c7986" stroke-width="1"/><path d="M2670.5 200.6h2.5" stroke="#6c7986" stroke-width="1"/><path d="M2670.5 186.6h4" stroke="#6c7986" stroke-width="1"/><path d="M2670.5 172.6h2.5" stroke="#6c7986" stroke-width="1"/><path d="M2670.5 158.6h4" stroke="#6c7986" stroke-width="1"/><path d="M2670.5 144.5h2.5" stroke="#6c7986" stroke-width="1"/><path d="M2670.5 130.5h4" stroke="#6c7986" stroke-width="1"/><path d="M2670.5 116.5h2.5" stroke="#6c7986" stroke-width="1"/><path d="M2670.5 102.4h4" stroke="#6c7986" stroke-width="1"/><text x="2677" y="386.2" font-size="11" fill="#111" text-anchor="start" letter-spacing="-0.1">2 000</text><text x="2677" y="358.2" font-size="11" fill="#111" text-anchor="start" letter-spacing="-0.1">4 000</text><text x="2677" y="330.1" font-size="11" fill="#111" text-anchor="start" letter-spacing="-0.1">6 000</text><text x="2677" y="302.1" font-size="11" fill="#111" text-anchor="start" letter-spacing="-0.1">8 000</text><text x="2677" y="245.9" font-size="11" fill="#111" text-anchor="start" letter-spacing="-0.1">12 000</text><text x="2677" y="217.9" font-size="11" fill="#111" text-anchor="start" letter-spacing="-0.1">14 000</text><text x="2677" y="189.8" font-size="11" fill="#111" text-anchor="start" letter-spacing="-0.1">16 000</text><text x="2677" y="161.8" font-size="11" fill="#111" text-anchor="start" letter-spacing="-0.1">18 000</text><text x="2677" y="108.3" font-size="11" fill="#111" text-anchor="start" letter-spacing="-0.1">22 000</text><text x="2677" y="133.1" font-size="12" font-weight="bold" fill="#111" text-anchor="start" letter-spacing="-0.1">20 000</text><text x="2677" y="273.4" font-size="12" font-weight="bold" fill="#111" text-anchor="start" letter-spacing="-0.1">10 000</text><text x="2677" y="415.8" font-size="12" font-weight="bold" fill="#111" text-anchor="start">0</text><path d="M2670.5 411.5h4" stroke="#6c7986"/><rect x="2675.5" y="190" width="36" height="14.5" fill="#d3ddf2" stroke="#8795b5" stroke-width="1"/><text x="2677.5" y="201.3" font-size="11" fill="#63b866" text-anchor="start" letter-spacing="-0.1">15 212</text><path d="M2670.5 620.4h4" stroke="#6c7986" stroke-width="1"/><text x="2677" y="624.4" font-size="11" fill="#111" text-anchor="start">-20</text><path d="M2670.5 598.1h4" stroke="#6c7986" stroke-width="1"/><text x="2677" y="602.1" font-size="11" fill="#111" text-anchor="start">-15</text><path d="M2670.5 575.8h4" stroke="#6c7986" stroke-width="1"/><text x="2677" y="579.8" font-size="11" fill="#111" text-anchor="start">-10</text><path d="M2670.5 553.5h4" stroke="#6c7986" stroke-width="1"/><text x="2677" y="557.5" font-size="11" fill="#111" text-anchor="start">-5</text><path d="M2670.5 508.9h4" stroke="#6c7986" stroke-width="1"/><text x="2677" y="512.9" font-size="11" fill="#111" text-anchor="start">5</text><path d="M2670.5 486.6h4" stroke="#6c7986" stroke-width="1"/><text x="2677" y="490.6" font-size="11" fill="#111" text-anchor="start">10</text><path d="M2670.5 464.3h4" stroke="#6c7986" stroke-width="1"/><text x="2677" y="468.3" font-size="11" fill="#111" text-anchor="start">15</text><path d="M2670.5 442.0h4" stroke="#6c7986" stroke-width="1"/><text x="2677" y="446.0" font-size="11" fill="#111" text-anchor="start">20</text><rect x="2675.5" y="524" width="8.5" height="14.5" fill="#d3ddf2" stroke="#8795b5" stroke-width="1"/><text x="2677" y="535.3" font-size="11" fill="#63b866" text-anchor="start">0</text><path d="M2670.5 946.0h4" stroke="#6c7986" stroke-width="1"/><text x="2677" y="950.0" font-size="11" fill="#111" text-anchor="start" letter-spacing="-0.1">2 500</text><path d="M2670.5 894.1h4" stroke="#6c7986" stroke-width="1"/><text x="2677" y="898.1" font-size="11" fill="#111" text-anchor="start" letter-spacing="-0.1">3 000</text><path d="M2670.5 842.2h4" stroke="#6c7986" stroke-width="1"/><text x="2677" y="846.2" font-size="11" fill="#111" text-anchor="start" letter-spacing="-0.1">3 500</text><path d="M2670.5 790.3h4" stroke="#6c7986" stroke-width="1"/><text x="2677" y="794.3" font-size="11" fill="#111" text-anchor="start" letter-spacing="-0.1">4 000</text><path d="M2670.5 738.4h4" stroke="#6c7986" stroke-width="1"/><text x="2677" y="742.4" font-size="11" fill="#111" text-anchor="start" letter-spacing="-0.1">4 500</text><path d="M2670.5 686.5h4" stroke="#6c7986" stroke-width="1"/><text x="2677" y="691.0" font-size="12" font-weight="bold" fill="#111" text-anchor="start" letter-spacing="-0.1">5 000</text><rect x="2676" y="661.5" width="37.5" height="14" fill="#f6c61a" stroke="#b9960f" stroke-width="1"/><text x="2678" y="672.5" font-size="11" fill="#111" text-anchor="start" letter-spacing="-0.15">5 183,5</text><path d="M1082.2 966v3" stroke="#6c7986" stroke-width="1"/><text x="1082.2" y="981.7" font-size="11" fill="#111" text-anchor="middle">juil.</text><path d="M1119.9 966v3" stroke="#6c7986" stroke-width="1"/><text x="1119.9" y="981.7" font-size="11" fill="#111" text-anchor="middle">oct.</text><path d="M1155.9 966v3" stroke="#6c7986" stroke-width="1"/><text x="1155.9" y="982" font-size="12" font-weight="bold" fill="#111" text-anchor="middle" letter-spacing="-0.1">2009</text><path d="M1191.2 966v3" stroke="#6c7986" stroke-width="1"/><text x="1191.2" y="981.7" font-size="11" fill="#111" text-anchor="middle">avr.</text><path d="M1226.5 966v3" stroke="#6c7986" stroke-width="1"/><text x="1226.5" y="981.7" font-size="11" fill="#111" text-anchor="middle">juil.</text><path d="M1263.8 966v3" stroke="#6c7986" stroke-width="1"/><text x="1263.8" y="981.7" font-size="11" fill="#111" text-anchor="middle">oct.</text><path d="M1299.8 966v3" stroke="#6c7986" stroke-width="1"/><text x="1299.8" y="982" font-size="12" font-weight="bold" fill="#111" text-anchor="middle" letter-spacing="-0.1">2010</text><path d="M1336.5 966v3" stroke="#6c7986" stroke-width="1"/><text x="1336.5" y="981.7" font-size="11" fill="#111" text-anchor="middle">avr.</text><path d="M1372 966v3" stroke="#6c7986" stroke-width="1"/><text x="1372" y="981.7" font-size="11" fill="#111" text-anchor="middle">juil.</text><path d="M1426 966v3" stroke="#6c7986" stroke-width="1"/><text x="1426" y="981.7" font-size="11" fill="#111" text-anchor="middle">oct.</text><path d="M1487.7 966v3" stroke="#6c7986" stroke-width="1"/><text x="1487.7" y="982" font-size="12" font-weight="bold" fill="#111" text-anchor="middle" letter-spacing="-0.1">2011</text><path d="M1547 966v3" stroke="#6c7986" stroke-width="1"/><text x="1547" y="981.7" font-size="11" fill="#111" text-anchor="middle">avr.</text><path d="M1608 966v3" stroke="#6c7986" stroke-width="1"/><text x="1608" y="981.7" font-size="11" fill="#111" text-anchor="middle">juil.</text><path d="M1667 966v3" stroke="#6c7986" stroke-width="1"/><text x="1667" y="981.7" font-size="11" fill="#111" text-anchor="middle">oct.</text><path d="M1728 966v3" stroke="#6c7986" stroke-width="1"/><text x="1728" y="982" font-size="12" font-weight="bold" fill="#111" text-anchor="middle" letter-spacing="-0.1">2012</text><path d="M1790 966v3" stroke="#6c7986" stroke-width="1"/><text x="1790" y="981.7" font-size="11" fill="#111" text-anchor="middle">avr.</text><path d="M1851.4 966v3" stroke="#6c7986" stroke-width="1"/><text x="1851.4" y="981.7" font-size="11" fill="#111" text-anchor="middle">juil.</text><path d="M1913.9 966v3" stroke="#6c7986" stroke-width="1"/><text x="1913.9" y="981.7" font-size="11" fill="#111" text-anchor="middle">oct.</text><path d="M1975 966v3" stroke="#6c7986" stroke-width="1"/><text x="1975" y="982" font-size="12" font-weight="bold" fill="#111" text-anchor="middle" letter-spacing="-0.1">2013</text><path d="M2035.4 966v3" stroke="#6c7986" stroke-width="1"/><text x="2035.4" y="981.7" font-size="11" fill="#111" text-anchor="middle">avr.</text><path d="M2098 966v3" stroke="#6c7986" stroke-width="1"/><text x="2098" y="981.7" font-size="11" fill="#111" text-anchor="middle">juil.</text><path d="M2161 966v3" stroke="#6c7986" stroke-width="1"/><text x="2161" y="981.7" font-size="11" fill="#111" text-anchor="middle">oct.</text><path d="M2222.6 966v3" stroke="#6c7986" stroke-width="1"/><text x="2222.6" y="982" font-size="12" font-weight="bold" fill="#111" text-anchor="middle" letter-spacing="-0.1">2014</text><path d="M2284 966v3" stroke="#6c7986" stroke-width="1"/><text x="2284" y="981.7" font-size="11" fill="#111" text-anchor="middle">avr.</text><path d="M2346.4 966v3" stroke="#6c7986" stroke-width="1"/><text x="2346.4" y="981.7" font-size="11" fill="#111" text-anchor="middle">juil.</text><path d="M2408.7 966v3" stroke="#6c7986" stroke-width="1"/><text x="2408.7" y="981.7" font-size="11" fill="#111" text-anchor="middle">oct.</text><path d="M2471 966v3" stroke="#6c7986" stroke-width="1"/><text x="2471" y="982" font-size="12" font-weight="bold" fill="#111" text-anchor="middle" letter-spacing="-0.1">2015</text><path d="M2532.6 966v3" stroke="#6c7986" stroke-width="1"/><text x="2532.6" y="981.7" font-size="11" fill="#111" text-anchor="middle">avr.</text><path d="M2595.6 966v3" stroke="#6c7986" stroke-width="1"/><text x="2595.6" y="981.7" font-size="11" fill="#111" text-anchor="middle">juil.</text></svg>
<div style="left:1054px;top:97.5px;width:284px;height:17.5px;box-sizing:border-box;background:linear-gradient(#cfe3ee,#b6d0dd 55%,#a9c6d4);border-right:1px solid #7f9aa8;border-bottom:1px solid #7f9aa8;border-top:1px solid #e2eff5;"></div><div class="t" style="top:99.3px;line-height:14px;left:1058.5px;letter-spacing:-0.08px;">Courbe gains&amp;pertes: Breakout ProOrder actif</div><svg style="left:1285px;top:100px" width="13" height="13" viewBox="0 0 16 16"><path d="M10.2 1.2a4 4 0 0 0-3.4 5.6L1.4 12.2a1.5 1.5 0 0 0 2.2 2.2l5.5-5.4a4 4 0 0 0 5.6-3.5l-0.3-0.9-2.4 2.3-2.2-0.6-0.6-2.2 2.4-2.4z" fill="#fff" stroke="#111" stroke-width="1.2" stroke-linejoin="round"/></svg><svg style="left:1303px;top:100.5px" width="13" height="12" viewBox="0 0 13 12"><rect x="1" y="1" width="11" height="10" rx="1.500" fill="#fff" stroke="#111" stroke-width="1.400"/><path d="M1 2.800h11" stroke="#111" stroke-width="2.200"/></svg><svg style="left:1321px;top:100px" width="13" height="13" viewBox="0 0 13 13"><circle cx="6.500" cy="6.500" r="6" fill="#2a2a2a" stroke="#666" stroke-width="0.800"/><path d="M4 4l5 5M9 4l-5 5" stroke="#fff" stroke-width="1.900"/></svg><div class="t" style="top:99.7px;line-height:14px;left:1342px;">Vente : 5 182,5 Achat : 5 184,5</div><div style="left:1054px;top:427.5px;width:275px;height:18px;box-sizing:border-box;background:linear-gradient(#cfe3ee,#b6d0dd 55%,#a9c6d4);border-right:1px solid #7f9aa8;border-bottom:1px solid #7f9aa8;border-top:1px solid #e2eff5;"></div><div class="t" style="top:429.7px;line-height:14px;left:1058.5px;letter-spacing:-0.08px;">ProBacktest - Positions: Breakout ProOrder actif</div><svg style="left:1294px;top:431px" width="13" height="12" viewBox="0 0 13 12"><rect x="1" y="1" width="11" height="10" rx="1.500" fill="#fff" stroke="#111" stroke-width="1.400"/><path d="M1 2.800h11" stroke="#111" stroke-width="2.200"/></svg><svg style="left:1312px;top:430.5px" width="13" height="13" viewBox="0 0 13 13"><circle cx="6.500" cy="6.500" r="6" fill="#2a2a2a" stroke="#666" stroke-width="0.800"/><path d="M4 4l5 5M9 4l-5 5" stroke="#fff" stroke-width="1.900"/></svg><div class="t" style="top:430.0px;line-height:14px;left:1333px;">Vente : 5 182,5 Achat : 5 184,5</div><div style="left:1054px;top:638.5px;width:116px;height:18px;box-sizing:border-box;background:linear-gradient(#cfe3ee,#b6d0dd 55%,#a9c6d4);border-right:1px solid #7f9aa8;border-bottom:1px solid #7f9aa8;border-top:1px solid #e2eff5;"></div><div class="t" style="top:640.3px;line-height:14px;left:1058.5px;">Prix</div><svg style="left:1081px;top:641px" width="13" height="13" viewBox="0 0 16 16"><path d="M10.2 1.2a4 4 0 0 0-3.4 5.6L1.4 12.2a1.5 1.5 0 0 0 2.2 2.2l5.5-5.4a4 4 0 0 0 5.6-3.5l-0.3-0.9-2.4 2.3-2.2-0.6-0.6-2.2 2.4-2.4z" fill="#fff" stroke="#111" stroke-width="1.2" stroke-linejoin="round"/></svg><svg style="left:1099px;top:641.5px" width="13" height="12" viewBox="0 0 13 12"><rect x="1" y="1" width="11" height="10" rx="1.500" fill="#fff" stroke="#111" stroke-width="1.400"/><path d="M1 2.800h11" stroke="#111" stroke-width="2.200"/></svg><svg style="left:1117px;top:641px" width="13" height="13" viewBox="0 0 13 13"><circle cx="6.500" cy="6.500" r="6" fill="#2a2a2a" stroke="#666" stroke-width="0.800"/><path d="M4 4l5 5M9 4l-5 5" stroke="#fff" stroke-width="1.900"/></svg><svg style="left:1135px;top:641px" width="32" height="13" viewBox="0 0 32 13"><path d="M0.500 0.500h8l3 3v9h-11z" fill="#fff" stroke="#aaa" stroke-width="0.800"/><path d="M4.200 2.500h3v4h2l-3.500 4-3.500-4h2z" fill="#e03030"/><path d="M18.500 0.500h8l3 3v9h-11z" fill="#fff" stroke="#aaa" stroke-width="0.800"/><path d="M22.200 10.500h3v-4h2l-3.500-4-3.500 4h2z" fill="#21b03a"/></svg><div class="t" style="top:640.3px;line-height:14px;left:1174px;">Vente : 5 182,5 Achat : 5 184,5</div>
<div class="t" style="top:951.2px;line-height:14px;left:1056px;">© IT-Finance.com <i>Données indicatives</i></div>
<div class="t" style="top:950.0px;line-height:14px;color:#222;left:1056.5px;">811.5</div>
<div style="left:1054px;top:985px;width:1672px;height:35px;background:linear-gradient(#b9d4e0,#a9c8d6 50%,#9dbdcc);"></div>
<div style="left:1054px;top:985px;width:1672px;height:1px;background:#cfe3ec;"></div>
<svg style="left:1054px;top:985px" width="1672" height="35" viewBox="1054 985 1672 35"><rect x="1060.500" y="998" width="12" height="10" fill="#f7fbff" stroke="#2b5fb5" stroke-width="1.200"/><path d="M1062 1006l3-4 2 2 4-5" fill="none" stroke="#d83a3a" stroke-width="1"/><path d="M1065 1001c2-5 6-6 8-6v-2.500l5.500 5-5.500 5v-2.500c-3 0-5 0-8 1z" fill="#5cc94f" stroke="#2a8a25" stroke-width="0.900"/><path d="M1071.500 1011h6l-3 3z" fill="#111"/><rect x="1085.500" y="994" width="6" height="9" rx="3" fill="#fff" stroke="#111" stroke-width="1.300"/><rect x="1085.500" y="1002" width="6" height="9" rx="3" fill="#fff" stroke="#111" stroke-width="1.300"/><path d="M1099.500 996v13" stroke="#b03030" stroke-width="1"/><rect x="1097.500" y="999.500" width="4" height="6" fill="#e86a6a" stroke="#b03030" stroke-width="0.900"/><path d="M1105 992v14" stroke="#2a8a25" stroke-width="1"/><rect x="1103" y="995.500" width="4" height="7" fill="#5cc94f" stroke="#2a8a25" stroke-width="0.900"/><path d="M1099.500 1011h6l-3 3z" fill="#111"/><rect x="1118.500" y="996.500" width="12" height="13.500" fill="#fff" stroke="#111" stroke-width="1.400"/><path d="M1120 999.500h5l3 2.500h2M1120 1002.500h4l3 2.500h3M1120 1006h8" stroke="#111" stroke-width="1.100" fill="none"/><path d="M1125 997h5v3.500z" fill="#e04a4a"/><path d="M1119 1009.500h4.500l-4.500-4z" fill="#3fae49"/><path d="M1145 997.500h7M1144 1001h8M1146 1004.500h6M1144 1008h8" stroke="#4aa84f" stroke-width="2.600"/><path d="M1153 997.500h6M1153 1001h8M1153 1004.500h8M1153 1008h5" stroke="#c9626a" stroke-width="2.600"/><path d="M1152.500 993.500v17" stroke="#6b6b4a" stroke-width="1.400"/><rect x="1168" y="995.500" width="1444" height="14.500" rx="2" fill="#a3c1cf" stroke="#91b0bf" stroke-width="1"/><rect x="1182" y="996" width="1416" height="6.500" fill="#abc8d5"/><rect x="1168" y="995.500" width="13.500" height="14.500" rx="2.500" fill="#d7e8f0" stroke="#7f9dac" stroke-width="1"/><path d="M1177 999l-4.500 3.800 4.500 3.800z" fill="#111"/><rect x="2598.500" y="995.500" width="13.500" height="14.500" rx="2.500" fill="#d7e8f0" stroke="#7f9dac" stroke-width="1"/><path d="M2603 999l4.500 3.800-4.500 3.800z" fill="#111"/><path d="M2623.500 1000v13M2631.500 993v20" stroke="#333" stroke-width="1"/><rect x="2620.500" y="1003.500" width="6" height="7.500" fill="#d9575c" stroke="#444" stroke-width="1"/><rect x="2628.500" y="995.500" width="6" height="15" fill="#4fae55" stroke="#3a7a3e" stroke-width="1"/><path d="M2621.500 1010.500l8-8.500a3.300 3.300 0 0 1 3.600-4.600l-1.800 2.200 0.500 1.700 1.800 0.400 1.800-2a3.300 3.300 0 0 1-4.400 4l-7.800 8.300a1.300 1.300 0 0 1-1.700-1.500z" fill="#fff" stroke="#222" stroke-width="1" stroke-linejoin="round"/><rect x="2643.500" y="990" width="25" height="24.500" rx="2" fill="#8fabb9"/><path d="M2657 1004l6.500 6" stroke="#111" stroke-width="3" stroke-linecap="round"/><circle cx="2653" cy="1000" r="5" fill="#f4f6f8" stroke="#444" stroke-width="1.500"/><path d="M2665 993v11M2665 992.500l-2.200 3h4.400zM2665 1004.500l-2.200-3h4.400z" stroke="#1a2ad8" fill="#1a2ad8" stroke-width="0.900"/><path d="M2647 1010.500h9M2646.500 1010.500l3-2.200v4.400zM2656.500 1010.500l-3-2.200v4.400z" stroke="#1a2ad8" fill="#1a2ad8" stroke-width="0.900"/><path d="M2685 1004l6.500 6" stroke="#111" stroke-width="3" stroke-linecap="round"/><circle cx="2681" cy="1000" r="5" fill="#f4f6f8" stroke="#444" stroke-width="1.500"/><path d="M2678.2 1000h5.600" stroke="#1a2ad8" stroke-width="1.500"/><path d="M2713 1004l6.500 6" stroke="#111" stroke-width="3" stroke-linecap="round"/><circle cx="2709" cy="1000" r="5" fill="#f4f6f8" stroke="#444" stroke-width="1.500"/><path d="M2706.2 1000h5.600M2709 997.2v5.600" stroke="#1a2ad8" stroke-width="1.500"/></svg>
<div style="left:1050px;top:1020px;width:1680px;height:30px;background:linear-gradient(#8da4bd,#7f97b2 45%,#738ba8 55%,#7c94b0);"></div><div style="left:1050px;top:1020px;width:1680px;height:1px;background:#5d7186;"></div><div style="left:1050px;top:1021px;width:1680px;height:1px;background:#b6c6d8;"></div><svg style="left:1058px;top:1014px" width="38" height="38" viewBox="0 0 38 38"><defs><radialGradient id="orb" cx="50%" cy="35%" r="65%"><stop offset="0" stop-color="#7fc0ee"/><stop offset="0.55" stop-color="#2d6fb8"/><stop offset="1" stop-color="#123a7a"/></radialGradient></defs><circle cx="19" cy="19" r="17.500" fill="url(#orb)" stroke="#2b4d78" stroke-width="1"/><ellipse cx="19" cy="10.500" rx="12.500" ry="7" fill="rgba(255,255,255,.28)"/><path d="M10.500 13.500c2.500-1.500 5-1.600 7.500-0.300l-1.300 5.300c-2.500-1.200-5-1-7.500 0.400z" fill="#e8552a"/><path d="M19.500 13.600c2.500 1.200 5 1 7.500-0.400l-1.300 5.300c-2.500 1.400-5 1.600-7.500 0.300z" fill="#8cc63f"/><path d="M9 20c2.500-1.400 5-1.600 7.500-0.300l-1.300 5.300c-2.500-1.300-5-1.200-7.500 0.300z" fill="#2fa3e6"/><path d="M18 20.200c2.500 1.200 5 1 7.500-0.400l-1.300 5.300c-2.500 1.500-5 1.600-7.500 0.400z" fill="#fbc11a"/></svg><div style="left:1110px;top:1021.5px;width:101.5px;height:27.5px;box-sizing:border-box;border:1px solid #5a6e85;border-radius:3px;background:linear-gradient(#aebdd0,#98abc2 48%,#8a9fb8 52%,#90a4bc);box-shadow:inset 0 0 0 1px rgba(255,255,255,.35);"></div><div style="left:1118px;top:1027px;width:17px;height:16px;background:#3a3a3a;border-radius:2px;"><div style="left:2px;top:0;width:13px;height:16px;color:#fff;font-weight:bold;font-size:12px;line-height:16px;text-align:center;">✕</div></div><div class="t" style="top:1028.2px;line-height:14px;font-size:12px;color:#fff;left:1137px;letter-spacing:-0.45px;">877270: XT...</div><div style="left:1215px;top:1021.5px;width:101.5px;height:27.5px;box-sizing:border-box;border:1px solid #5a6e85;border-radius:3px;background:linear-gradient(#aebdd0,#98abc2 48%,#8a9fb8 52%,#90a4bc);box-shadow:inset 0 0 0 1px rgba(255,255,255,.35);"></div><div style="left:1223px;top:1027px;width:17px;height:16px;background:#2b2b2b;"><div style="left:0;top:0;width:17px;height:16px;color:#fff;font-size:8px;line-height:17px;text-align:center;letter-spacing:-0.4px;">JFD</div></div><div class="t" style="top:1028.2px;line-height:14px;font-size:12px;color:#fff;left:1242px;letter-spacing:-0.45px;">90532: JFD...</div><div style="left:1320px;top:1021.5px;width:101.5px;height:27.5px;box-sizing:border-box;border:1px solid #5a6e85;border-radius:3px;background:linear-gradient(#aebdd0,#98abc2 48%,#8a9fb8 52%,#90a4bc);box-shadow:inset 0 0 0 1px rgba(255,255,255,.35);"></div><div style="left:1328px;top:1027px;width:16px;height:16px;background:#c4161c;border:1px dotted #e9a0a0;box-sizing:border-box;"><div style="left:0;top:0;width:14px;height:14px;color:#fff;font-weight:bold;font-style:italic;font-size:12px;line-height:14px;text-align:center;">Fz</div></div><div class="t" style="top:1028.2px;line-height:14px;font-size:12px;color:#fff;left:1347px;letter-spacing:-0.45px;">VideoBour...</div><div style="left:1425px;top:1021.5px;width:205px;height:27.5px;box-sizing:border-box;border:1px solid #5a6e85;border-radius:3px;background:linear-gradient(#aebdd0,#98abc2 48%,#8a9fb8 52%,#90a4bc);box-shadow:inset 0 0 0 1px rgba(255,255,255,.35);"></div><div style="left:1527px;top:1023px;width:1px;height:24.5px;background:rgba(90,110,133,.55);"></div><svg style="left:1433px;top:1027px" width="16" height="16" viewBox="0 0 16 16"><circle cx="8" cy="8" r="7.500" fill="#e8453c"/><path d="M8 8L1.600 4.200A7.500 7.500 0 0 0 7 15.400z" fill="#34a853"/><path d="M8 8L7 15.400A7.500 7.500 0 0 0 14.900 5z" fill="#fbc116"/><circle cx="8" cy="8" r="3.400" fill="#fff"/><circle cx="8" cy="8" r="2.600" fill="#4a8af4"/></svg><div class="t" style="top:1028.2px;line-height:14px;font-size:12px;color:#fff;left:1453px;letter-spacing:-0.45px;">Contact Vi...</div><svg style="left:1536px;top:1027px" width="16" height="16" viewBox="0 0 16 16"><circle cx="8" cy="8" r="7.500" fill="#e8453c"/><path d="M8 8L1.600 4.200A7.500 7.500 0 0 0 7 15.400z" fill="#34a853"/><path d="M8 8L7 15.400A7.500 7.500 0 0 0 14.900 5z" fill="#fbc116"/><circle cx="8" cy="8" r="3.400" fill="#fff"/><circle cx="8" cy="8" r="2.600" fill="#4a8af4"/></svg><div class="t" style="top:1028.2px;line-height:14px;font-size:12px;color:#fff;left:1555px;letter-spacing:-0.45px;">VideoBour...</div><svg style="left:1643px;top:1026px" width="18" height="18" viewBox="0 0 18 18"><rect x="1" y="2" width="9" height="8" fill="#8ed0c0" stroke="#5aa898" stroke-width="0.800"/><rect x="4" y="4.500" width="9" height="8" fill="#bfe6a8" stroke="#7fb870" stroke-width="0.800"/><rect x="7" y="7.500" width="9.500" height="8.500" fill="#f7e27a" stroke="#c9a93a" stroke-width="0.800"/></svg><div style="left:1674px;top:1021.5px;width:100px;height:27.5px;box-sizing:border-box;border:1px solid #5a6e85;border-radius:3px;background:linear-gradient(#aebdd0,#98abc2 48%,#8a9fb8 52%,#90a4bc);box-shadow:inset 0 0 0 1px rgba(255,255,255,.35);"></div><svg style="left:1682px;top:1027px" width="17" height="17" viewBox="0 0 17 17"><circle cx="8.500" cy="8.500" r="8" fill="#1ab0ee"/><text x="8.500" y="13" font-size="12.500" font-weight="bold" fill="#fff" text-anchor="middle">S</text></svg><div class="t" style="top:1028.2px;line-height:14px;font-size:12px;color:#fff;left:1701px;letter-spacing:-0.45px;">Skype™ [7]...</div><div style="left:1778px;top:1021.5px;width:100px;height:27.5px;box-sizing:border-box;border:1px solid #5a6e85;border-radius:3px;background:linear-gradient(#aebdd0,#98abc2 48%,#8a9fb8 52%,#90a4bc);box-shadow:inset 0 0 0 1px rgba(255,255,255,.35);"></div><svg style="left:1786px;top:1027px" width="18" height="16" viewBox="0 0 18 16"><rect x="3" y="1" width="14" height="10" fill="#1f2f2a" stroke="#d9d9d9" stroke-width="1"/><path d="M4.500 8l3-3 2 2 3-4 3 3" fill="none" stroke="#4de04d" stroke-width="1"/><path d="M7 13.500h6M1 5v9" stroke="#d0d0d0" stroke-width="1.500"/></svg><div class="t" style="top:1028.2px;line-height:14px;font-size:12px;color:#fff;left:1805px;letter-spacing:-0.45px;">Gestionnai...</div><div style="left:1882px;top:1021.5px;width:408.5px;height:27.5px;box-sizing:border-box;border:1px solid #5a6e85;border-radius:3px;background:linear-gradient(#aebdd0,#98abc2 48%,#8a9fb8 52%,#90a4bc);box-shadow:inset 0 0 0 1px rgba(255,255,255,.35);"></div><div style="left:2086px;top:1021.5px;width:102.5px;height:27.5px;box-sizing:border-box;border:1px solid #5a6e85;border-radius:3px;background:linear-gradient(#d3dde8,#bfcddb 48%,#b0c0d1 52%,#b9c8d7);box-shadow:inset 0 0 0 1px rgba(255,255,255,.5);"></div><div style="left:1983.5px;top:1023px;width:1px;height:24.5px;background:rgba(90,110,133,.55);"></div><svg style="left:1889px;top:1026.5px" width="18" height="18" viewBox="0 0 18 18"><path d="M3.5 5.5v10" stroke="#111" stroke-width="1.4"/><rect x="0.8" y="8" width="5.4" height="5.6" fill="#6e6e78" stroke="#111" stroke-width="1.4"/><path d="M11.5 0.5v16" stroke="#4c8f12" stroke-width="1.3"/><rect x="8.8" y="3.6" width="5.6" height="9.2" fill="#8fe02b" stroke="#5aa516" stroke-width="1.3"/></svg><div class="t" style="top:1028.2px;line-height:14px;font-size:12px;color:#fff;left:1909px;letter-spacing:-0.45px;">ProRealTi...</div><svg style="left:1991px;top:1026.5px" width="18" height="18" viewBox="0 0 18 18"><path d="M3.5 5.5v10" stroke="#111" stroke-width="1.4"/><rect x="0.8" y="8" width="5.4" height="5.6" fill="#6e6e78" stroke="#111" stroke-width="1.4"/><path d="M11.5 0.5v16" stroke="#4c8f12" stroke-width="1.3"/><rect x="8.8" y="3.6" width="5.6" height="9.2" fill="#8fe02b" stroke="#5aa516" stroke-width="1.3"/></svg><div class="t" style="top:1028.2px;line-height:14px;font-size:12px;color:#fff;left:2011px;letter-spacing:-0.45px;">ProOrder ...</div><svg style="left:2093.5px;top:1026.5px" width="18" height="18" viewBox="0 0 18 18"><path d="M3.5 5.5v10" stroke="#111" stroke-width="1.4"/><rect x="0.8" y="8" width="5.4" height="5.6" fill="#6e6e78" stroke="#111" stroke-width="1.4"/><path d="M11.5 0.5v16" stroke="#4c8f12" stroke-width="1.3"/><rect x="8.8" y="3.6" width="5.6" height="9.2" fill="#8fe02b" stroke="#5aa516" stroke-width="1.3"/></svg><div class="t" style="top:1028.2px;line-height:14px;font-size:12px;color:#fff;left:2113.5px;letter-spacing:-0.45px;">PXI - Franc...</div><svg style="left:2196px;top:1026.5px" width="18" height="18" viewBox="0 0 18 18"><path d="M3.5 5.5v10" stroke="#111" stroke-width="1.4"/><rect x="0.8" y="8" width="5.4" height="5.6" fill="#6e6e78" stroke="#111" stroke-width="1.4"/><path d="M11.5 0.5v16" stroke="#4c8f12" stroke-width="1.3"/><rect x="8.8" y="3.6" width="5.6" height="9.2" fill="#8fe02b" stroke="#5aa516" stroke-width="1.3"/></svg><div class="t" style="top:1028.2px;line-height:14px;font-size:12px;color:#fff;left:2216px;letter-spacing:-0.45px;">Rapport d...</div><svg style="left:0;top:1020px" width="2730" height="30" viewBox="0 1020 2730 30"><path d="M2301 1029.500l6-1v6h-6zM2308 1028.300l7-1.200v7.400h-7zM2301 1035.500h6v6l-6-1zM2308 1035.500h7v7.400l-7-1.200z" fill="#fff"/><path d="M2325 1040c2-6 6-10 13-11-3 2-4 4-4 6 0 3-4 6-9 5z" fill="#d8402a"/><path d="M2327 1041c4 1 9-1 12-5" fill="none" stroke="#3a7fd0" stroke-width="2.200"/><path d="M2351.500 1032v10" stroke="#111" stroke-width="1.300"/><rect x="2349" y="1034.500" width="5" height="5.500" fill="#6e6e78" stroke="#111" stroke-width="1.200"/><path d="M2359.500 1027v16" stroke="#4c8f12" stroke-width="1.200"/><rect x="2357" y="1030" width="5" height="9" fill="#8fe02b" stroke="#5aa516" stroke-width="1.200"/><circle cx="2380.500" cy="1036" r="6.500" fill="#e8453c"/><path d="M2380.500 1036l-5.600-3.300a6.500 6.500 0 0 0 4.700 9.700z" fill="#34a853"/><path d="M2380.500 1036l-0.900 6.400a6.500 6.500 0 0 0 6.900-9z" fill="#fbc116"/><circle cx="2380.500" cy="1036" r="2.900" fill="#fff"/><circle cx="2380.500" cy="1036" r="2.200" fill="#4a8af4"/><circle cx="2405" cy="1037" r="5.800" fill="#f5c21a" stroke="#b98a10" stroke-width="0.800"/><text x="2405" y="1040.500" font-size="8.500" font-weight="bold" fill="#222" text-anchor="middle">7</text><path d="M2398 1031l4-2" stroke="#5a9a2a" stroke-width="2"/><rect x="2421.500" y="1028.500" width="13" height="14" fill="#b8161a"/><path d="M2423.500 1040c3-2 6-7 5-10M2424 1036c3-1 7-2 10-1" fill="none" stroke="#fff" stroke-width="1.100"/><rect x="2445.500" y="1028.500" width="13" height="14" fill="#c4161c"/><path d="M2448 1040l3.800-9h1.400l3.800 9h-2l-2.500-6-1.200 3h1.500l0.600 1.500h-2.700l-0.700 1.500z" fill="#fff"/><path d="M2470 1031l7-3 6 3v8l-6 4-7-4z" fill="#2fa84a"/><path d="M2472.500 1036l3 3 5.500-6.500" fill="none" stroke="#fff" stroke-width="2"/><rect x="2493.500" y="1029.500" width="14" height="12" fill="#f2d86a" stroke="#8a8a5a" stroke-width="0.800"/><path d="M2493.500 1033.500h14M2493.500 1037.500h14M2498 1029.500v12M2503 1029.500v12" stroke="#7a8ab0" stroke-width="0.900"/><rect x="2495" y="1027.500" width="10" height="4" fill="#d8a83a"/><circle cx="2524" cy="1034.500" r="5.200" fill="#eaf3ea" stroke="#5aa05a" stroke-width="1.300"/><path d="M2521.500 1034.500l2 2 3.500-4" fill="none" stroke="#2f8f3a" stroke-width="1.400"/><path d="M2520 1039l-1.500 5 3-1.500M2528 1039l1.500 5-3-1.500" fill="none" stroke="#5aa05a" stroke-width="1.300"/><rect x="2542" y="1029.500" width="12" height="12" fill="#1f7a2a" stroke="#0f4f18" stroke-width="1"/><path d="M2544 1032h8M2544 1034.500h8M2544 1037h8M2544 1039.500h8" stroke="#3fae49" stroke-width="0.800"/><path d="M2567.500 1028v15" stroke="#fff" stroke-width="1.500"/><path d="M2568.500 1029c3-1.500 5 1.500 8 0v6c-3 1.500-5-1.500-8 0z" fill="#fff"/><circle cx="2577" cy="1040" r="4.200" fill="#d8262a" stroke="#fff" stroke-width="0.800"/><path d="M2575.200 1038.200l3.600 3.600M2578.800 1038.200l-3.600 3.600" stroke="#fff" stroke-width="1.200"/><rect x="2593.500" y="1031.500" width="10" height="8" fill="#4a5a6a" stroke="#fff" stroke-width="1.200"/><path d="M2598.500 1039.500v3M2595 1043h7M2591 1028v12M2589.500 1028.500h3" stroke="#fff" stroke-width="1.300"/><path d="M2614 1034h3l3.500-3.500v11l-3.500-3.500h-3z" fill="#fff"/><path d="M2622.500 1033.500c1.200 1.500 1.200 3.500 0 5M2625 1031.500c2.200 2.700 2.200 6.300 0 9" fill="none" stroke="#fff" stroke-width="1.100"/></svg><div class="t" style="top:1028.2px;line-height:14px;font-size:12px;color:#fff;left:2375px;width:600px;text-align:center;">18:05</div><div style="left:2713.5px;top:1021.5px;width:16.5px;height:28px;box-sizing:border-box;border-left:1px solid #5a6e85;background:linear-gradient(90deg,#9fb2c8,#7f96b0);box-shadow:inset 1px 0 0 rgba(255,255,255,.4);"></div>
</div></body></html>
